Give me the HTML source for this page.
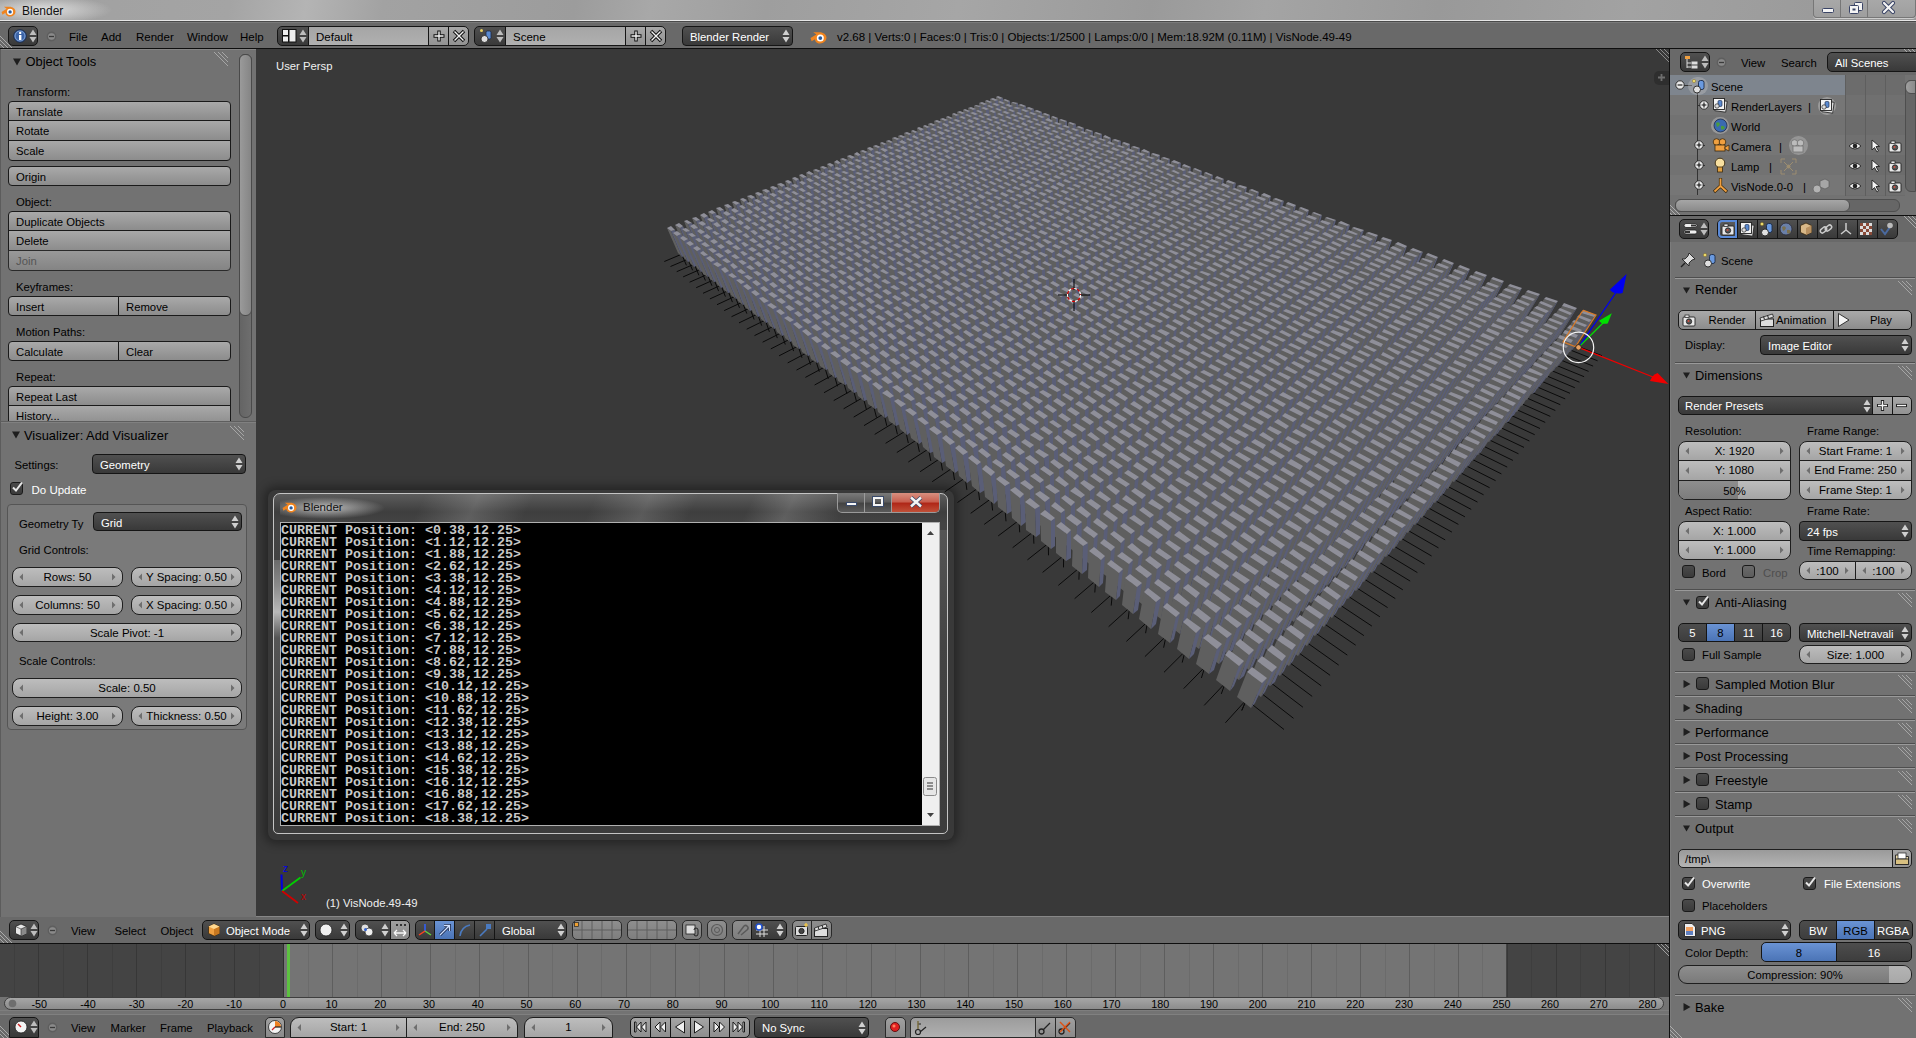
<!DOCTYPE html>
<html><head><meta charset="utf-8"><style>
html,body{margin:0;padding:0;width:1916px;height:1038px;overflow:hidden;background:#727272;}
body{position:relative;font-family:"Liberation Sans", sans-serif;}
div{position:absolute;}
.t{white-space:nowrap;line-height:1;}
body{-webkit-font-smoothing:antialiased;}
</style></head><body>
<div style="left:0px;top:0px;width:1916px;height:21px;background:linear-gradient(100deg,#a0a0a0 0%,#a4a4a4 12%,#b4b4b4 16%,#a2a2a2 20%,#9c9c9c 30%,#a8a8a8 34%,#9e9e9e 40%,#a6a6a6 50%,#9a9a9a 60%,#a4a4a4 66%,#999 75%,#a2a2a2 85%,#979797 100%);"></div>
<div style="left:0px;top:0px;width:140px;height:20px;background:radial-gradient(ellipse 70px 14px at 42px 10px,rgba(235,235,235,0.85),rgba(235,235,235,0) 100%);"></div>
<div style="left:0px;top:20px;width:1916px;height:1px;background:#e6e6e6;"></div>
<div style="left:0px;top:21px;width:1916px;height:1px;background:#4a4a4a;"></div>
<div style="left:0px;top:22px;width:1916px;height:1px;background:#7a7a7a;"></div>
<div style="left:0px;top:23px;width:1916px;height:25px;background:#696969;"></div>
<div style="left:0px;top:48px;width:1916px;height:1px;background:#0e0e0e;"></div>
<div style="left:0px;top:49px;width:256px;height:868px;background:#727272;"></div>
<div style="left:0px;top:49px;width:1px;height:868px;background:#5c5c5c;"></div>
<div style="left:256px;top:49px;width:1413px;height:868px;background:#393939;"></div>
<div style="left:1669px;top:49px;width:1px;height:989px;background:#101010;"></div>
<div style="left:1670px;top:49px;width:246px;height:989px;background:#727272;"></div>
<div style="left:0px;top:917px;width:1669px;height:26px;background:#696969;"></div>
<div style="left:0px;top:916px;width:1669px;height:1px;background:#878787;"></div>
<div style="left:0px;top:943px;width:1669px;height:1px;background:#0e0e0e;"></div>
<div style="left:0px;top:944px;width:1669px;height:53px;background:#747474;"></div>
<div style="left:0px;top:944px;width:284px;height:53px;background:#444;"></div>
<div style="left:1506px;top:944px;width:163px;height:53px;background:#444;"></div>
<div style="left:0px;top:1015px;width:1669px;height:23px;background:#696969;"></div>
<svg style="position:absolute;left:1px;top:4px" width="15" height="13" viewBox="0 0 16 14"><path d="M0.5 8.5 L6 5 L3 3 L8 3 C12 2.5 15.5 5 15.5 8 C15.5 11.5 12.5 13.5 9.5 13.5 C6.5 13.5 4.5 11.5 4.8 9.5 L1.5 11.5Z" fill="#f0841e"/><circle cx="9.7" cy="8.5" r="3.3" fill="#fff"/><circle cx="9.7" cy="8.5" r="1.8" fill="#2a5a9a"/></svg>
<div class="t" style="left:22px;top:4.84px;font-size:12px;color:#111;">Blender</div>
<div style="left:1813px;top:0px;width:103px;height:18px;box-sizing:border-box;border:1px solid #777;border-top:none;border-radius:0 0 4px 4px;background:linear-gradient(#a8a8a8,#9e9e9e);box-shadow:0 1px 0 rgba(255,255,255,0.5);"></div>
<div style="left:1840px;top:0px;width:1px;height:17px;background:#777;"></div>
<div style="left:1867px;top:0px;width:1px;height:17px;background:#777;"></div>
<svg style="position:absolute;left:1813px;top:0px" width="103" height="18"><rect x="9.5" y="8.5" width="11" height="4" rx="1" fill="#f4f4f4" stroke="#3a4466" stroke-width="1"/><rect x="41.5" y="2.5" width="8" height="8" rx="1" fill="#f4f4f4" stroke="#3a4466" stroke-width="1"/><rect x="36.5" y="5.5" width="9" height="8" rx="1" fill="#f4f4f4" stroke="#3a4466" stroke-width="1"/><rect x="39.5" y="8.5" width="3" height="2" fill="#3a4466"/><path d="M71 3 L80 12 M80 3 L71 12" stroke="#3a4466" stroke-width="4.2" stroke-linecap="round"/><path d="M71 3 L80 12 M80 3 L71 12" stroke="#f4f4f4" stroke-width="2.2" stroke-linecap="round"/></svg>
<div style="left:8px;top:26px;width:30px;height:20px;box-sizing:border-box;border:1px solid #151515;background:linear-gradient(#505050,#393939);border-radius:5px 5px 5px 5px;"></div>
<svg style="position:absolute;left:13px;top:29px" width="14" height="14"><circle cx="7" cy="7" r="6.3" fill="#3b63a6" stroke="#1b2b4a" stroke-width="1"/><circle cx="7" cy="7" r="5" fill="none" stroke="#8fb0e0" stroke-width="0.8"/><rect x="6" y="6" width="2.4" height="5" fill="#fff"/><circle cx="7.2" cy="3.9" r="1.2" fill="#fff"/></svg>
<svg style="position:absolute;left:29px;top:29px" width="8" height="14"><path d="M0.5 6 L4 0.5 L7.5 6Z M0.5 8 L4 13.5 L7.5 8Z" fill="#bdbdbd"/></svg>
<svg style="position:absolute;left:46px;top:31px" width="11" height="11"><circle cx="5.5" cy="5.5" r="4.3" fill="none" stroke="#5e5e5e" stroke-width="1.2"/><circle cx="5.5" cy="5.5" r="3.3" fill="#8a8a8a"/><path d="M3 5.5 H8" stroke="#3a3a3a" stroke-width="1.3"/></svg>
<div class="t" style="left:69px;top:32.27px;font-size:11.5px;color:#000;">File</div>
<div class="t" style="left:101px;top:32.27px;font-size:11.5px;color:#000;">Add</div>
<div class="t" style="left:136px;top:32.27px;font-size:11.5px;color:#000;">Render</div>
<div class="t" style="left:187px;top:32.27px;font-size:11.5px;color:#000;">Window</div>
<div class="t" style="left:240px;top:32.27px;font-size:11.5px;color:#000;">Help</div>
<div style="left:277px;top:26px;width:32px;height:20px;box-sizing:border-box;border:1px solid #151515;background:linear-gradient(#505050,#393939);border-radius:5px 0px 0px 5px;"></div>
<svg style="position:absolute;left:282px;top:29px" width="15" height="14"><rect x="0.5" y="0.5" width="6" height="6" fill="#eee" stroke="#111"/><rect x="0.5" y="7" width="6" height="6" fill="#eee" stroke="#111"/><rect x="7" y="0.5" width="7" height="12.5" fill="#eee" stroke="#111"/></svg>
<svg style="position:absolute;left:299px;top:29px" width="8" height="14"><path d="M0.5 6 L4 0.5 L7.5 6Z M0.5 8 L4 13.5 L7.5 8Z" fill="#bdbdbd"/></svg>
<div style="left:308px;top:26px;width:121px;height:20px;box-sizing:border-box;border:1px solid #151515;background:linear-gradient(#a5a5a5,#b0b0b0);border-radius:0px 0px 0px 0px;"></div>
<div class="t" style="left:316px;top:32.27px;font-size:11.5px;color:#000;">Default</div>
<div style="left:428px;top:26px;width:21px;height:20px;box-sizing:border-box;border:1px solid #151515;background:linear-gradient(#a8a8a8,#929292);border-radius:0px 0px 0px 0px;"></div>
<div style="left:448px;top:26px;width:21px;height:20px;box-sizing:border-box;border:1px solid #151515;background:linear-gradient(#a8a8a8,#929292);border-radius:0px 5px 5px 0px;"></div>
<svg style="position:absolute;left:432px;top:29px" width="14" height="14"><path d="M7 1.5 V12.5 M1.5 7 H12.5" stroke="#111" stroke-width="3.4"/><path d="M7 2.5 V11.5 M2.5 7 H11.5" stroke="#f4f4f4" stroke-width="1.4"/></svg>
<svg style="position:absolute;left:452px;top:29px" width="14" height="14"><path d="M2 2 L12 12 M12 2 L2 12" stroke="#111" stroke-width="3.4"/><path d="M2.5 2.5 L11.5 11.5 M11.5 2.5 L2.5 11.5" stroke="#f4f4f4" stroke-width="1.4"/></svg>
<div style="left:474px;top:26px;width:32px;height:20px;box-sizing:border-box;border:1px solid #151515;background:linear-gradient(#505050,#393939);border-radius:5px 0px 0px 5px;"></div>
<svg style="position:absolute;left:479px;top:28px" width="16" height="16"><circle cx="2.5" cy="2.5" r="1.5" fill="#e8d060"/><rect x="7" y="3" width="5" height="8" rx="1.5" fill="#5a8ad0" stroke="#1a2a4a" stroke-width="0.8"/><circle cx="5.5" cy="11" r="3.5" fill="#ddd" stroke="#222" stroke-width="0.8"/></svg>
<svg style="position:absolute;left:496px;top:29px" width="8" height="14"><path d="M0.5 6 L4 0.5 L7.5 6Z M0.5 8 L4 13.5 L7.5 8Z" fill="#bdbdbd"/></svg>
<div style="left:505px;top:26px;width:121px;height:20px;box-sizing:border-box;border:1px solid #151515;background:linear-gradient(#a5a5a5,#b0b0b0);border-radius:0px 0px 0px 0px;"></div>
<div class="t" style="left:513px;top:32.27px;font-size:11.5px;color:#000;">Scene</div>
<div style="left:625px;top:26px;width:21px;height:20px;box-sizing:border-box;border:1px solid #151515;background:linear-gradient(#a8a8a8,#929292);border-radius:0px 0px 0px 0px;"></div>
<div style="left:645px;top:26px;width:21px;height:20px;box-sizing:border-box;border:1px solid #151515;background:linear-gradient(#a8a8a8,#929292);border-radius:0px 5px 5px 0px;"></div>
<svg style="position:absolute;left:629px;top:29px" width="14" height="14"><path d="M7 1.5 V12.5 M1.5 7 H12.5" stroke="#111" stroke-width="3.4"/><path d="M7 2.5 V11.5 M2.5 7 H11.5" stroke="#f4f4f4" stroke-width="1.4"/></svg>
<svg style="position:absolute;left:649px;top:29px" width="14" height="14"><path d="M2 2 L12 12 M12 2 L2 12" stroke="#111" stroke-width="3.4"/><path d="M2.5 2.5 L11.5 11.5 M11.5 2.5 L2.5 11.5" stroke="#f4f4f4" stroke-width="1.4"/></svg>
<div style="left:682px;top:26px;width:111px;height:20px;box-sizing:border-box;border:1px solid #151515;background:linear-gradient(#505050,#393939);border-radius:4px 4px 4px 4px;"></div>
<div class="t" style="left:690px;top:32.43px;font-size:11.3px;color:#fff;">Blender Render</div>
<svg style="position:absolute;left:782px;top:29.0px" width="8" height="14"><path d="M0.5 6 L4 0.5 L7.5 6Z M0.5 8 L4 13.5 L7.5 8Z" fill="#d0d0d0"/></svg>
<svg style="position:absolute;left:810px;top:29px" width="17" height="15" viewBox="0 0 16 14"><path d="M0.5 8.5 L6 5 L3 3 L8 3 C12 2.5 15.5 5 15.5 8 C15.5 11.5 12.5 13.5 9.5 13.5 C6.5 13.5 4.5 11.5 4.8 9.5 L1.5 11.5Z" fill="#f0841e"/><circle cx="9.7" cy="8.5" r="3.3" fill="#fff"/><circle cx="9.7" cy="8.5" r="1.8" fill="#2a5a9a"/></svg>
<div class="t" style="left:837px;top:32.27px;font-size:11.5px;color:#000;">v2.68 | Verts:0 | Faces:0 | Tris:0 | Objects:1/2500 | Lamps:0/0 | Mem:18.92M (0.11M) | VisNode.49-49</div>
<svg style="position:absolute;left:0px;top:34px" width="14" height="14"><path d="M0 2 L12 14 M0 6 L8 14 M0 10 L4 14" stroke="#c8c8c8" stroke-width="1" opacity="0.7"/></svg>
<div style="left:1px;top:49px;width:255px;height:1px;background:#858585;"></div>
<svg style="position:absolute;left:13px;top:58px" width="8" height="8"><path d="M0 0.5 L8 0.5 L4.0 7.5Z" fill="#1e1e1e"/></svg>
<div class="t" style="left:25.5px;top:56.08px;font-size:12.9px;color:#000;">Object Tools</div>
<svg style="position:absolute;left:214px;top:52px" width="15" height="15"><path d="M0 0 L14 14" stroke="rgba(210,210,210,0.55)" stroke-width="1"/><path d="M4 0 L14 10" stroke="rgba(210,210,210,0.55)" stroke-width="1"/><path d="M8 0 L14 6" stroke="rgba(210,210,210,0.55)" stroke-width="1"/></svg>
<div class="t" style="left:16px;top:87.43px;font-size:11.3px;color:#000;">Transform:</div>
<div style="left:8px;top:101px;width:223px;height:20px;box-sizing:border-box;border:1px solid #1a1a1a;background:linear-gradient(#a9a9a9,#8c8c8c);border-radius:4px 4px 0px 0px;"></div>
<div class="t" style="left:16px;top:107.43px;font-size:11.3px;color:#000;">Translate</div>
<div style="left:8px;top:120px;width:223px;height:21px;box-sizing:border-box;border:1px solid #1a1a1a;background:linear-gradient(#a9a9a9,#8c8c8c);border-radius:0px 0px 0px 0px;"></div>
<div class="t" style="left:16px;top:126.43px;font-size:11.3px;color:#000;">Rotate</div>
<div style="left:8px;top:140px;width:223px;height:21px;box-sizing:border-box;border:1px solid #1a1a1a;background:linear-gradient(#a9a9a9,#8c8c8c);border-radius:0px 0px 4px 4px;"></div>
<div class="t" style="left:16px;top:146.43px;font-size:11.3px;color:#000;">Scale</div>
<div style="left:8px;top:166px;width:223px;height:20px;box-sizing:border-box;border:1px solid #1a1a1a;background:linear-gradient(#a9a9a9,#8c8c8c);border-radius:4px 4px 4px 4px;"></div>
<div class="t" style="left:16px;top:172.43px;font-size:11.3px;color:#000;">Origin</div>
<div class="t" style="left:16px;top:197.43px;font-size:11.3px;color:#000;">Object:</div>
<div style="left:8px;top:211px;width:223px;height:20px;box-sizing:border-box;border:1px solid #1a1a1a;background:linear-gradient(#a9a9a9,#8c8c8c);border-radius:4px 4px 0px 0px;"></div>
<div class="t" style="left:16px;top:217.43px;font-size:11.3px;color:#000;">Duplicate Objects</div>
<div style="left:8px;top:230px;width:223px;height:21px;box-sizing:border-box;border:1px solid #1a1a1a;background:linear-gradient(#a9a9a9,#8c8c8c);border-radius:0px 0px 0px 0px;"></div>
<div class="t" style="left:16px;top:236.43px;font-size:11.3px;color:#000;">Delete</div>
<div style="left:8px;top:250px;width:223px;height:21px;box-sizing:border-box;border:1px solid #2a2a2a;background:linear-gradient(#999,#848484);border-radius:0px 0px 4px 4px;"></div>
<div class="t" style="left:16px;top:256.43px;font-size:11.3px;color:#555;">Join</div>
<div class="t" style="left:16px;top:282.43px;font-size:11.3px;color:#000;">Keyframes:</div>
<div style="left:8px;top:296px;width:111px;height:20px;box-sizing:border-box;border:1px solid #1a1a1a;background:linear-gradient(#a9a9a9,#8c8c8c);border-radius:4px 0px 0px 4px;"></div>
<div class="t" style="left:16px;top:302.43px;font-size:11.3px;color:#000;">Insert</div>
<div style="left:118px;top:296px;width:113px;height:20px;box-sizing:border-box;border:1px solid #1a1a1a;background:linear-gradient(#a9a9a9,#8c8c8c);border-radius:0px 4px 4px 0px;"></div>
<div class="t" style="left:126px;top:302.43px;font-size:11.3px;color:#000;">Remove</div>
<div class="t" style="left:16px;top:327.43px;font-size:11.3px;color:#000;">Motion Paths:</div>
<div style="left:8px;top:341px;width:111px;height:20px;box-sizing:border-box;border:1px solid #1a1a1a;background:linear-gradient(#a9a9a9,#8c8c8c);border-radius:4px 0px 0px 4px;"></div>
<div class="t" style="left:16px;top:347.43px;font-size:11.3px;color:#000;">Calculate</div>
<div style="left:118px;top:341px;width:113px;height:20px;box-sizing:border-box;border:1px solid #1a1a1a;background:linear-gradient(#a9a9a9,#8c8c8c);border-radius:0px 4px 4px 0px;"></div>
<div class="t" style="left:126px;top:347.43px;font-size:11.3px;color:#000;">Clear</div>
<div class="t" style="left:16px;top:372.43px;font-size:11.3px;color:#000;">Repeat:</div>
<div style="left:8px;top:386px;width:223px;height:20px;box-sizing:border-box;border:1px solid #1a1a1a;background:linear-gradient(#a9a9a9,#8c8c8c);border-radius:4px 4px 0px 0px;"></div>
<div class="t" style="left:16px;top:392.43px;font-size:11.3px;color:#000;">Repeat Last</div>
<div style="left:8px;top:405px;width:223px;height:21px;box-sizing:border-box;border:1px solid #1a1a1a;background:linear-gradient(#a9a9a9,#8c8c8c);border-radius:0px 0px 0px 0px;"></div>
<div class="t" style="left:16px;top:411.43px;font-size:11.3px;color:#000;">History...</div>
<div style="left:239px;top:54px;width:13px;height:364px;box-sizing:border-box;border:1px solid #4a4a4a;border-radius:6px;background:linear-gradient(90deg,#646464,#6e6e6e);"></div>
<div style="left:239px;top:54px;width:13px;height:262px;box-sizing:border-box;border:1px solid #4a4a4a;border-radius:6px;background:linear-gradient(90deg,#9a9a9a,#858585);"></div>
<div style="left:0px;top:422px;width:256px;height:495px;background:#727272;"></div>
<div style="left:0px;top:421px;width:256px;height:1px;background:#5e5e5e;"></div>
<div style="left:1px;top:422px;width:255px;height:1px;background:#808080;"></div>
<div style="left:0px;top:422px;width:1px;height:495px;background:#5c5c5c;"></div>
<svg style="position:absolute;left:12px;top:431px" width="8" height="8"><path d="M0 0.5 L8 0.5 L4.0 7.5Z" fill="#1e1e1e"/></svg>
<div class="t" style="left:24px;top:430.08px;font-size:12.9px;color:#000;">Visualizer: Add Visualizer</div>
<svg style="position:absolute;left:230px;top:426px" width="15" height="15"><path d="M0 0 L14 14" stroke="rgba(210,210,210,0.55)" stroke-width="1"/><path d="M4 0 L14 10" stroke="rgba(210,210,210,0.55)" stroke-width="1"/><path d="M8 0 L14 6" stroke="rgba(210,210,210,0.55)" stroke-width="1"/></svg>
<div class="t" style="left:14.5px;top:460.43px;font-size:11.3px;color:#000;">Settings:</div>
<div style="left:92px;top:454px;width:154px;height:20px;box-sizing:border-box;border:1px solid #151515;background:linear-gradient(#505050,#393939);border-radius:4px 4px 4px 4px;"></div>
<div class="t" style="left:100px;top:460.43px;font-size:11.3px;color:#fff;">Geometry</div>
<svg style="position:absolute;left:235px;top:457.0px" width="8" height="14"><path d="M0.5 6 L4 0.5 L7.5 6Z M0.5 8 L4 13.5 L7.5 8Z" fill="#d0d0d0"/></svg>
<div style="left:10px;top:482px;width:13px;height:13px;box-sizing:border-box;border:1px solid #1a1a1a;border-radius:3px;background:linear-gradient(#4a4a4a,#3a3a3a);"></div>
<svg style="position:absolute;left:10px;top:480px" width="15" height="15"><path d="M3 7.5 L6 10.5 L12 2.5" stroke="#e8e8e8" stroke-width="2" fill="none"/></svg>
<div class="t" style="left:31.5px;top:485.27px;font-size:11.5px;color:#fff;">Do Update</div>
<div style="left:7px;top:504px;width:240px;height:226px;box-sizing:border-box;border:1px solid #555;border-radius:4px;background:#7a7a7a;"></div>
<div class="t" style="left:19px;top:518.93px;font-size:11.3px;color:#000;">Geometry Ty</div>
<div style="left:93px;top:512px;width:149px;height:19px;box-sizing:border-box;border:1px solid #151515;background:linear-gradient(#505050,#393939);border-radius:4px 4px 4px 4px;"></div>
<div class="t" style="left:101px;top:518.43px;font-size:11.3px;color:#fff;">Grid</div>
<svg style="position:absolute;left:231px;top:514.5px" width="8" height="14"><path d="M0.5 6 L4 0.5 L7.5 6Z M0.5 8 L4 13.5 L7.5 8Z" fill="#d0d0d0"/></svg>
<div class="t" style="left:19px;top:545.43px;font-size:11.3px;color:#000;">Grid Controls:</div>
<div style="left:12px;top:567px;width:111px;height:20px;box-sizing:border-box;border:1px solid #1e1e1e;background:linear-gradient(#bdbdbd,#a5a5a5);border-radius:8px 8px 8px 8px;"></div>
<svg style="position:absolute;left:12px;top:567px" width="111" height="20"><path d="M11 6.5 L7.5 10.0 L11 13.5Z M100 6.5 L103.5 10.0 L100 13.5Z" fill="#6e6e6e"/></svg>
<div class="t" style="left:12px;width:111px;text-align:center;top:572.27px;font-size:11.5px;color:#000;">Rows: 50</div>
<div style="left:131px;top:567px;width:111px;height:20px;box-sizing:border-box;border:1px solid #1e1e1e;background:linear-gradient(#bdbdbd,#a5a5a5);border-radius:8px 8px 8px 8px;"></div>
<svg style="position:absolute;left:131px;top:567px" width="111" height="20"><path d="M11 6.5 L7.5 10.0 L11 13.5Z M100 6.5 L103.5 10.0 L100 13.5Z" fill="#6e6e6e"/></svg>
<div class="t" style="left:131px;width:111px;text-align:center;top:572.27px;font-size:11.5px;color:#000;">Y Spacing: 0.50</div>
<div style="left:12px;top:595px;width:111px;height:20px;box-sizing:border-box;border:1px solid #1e1e1e;background:linear-gradient(#bdbdbd,#a5a5a5);border-radius:8px 8px 8px 8px;"></div>
<svg style="position:absolute;left:12px;top:595px" width="111" height="20"><path d="M11 6.5 L7.5 10.0 L11 13.5Z M100 6.5 L103.5 10.0 L100 13.5Z" fill="#6e6e6e"/></svg>
<div class="t" style="left:12px;width:111px;text-align:center;top:600.27px;font-size:11.5px;color:#000;">Columns: 50</div>
<div style="left:131px;top:595px;width:111px;height:20px;box-sizing:border-box;border:1px solid #1e1e1e;background:linear-gradient(#bdbdbd,#a5a5a5);border-radius:8px 8px 8px 8px;"></div>
<svg style="position:absolute;left:131px;top:595px" width="111" height="20"><path d="M11 6.5 L7.5 10.0 L11 13.5Z M100 6.5 L103.5 10.0 L100 13.5Z" fill="#6e6e6e"/></svg>
<div class="t" style="left:131px;width:111px;text-align:center;top:600.27px;font-size:11.5px;color:#000;">X Spacing: 0.50</div>
<div style="left:12px;top:623px;width:230px;height:19px;box-sizing:border-box;border:1px solid #1e1e1e;background:linear-gradient(#bdbdbd,#a5a5a5);border-radius:8px 8px 8px 8px;"></div>
<svg style="position:absolute;left:12px;top:623px" width="230" height="19"><path d="M11 6.0 L7.5 9.5 L11 13.0Z M219 6.0 L222.5 9.5 L219 13.0Z" fill="#6e6e6e"/></svg>
<div class="t" style="left:12px;width:230px;text-align:center;top:628.27px;font-size:11.5px;color:#000;">Scale Pivot: -1</div>
<div class="t" style="left:19px;top:656.43px;font-size:11.3px;color:#000;">Scale Controls:</div>
<div style="left:12px;top:678px;width:230px;height:20px;box-sizing:border-box;border:1px solid #1e1e1e;background:linear-gradient(#bdbdbd,#a5a5a5);border-radius:8px 8px 8px 8px;"></div>
<svg style="position:absolute;left:12px;top:678px" width="230" height="20"><path d="M11 6.5 L7.5 10.0 L11 13.5Z M219 6.5 L222.5 10.0 L219 13.5Z" fill="#6e6e6e"/></svg>
<div class="t" style="left:12px;width:230px;text-align:center;top:683.27px;font-size:11.5px;color:#000;">Scale: 0.50</div>
<div style="left:12px;top:706px;width:111px;height:20px;box-sizing:border-box;border:1px solid #1e1e1e;background:linear-gradient(#bdbdbd,#a5a5a5);border-radius:8px 8px 8px 8px;"></div>
<svg style="position:absolute;left:12px;top:706px" width="111" height="20"><path d="M11 6.5 L7.5 10.0 L11 13.5Z M100 6.5 L103.5 10.0 L100 13.5Z" fill="#6e6e6e"/></svg>
<div class="t" style="left:12px;width:111px;text-align:center;top:711.27px;font-size:11.5px;color:#000;">Height: 3.00</div>
<div style="left:131px;top:706px;width:111px;height:20px;box-sizing:border-box;border:1px solid #1e1e1e;background:linear-gradient(#bdbdbd,#a5a5a5);border-radius:8px 8px 8px 8px;"></div>
<svg style="position:absolute;left:131px;top:706px" width="111" height="20"><path d="M11 6.5 L7.5 10.0 L11 13.5Z M100 6.5 L103.5 10.0 L100 13.5Z" fill="#6e6e6e"/></svg>
<div class="t" style="left:131px;width:111px;text-align:center;top:711.27px;font-size:11.5px;color:#000;">Thickness: 0.50</div>
<svg style="position:absolute;left:256px;top:49px;" width="1413" height="868" viewBox="0 0 1413 868"><style>.gm{fill:#5f5f5f}.gb{fill:#5a5e77}.gt{fill:#8f8f99}</style><path d="M425.7 205.2L408.3 212.5M425.7 205.2L430.4 216.3M1314.0 294.2L1346.0 306.7M1314.0 294.2L1305.8 306.9M431.9 210.1L414.5 217.5M431.9 210.1L436.6 221.3M1309.5 299.1L1341.6 311.8M1309.5 299.1L1301.3 311.9M438.3 215.1L420.7 222.7M438.3 215.1L442.9 226.3M1304.9 304.2L1337.1 317.1M1304.9 304.2L1296.8 316.9M444.7 220.2L427.1 227.9M444.7 220.2L449.4 231.5M1300.3 309.2L1332.6 322.4M1300.3 309.2L1292.2 322.0M451.4 225.4L433.6 233.2M451.4 225.4L455.9 236.7M1295.6 314.4L1328.1 327.7M1295.6 314.4L1287.5 327.2M458.1 230.7L440.2 238.7M458.1 230.7L462.6 242.1M1290.8 319.6L1323.5 333.2M1290.8 319.6L1282.8 332.4M465.0 236.2L447.0 244.3M465.0 236.2L469.4 247.6M1286.0 324.9L1318.8 338.7M1286.0 324.9L1278.0 337.7M472.0 241.7L453.9 249.9M472.0 241.7L476.4 253.1M1281.1 330.3L1314.0 344.3M1281.1 330.3L1273.2 343.1M479.1 247.3L461.0 255.7M479.1 247.3L483.5 258.8M1276.2 335.8L1309.2 349.9M1276.2 335.8L1268.2 348.6M486.4 253.1L468.2 261.6M486.4 253.1L490.8 264.6M1271.2 341.3L1304.3 355.7M1271.2 341.3L1263.2 354.1M493.9 259.0L475.5 267.7M493.9 259.0L498.1 270.5M1266.1 346.9L1299.3 361.5M1266.1 346.9L1258.2 359.7M501.5 265.0L483.0 273.9M501.5 265.0L505.7 276.6M1260.9 352.6L1294.3 367.4M1260.9 352.6L1253.0 365.4M509.3 271.1L490.7 280.2M509.3 271.1L513.4 282.8M1255.7 358.4L1289.2 373.4M1255.7 358.4L1247.8 371.1M517.2 277.4L498.5 286.6M517.2 277.4L521.3 289.1M1250.4 364.2L1284.0 379.5M1250.4 364.2L1242.6 377.0M525.3 283.8L506.6 293.2M525.3 283.8L529.3 295.5M1245.0 370.1L1278.7 385.7M1245.0 370.1L1237.2 382.9M533.6 290.3L514.8 299.9M533.6 290.3L537.6 302.1M1239.5 376.2L1273.4 392.0M1239.5 376.2L1231.8 388.9M542.1 297.0L523.1 306.8M542.1 297.0L546.0 308.8M1234.0 382.3L1268.0 398.4M1234.0 382.3L1226.3 395.0M550.8 303.8L531.7 313.9M550.8 303.8L554.5 315.7M1228.3 388.5L1262.5 404.8M1228.3 388.5L1220.7 401.2M559.6 310.8L540.5 321.1M559.6 310.8L563.3 322.7M1222.6 394.8L1256.9 411.4M1222.6 394.8L1215.0 407.5M568.7 318.0L549.4 328.4M568.7 318.0L572.3 329.9M1216.8 401.2L1251.2 418.1M1216.8 401.2L1209.3 413.9M578.0 325.3L558.6 336.0M578.0 325.3L581.5 337.3M1210.9 407.7L1245.4 424.9M1210.9 407.7L1203.4 420.3M587.5 332.8L568.0 343.7M587.5 332.8L590.9 344.8M1205.0 414.2L1239.6 431.7M1205.0 414.2L1197.5 426.9M597.3 340.5L577.7 351.6M597.3 340.5L600.5 352.5M1198.9 420.9L1233.6 438.7M1198.9 420.9L1191.5 433.6M607.2 348.4L587.6 359.8M607.2 348.4L610.4 360.4M1192.7 427.7L1227.6 445.8M1192.7 427.7L1185.4 440.3M617.4 356.4L597.7 368.1M617.4 356.4L620.5 368.5M1186.5 434.6L1221.5 453.1M1186.5 434.6L1179.2 447.2M627.9 364.7L608.0 376.6M627.9 364.7L630.8 376.8M1180.1 441.6L1215.2 460.4M1180.1 441.6L1172.9 454.2M638.6 373.2L618.7 385.4M638.6 373.2L641.4 385.3M1173.6 448.7L1208.9 467.8M1173.6 448.7L1166.5 461.3M649.7 381.9L629.6 394.3M649.7 381.9L652.3 394.0M1167.1 456.0L1202.4 475.4M1167.1 456.0L1160.0 468.5M660.9 390.8L640.8 403.5M660.9 390.8L663.4 402.9M1160.4 463.3L1195.9 483.1M1160.4 463.3L1153.4 475.8M672.5 399.9L652.3 413.0M672.5 399.9L674.8 412.0M1153.6 470.8L1189.2 490.9M1153.6 470.8L1146.7 483.2M684.4 409.3L664.1 422.7M684.4 409.3L686.5 421.4M1146.7 478.4L1182.5 498.9M1146.7 478.4L1139.8 490.8M696.6 418.9L676.2 432.7M696.6 418.9L698.5 431.0M1139.7 486.1L1175.6 507.0M1139.7 486.1L1132.9 498.4M709.2 428.8L688.7 442.9M709.2 428.8L710.9 440.9M1132.6 494.0L1168.6 515.2M1132.6 494.0L1125.9 506.2M722.1 439.0L701.5 453.5M722.1 439.0L723.6 451.1M1125.4 501.9L1161.4 523.6M1125.4 501.9L1118.7 514.1M735.3 449.5L714.7 464.3M735.3 449.5L736.6 461.5M1118.0 510.1L1154.2 532.1M1118.0 510.1L1111.5 522.2M749.0 460.2L728.2 475.4M749.0 460.2L750.0 472.3M1110.5 518.3L1146.8 540.8M1110.5 518.3L1104.1 530.4M763.0 471.3L742.2 486.9M763.0 471.3L763.7 483.3M1102.9 526.7L1139.3 549.6M1102.9 526.7L1096.5 538.7M777.4 482.7L756.6 498.7M777.4 482.7L777.9 494.7M1095.1 535.3L1131.6 558.6M1095.1 535.3L1088.9 547.2M792.3 494.4L771.4 510.9M792.3 494.4L792.5 506.3M1087.2 544.0L1123.9 567.8M1087.2 544.0L1081.1 555.8M807.6 506.5L786.6 523.4M807.6 506.5L807.5 518.4M1079.2 552.8L1115.9 577.1M1079.2 552.8L1073.2 564.6M823.3 518.9L802.3 536.4M823.3 518.9L822.9 530.7M1071.0 561.8L1107.9 586.6M1071.0 561.8L1065.1 573.5M839.6 531.8L818.6 549.7M839.6 531.8L838.8 543.5M1062.7 571.0L1099.7 596.2M1062.7 571.0L1057.0 582.6M856.3 545.0L835.3 563.5M856.3 545.0L855.2 556.6M1054.2 580.3L1091.3 606.1M1054.2 580.3L1048.6 591.8M873.6 558.7L852.6 577.7M873.6 558.7L872.1 570.2M1045.6 589.8L1082.7 616.1M1045.6 589.8L1040.1 601.2M891.5 572.8L870.4 592.4M891.5 572.8L889.6 584.2M1036.8 599.5L1074.1 626.3M1036.8 599.5L1031.5 610.8M910.0 587.3L888.9 607.6M910.0 587.3L907.6 598.7M1027.8 609.4L1065.2 636.8M1027.8 609.4L1022.7 620.6M929.0 602.4L908.0 623.3M929.0 602.4L926.2 613.6M1018.7 619.4L1056.2 647.4M1018.7 619.4L1013.7 630.5M948.8 618.0L927.7 639.6M948.8 618.0L945.4 629.0M1009.4 629.7L1046.9 658.2M1009.4 629.7L1004.6 640.6M969.2 634.1L948.2 656.4M969.2 634.1L965.3 644.9M999.9 640.1L1037.5 669.3M999.9 640.1L995.3 650.9M990.3 650.8L969.4 673.8M990.3 650.8L985.8 661.4M990.3 650.8L1028.0 680.5M990.3 650.8L985.8 661.4" stroke="#0a0a0a" stroke-width="1" fill="none"/><path class="gm" d="M740 48l4 2 2 23 -5-2z"/><path class="gb" d="M747 49l-3 1 2 23 2-1z"/><path class="gt" d="M742 47l5 2 -3 1 -4-2z"/><path class="gm" d="M734 50l5 2 2 23 -5-2zM747 51l5 2 1 23 -5-2z"/><path class="gb" d="M742 51l-3 1 2 23 2-1zM754 52l-2 1 1 23 3-1z"/><path class="gt" d="M737 49l5 2 -3 1 -5-2zM749 50l5 2 -2 1 -5-2z"/><path class="gm" d="M729 52l5 2 1 23 -4-2zM742 53l5 2 1 23 -5-2zM755 54l5 1 1 24 -5-2z"/><path class="gb" d="M736 53l-2 1 1 23 3-1zM749 54l-2 1 1 23 2-1zM762 54l-2 1 1 24 2-1z"/><path class="gt" d="M731 51l5 2 -2 1 -5-2zM744 52l5 2 -2 1 -5-2zM757 53l5 1 -2 1 -5-1z"/><path class="gm" d="M723 54l5 2 2 23 -5-1zM736 55l5 2 2 23 -5-2zM749 56l5 2 1 23 -4-2zM762 56l6 2 0 24 -5-2z"/><path class="gb" d="M731 55l-3 1 2 23 2-1zM744 56l-3 1 2 23 2-1zM757 57l-3 1 1 23 3-1zM770 57l-2 1 0 24 3-1z"/><path class="gt" d="M726 53l5 2 -3 1 -5-2zM739 54l5 2 -3 1 -5-2zM752 55l5 2 -3 1 -5-2zM765 55l5 2 -2 1 -6-2z"/><path class="gm" d="M718 57l5 1 2 24 -5-2zM731 57l5 2 1 23 -4-2zM744 58l5 2 1 23 -5-2zM757 59l5 1 1 24 -5-2zM770 59l5 2 1 24 -5-2z"/><path class="gb" d="M725 57l-2 1 2 24 2-1zM738 58l-2 1 1 23 3-1zM751 59l-2 1 1 23 3-1zM765 59l-3 1 1 24 2-1zM778 60l-3 1 1 24 2-1z"/><path class="gt" d="M720 56l5 1 -2 1 -5-1zM733 56l5 2 -2 1 -5-2zM746 57l5 2 -2 1 -5-2zM760 58l5 1 -3 1 -5-1zM773 58l5 2 -3 1 -5-2z"/><path class="gm" d="M712 59l5 2 2 23 -4-2zM725 59l5 2 2 24 -5-2zM739 60l5 2 1 23 -5-1zM752 61l5 2 1 23 -5-2zM765 61l5 2 1 24 -5-2zM778 62l6 2 0 24 -5-2z"/><path class="gb" d="M720 60l-3 1 2 23 3-1zM733 60l-3 1 2 24 2-1zM746 61l-2 1 1 23 2-1zM759 62l-2 1 1 23 2-1zM773 62l-3 1 1 24 2-1zM786 63l-2 1 0 24 2-1z"/><path class="gt" d="M715 58l5 2 -3 1 -5-2zM728 58l5 2 -3 1 -5-2zM741 59l5 2 -2 1 -5-2zM754 60l5 2 -2 1 -5-2zM767 60l6 2 -3 1 -5-2zM781 61l5 2 -2 1 -6-2z"/><path class="gm" d="M707 61l5 2 2 23 -5-2zM720 62l5 2 2 23 -5-2zM733 62l5 2 1 24 -4-2zM746 63l5 2 1 24 -4-2zM760 64l5 2 1 23 -5-2zM773 64l5 2 1 24 -5-2zM786 65l6 2 0 24 -5-2z"/><path class="gb" d="M714 62l-2 1 2 23 2-1zM727 63l-2 1 2 23 2-1zM740 63l-2 1 1 24 3-1zM754 64l-3 1 1 24 3-1zM767 65l-2 1 1 23 2-1zM781 65l-3 1 1 24 2-1zM794 66l-2 1 0 24 2-1z"/><path class="gt" d="M709 60l5 2 -2 1 -5-2zM722 61l5 2 -2 1 -5-2zM736 61l4 2 -2 1 -5-2zM749 62l5 2 -3 1 -5-2zM762 63l5 2 -2 1 -5-2zM775 63l6 2 -3 1 -5-2zM789 64l5 2 -2 1 -6-2z"/><path class="gm" d="M701 63l5 2 2 24 -4-2zM714 64l5 2 2 23 -5-2zM727 65l5 2 2 23 -5-2zM741 65l5 2 1 24 -5-2zM754 66l5 2 1 24 -5-2zM767 67l6 2 0 24 -5-3zM781 67l5 2 1 24 -5-2zM795 68l5 2 0 24 -5-2z"/><path class="gb" d="M709 64l-3 1 2 24 3-1zM722 65l-3 1 2 23 3-1zM735 66l-3 1 2 23 3-1zM748 66l-2 1 1 24 3-1zM762 67l-3 1 1 24 3-1zM775 68l-2 1 0 24 3-2zM789 68l-3 1 1 24 2-1zM802 69l-2 1 0 24 2-1z"/><path class="gt" d="M704 62l5 2 -3 1 -5-2zM717 63l5 2 -3 1 -5-2zM730 64l5 2 -3 1 -5-2zM743 64l5 2 -2 1 -5-2zM757 65l5 2 -3 1 -5-2zM770 66l5 2 -2 1 -6-2zM783 66l6 2 -3 1 -5-2zM797 67l5 2 -2 1 -5-2z"/><path class="gm" d="M696 65l4 2 3 24 -5-2zM709 66l5 2 2 24 -5-2zM722 67l5 2 2 23 -5-2zM735 68l5 2 2 23 -5-2zM749 68l5 2 1 24 -5-2zM762 69l5 2 1 24 -5-2zM776 70l5 2 0 24 -5-2zM789 71l6 2 0 24 -5-3zM803 71l6 2 -1 24 -5-2z"/><path class="gb" d="M703 66l-3 1 3 24 2-1zM716 67l-2 1 2 24 2-1zM729 68l-2 1 2 23 2-1zM743 69l-3 1 2 23 2-1zM756 69l-2 1 1 24 2-1zM770 70l-3 1 1 24 2-1zM783 71l-2 1 0 24 3-1zM797 72l-2 1 0 24 2-2zM811 72l-2 1 -1 24 3-1z"/><path class="gt" d="M698 64l5 2 -3 1 -4-2zM711 65l5 2 -2 1 -5-2zM724 66l5 2 -2 1 -5-2zM738 67l5 2 -3 1 -5-2zM751 67l5 2 -2 1 -5-2zM764 68l6 2 -3 1 -5-2zM778 69l5 2 -2 1 -5-2zM792 69l5 3 -2 1 -6-2zM805 70l6 2 -2 1 -6-2z"/><path class="gm" d="M690 68l5 2 2 23 -5-2zM703 68l5 2 2 24 -5-2zM716 69l5 2 2 24 -5-2zM730 70l5 2 1 24 -5-2zM743 71l5 2 1 23 -5-2zM756 71l6 2 1 24 -5-2zM770 72l5 2 1 24 -5-2zM784 73l5 2 1 24 -6-2zM798 74l5 2 0 24 -5-2zM812 74l5 2 0 25 -6-2z"/><path class="gb" d="M697 69l-2 1 2 23 3-1zM710 69l-2 1 2 24 3-1zM724 70l-3 1 2 24 3-1zM737 71l-2 1 1 24 3-1zM751 72l-3 1 1 23 3-1zM764 72l-2 1 1 24 2-1zM778 73l-3 1 1 24 2-1zM792 74l-3 1 1 24 2-1zM806 75l-3 1 0 24 3-1zM820 75l-3 1 0 25 2-1z"/><path class="gt" d="M692 67l5 2 -2 1 -5-2zM706 67l4 2 -2 1 -5-2zM719 68l5 2 -3 1 -5-2zM732 69l5 2 -2 1 -5-2zM745 70l6 2 -3 1 -5-2zM759 70l5 2 -2 1 -6-2zM773 71l5 2 -3 1 -5-2zM786 72l6 2 -3 1 -5-2zM800 73l6 2 -3 1 -5-2zM814 73l6 2 -3 1 -5-2z"/><path class="gm" d="M684 70l5 2 3 24 -5-2zM697 71l5 2 3 23 -5-2zM711 72l5 2 2 23 -5-2zM724 72l5 2 2 24 -5-2zM737 73l6 2 1 24 -5-2zM751 74l5 2 1 24 -5-2zM765 75l5 2 1 24 -6-3zM778 75l6 2 0 24 -5-2zM792 76l6 2 0 24 -6-2zM806 77l6 2 0 24 -6-2zM820 78l6 2 -1 24 -5-2z"/><path class="gb" d="M692 71l-3 1 3 24 2-1zM705 72l-3 1 3 23 2-1zM718 72l-2 2 2 23 2-1zM732 73l-3 1 2 24 2-1zM745 74l-2 1 1 24 2-1zM759 75l-3 1 1 24 3-1zM772 76l-2 1 1 24 2-2zM786 76l-2 1 0 24 3-1zM800 77l-2 1 0 24 2-1zM814 78l-2 1 0 24 2-1zM828 79l-2 1 -1 24 3-1z"/><path class="gt" d="M687 69l5 2 -3 1 -5-2zM700 70l5 2 -3 1 -5-2zM713 70l5 2 -2 2 -5-2zM726 71l6 2 -3 1 -5-2zM740 72l5 2 -2 1 -6-2zM753 73l6 2 -3 1 -5-2zM767 73l5 3 -2 1 -5-2zM781 74l5 2 -2 1 -6-2zM795 75l5 2 -2 1 -6-2zM809 76l5 2 -2 1 -6-2zM823 77l5 2 -2 1 -6-2z"/><path class="gm" d="M678 72l5 2 3 24 -5-2zM692 73l4 2 3 24 -5-2zM705 74l5 2 2 24 -5-2zM718 75l5 2 2 24 -5-3zM732 75l5 2 1 24 -5-2zM745 76l6 2 1 24 -5-2zM759 77l5 2 1 24 -5-2zM773 78l5 2 1 24 -6-2zM787 78l5 3 0 24 -5-2zM801 79l5 2 0 25 -5-3zM815 80l5 2 0 25 -5-3zM829 81l6 2 -1 24 -6-2z"/><path class="gb" d="M686 73l-3 1 3 24 2-1zM699 74l-3 1 3 24 2-1zM712 75l-2 1 2 24 2-1zM726 76l-3 1 2 24 3-2zM739 76l-2 1 1 24 3-1zM753 77l-2 1 1 24 2-1zM767 78l-3 1 1 24 3-1zM781 79l-3 1 1 24 2-1zM795 79l-3 2 0 24 3-1zM809 80l-3 1 0 25 3-1zM823 81l-3 1 0 25 2-2zM837 82l-2 1 -1 24 2-1z"/><path class="gt" d="M681 71l5 2 -3 1 -5-2zM694 72l5 2 -3 1 -4-2zM707 73l5 2 -2 1 -5-2zM721 74l5 2 -3 1 -5-2zM734 74l5 2 -2 1 -5-2zM748 75l5 2 -2 1 -6-2zM762 76l5 2 -3 1 -5-2zM775 77l6 2 -3 1 -5-2zM789 77l6 2 -3 2 -5-3zM803 78l6 2 -3 1 -5-2zM817 79l6 2 -3 1 -5-2zM831 80l6 2 -2 1 -6-2z"/><path class="gm" d="M672 75l5 2 3 23 -5-2zM686 75l5 3 2 23 -5-2zM699 76l5 2 2 24 -5-2zM712 77l5 2 2 24 -4-2zM726 78l5 2 2 24 -5-2zM740 79l5 2 1 24 -5-2zM753 79l6 2 1 25 -5-3zM767 80l6 2 0 24 -5-2zM781 81l6 2 0 24 -5-2zM795 82l6 2 0 24 -6-2zM809 83l6 2 0 24 -6-2zM824 83l5 2 0 25 -6-2zM838 84l6 2 -1 25 -6-2z"/><path class="gb" d="M680 76l-3 1 3 23 3-1zM693 76l-2 2 2 23 3-1zM707 77l-3 1 2 24 3-1zM720 78l-3 1 2 24 3-1zM734 79l-3 1 2 24 2-1zM747 80l-2 1 1 24 3-1zM761 80l-2 1 1 25 2-2zM775 81l-2 1 0 24 3-1zM789 82l-2 1 0 24 2-1zM803 83l-2 1 0 24 2-1zM817 84l-2 1 0 24 2-1zM832 84l-3 1 0 25 2-1zM846 85l-2 1 -1 25 2-1z"/><path class="gt" d="M675 74l5 2 -3 1 -5-2zM688 74l5 2 -2 2 -5-3zM702 75l5 2 -3 1 -5-2zM715 76l5 2 -3 1 -5-2zM729 77l5 2 -3 1 -5-2zM742 77l5 3 -2 1 -5-2zM756 78l5 2 -2 1 -6-2zM770 79l5 2 -2 1 -6-2zM784 80l5 2 -2 1 -6-2zM798 81l5 2 -2 1 -6-2zM812 81l5 3 -2 1 -6-2zM826 82l6 2 -3 1 -5-2zM840 83l6 2 -2 1 -6-2z"/><path class="gm" d="M667 77l4 2 3 24 -4-2zM680 78l5 2 2 24 -4-2zM693 79l5 2 3 24 -5-3zM707 79l5 2 2 24 -5-2zM720 80l5 2 2 24 -5-2zM734 81l5 2 2 24 -5-2zM748 82l5 2 1 24 -5-2zM762 83l5 2 1 24 -5-2zM776 83l5 3 1 24 -6-2zM790 84l5 2 0 25 -5-3zM804 85l6 2 -1 25 -5-3zM818 86l6 2 -1 25 -5-3zM833 87l5 2 0 24 -6-2zM847 88l6 2 -1 24 -6-2z"/><path class="gb" d="M674 78l-3 1 3 24 3-1zM687 79l-2 1 2 24 3-1zM701 80l-3 1 3 24 2-2zM714 80l-2 1 2 24 2-1zM728 81l-3 1 2 24 3-1zM742 82l-3 1 2 24 2-1zM756 83l-3 1 1 24 3-1zM769 84l-2 1 1 24 2-1zM784 84l-3 2 1 24 2-1zM798 85l-3 1 0 25 3-1zM812 86l-2 1 -1 25 3-2zM826 87l-2 1 -1 25 3-2zM841 88l-3 1 0 24 2-1zM855 89l-2 1 -1 24 2-1z"/><path class="gt" d="M669 76l5 2 -3 1 -4-2zM682 77l5 2 -2 1 -5-2zM696 78l5 2 -3 1 -5-2zM709 78l5 2 -2 1 -5-2zM723 79l5 2 -3 1 -5-2zM736 80l6 2 -3 1 -5-2zM750 81l6 2 -3 1 -5-2zM764 81l5 3 -2 1 -5-2zM778 82l6 2 -3 2 -5-3zM792 83l6 2 -3 1 -5-2zM806 84l6 2 -2 1 -6-2zM821 85l5 2 -2 1 -6-2zM835 86l6 2 -3 1 -5-2zM849 86l6 3 -2 1 -6-2z"/><path class="gm" d="M661 79l4 3 4 23 -5-2zM674 80l5 2 3 24 -5-2zM687 81l5 2 3 24 -5-2zM701 82l5 2 2 24 -5-2zM714 83l6 2 1 24 -5-2zM728 83l5 3 2 24 -5-3zM742 84l5 2 2 25 -6-3zM756 85l5 2 1 24 -5-2zM770 86l5 2 1 24 -5-2zM784 87l6 2 0 24 -6-2zM798 88l6 2 0 24 -6-2zM813 88l5 3 0 24 -6-2zM827 89l6 2 -1 25 -6-2zM842 90l6 2 -1 25 -6-2zM856 91l6 2 -1 25 -6-2z"/><path class="gb" d="M668 80l-3 2 4 23 2-1zM681 81l-2 1 3 24 2-1zM695 82l-3 1 3 24 2-1zM708 83l-2 1 2 24 3-1zM722 84l-2 1 1 24 3-1zM736 84l-3 2 2 24 3-1zM750 85l-3 1 2 25 2-2zM764 86l-3 1 1 24 3-1zM778 87l-3 1 1 24 3-1zM792 88l-2 1 0 24 2-1zM806 89l-2 1 0 24 2-1zM821 89l-3 2 0 24 2-1zM835 90l-2 1 -1 25 3-1zM850 91l-2 1 -1 25 2-1zM865 92l-3 1 -1 25 2-1z"/><path class="gt" d="M663 78l5 2 -3 2 -4-3zM677 79l4 2 -2 1 -5-2zM690 80l5 2 -3 1 -5-2zM703 81l5 2 -2 1 -5-2zM717 82l5 2 -2 1 -6-2zM731 82l5 2 -3 2 -5-3zM745 83l5 2 -3 1 -5-2zM758 84l6 2 -3 1 -5-2zM772 85l6 2 -3 1 -5-2zM787 86l5 2 -2 1 -6-2zM801 86l5 3 -2 1 -6-2zM815 87l6 2 -3 2 -5-3zM830 88l5 2 -2 1 -6-2zM844 89l6 2 -2 1 -6-2zM859 90l6 2 -3 1 -6-2z"/><path class="gm" d="M655 82l4 2 4 24 -5-2zM668 83l5 2 3 24 -5-3zM681 83l5 3 3 24 -5-3zM695 84l5 2 2 24 -5-2zM709 85l5 2 2 24 -5-2zM722 86l5 2 2 24 -5-2zM736 87l5 2 2 24 -5-2zM750 88l5 2 2 24 -6-2zM764 88l6 3 0 24 -5-2zM778 89l6 2 0 25 -5-2zM793 90l5 2 0 25 -5-2zM807 91l6 2 0 25 -6-3zM822 92l5 2 0 25 -6-3zM836 93l6 2 -1 25 -6-3zM851 94l6 2 -1 25 -6-3zM866 94l6 3 -2 25 -6-3z"/><path class="gb" d="M662 83l-3 1 4 24 2-1zM675 84l-2 1 3 24 2-1zM689 84l-3 2 3 24 3-2zM703 85l-3 1 2 24 3-1zM716 86l-2 1 2 24 2-1zM730 87l-3 1 2 24 3-1zM744 88l-3 1 2 24 2-1zM758 89l-3 1 2 24 2-1zM772 89l-2 2 0 24 3-1zM786 90l-2 1 0 25 3-1zM801 91l-3 1 0 25 3-1zM815 92l-2 1 0 25 2-1zM830 93l-3 1 0 25 2-1zM845 94l-3 1 -1 25 3-2zM859 95l-2 1 -1 25 2-2zM874 95l-2 2 -2 25 3-2z"/><path class="gt" d="M657 81l5 2 -3 1 -4-2zM671 82l4 2 -2 1 -5-2zM684 82l5 2 -3 2 -5-3zM698 83l5 2 -3 1 -5-2zM711 84l5 2 -2 1 -5-2zM725 85l5 2 -3 1 -5-2zM739 86l5 2 -3 1 -5-2zM753 86l5 3 -3 1 -5-2zM767 87l5 2 -2 2 -6-3zM781 88l5 2 -2 1 -6-2zM795 89l6 2 -3 1 -5-2zM810 90l5 2 -2 1 -6-2zM824 91l6 2 -3 1 -5-2zM839 91l6 3 -3 1 -6-2zM853 92l6 3 -2 1 -6-2zM868 93l6 2 -2 2 -6-3z"/><path class="gm" d="M648 84l5 2 4 24 -5-2zM662 85l5 2 3 24 -5-2zM675 86l5 2 3 24 -5-2zM689 87l5 2 3 24 -5-2zM703 88l5 2 2 24 -5-2zM716 88l6 3 2 24 -6-2zM730 89l6 2 1 25 -5-3zM744 90l6 2 1 25 -5-3zM758 91l6 2 1 25 -6-3zM773 92l5 2 1 25 -6-3zM787 93l6 2 0 24 -6-2zM801 93l6 3 0 24 -6-2zM816 94l6 3 -1 24 -5-2zM831 95l6 3 -1 24 -6-2zM845 96l7 2 -2 25 -6-2zM860 97l7 2 -2 25 -6-2zM875 98l7 2 -2 25 -6-2z"/><path class="gb" d="M656 85l-3 1 4 24 2-1zM669 86l-2 1 3 24 3-1zM683 87l-3 1 3 24 3-1zM697 88l-3 1 3 24 2-1zM710 89l-2 1 2 24 3-1zM724 89l-2 2 2 24 2-1zM738 90l-2 1 1 25 3-1zM752 91l-2 1 1 25 3-2zM766 92l-2 1 1 25 2-2zM781 93l-3 1 1 25 2-2zM795 94l-2 1 0 24 2-1zM810 95l-3 1 0 24 3-1zM824 95l-2 2 -1 24 3-1zM839 96l-2 2 -1 24 2-1zM854 97l-2 1 -2 25 3-1zM869 98l-2 1 -2 25 2-1zM884 99l-2 1 -2 25 2-1z"/><path class="gt" d="M651 83l5 2 -3 1 -5-2zM665 84l4 2 -2 1 -5-2zM678 85l5 2 -3 1 -5-2zM692 86l5 2 -3 1 -5-2zM705 86l5 3 -2 1 -5-2zM719 87l5 2 -2 2 -6-3zM733 88l5 2 -2 1 -6-2zM747 89l5 2 -2 1 -6-2zM761 90l5 2 -2 1 -6-2zM775 91l6 2 -3 1 -5-2zM790 91l5 3 -2 1 -6-2zM804 92l6 3 -3 1 -6-3zM818 93l6 2 -2 2 -6-3zM833 94l6 2 -2 2 -6-3zM848 95l6 2 -2 1 -7-2zM863 96l6 2 -2 1 -7-2zM878 97l6 2 -2 1 -7-2z"/><path class="gm" d="M642 87l5 2 4 24 -5-2zM656 88l5 2 3 24 -5-2zM669 88l5 3 3 24 -5-3zM683 89l5 2 3 25 -5-3zM697 90l5 2 2 24 -5-2zM710 91l6 2 2 24 -5-2zM724 92l6 2 1 24 -5-2zM738 93l6 2 1 24 -5-2zM753 93l5 3 1 24 -5-2zM767 94l5 3 1 24 -5-2zM781 95l6 2 0 25 -5-2zM796 96l6 2 0 25 -6-2zM810 97l6 2 0 25 -6-2zM825 98l6 2 -1 25 -5-2zM840 99l6 2 -1 25 -6-2zM855 100l6 2 -1 25 -6-2zM870 101l6 2 -2 25 -6-2zM885 102l7 2 -3 25 -6-2z"/><path class="gb" d="M650 88l-3 1 4 24 2-1zM663 89l-2 1 3 24 3-1zM677 89l-3 2 3 24 3-2zM691 90l-3 1 3 25 2-2zM704 91l-2 1 2 24 3-1zM718 92l-2 1 2 24 2-1zM732 93l-2 1 1 24 3-1zM746 94l-2 1 1 24 3-1zM761 95l-3 1 1 24 3-1zM775 95l-3 2 1 24 3-1zM790 96l-3 1 0 25 3-1zM804 97l-2 1 0 25 2-1zM819 98l-3 1 0 25 2-1zM834 99l-3 1 -1 25 3-1zM848 100l-2 1 -1 25 2-1zM864 101l-3 1 -1 25 2-1zM879 102l-3 1 -2 25 3-1zM894 103l-2 1 -3 25 3-1z"/><path class="gt" d="M645 86l5 2 -3 1 -5-2zM658 86l5 3 -2 1 -5-2zM672 87l5 2 -3 2 -5-3zM686 88l5 2 -3 1 -5-2zM699 89l5 2 -2 1 -5-2zM713 90l5 2 -2 1 -6-2zM727 91l5 2 -2 1 -6-2zM741 91l5 3 -2 1 -6-2zM755 92l6 3 -3 1 -5-3zM769 93l6 2 -3 2 -5-3zM784 94l6 2 -3 1 -6-2zM798 95l6 2 -2 1 -6-2zM813 96l6 2 -3 1 -6-2zM828 97l6 2 -3 1 -6-2zM842 98l6 2 -2 1 -6-2zM857 98l7 3 -3 1 -6-2zM872 99l7 3 -3 1 -6-2zM888 100l6 3 -2 1 -7-2z"/><path class="gm" d="M636 89l5 2 4 24 -5-2zM650 90l4 2 4 24 -5-2zM663 91l5 2 3 24 -5-2zM677 92l5 2 3 24 -5-2zM691 93l5 2 2 24 -5-2zM704 93l6 3 2 24 -5-2zM718 94l6 3 2 24 -6-2zM733 95l5 2 1 25 -5-2zM747 96l5 2 1 25 -5-2zM761 97l6 2 1 25 -6-3zM775 98l6 2 1 25 -6-3zM790 99l6 2 0 25 -6-3zM805 100l6 2 -1 25 -5-3zM819 101l6 2 0 25 -6-3zM834 101l6 3 -1 25 -5-3zM849 102l7 3 -2 25 -6-3zM864 103l7 3 -2 25 -6-3zM880 104l6 3 -2 25 -6-3zM895 105l7 3 -3 25 -6-3z"/><path class="gb" d="M644 90l-3 1 4 24 2-1zM657 91l-3 1 4 24 3-1zM671 92l-3 1 3 24 3-1zM685 93l-3 1 3 24 2-1zM698 94l-2 1 2 24 3-1zM712 95l-2 1 2 24 3-1zM726 95l-2 2 2 24 2-1zM741 96l-3 1 1 25 3-1zM755 97l-3 1 1 25 3-1zM769 98l-2 1 1 25 2-1zM784 99l-3 1 1 25 2-1zM798 100l-2 1 0 25 2-1zM813 101l-2 1 -1 25 3-1zM828 102l-3 1 0 25 2-1zM843 103l-3 1 -1 25 3-1zM858 103l-2 2 -2 25 3-1zM873 104l-2 2 -2 25 2-1zM889 105l-3 2 -2 25 2-1zM904 106l-2 2 -3 25 2-1z"/><path class="gt" d="M639 88l5 2 -3 1 -5-2zM652 89l5 2 -3 1 -4-2zM666 90l5 2 -3 1 -5-2zM680 91l5 2 -3 1 -5-2zM693 91l5 3 -2 1 -5-2zM707 92l5 3 -2 1 -6-3zM721 93l5 2 -2 2 -6-3zM735 94l6 2 -3 1 -5-2zM749 95l6 2 -3 1 -5-2zM764 96l5 2 -2 1 -6-2zM778 97l6 2 -3 1 -6-2zM793 98l5 2 -2 1 -6-2zM807 98l6 3 -2 1 -6-2zM822 99l6 3 -3 1 -6-2zM837 100l6 3 -3 1 -6-3zM852 101l6 2 -2 2 -7-3zM867 102l6 2 -2 2 -7-3zM882 103l7 2 -3 2 -6-3zM897 104l7 2 -2 2 -7-3z"/><path class="gm" d="M630 92l5 2 4 24 -5-2zM643 93l5 2 4 24 -5-2zM657 93l5 3 3 24 -5-2zM671 94l5 2 3 25 -5-3zM684 95l6 2 2 25 -5-3zM698 96l6 2 2 25 -5-3zM712 97l6 2 2 25 -5-3zM727 98l5 2 2 25 -6-3zM741 99l5 2 2 25 -6-3zM755 100l6 2 1 25 -6-3zM770 100l5 3 1 25 -6-3zM784 101l6 3 0 25 -5-3zM799 102l6 3 0 25 -6-3zM814 103l6 3 -1 25 -6-3zM829 104l6 3 -1 25 -6-3zM844 105l6 2 -1 26 -6-3zM859 106l6 2 -1 26 -7-3zM874 107l7 2 -2 26 -7-3zM890 108l6 2 -2 26 -7-3zM905 109l7 2 -3 26 -6-3z"/><path class="gb" d="M637 93l-2 1 4 24 2-1zM651 94l-3 1 4 24 3-1zM665 94l-3 2 3 24 3-1zM678 95l-2 1 3 25 2-1zM692 96l-2 1 2 25 3-1zM706 97l-2 1 2 25 3-2zM720 98l-2 1 2 25 2-2zM735 99l-3 1 2 25 2-2zM749 100l-3 1 2 25 2-2zM763 101l-2 1 1 25 2-2zM778 102l-3 1 1 25 3-2zM793 102l-3 2 0 25 3-2zM807 103l-2 2 0 25 2-2zM822 104l-2 2 -1 25 3-2zM837 105l-2 2 -1 25 2-2zM852 106l-2 1 -1 26 2-2zM868 107l-3 1 -1 26 2-2zM883 108l-2 1 -2 26 2-2zM899 109l-3 1 -2 26 2-2zM914 110l-2 1 -3 26 2-1z"/><path class="gt" d="M633 91l4 2 -2 1 -5-2zM646 91l5 3 -3 1 -5-2zM660 92l5 2 -3 2 -5-3zM673 93l5 2 -2 1 -5-2zM687 94l5 2 -2 1 -6-2zM701 95l5 2 -2 1 -6-2zM715 96l5 2 -2 1 -6-2zM729 97l6 2 -3 1 -5-2zM743 97l6 3 -3 1 -5-2zM758 98l5 3 -2 1 -6-2zM772 99l6 3 -3 1 -5-3zM787 100l6 2 -3 2 -6-3zM802 101l5 2 -2 2 -6-3zM816 102l6 2 -2 2 -6-3zM831 103l6 2 -2 2 -6-3zM846 104l6 2 -2 1 -6-2zM861 105l7 2 -3 1 -6-2zM877 106l6 2 -2 1 -7-2zM892 107l7 2 -3 1 -6-2zM908 108l6 2 -2 1 -7-2z"/><path class="gm" d="M624 94l4 2 4 25 -4-3zM637 95l5 2 4 24 -5-2zM651 96l5 2 3 24 -5-2zM664 97l5 2 4 24 -5-2zM678 98l5 2 3 24 -5-2zM692 99l5 2 3 24 -5-2zM706 99l6 3 2 24 -5-2zM721 100l5 3 2 24 -5-2zM735 101l5 3 2 24 -5-2zM749 102l6 3 1 24 -5-2zM764 103l5 2 1 25 -5-2zM778 104l6 2 1 25 -6-2zM793 105l6 2 0 25 -6-2zM808 106l6 2 0 25 -6-2zM823 107l6 2 -1 25 -6-2zM838 108l6 2 -1 25 -6-2zM853 109l7 2 -2 25 -6-2zM869 110l6 2 -2 26 -6-3zM884 111l7 2 -3 26 -6-3zM900 112l6 2 -2 26 -7-3zM915 113l7 2 -3 26 -6-3z"/><path class="gb" d="M631 95l-3 1 4 25 3-2zM645 96l-3 1 4 24 2-1zM658 97l-2 1 3 24 3-1zM672 98l-3 1 4 24 2-1zM686 99l-3 1 3 24 3-1zM700 100l-3 1 3 24 3-1zM714 101l-2 1 2 24 3-1zM729 101l-3 2 2 24 2-1zM743 102l-3 2 2 24 2-1zM757 103l-2 2 1 24 3-1zM772 104l-3 1 1 25 3-1zM787 105l-3 1 1 25 2-1zM802 106l-3 1 0 25 3-1zM817 107l-3 1 0 25 2-1zM832 108l-3 1 -1 25 3-1zM847 109l-3 1 -1 25 3-1zM862 110l-2 1 -2 25 3-1zM878 111l-3 1 -2 26 3-2zM893 112l-2 1 -3 26 3-2zM909 113l-3 1 -2 26 2-2zM925 114l-3 1 -3 26 3-2z"/><path class="gt" d="M626 93l5 2 -3 1 -4-2zM640 94l5 2 -3 1 -5-2zM654 95l4 2 -2 1 -5-2zM667 96l5 2 -3 1 -5-2zM681 97l5 2 -3 1 -5-2zM695 97l5 3 -3 1 -5-2zM709 98l5 3 -2 1 -6-3zM723 99l6 2 -3 2 -5-3zM738 100l5 2 -3 2 -5-3zM752 101l5 2 -2 2 -6-3zM766 102l6 2 -3 1 -5-2zM781 103l6 2 -3 1 -6-2zM796 104l6 2 -3 1 -6-2zM811 105l6 2 -3 1 -6-2zM826 106l6 2 -3 1 -6-2zM841 107l6 2 -3 1 -6-2zM856 108l6 2 -2 1 -7-2zM871 108l7 3 -3 1 -6-2zM887 109l6 3 -2 1 -7-2zM902 110l7 3 -3 1 -6-2zM918 111l7 3 -3 1 -7-2z"/><path class="gm" d="M617 97l5 2 4 24 -4-2zM631 98l4 2 5 24 -5-2zM644 99l5 2 4 24 -5-2zM658 99l5 3 4 24 -5-2zM672 100l5 3 3 24 -5-2zM686 101l5 3 3 24 -5-2zM700 102l5 2 3 25 -5-2zM714 103l6 2 2 25 -5-2zM729 104l5 2 2 25 -5-2zM743 105l6 2 1 25 -5-2zM758 106l5 2 1 25 -5-2zM772 107l6 2 1 25 -6-2zM787 108l6 2 0 25 -5-2zM802 109l6 2 0 25 -6-2zM817 110l6 2 0 25 -6-2zM832 111l7 2 -1 25 -6-2zM848 112l6 2 -1 25 -6-2zM863 113l7 2 -2 25 -6-2zM879 114l6 2 -2 25 -6-2zM894 115l7 2 -3 26 -6-3zM910 116l7 2 -3 26 -7-3zM926 117l7 2 -4 26 -6-3z"/><path class="gb" d="M625 98l-3 1 4 24 3-1zM638 99l-3 1 5 24 2-1zM652 100l-3 1 4 24 3-1zM666 101l-3 1 4 24 2-1zM680 101l-3 2 3 24 3-1zM694 102l-3 2 3 24 3-1zM708 103l-3 1 3 25 3-1zM723 104l-3 1 2 25 3-1zM737 105l-3 1 2 25 3-1zM751 106l-2 1 1 25 3-1zM766 107l-3 1 1 25 3-1zM781 108l-3 1 1 25 2-1zM796 109l-3 1 0 25 3-1zM811 110l-3 1 0 25 3-1zM826 111l-3 1 0 25 2-1zM841 112l-2 1 -1 25 2-1zM857 113l-3 1 -1 25 2-1zM872 114l-2 1 -2 25 2-1zM888 115l-3 1 -2 25 2-1zM903 116l-2 1 -3 26 3-2zM919 117l-2 1 -3 26 2-2zM935 118l-2 1 -4 26 3-2z"/><path class="gt" d="M620 96l5 2 -3 1 -5-2zM634 97l4 2 -3 1 -4-2zM647 97l5 3 -3 1 -5-2zM661 98l5 3 -3 1 -5-3zM675 99l5 2 -3 2 -5-3zM689 100l5 2 -3 2 -5-3zM703 101l5 2 -3 1 -5-2zM717 102l6 2 -3 1 -6-2zM732 103l5 2 -3 1 -5-2zM746 104l5 2 -2 1 -6-2zM760 105l6 2 -3 1 -5-2zM775 106l6 2 -3 1 -6-2zM790 106l6 3 -3 1 -6-2zM805 107l6 3 -3 1 -6-2zM820 108l6 3 -3 1 -6-2zM835 109l6 3 -2 1 -7-2zM850 110l7 3 -3 1 -6-2zM866 111l6 3 -2 1 -7-2zM881 112l7 3 -3 1 -6-2zM897 113l6 3 -2 1 -7-2zM912 114l7 3 -2 1 -7-2zM928 115l7 3 -2 1 -7-2z"/><path class="gm" d="M611 99l4 3 5 24 -5-3zM624 100l5 3 4 24 -4-3zM638 101l5 2 4 25 -5-3zM652 102l5 2 3 25 -4-3zM666 103l5 2 3 25 -5-3zM680 104l5 2 3 25 -5-3zM694 105l5 2 3 25 -5-3zM708 106l6 2 2 25 -5-3zM723 107l5 2 2 25 -5-3zM737 108l6 2 1 25 -5-3zM752 108l5 3 2 25 -6-3zM767 109l5 3 1 25 -6-3zM781 110l6 3 1 25 -6-3zM796 111l6 3 0 25 -5-3zM811 112l7 3 -1 25 -6-2zM827 113l6 3 -1 25 -6-2zM842 114l6 3 -1 25 -6-2zM857 115l7 3 -2 25 -6-2zM873 116l7 3 -2 25 -7-2zM889 117l6 3 -2 26 -7-3zM905 118l6 3 -2 26 -7-3zM921 119l6 3 -3 26 -7-3zM937 120l7 3 -4 26 -7-3z"/><path class="gb" d="M618 100l-3 2 5 24 3-1zM632 101l-3 2 4 24 3-1zM646 102l-3 1 4 25 3-1zM660 103l-3 1 3 25 3-1zM674 104l-3 1 3 25 3-2zM688 105l-3 1 3 25 3-2zM702 106l-3 1 3 25 3-2zM716 107l-2 1 2 25 3-2zM731 108l-3 1 2 25 3-1zM745 109l-2 1 1 25 3-1zM760 110l-3 1 2 25 2-1zM775 111l-3 1 1 25 3-1zM790 112l-3 1 1 25 2-1zM805 113l-3 1 0 25 3-1zM820 114l-2 1 -1 25 3-1zM835 115l-2 1 -1 25 3-1zM851 116l-3 1 -1 25 3-1zM866 117l-2 1 -2 25 3-1zM882 118l-2 1 -2 25 2-1zM898 119l-3 1 -2 26 2-2zM914 120l-3 1 -2 26 2-2zM930 121l-3 1 -3 26 3-2zM946 122l-2 1 -4 26 2-1z"/><path class="gt" d="M614 98l4 2 -3 2 -4-3zM627 99l5 2 -3 2 -5-3zM641 100l5 2 -3 1 -5-2zM655 101l5 2 -3 1 -5-2zM669 102l5 2 -3 1 -5-2zM683 103l5 2 -3 1 -5-2zM697 104l5 2 -3 1 -5-2zM711 104l5 3 -2 1 -6-2zM725 105l6 3 -3 1 -5-2zM740 106l5 3 -2 1 -6-2zM755 107l5 3 -3 1 -5-3zM769 108l6 3 -3 1 -5-3zM784 109l6 3 -3 1 -6-3zM799 110l6 3 -3 1 -6-3zM814 111l6 3 -2 1 -7-3zM829 112l6 3 -2 1 -6-3zM845 113l6 3 -3 1 -6-3zM860 114l6 3 -2 1 -7-3zM876 115l6 3 -2 1 -7-3zM891 116l7 3 -3 1 -6-3zM907 117l7 3 -3 1 -6-3zM923 118l7 3 -3 1 -6-3zM939 119l7 3 -2 1 -7-3z"/><path class="gm" d="M604 102l5 2 5 24 -5-2zM618 103l5 2 4 24 -5-2zM632 104l4 2 5 24 -5-2zM646 105l4 2 4 24 -5-2zM660 106l5 2 3 24 -5-2zM674 106l5 3 3 24 -5-2zM688 107l5 3 3 24 -5-2zM702 108l5 3 3 25 -5-3zM717 109l5 3 2 25 -5-3zM731 110l6 3 1 25 -5-3zM746 111l5 3 2 25 -6-3zM761 112l5 3 1 25 -5-3zM775 113l6 3 1 25 -6-3zM790 114l6 3 1 25 -6-3zM806 115l6 3 -1 25 -6-3zM821 116l6 3 -1 25 -6-3zM836 117l7 3 -2 25 -6-2zM852 118l6 3 -1 25 -7-2zM867 119l7 3 -2 25 -6-2zM883 120l7 3 -2 26 -7-3zM899 121l7 3 -3 26 -6-3zM915 122l7 3 -3 26 -7-3zM931 123l7 3 -3 26 -7-3zM948 124l7 3 -4 26 -7-3z"/><path class="gb" d="M612 103l-3 1 5 24 2-1zM626 104l-3 1 4 24 3-1zM639 105l-3 1 5 24 2-1zM653 106l-3 1 4 24 3-1zM667 107l-2 1 3 24 3-1zM682 108l-3 1 3 24 3-1zM696 109l-3 1 3 24 3-1zM710 110l-3 1 3 25 3-2zM725 110l-3 2 2 25 3-2zM739 111l-2 2 1 25 3-2zM754 112l-3 2 2 25 2-2zM769 113l-3 2 1 25 3-2zM784 114l-3 2 1 25 2-2zM799 115l-3 2 1 25 2-1zM814 116l-2 2 -1 25 3-1zM830 117l-3 2 -1 25 3-1zM845 118l-2 2 -2 25 3-1zM861 119l-3 2 -1 25 2-1zM876 120l-2 2 -2 25 3-1zM892 122l-2 1 -2 26 2-2zM908 123l-2 1 -3 26 3-2zM924 124l-2 1 -3 26 2-2zM941 125l-3 1 -3 26 2-1zM957 126l-2 1 -4 26 2-1z"/><path class="gt" d="M607 101l5 2 -3 1 -5-2zM621 102l5 2 -3 1 -5-2zM635 103l4 2 -3 1 -4-2zM648 103l5 3 -3 1 -4-2zM662 104l5 3 -2 1 -5-2zM676 105l6 3 -3 1 -5-3zM691 106l5 3 -3 1 -5-3zM705 107l5 3 -3 1 -5-3zM719 108l6 2 -3 2 -5-3zM734 109l5 2 -2 2 -6-3zM748 110l6 2 -3 2 -5-3zM763 111l6 2 -3 2 -5-3zM778 112l6 2 -3 2 -6-3zM793 113l6 2 -3 2 -6-3zM808 114l6 2 -2 2 -6-3zM823 115l7 2 -3 2 -6-3zM839 116l6 2 -2 2 -7-3zM854 117l7 2 -3 2 -6-3zM870 118l6 2 -2 2 -7-3zM886 119l6 3 -2 1 -7-3zM902 120l6 3 -2 1 -7-3zM918 121l6 3 -2 1 -7-3zM934 122l7 3 -3 1 -7-3zM950 123l7 3 -2 1 -7-3z"/><path class="gm" d="M598 105l4 2 5 24 -4-2zM611 105l5 3 5 24 -5-2zM625 106l5 3 4 24 -4-2zM639 107l5 3 4 24 -5-2zM653 108l5 3 4 24 -5-2zM667 109l5 3 4 24 -5-2zM681 110l6 3 3 24 -5-2zM696 111l5 2 3 25 -5-2zM710 112l6 2 2 25 -5-2zM725 113l5 2 2 25 -5-2zM740 114l5 2 2 25 -6-2zM754 115l6 2 1 26 -5-3zM769 116l6 2 1 26 -6-3zM784 117l6 2 1 26 -6-3zM800 118l6 3 0 25 -6-3zM815 119l6 3 0 25 -6-3zM830 120l7 3 -1 25 -6-3zM846 121l6 3 -1 25 -6-2zM862 122l6 3 -2 25 -6-2zM877 123l7 3 -2 26 -6-3zM893 124l7 3 -2 26 -7-3zM910 125l6 3 -3 26 -6-3zM926 126l7 3 -4 26 -7-3zM942 127l7 3 -4 26 -7-3zM959 129l7 2 -4 26 -8-2z"/><path class="gb" d="M605 106l-3 1 5 24 3-1zM619 107l-3 1 5 24 3-1zM633 108l-3 1 4 24 3-1zM647 108l-3 2 4 24 3-1zM661 109l-3 2 4 24 3-1zM675 110l-3 2 4 24 2-1zM690 111l-3 2 3 24 2-1zM704 112l-3 1 3 25 2-1zM719 113l-3 1 2 25 3-1zM733 114l-3 1 2 25 3-1zM748 115l-3 1 2 25 2-1zM763 116l-3 1 1 26 3-2zM778 117l-3 1 1 26 3-2zM793 118l-3 1 1 26 2-2zM808 119l-2 2 0 25 2-1zM824 120l-3 2 0 25 2-1zM839 121l-2 2 -1 25 2-1zM855 122l-3 2 -1 25 3-1zM871 123l-3 2 -2 25 3-1zM887 124l-3 2 -2 26 2-2zM903 126l-3 1 -2 26 2-2zM919 127l-3 1 -3 26 3-2zM935 128l-2 1 -4 26 3-1zM952 129l-3 1 -4 26 3-1zM968 130l-2 1 -4 26 2-1z"/><path class="gt" d="M601 103l4 3 -3 1 -4-2zM614 104l5 3 -3 1 -5-3zM628 105l5 3 -3 1 -5-3zM642 106l5 2 -3 2 -5-3zM656 107l5 2 -3 2 -5-3zM670 108l5 2 -3 2 -5-3zM684 109l6 2 -3 2 -6-3zM699 110l5 2 -3 1 -5-2zM713 111l6 2 -3 1 -6-2zM728 112l5 2 -3 1 -5-2zM742 113l6 2 -3 1 -5-2zM757 114l6 2 -3 1 -6-2zM772 115l6 2 -3 1 -6-2zM787 116l6 2 -3 1 -6-2zM802 117l6 2 -2 2 -6-3zM818 118l6 2 -3 2 -6-3zM833 119l6 2 -2 2 -7-3zM849 120l6 2 -3 2 -6-3zM864 121l7 2 -3 2 -6-3zM880 122l7 2 -3 2 -7-3zM896 123l7 3 -3 1 -7-3zM912 124l7 3 -3 1 -6-3zM928 125l7 3 -2 1 -7-3zM945 126l7 3 -3 1 -7-3zM961 127l7 3 -2 1 -7-2z"/><path class="gm" d="M591 107l5 3 5 24 -5-3zM605 108l4 2 5 25 -4-3zM619 109l4 2 5 25 -5-3zM633 110l4 2 5 25 -5-3zM647 111l5 2 3 25 -4-3zM661 112l5 2 3 25 -5-2zM675 113l5 2 3 25 -5-2zM690 114l5 2 3 25 -6-2zM704 115l5 2 3 25 -5-2zM719 116l5 2 2 25 -5-2zM733 117l6 2 2 25 -6-2zM748 118l6 2 1 25 -5-2zM763 119l6 2 1 26 -6-3zM778 120l6 2 1 26 -6-3zM794 121l6 2 0 26 -6-3zM809 122l6 2 0 26 -6-3zM825 123l6 3 -1 25 -6-3zM840 124l7 3 -2 25 -6-2zM856 125l6 3 -1 25 -7-2zM872 126l6 3 -2 26 -6-3zM888 127l7 3 -3 26 -6-3zM904 128l7 3 -3 26 -7-3zM920 129l7 3 -3 26 -7-3zM937 130l7 3 -4 26 -7-2zM953 132l8 2 -5 27 -7-3zM970 133l7 2 -4 27 -8-3z"/><path class="gb" d="M599 108l-3 2 5 24 3-1zM612 109l-3 1 5 25 3-1zM626 110l-3 1 5 25 3-1zM640 111l-3 1 5 25 2-1zM655 112l-3 1 3 25 3-1zM669 113l-3 1 3 25 3-1zM683 114l-3 1 3 25 3-1zM698 115l-3 1 3 25 2-1zM712 116l-3 1 3 25 3-1zM727 117l-3 1 2 25 3-1zM742 118l-3 1 2 25 2-1zM757 119l-3 1 1 25 3-1zM772 120l-3 1 1 26 3-2zM787 121l-3 1 1 26 3-2zM802 122l-2 1 0 26 2-2zM818 123l-3 1 0 26 3-1zM833 124l-2 2 -1 25 3-1zM849 125l-2 2 -2 25 3-1zM865 126l-3 2 -1 25 2-1zM881 127l-3 2 -2 26 3-2zM897 129l-2 1 -3 26 3-2zM913 130l-2 1 -3 26 2-1zM930 131l-3 1 -3 26 2-1zM946 132l-2 1 -4 26 2-1zM963 133l-2 1 -5 27 3-2zM980 134l-3 1 -4 27 2-2z"/><path class="gt" d="M594 106l5 2 -3 2 -5-3zM608 107l4 2 -3 1 -4-2zM622 108l4 2 -3 1 -4-2zM636 109l4 2 -3 1 -4-2zM650 110l5 2 -3 1 -5-2zM664 111l5 2 -3 1 -5-2zM678 112l5 2 -3 1 -5-2zM692 113l6 2 -3 1 -5-2zM707 114l5 2 -3 1 -5-2zM721 115l6 2 -3 1 -5-2zM736 116l6 2 -3 1 -6-2zM751 117l6 2 -3 1 -6-2zM766 118l6 2 -3 1 -6-2zM781 119l6 2 -3 1 -6-2zM796 120l6 2 -2 1 -6-2zM812 121l6 2 -3 1 -6-2zM827 122l6 2 -2 2 -6-3zM843 123l6 2 -2 2 -7-3zM858 124l7 2 -3 2 -6-3zM874 125l7 2 -3 2 -6-3zM890 126l7 3 -2 1 -7-3zM906 127l7 3 -2 1 -7-3zM923 128l7 3 -3 1 -7-3zM939 129l7 3 -2 1 -7-3zM956 130l7 3 -2 1 -8-2zM972 131l8 3 -3 1 -7-2z"/><path class="gm" d="M584 110l5 2 5 25 -4-3zM598 111l5 2 5 25 -5-3zM612 112l5 2 4 25 -4-3zM626 113l5 2 4 25 -5-3zM640 114l5 2 4 25 -5-3zM654 115l5 2 4 25 -5-3zM669 116l5 2 3 25 -5-3zM683 117l5 2 3 25 -5-3zM698 118l5 2 3 25 -6-3zM712 119l6 2 2 25 -5-2zM727 120l6 2 2 25 -6-2zM742 121l6 2 1 25 -5-2zM757 122l6 2 1 25 -6-2zM772 123l6 2 1 26 -6-3zM788 124l6 2 0 26 -6-3zM803 125l6 2 0 26 -6-3zM819 126l6 2 -1 26 -6-3zM834 127l7 3 -1 25 -7-2zM850 128l7 3 -2 25 -6-2zM866 129l7 3 -2 26 -7-3zM882 130l7 3 -2 26 -7-3zM898 131l7 3 -3 26 -6-3zM915 132l7 3 -4 26 -6-3zM931 134l7 2 -3 26 -7-2zM948 135l7 2 -4 27 -7-3zM965 136l7 3 -5 26 -7-3zM981 137l8 3 -5 26 -7-3z"/><path class="gb" d="M592 111l-3 1 5 25 3-2zM606 112l-3 1 5 25 3-2zM620 113l-3 1 4 25 3-2zM634 114l-3 1 4 25 3-2zM648 115l-3 1 4 25 3-1zM662 116l-3 1 4 25 3-1zM677 117l-3 1 3 25 3-1zM691 118l-3 1 3 25 3-1zM706 119l-3 1 3 25 2-1zM721 120l-3 1 2 25 3-1zM736 121l-3 1 2 25 2-1zM751 122l-3 1 1 25 3-1zM766 123l-3 1 1 25 3-1zM781 124l-3 1 1 26 3-2zM796 125l-2 1 0 26 3-2zM812 126l-3 1 0 26 3-1zM828 127l-3 1 -1 26 3-1zM843 128l-2 2 -1 25 2-1zM859 129l-2 2 -2 25 3-1zM875 130l-2 2 -2 26 2-2zM891 132l-2 1 -2 26 2-2zM908 133l-3 1 -3 26 3-1zM924 134l-2 1 -4 26 3-1zM941 135l-3 1 -3 26 2-1zM958 136l-3 1 -4 27 2-2zM974 137l-2 2 -5 26 3-2zM991 138l-2 2 -5 26 2-1z"/><path class="gt" d="M587 109l5 2 -3 1 -5-2zM601 110l5 2 -3 1 -5-2zM615 111l5 2 -3 1 -5-2zM629 111l5 3 -3 1 -5-2zM643 112l5 3 -3 1 -5-2zM657 113l5 3 -3 1 -5-2zM672 114l5 3 -3 1 -5-2zM686 115l5 3 -3 1 -5-2zM701 116l5 3 -3 1 -5-2zM715 117l6 3 -3 1 -6-2zM730 118l6 3 -3 1 -6-2zM745 119l6 3 -3 1 -6-2zM760 120l6 3 -3 1 -6-2zM775 121l6 3 -3 1 -6-2zM790 122l6 3 -2 1 -6-2zM806 123l6 3 -3 1 -6-2zM821 125l7 2 -3 1 -6-2zM837 126l6 2 -2 2 -7-3zM853 127l6 2 -2 2 -7-3zM869 128l6 2 -2 2 -7-3zM885 129l6 3 -2 1 -7-3zM901 130l7 3 -3 1 -7-3zM917 131l7 3 -2 1 -7-3zM934 132l7 3 -3 1 -7-2zM950 133l8 3 -3 1 -7-2zM967 134l7 3 -2 2 -7-3zM984 136l7 2 -2 2 -8-3z"/><path class="gm" d="M578 113l4 2 6 24 -5-2zM591 114l5 2 5 24 -4-2zM605 114l5 3 5 24 -5-2zM619 115l5 3 5 25 -5-3zM634 116l5 3 4 25 -5-3zM648 117l5 3 4 25 -5-3zM662 118l5 3 4 25 -5-3zM677 119l5 3 3 25 -5-3zM691 120l6 3 2 25 -5-3zM706 121l6 3 2 25 -5-3zM721 122l5 3 2 25 -5-2zM736 123l6 3 1 25 -5-2zM751 125l6 2 1 25 -6-2zM766 126l6 2 1 26 -6-3zM782 127l6 2 0 26 -6-3zM797 128l6 2 0 26 -6-3zM813 129l6 2 -1 26 -6-3zM828 130l7 3 -1 25 -6-2zM844 131l7 3 -2 25 -6-2zM860 132l7 3 -2 26 -6-3zM876 133l7 3 -2 26 -7-3zM893 134l7 3 -3 26 -7-3zM909 135l7 3 -3 26 -7-2zM926 137l7 2 -4 27 -7-3zM942 138l8 3 -4 26 -8-3zM959 139l8 3 -5 26 -7-3zM976 140l8 3 -5 26 -8-3zM993 141l8 3 -6 27 -7-3z"/><path class="gb" d="M585 114l-3 1 6 24 3-1zM599 115l-3 1 5 24 3-1zM613 116l-3 1 5 24 3-1zM627 117l-3 1 5 25 3-2zM642 118l-3 1 4 25 3-2zM656 119l-3 1 4 25 3-2zM670 120l-3 1 4 25 3-2zM685 121l-3 1 3 25 3-1zM700 122l-3 1 2 25 3-1zM714 123l-2 1 2 25 3-1zM729 124l-3 1 2 25 3-1zM744 125l-2 1 1 25 3-1zM760 126l-3 1 1 25 3-1zM775 127l-3 1 1 26 3-2zM790 128l-2 1 0 26 3-2zM806 129l-3 1 0 26 3-1zM822 130l-3 1 -1 26 3-1zM837 131l-2 2 -1 25 3-1zM853 132l-2 2 -2 25 3-1zM869 133l-2 2 -2 26 3-2zM886 135l-3 1 -2 26 2-2zM902 136l-2 1 -3 26 2-1zM919 137l-3 1 -3 26 2-1zM935 138l-2 1 -4 27 3-2zM952 139l-2 2 -4 26 2-2zM969 140l-2 2 -5 26 2-1zM986 142l-2 1 -5 26 2-1zM1003 143l-2 1 -6 27 3-2z"/><path class="gt" d="M581 111l4 3 -3 1 -4-2zM594 112l5 3 -3 1 -5-2zM608 113l5 3 -3 1 -5-3zM622 114l5 3 -3 1 -5-3zM637 115l5 3 -3 1 -5-3zM651 116l5 3 -3 1 -5-3zM665 117l5 3 -3 1 -5-3zM680 118l5 3 -3 1 -5-3zM694 119l6 3 -3 1 -6-3zM709 120l5 3 -2 1 -6-3zM724 121l5 3 -3 1 -5-3zM739 122l5 3 -2 1 -6-3zM754 123l6 3 -3 1 -6-2zM769 124l6 3 -3 1 -6-2zM784 125l6 3 -2 1 -6-2zM800 126l6 3 -3 1 -6-2zM815 127l7 3 -3 1 -6-2zM831 129l6 2 -2 2 -7-3zM847 130l6 2 -2 2 -7-3zM863 131l6 2 -2 2 -7-3zM879 132l7 3 -3 1 -7-3zM895 133l7 3 -2 1 -7-3zM912 134l7 3 -3 1 -7-3zM928 135l7 3 -2 1 -7-2zM945 136l7 3 -2 2 -8-3zM962 138l7 2 -2 2 -8-3zM979 139l7 3 -2 1 -8-3zM996 140l7 3 -2 1 -8-3z"/><path class="gm" d="M571 115l4 3 6 24 -4-2zM585 116l4 3 6 24 -5-2zM599 117l4 3 5 24 -4-2zM613 118l5 3 4 24 -4-2zM627 119l5 3 4 24 -5-2zM641 120l5 3 4 25 -5-3zM656 121l5 3 3 25 -5-3zM670 122l5 3 4 25 -5-3zM685 123l5 3 3 25 -5-3zM700 124l5 3 3 25 -6-3zM715 125l5 3 2 25 -5-3zM730 126l5 3 2 25 -6-2zM745 127l6 3 1 25 -6-2zM760 129l6 2 1 26 -6-3zM775 130l6 2 1 26 -6-3zM791 131l6 2 0 26 -6-3zM807 132l6 2 0 26 -7-3zM822 133l7 3 -1 25 -6-2zM838 134l7 3 -1 26 -7-3zM854 135l7 3 -2 26 -6-3zM870 136l7 3 -2 26 -6-3zM887 137l7 3 -3 26 -6-3zM903 139l7 2 -3 27 -6-3zM920 140l7 3 -3 26 -7-3zM937 141l7 3 -4 26 -7-3zM954 142l7 3 -4 26 -8-3zM971 143l7 3 -5 27 -7-3zM988 144l8 3 -6 27 -7-3zM1005 146l8 3 -6 26 -7-3z"/><path class="gb" d="M578 116l-3 2 6 24 3-1zM592 117l-3 2 6 24 3-1zM606 118l-3 2 5 24 3-1zM621 119l-3 2 4 24 3-1zM635 120l-3 2 4 24 3-1zM649 121l-3 2 4 25 3-2zM664 122l-3 2 3 25 3-2zM678 123l-3 2 4 25 3-2zM693 124l-3 2 3 25 3-1zM708 126l-3 1 3 25 2-1zM723 127l-3 1 2 25 3-1zM738 128l-3 1 2 25 3-1zM753 129l-2 1 1 25 3-1zM769 130l-3 1 1 26 3-2zM784 131l-3 1 1 26 3-2zM800 132l-3 1 0 26 3-1zM816 133l-3 1 0 26 2-1zM831 134l-2 2 -1 25 3-1zM847 135l-2 2 -1 26 2-2zM864 136l-3 2 -2 26 3-2zM880 138l-3 1 -2 26 3-1zM896 139l-2 1 -3 26 3-1zM913 140l-3 1 -3 27 3-2zM930 141l-3 2 -3 26 2-2zM947 142l-3 2 -4 26 3-1zM964 144l-3 1 -4 26 2-1zM981 145l-3 1 -5 27 3-2zM998 146l-2 1 -6 27 3-2zM1015 147l-2 2 -6 26 3-1z"/><path class="gt" d="M574 114l4 2 -3 2 -4-3zM588 115l4 2 -3 2 -4-3zM602 116l4 2 -3 2 -4-3zM616 117l5 2 -3 2 -5-3zM630 118l5 2 -3 2 -5-3zM644 119l5 2 -3 2 -5-3zM659 120l5 2 -3 2 -5-3zM673 121l5 2 -3 2 -5-3zM688 122l5 2 -3 2 -5-3zM703 123l5 3 -3 1 -5-3zM717 124l6 3 -3 1 -5-3zM732 125l6 3 -3 1 -5-3zM748 126l5 3 -2 1 -6-3zM763 127l6 3 -3 1 -6-2zM778 128l6 3 -3 1 -6-2zM794 129l6 3 -3 1 -6-2zM809 130l7 3 -3 1 -6-2zM825 132l6 2 -2 2 -7-3zM841 133l6 2 -2 2 -7-3zM857 134l7 2 -3 2 -7-3zM873 135l7 3 -3 1 -7-3zM889 136l7 3 -2 1 -7-3zM906 137l7 3 -3 1 -7-2zM922 138l8 3 -3 2 -7-3zM939 139l8 3 -3 2 -7-3zM956 141l8 3 -3 1 -7-3zM973 142l8 3 -3 1 -7-3zM990 143l8 3 -2 1 -8-3zM1008 144l7 3 -2 2 -8-3z"/><path class="gm" d="M564 118l4 2 6 25 -4-3zM578 119l4 2 6 25 -4-2zM592 120l5 2 5 25 -5-2zM606 121l5 2 5 25 -5-2zM620 122l5 3 5 24 -5-2zM635 123l5 3 4 24 -5-2zM649 124l5 3 4 25 -5-3zM664 125l5 3 3 25 -5-3zM678 126l6 3 3 25 -5-3zM693 127l6 3 2 25 -5-3zM708 128l6 3 2 25 -5-3zM723 129l6 3 2 25 -6-2zM738 130l6 3 2 25 -6-2zM754 131l6 3 1 26 -6-3zM769 133l6 2 1 26 -6-3zM785 134l6 2 0 26 -6-3zM800 135l7 3 0 25 -7-3zM816 136l7 3 -1 25 -6-2zM832 137l7 3 -1 26 -7-3zM848 138l7 3 -1 26 -7-3zM865 139l6 3 -1 26 -7-3zM881 141l7 2 -2 26 -7-2zM898 142l7 3 -3 26 -7-3zM914 143l7 3 -3 26 -7-3zM931 144l7 3 -3 26 -8-3zM948 145l7 3 -4 27 -7-3zM965 146l8 3 -5 27 -7-3zM982 148l8 3 -5 26 -8-3zM1000 149l8 3 -6 27 -8-3zM1017 150l8 3 -6 27 -8-3z"/><path class="gb" d="M572 119l-4 1 6 25 3-1zM586 120l-4 1 6 25 3-1zM600 121l-3 1 5 25 3-1zM614 122l-3 1 5 25 3-1zM628 123l-3 2 5 24 3-1zM643 124l-3 2 4 24 3-1zM657 125l-3 2 4 25 3-2zM672 126l-3 2 3 25 3-2zM687 127l-3 2 3 25 3-2zM702 128l-3 2 2 25 3-1zM717 130l-3 1 2 25 3-1zM732 131l-3 1 2 25 3-1zM747 132l-3 1 2 25 2-1zM762 133l-2 1 1 26 3-2zM778 134l-3 1 1 26 3-2zM794 135l-3 1 0 26 3-1zM809 136l-2 2 0 25 2-1zM825 137l-2 2 -1 25 3-1zM841 138l-2 2 -1 26 2-2zM858 140l-3 1 -1 26 2-1zM874 141l-3 1 -1 26 2-1zM891 142l-3 1 -2 26 2-1zM907 143l-2 2 -3 26 2-2zM924 144l-3 2 -3 26 3-1zM941 145l-3 2 -3 26 2-1zM958 147l-3 1 -4 27 3-2zM975 148l-2 1 -5 27 2-2zM993 149l-3 2 -5 26 2-1zM1010 150l-2 2 -6 27 2-2zM1028 152l-3 1 -6 27 2-2z"/><path class="gt" d="M567 117l5 2 -4 1 -4-2zM581 118l5 2 -4 1 -4-2zM595 119l5 2 -3 1 -5-2zM609 120l5 2 -3 1 -5-2zM623 121l5 2 -3 2 -5-3zM638 122l5 2 -3 2 -5-3zM652 123l5 2 -3 2 -5-3zM667 124l5 2 -3 2 -5-3zM681 125l6 2 -3 2 -6-3zM696 126l6 2 -3 2 -6-3zM711 127l6 3 -3 1 -6-3zM726 128l6 3 -3 1 -6-3zM741 129l6 3 -3 1 -6-3zM757 130l5 3 -2 1 -6-3zM772 131l6 3 -3 1 -6-2zM787 132l7 3 -3 1 -6-2zM803 133l6 3 -2 2 -7-3zM819 135l6 2 -2 2 -7-3zM835 136l6 2 -2 2 -7-3zM851 137l7 3 -3 1 -7-3zM867 138l7 3 -3 1 -6-3zM884 139l7 3 -3 1 -7-2zM900 140l7 3 -2 2 -7-3zM917 141l7 3 -3 2 -7-3zM934 143l7 2 -3 2 -7-3zM951 144l7 3 -3 1 -7-3zM968 145l7 3 -2 1 -8-3zM985 146l8 3 -3 2 -8-3zM1002 147l8 3 -2 2 -8-3zM1020 149l8 3 -3 1 -8-3z"/><path class="gm" d="M557 121l5 2 6 25 -5-3zM571 122l5 2 5 25 -4-3zM585 123l5 2 5 25 -4-3zM599 124l5 2 5 25 -5-2zM613 125l5 2 5 25 -5-2zM628 126l5 2 4 25 -5-2zM642 127l5 2 5 26 -6-3zM657 128l5 3 4 25 -5-3zM672 129l5 3 3 25 -5-3zM687 130l5 3 3 25 -5-3zM702 131l5 3 3 25 -6-3zM717 132l5 3 3 25 -6-2zM732 133l6 3 1 26 -5-3zM747 134l6 3 2 26 -6-3zM763 136l6 2 1 26 -6-3zM778 137l7 2 0 26 -6-3zM794 138l7 3 0 25 -7-2zM810 139l7 3 -1 26 -6-3zM826 140l7 3 -1 26 -6-3zM842 141l7 3 -1 26 -7-3zM859 142l6 3 -1 26 -7-2zM875 144l7 3 -2 26 -7-3zM892 145l7 3 -3 26 -7-3zM908 146l8 3 -3 26 -7-3zM925 147l8 3 -4 27 -7-3zM942 149l8 2 -4 27 -8-3zM960 150l7 3 -4 26 -8-3zM977 151l8 3 -5 27 -8-3zM994 152l8 3 -5 27 -8-3zM1012 154l8 3 -6 26 -8-3zM1030 155l8 3 -7 27 -8-3z"/><path class="gb" d="M565 122l-3 1 6 25 3-1zM579 123l-3 1 5 25 3-1zM593 124l-3 1 5 25 3-1zM607 125l-3 1 5 25 3-1zM621 126l-3 1 5 25 3-1zM636 127l-3 1 4 25 3-1zM651 128l-4 1 5 26 2-2zM665 129l-3 2 4 25 3-2zM680 130l-3 2 3 25 3-2zM695 131l-3 2 3 25 3-1zM710 132l-3 2 3 25 3-1zM725 134l-3 1 3 25 2-1zM741 135l-3 1 1 26 3-2zM756 136l-3 1 2 26 2-2zM772 137l-3 1 1 26 3-1zM787 138l-2 1 0 26 3-1zM803 139l-2 2 0 25 2-1zM819 140l-2 2 -1 26 3-2zM835 142l-2 1 -1 26 3-2zM852 143l-3 1 -1 26 2-1zM868 144l-3 1 -1 26 2-1zM885 145l-3 2 -2 26 2-2zM901 146l-2 2 -3 26 3-1zM918 147l-2 2 -3 26 2-1zM935 149l-2 1 -4 27 3-2zM952 150l-2 1 -4 27 2-2zM970 151l-3 2 -4 26 2-1zM987 152l-2 2 -5 27 2-2zM1005 154l-3 1 -5 27 2-2zM1023 155l-3 2 -6 26 2-1zM1040 156l-2 2 -7 27 3-2z"/><path class="gt" d="M560 120l5 2 -3 1 -5-2zM574 121l5 2 -3 1 -5-2zM588 122l5 2 -3 1 -5-2zM602 123l5 2 -3 1 -5-2zM617 124l4 2 -3 1 -5-2zM631 125l5 2 -3 1 -5-2zM645 126l6 2 -4 1 -5-2zM660 127l5 2 -3 2 -5-3zM675 128l5 2 -3 2 -5-3zM690 129l5 2 -3 2 -5-3zM705 130l5 2 -3 2 -5-3zM720 131l5 3 -3 1 -5-3zM735 132l6 3 -3 1 -6-3zM750 133l6 3 -3 1 -6-3zM766 134l6 3 -3 1 -6-2zM781 135l6 3 -2 1 -7-2zM797 136l6 3 -2 2 -7-3zM813 138l6 2 -2 2 -7-3zM829 139l6 3 -2 1 -7-3zM845 140l7 3 -3 1 -7-3zM861 141l7 3 -3 1 -6-3zM878 142l7 3 -3 2 -7-3zM894 143l7 3 -2 2 -7-3zM911 145l7 2 -2 2 -8-3zM928 146l7 3 -2 1 -8-3zM945 147l7 3 -2 1 -8-2zM962 148l8 3 -3 2 -7-3zM979 150l8 2 -2 2 -8-3zM997 151l8 3 -3 1 -8-3zM1014 152l9 3 -3 2 -8-3zM1032 153l8 3 -2 2 -8-3z"/><path class="gm" d="M550 124l5 2 6 25 -5-3zM564 125l5 2 6 25 -5-3zM578 126l5 2 5 25 -4-3zM592 127l5 2 5 25 -4-3zM607 128l5 2 4 25 -4-2zM621 129l5 2 5 25 -5-2zM636 130l5 2 4 25 -5-2zM650 131l5 2 4 26 -5-3zM665 132l5 3 4 25 -5-3zM680 133l5 3 4 25 -6-3zM695 134l6 3 2 25 -5-3zM710 135l6 3 2 25 -5-2zM725 136l6 3 2 26 -5-3zM741 137l6 3 1 26 -5-3zM756 139l7 2 1 26 -6-3zM772 140l6 3 1 25 -6-3zM788 141l6 3 0 26 -6-3zM804 142l6 3 0 26 -6-3zM820 143l7 3 -1 26 -6-3zM836 144l7 3 -1 26 -7-3zM853 146l6 2 -1 27 -7-3zM869 147l7 3 -2 26 -7-3zM886 148l7 3 -3 26 -6-3zM903 149l7 3 -3 27 -7-3zM920 151l7 2 -4 27 -7-3zM937 152l7 3 -4 26 -7-3zM954 153l8 3 -5 27 -7-3zM971 154l8 3 -5 27 -7-3zM989 156l8 3 -6 26 -7-3zM1007 157l8 3 -6 27 -8-3zM1025 158l8 3 -7 27 -8-3zM1043 159l8 4 -7 27 -8-4z"/><path class="gb" d="M558 125l-3 1 6 25 3-2zM572 126l-3 1 6 25 3-1zM586 127l-3 1 5 25 3-1zM600 128l-3 1 5 25 3-1zM615 129l-3 1 4 25 3-1zM629 130l-3 1 5 25 3-1zM644 131l-3 1 4 25 3-1zM659 132l-4 1 4 26 3-2zM673 133l-3 2 4 25 3-2zM688 134l-3 2 4 25 2-1zM704 135l-3 2 2 25 3-1zM719 137l-3 1 2 25 3-1zM734 138l-3 1 2 26 3-2zM750 139l-3 1 1 26 3-2zM765 140l-2 1 1 26 2-1zM781 141l-3 2 1 25 3-1zM797 142l-3 2 0 26 3-2zM813 143l-3 2 0 26 3-2zM829 145l-2 1 -1 26 3-1zM846 146l-3 1 -1 26 2-1zM862 147l-3 1 -1 27 3-2zM879 148l-3 2 -2 26 3-2zM896 149l-3 2 -3 26 3-1zM912 151l-2 1 -3 27 2-2zM930 152l-3 1 -4 27 3-2zM947 153l-3 2 -4 26 3-1zM964 155l-2 1 -5 27 3-2zM982 156l-3 1 -5 27 3-1zM999 157l-2 2 -6 26 3-1zM1017 158l-2 2 -6 27 2-2zM1035 160l-2 1 -7 27 2-1zM1053 161l-2 2 -7 27 2-2z"/><path class="gt" d="M553 122l5 3 -3 1 -5-2zM567 123l5 3 -3 1 -5-2zM581 124l5 3 -3 1 -5-2zM595 125l5 3 -3 1 -5-2zM610 126l5 3 -3 1 -5-2zM624 127l5 3 -3 1 -5-2zM639 128l5 3 -3 1 -5-2zM653 130l6 2 -4 1 -5-2zM668 131l5 2 -3 2 -5-3zM683 132l5 2 -3 2 -5-3zM698 133l6 2 -3 2 -6-3zM713 134l6 3 -3 1 -6-3zM728 135l6 3 -3 1 -6-3zM744 136l6 3 -3 1 -6-3zM759 137l6 3 -2 1 -7-2zM775 138l6 3 -3 2 -6-3zM791 140l6 2 -3 2 -6-3zM807 141l6 2 -3 2 -6-3zM823 142l6 3 -2 1 -7-3zM839 143l7 3 -3 1 -7-3zM855 144l7 3 -3 1 -6-2zM872 145l7 3 -3 2 -7-3zM888 147l8 2 -3 2 -7-3zM905 148l7 3 -2 1 -7-3zM922 149l8 3 -3 1 -7-2zM939 150l8 3 -3 2 -7-3zM956 152l8 3 -2 1 -8-3zM974 153l8 3 -3 1 -8-3zM991 154l8 3 -2 2 -8-3zM1009 155l8 3 -2 2 -8-3zM1027 157l8 3 -2 1 -8-3zM1045 158l8 3 -2 2 -8-4z"/><path class="gm" d="M543 126l4 3 7 25 -4-3zM557 127l5 3 6 25 -5-3zM571 128l5 3 6 25 -5-3zM585 130l5 2 6 25 -5-3zM600 131l5 2 5 25 -5-3zM614 132l5 2 5 25 -5-2zM629 133l5 2 4 25 -5-2zM643 134l6 2 4 26 -5-3zM658 135l6 3 3 25 -5-3zM673 136l6 3 3 25 -5-3zM688 137l6 3 3 25 -6-3zM704 138l5 3 3 25 -6-2zM719 139l6 3 2 26 -6-3zM734 141l6 2 2 26 -6-3zM750 142l6 2 1 26 -6-3zM766 143l6 3 1 25 -6-2zM782 144l6 3 0 26 -6-3zM798 145l6 3 0 26 -6-3zM814 146l6 3 0 26 -6-3zM830 148l7 2 -1 27 -7-3zM847 149l6 3 -1 26 -7-3zM863 150l7 3 -2 26 -7-3zM880 151l7 3 -2 27 -7-3zM897 153l7 2 -3 27 -7-3zM914 154l7 3 -3 26 -7-3zM931 155l7 3 -3 27 -8-3zM948 156l8 3 -4 27 -8-3zM966 158l8 3 -5 26 -8-3zM983 159l8 3 -5 27 -8-3zM1001 160l8 3 -6 27 -8-3zM1019 162l8 3 -6 27 -8-3zM1037 163l9 3 -7 27 -9-3zM1056 164l8 3 -8 28 -8-4z"/><path class="gb" d="M551 128l-4 1 7 25 3-2zM565 129l-3 1 6 25 3-2zM579 130l-3 1 6 25 3-1zM593 131l-3 1 6 25 3-1zM608 132l-3 1 5 25 3-1zM622 133l-3 1 5 25 3-1zM637 134l-3 1 4 25 3-1zM652 135l-3 1 4 26 3-2zM667 136l-3 2 3 25 3-2zM682 137l-3 2 3 25 3-1zM697 138l-3 2 3 25 3-1zM712 140l-3 1 3 25 3-1zM728 141l-3 1 2 26 3-2zM743 142l-3 1 2 26 3-1zM759 143l-3 1 1 26 3-1zM775 144l-3 2 1 25 3-1zM791 145l-3 2 0 26 3-2zM807 147l-3 1 0 26 3-1zM823 148l-3 1 0 26 3-1zM840 149l-3 1 -1 27 3-2zM856 150l-3 2 -1 26 3-2zM873 151l-3 2 -2 26 3-1zM890 153l-3 1 -2 27 2-2zM907 154l-3 1 -3 27 3-2zM924 155l-3 2 -3 26 2-1zM941 157l-3 1 -3 27 2-2zM958 158l-2 1 -4 27 2-1zM976 159l-2 2 -5 26 2-1zM994 160l-3 2 -5 27 2-2zM1012 162l-3 1 -6 27 3-1zM1030 163l-3 2 -6 27 2-2zM1048 164l-2 2 -7 27 2-1zM1066 166l-2 1 -8 28 3-2z"/><path class="gt" d="M546 125l5 3 -4 1 -4-3zM560 126l5 3 -3 1 -5-3zM574 127l5 3 -3 1 -5-3zM588 128l5 3 -3 1 -5-2zM603 129l5 3 -3 1 -5-2zM617 130l5 3 -3 1 -5-2zM632 131l5 3 -3 1 -5-2zM647 132l5 3 -3 1 -6-2zM661 134l6 2 -3 2 -6-3zM676 135l6 2 -3 2 -6-3zM691 136l6 2 -3 2 -6-3zM707 137l5 3 -3 1 -5-3zM722 138l6 3 -3 1 -6-3zM737 139l6 3 -3 1 -6-2zM753 140l6 3 -3 1 -6-2zM769 141l6 3 -3 2 -6-3zM785 143l6 2 -3 2 -6-3zM800 144l7 3 -3 1 -6-3zM817 145l6 3 -3 1 -6-3zM833 146l7 3 -3 1 -7-2zM849 147l7 3 -3 2 -6-3zM866 149l7 2 -3 2 -7-3zM883 150l7 3 -3 1 -7-3zM899 151l8 3 -3 1 -7-2zM916 152l8 3 -3 2 -7-3zM934 154l7 3 -3 1 -7-3zM951 155l7 3 -2 1 -8-3zM968 156l8 3 -2 2 -8-3zM986 157l8 3 -3 2 -8-3zM1004 159l8 3 -3 1 -8-3zM1022 160l8 3 -3 2 -8-3zM1040 161l8 3 -2 2 -9-3zM1058 163l8 3 -2 1 -8-3z"/><path class="gm" d="M536 129l4 3 7 25 -4-3zM550 130l4 3 7 25 -5-3zM564 131l5 3 6 25 -5-3zM578 132l5 3 6 25 -5-3zM593 133l5 3 5 25 -5-3zM607 135l5 2 5 25 -5-2zM622 136l5 2 5 26 -5-3zM637 137l5 2 4 26 -5-3zM652 138l5 3 4 25 -5-3zM667 139l5 3 3 25 -5-3zM682 140l5 3 3 25 -5-2zM697 141l6 3 2 26 -5-3zM712 142l6 3 2 26 -5-3zM728 144l6 2 2 26 -6-3zM744 145l6 3 1 25 -6-3zM759 146l6 3 2 26 -6-3zM775 147l7 3 0 26 -6-3zM791 148l7 3 0 26 -6-3zM808 150l6 2 0 27 -7-3zM824 151l7 3 -1 26 -7-3zM840 152l7 3 -1 26 -7-3zM857 153l7 3 -2 27 -6-3zM874 155l7 3 -2 26 -7-3zM891 156l7 3 -3 26 -7-3zM908 157l7 3 -3 27 -7-3zM925 158l8 3 -4 27 -7-3zM942 160l8 3 -4 27 -7-4zM960 161l8 3 -5 27 -7-3zM978 162l8 3 -6 27 -7-3zM996 164l8 3 -6 27 -8-3zM1014 165l8 3 -6 27 -8-3zM1032 166l8 4 -7 27 -8-4zM1050 168l9 3 -8 27 -8-3zM1069 169l9 3 -9 28 -8-4z"/><path class="gb" d="M543 130l-3 2 7 25 3-2zM558 132l-4 1 7 25 3-2zM572 133l-3 1 6 25 3-2zM586 134l-3 1 6 25 3-1zM601 135l-3 1 5 25 3-1zM615 136l-3 1 5 25 3-1zM630 137l-3 1 5 26 3-2zM645 138l-3 1 4 26 3-2zM660 139l-3 2 4 25 3-1zM675 140l-3 2 3 25 3-1zM690 142l-3 1 3 25 3-1zM706 143l-3 1 2 26 3-2zM721 144l-3 1 2 26 3-2zM737 145l-3 1 2 26 3-1zM753 146l-3 2 1 25 3-1zM768 147l-3 2 2 26 2-2zM784 149l-2 1 0 26 3-1zM801 150l-3 1 0 26 3-1zM817 151l-3 1 0 27 3-2zM833 152l-2 2 -1 26 3-2zM850 153l-3 2 -1 26 3-1zM867 155l-3 1 -2 27 3-2zM884 156l-3 2 -2 26 2-2zM901 157l-3 2 -3 26 3-1zM918 159l-3 1 -3 27 3-2zM935 160l-2 1 -4 27 2-1zM953 161l-3 2 -4 27 2-2zM970 163l-2 1 -5 27 3-2zM988 164l-2 1 -6 27 3-1zM1006 165l-2 2 -6 27 2-2zM1024 167l-2 1 -6 27 2-1zM1043 168l-3 2 -7 27 3-2zM1061 169l-2 2 -8 27 3-1zM1080 171l-2 1 -9 28 3-2z"/><path class="gt" d="M539 128l4 2 -3 2 -4-3zM553 129l5 3 -4 1 -4-3zM567 130l5 3 -3 1 -5-3zM581 131l5 3 -3 1 -5-3zM596 132l5 3 -3 1 -5-3zM610 133l5 3 -3 1 -5-2zM625 134l5 3 -3 1 -5-2zM640 135l5 3 -3 1 -5-2zM655 137l5 2 -3 2 -5-3zM670 138l5 2 -3 2 -5-3zM685 139l5 3 -3 1 -5-3zM700 140l6 3 -3 1 -6-3zM715 141l6 3 -3 1 -6-3zM731 142l6 3 -3 1 -6-2zM746 143l7 3 -3 2 -6-3zM762 145l6 2 -3 2 -6-3zM778 146l6 3 -2 1 -7-3zM794 147l7 3 -3 1 -7-3zM810 148l7 3 -3 1 -6-2zM827 149l6 3 -2 2 -7-3zM843 151l7 2 -3 2 -7-3zM860 152l7 3 -3 1 -7-3zM877 153l7 3 -3 2 -7-3zM893 154l8 3 -3 2 -7-3zM911 156l7 3 -3 1 -7-3zM928 157l7 3 -2 1 -8-3zM945 158l8 3 -3 2 -8-3zM963 159l7 4 -2 1 -8-3zM980 161l8 3 -2 1 -8-3zM998 162l8 3 -2 2 -8-3zM1016 163l8 4 -2 1 -8-3zM1034 165l9 3 -3 2 -8-4zM1053 166l8 3 -2 2 -9-3zM1071 168l9 3 -2 1 -9-3z"/><path class="gm" d="M529 132l4 3 7 24 -4-2zM543 133l4 3 7 25 -5-3zM557 134l5 3 6 25 -5-3zM571 135l5 3 6 25 -5-3zM586 136l5 3 5 25 -5-3zM600 138l5 2 5 25 -4-2zM615 139l5 2 5 26 -5-3zM630 140l5 2 4 26 -5-3zM645 141l5 3 4 25 -5-3zM660 142l5 3 4 25 -5-3zM675 143l5 3 4 26 -6-3zM690 144l6 3 3 26 -6-3zM706 146l5 2 3 26 -6-3zM721 147l6 3 2 25 -6-3zM737 148l6 3 2 26 -6-3zM753 149l6 3 1 26 -6-3zM769 150l6 3 1 26 -6-3zM785 152l6 2 1 27 -7-3zM801 153l7 3 0 26 -7-3zM818 154l6 3 0 26 -7-3zM834 155l7 3 -1 27 -7-3zM851 157l7 3 -2 26 -6-3zM868 158l7 3 -2 26 -7-3zM885 159l7 3 -3 27 -7-3zM902 160l7 3 -3 27 -7-3zM919 162l8 3 -4 27 -7-4zM937 163l7 3 -4 27 -7-3zM954 164l8 4 -4 26 -8-3zM972 166l8 3 -5 27 -8-3zM990 167l8 3 -6 27 -7-3zM1008 168l8 4 -6 27 -8-3zM1026 170l9 3 -7 27 -8-3zM1045 171l9 4 -8 27 -8-3zM1064 173l8 3 -8 27 -8-3zM1082 174l9 3 -8 28 -9-3z"/><path class="gb" d="M536 133l-3 2 7 24 3-1zM550 134l-3 2 7 25 3-2zM565 136l-3 1 6 25 3-2zM579 137l-3 1 6 25 3-1zM594 138l-3 1 5 25 3-1zM608 139l-3 1 5 25 3-1zM623 140l-3 1 5 26 3-2zM638 141l-3 1 4 26 3-2zM653 142l-3 2 4 25 3-1zM668 143l-3 2 4 25 3-1zM684 145l-4 1 4 26 3-2zM699 146l-3 1 3 26 3-2zM714 147l-3 1 3 26 3-1zM730 148l-3 2 2 25 3-1zM746 149l-3 2 2 26 3-2zM762 151l-3 1 1 26 3-2zM778 152l-3 1 1 26 3-1zM794 153l-3 1 1 27 2-2zM811 154l-3 2 0 26 2-2zM827 156l-3 1 0 26 2-1zM844 157l-3 1 -1 27 3-2zM861 158l-3 2 -2 26 3-2zM878 159l-3 2 -2 26 2-1zM895 161l-3 1 -3 27 3-2zM912 162l-3 1 -3 27 3-1zM929 163l-2 2 -4 27 3-2zM947 165l-3 1 -4 27 3-2zM965 166l-3 2 -4 26 2-1zM983 167l-3 2 -5 27 2-2zM1001 169l-3 1 -6 27 3-1zM1019 170l-3 2 -6 27 3-2zM1037 171l-2 2 -7 27 2-1zM1056 173l-2 2 -8 27 2-2zM1075 174l-3 2 -8 27 3-1zM1094 176l-3 1 -8 28 2-2z"/><path class="gt" d="M532 131l4 2 -3 2 -4-3zM546 132l4 2 -3 2 -4-3zM560 133l5 3 -3 1 -5-3zM574 134l5 3 -3 1 -5-3zM589 135l5 3 -3 1 -5-3zM603 136l5 3 -3 1 -5-2zM618 137l5 3 -3 1 -5-2zM633 138l5 3 -3 1 -5-2zM648 140l5 2 -3 2 -5-3zM663 141l5 2 -3 2 -5-3zM678 142l6 3 -4 1 -5-3zM693 143l6 3 -3 1 -6-3zM709 144l5 3 -3 1 -5-2zM724 145l6 3 -3 2 -6-3zM740 147l6 2 -3 2 -6-3zM756 148l6 3 -3 1 -6-3zM772 149l6 3 -3 1 -6-3zM788 150l6 3 -3 1 -6-2zM804 151l7 3 -3 2 -7-3zM820 153l7 3 -3 1 -6-3zM837 154l7 3 -3 1 -7-3zM854 155l7 3 -3 2 -7-3zM870 156l8 3 -3 2 -7-3zM887 158l8 3 -3 1 -7-3zM905 159l7 3 -3 1 -7-3zM922 160l7 3 -2 2 -8-3zM939 162l8 3 -3 1 -7-3zM957 163l8 3 -3 2 -8-4zM975 164l8 3 -3 2 -8-3zM993 166l8 3 -3 1 -8-3zM1011 167l8 3 -3 2 -8-4zM1029 168l8 3 -2 2 -9-3zM1047 170l9 3 -2 2 -9-4zM1066 171l9 3 -3 2 -8-3zM1085 172l9 4 -3 1 -9-3z"/><path class="gm" d="M521 135l5 3 7 24 -4-2zM535 136l5 3 7 25 -5-3zM550 137l4 3 7 25 -5-3zM564 138l5 3 6 25 -5-3zM579 139l4 3 6 25 -5-3zM593 141l5 2 6 25 -5-2zM608 142l5 2 5 26 -5-3zM623 143l5 3 5 25 -5-3zM638 144l5 3 4 25 -5-3zM653 145l5 3 4 25 -5-2zM668 146l6 3 3 26 -5-3zM683 147l6 3 3 26 -5-3zM699 149l6 3 2 25 -5-3zM715 150l5 3 3 26 -6-3zM730 151l6 3 2 26 -6-3zM746 152l6 3 2 26 -6-3zM762 154l7 2 1 27 -7-3zM778 155l7 3 0 26 -6-3zM795 156l6 3 0 26 -6-3zM811 157l7 3 0 27 -7-3zM828 159l7 3 -1 26 -7-3zM845 160l7 3 -2 26 -6-3zM862 161l7 3 -2 27 -7-3zM879 162l7 4 -2 26 -7-3zM896 164l7 3 -3 27 -7-4zM913 165l8 3 -4 27 -7-3zM931 166l7 4 -3 26 -8-3zM949 168l7 3 -4 27 -8-3zM966 169l8 3 -5 27 -7-3zM984 171l9 3 -6 27 -8-3zM1003 172l8 3 -6 27 -8-3zM1021 173l8 4 -6 27 -8-3zM1039 175l9 3 -7 27 -9-3zM1058 176l9 4 -8 27 -8-3zM1077 178l9 3 -8 28 -9-4zM1096 179l9 4 -9 27 -9-3z"/><path class="gb" d="M529 136l-3 2 7 24 3-1zM543 137l-3 2 7 25 3-2zM558 139l-4 1 7 25 3-2zM572 140l-3 1 6 25 3-1zM587 141l-4 1 6 25 3-1zM601 142l-3 1 6 25 3-1zM616 143l-3 1 5 26 3-2zM631 144l-3 2 5 25 3-1zM646 145l-3 2 4 25 3-1zM661 147l-3 1 4 25 3-1zM677 148l-3 1 3 26 3-2zM692 149l-3 1 3 26 3-1zM708 150l-3 2 2 25 3-1zM723 151l-3 2 3 26 3-2zM739 153l-3 1 2 26 3-2zM755 154l-3 1 2 26 3-1zM772 155l-3 1 1 27 2-2zM788 156l-3 2 0 26 3-2zM804 158l-3 1 0 26 3-1zM821 159l-3 1 0 27 2-2zM838 160l-3 2 -1 26 3-2zM854 161l-2 2 -2 26 3-1zM871 163l-2 1 -2 27 2-2zM889 164l-3 2 -2 26 2-1zM906 165l-3 2 -3 27 3-2zM923 167l-2 1 -4 27 3-2zM941 168l-3 2 -3 26 2-1zM959 169l-3 2 -4 27 2-2zM977 171l-3 1 -5 27 3-1zM995 172l-2 2 -6 27 2-2zM1013 174l-2 1 -6 27 2-1zM1032 175l-3 2 -6 27 2-2zM1051 176l-3 2 -7 27 2-1zM1069 178l-2 2 -8 27 2-2zM1088 179l-2 2 -8 28 2-2zM1108 181l-3 2 -9 27 2-2z"/><path class="gt" d="M525 134l4 2 -3 2 -5-3zM539 135l4 2 -3 2 -5-3zM553 136l5 3 -4 1 -4-3zM567 137l5 3 -3 1 -5-3zM582 138l5 3 -4 1 -4-3zM596 139l5 3 -3 1 -5-2zM611 140l5 3 -3 1 -5-2zM626 141l5 3 -3 2 -5-3zM641 143l5 2 -3 2 -5-3zM656 144l5 3 -3 1 -5-3zM671 145l6 3 -3 1 -6-3zM687 146l5 3 -3 1 -6-3zM702 147l6 3 -3 2 -6-3zM718 148l5 3 -3 2 -5-3zM733 150l6 3 -3 1 -6-3zM749 151l6 3 -3 1 -6-3zM765 152l7 3 -3 1 -7-2zM781 153l7 3 -3 2 -7-3zM798 155l6 3 -3 1 -6-3zM814 156l7 3 -3 1 -7-3zM831 157l7 3 -3 2 -7-3zM847 158l7 3 -2 2 -7-3zM864 160l7 3 -2 1 -7-3zM881 161l8 3 -3 2 -7-4zM899 162l7 3 -3 2 -7-3zM916 164l7 3 -2 1 -8-3zM933 165l8 3 -3 2 -7-4zM951 166l8 3 -3 2 -7-3zM969 168l8 3 -3 1 -8-3zM987 169l8 3 -2 2 -9-3zM1005 170l8 4 -2 1 -8-3zM1023 172l9 3 -3 2 -8-4zM1042 173l9 3 -3 2 -9-3zM1061 175l8 3 -2 2 -9-4zM1079 176l9 3 -2 2 -9-3zM1098 178l10 3 -3 2 -9-4z"/><path class="gm" d="M514 138l4 3 8 24 -5-2zM528 139l5 3 7 25 -5-3zM542 140l5 3 7 25 -5-3zM557 141l5 3 6 25 -5-3zM571 142l5 3 6 25 -5-2zM586 144l5 2 6 26 -5-3zM601 145l5 2 5 26 -5-3zM616 146l5 3 5 25 -5-3zM631 147l5 3 4 25 -5-3zM646 148l5 3 4 26 -5-3zM661 149l6 3 3 26 -5-3zM677 151l5 2 4 26 -6-3zM692 152l6 3 3 25 -6-2zM708 153l6 3 2 26 -6-3zM724 154l6 3 2 26 -6-3zM740 156l6 2 1 26 -6-3zM756 157l6 3 1 26 -6-3zM772 158l6 3 1 26 -6-3zM788 159l7 3 0 27 -6-3zM805 161l7 3 -1 26 -6-3zM822 162l6 3 0 26 -7-3zM838 163l7 3 -1 27 -7-3zM855 165l7 3 -1 26 -7-3zM873 166l7 3 -2 27 -7-4zM890 167l7 3 -3 27 -7-3zM907 169l8 3 -3 27 -8-4zM925 170l8 3 -4 27 -8-3zM943 171l7 4 -4 27 -7-4zM961 173l8 3 -5 27 -8-3zM979 174l8 3 -6 28 -7-4zM997 176l8 3 -6 27 -8-3zM1015 177l9 3 -7 28 -8-4zM1034 178l9 4 -8 27 -8-3zM1053 180l9 3 -8 28 -9-4zM1072 181l9 4 -9 27 -8-3zM1091 183l9 3 -9 28 -9-4zM1110 184l10 4 -10 28 -9-4z"/><path class="gb" d="M522 139l-4 2 8 24 3-1zM536 140l-3 2 7 25 3-2zM550 142l-3 1 7 25 3-1zM565 143l-3 1 6 25 3-1zM579 144l-3 1 6 25 3-1zM594 145l-3 1 6 26 3-2zM609 146l-3 1 5 26 3-2zM624 147l-3 2 5 25 3-1zM639 148l-3 2 4 25 4-1zM654 150l-3 1 4 26 3-2zM670 151l-3 1 3 26 3-2zM685 152l-3 1 4 26 3-1zM701 153l-3 2 3 25 3-1zM717 154l-3 2 2 26 3-2zM733 156l-3 1 2 26 3-1zM749 157l-3 1 1 26 3-1zM765 158l-3 2 1 26 3-2zM781 160l-3 1 1 26 3-1zM798 161l-3 1 0 27 3-2zM814 162l-2 2 -1 26 3-2zM831 163l-3 2 0 26 2-1zM848 165l-3 1 -1 27 3-2zM865 166l-3 2 -1 26 2-1zM883 167l-3 2 -2 27 2-2zM900 169l-3 1 -3 27 3-1zM917 170l-2 2 -3 27 2-2zM935 172l-2 1 -4 27 2-2zM953 173l-3 2 -4 27 3-2zM971 174l-2 2 -5 27 2-2zM989 176l-2 1 -6 28 3-2zM1008 177l-3 2 -6 27 3-2zM1026 179l-2 1 -7 28 3-2zM1045 180l-2 2 -8 27 3-1zM1064 182l-2 1 -8 28 2-2zM1083 183l-2 2 -9 27 3-1zM1102 185l-2 1 -9 28 2-2zM1122 186l-2 2 -10 28 2-2z"/><path class="gt" d="M517 137l5 2 -4 2 -4-3zM531 138l5 2 -3 2 -5-3zM546 139l4 3 -3 1 -5-3zM560 140l5 3 -3 1 -5-3zM575 141l4 3 -3 1 -5-3zM589 142l5 3 -3 1 -5-2zM604 143l5 3 -3 1 -5-2zM619 145l5 2 -3 2 -5-3zM634 146l5 2 -3 2 -5-3zM649 147l5 3 -3 1 -5-3zM664 148l6 3 -3 1 -6-3zM680 149l5 3 -3 1 -5-2zM695 150l6 3 -3 2 -6-3zM711 152l6 2 -3 2 -6-3zM727 153l6 3 -3 1 -6-3zM743 154l6 3 -3 1 -6-2zM759 155l6 3 -3 2 -6-3zM775 157l6 3 -3 1 -6-3zM791 158l7 3 -3 1 -7-3zM808 159l6 3 -2 2 -7-3zM824 160l7 3 -3 2 -6-3zM841 162l7 3 -3 1 -7-3zM858 163l7 3 -3 2 -7-3zM875 164l8 3 -3 2 -7-3zM893 166l7 3 -3 1 -7-3zM910 167l7 3 -2 2 -8-3zM928 168l7 4 -2 1 -8-3zM945 170l8 3 -3 2 -7-4zM963 171l8 3 -2 2 -8-3zM981 173l8 3 -2 1 -8-3zM999 174l9 3 -3 2 -8-3zM1018 175l8 4 -2 1 -9-3zM1036 177l9 3 -2 2 -9-4zM1055 178l9 4 -2 1 -9-3zM1074 180l9 3 -2 2 -9-4zM1093 181l9 4 -2 1 -9-3zM1113 183l9 3 -2 2 -10-4z"/><path class="gm" d="M506 141l5 3 7 25 -4-3zM521 142l4 3 7 25 -4-3zM535 143l5 3 7 25 -5-3zM549 144l5 3 7 25 -5-3zM564 145l5 3 6 25 -5-2zM579 147l5 2 6 26 -5-3zM594 148l5 3 5 25 -5-3zM609 149l5 3 5 25 -5-3zM624 150l5 3 5 26 -6-3zM639 151l5 3 5 26 -6-3zM654 153l6 2 4 26 -6-3zM670 154l5 3 4 25 -6-3zM685 155l6 3 3 26 -6-3zM701 156l6 3 3 26 -6-3zM717 158l6 2 2 26 -6-3zM733 159l6 3 2 26 -6-3zM749 160l6 3 2 26 -6-3zM765 161l7 3 1 27 -7-4zM782 163l6 3 1 26 -7-3zM798 164l7 3 0 26 -6-3zM815 165l7 3 -1 27 -6-3zM832 167l7 3 -1 26 -7-3zM849 168l7 3 -1 27 -7-3zM866 169l8 3 -3 27 -7-3zM884 171l7 3 -3 27 -7-4zM901 172l8 3 -3 27 -8-3zM919 173l8 4 -4 27 -8-4zM937 175l8 3 -5 27 -7-3zM955 176l8 4 -5 27 -8-4zM973 178l8 3 -5 27 -8-3zM991 179l9 3 -6 28 -8-4zM1010 181l8 3 -6 27 -8-3zM1028 182l9 3 -7 28 -8-4zM1047 184l9 3 -8 28 -8-4zM1066 185l9 4 -8 27 -9-3zM1086 187l9 3 -9 28 -9-4zM1105 188l9 4 -9 27 -9-3zM1125 190l9 3 -10 28 -9-3z"/><path class="gb" d="M514 142l-3 2 7 25 4-2zM529 143l-4 2 7 25 4-2zM543 145l-3 1 7 25 3-1zM557 146l-3 1 7 25 3-1zM572 147l-3 1 6 25 3-1zM587 148l-3 1 6 26 3-2zM602 149l-3 2 5 25 3-1zM617 150l-3 2 5 25 3-1zM632 152l-3 1 5 26 3-2zM647 153l-3 1 5 26 3-2zM663 154l-3 1 4 26 3-1zM678 155l-3 2 4 25 3-1zM694 156l-3 2 3 26 3-2zM710 158l-3 1 3 26 3-1zM726 159l-3 1 2 26 3-1zM742 160l-3 2 2 26 3-2zM758 162l-3 1 2 26 3-1zM775 163l-3 1 1 27 3-2zM791 164l-3 2 1 26 3-2zM808 165l-3 2 0 26 3-1zM825 167l-3 1 -1 27 3-2zM842 168l-3 2 -1 26 3-1zM859 170l-3 1 -1 27 2-2zM876 171l-2 1 -3 27 3-1zM894 172l-3 2 -3 27 3-2zM911 174l-2 1 -3 27 2-1zM929 175l-2 2 -4 27 3-2zM947 176l-2 2 -5 27 3-1zM965 178l-2 2 -5 27 3-2zM984 179l-3 2 -5 27 2-1zM1002 181l-2 1 -6 28 2-2zM1021 182l-3 2 -6 27 2-1zM1040 184l-3 1 -7 28 2-2zM1059 185l-3 2 -8 28 3-2zM1078 187l-3 2 -8 27 2-2zM1097 188l-2 2 -9 28 2-2zM1117 190l-3 2 -9 27 2-1zM1136 191l-2 2 -10 28 2-2z"/><path class="gt" d="M510 140l4 2 -3 2 -5-3zM524 141l5 2 -4 2 -4-3zM538 142l5 3 -3 1 -5-3zM553 143l4 3 -3 1 -5-3zM567 144l5 3 -3 1 -5-3zM582 145l5 3 -3 1 -5-2zM597 146l5 3 -3 2 -5-3zM612 148l5 2 -3 2 -5-3zM627 149l5 3 -3 1 -5-3zM642 150l5 3 -3 1 -5-3zM657 151l6 3 -3 1 -6-2zM673 152l5 3 -3 2 -5-3zM688 154l6 2 -3 2 -6-3zM704 155l6 3 -3 1 -6-3zM720 156l6 3 -3 1 -6-2zM736 157l6 3 -3 2 -6-3zM752 159l6 3 -3 1 -6-3zM768 160l7 3 -3 1 -7-3zM785 161l6 3 -3 2 -6-3zM801 162l7 3 -3 2 -7-3zM818 164l7 3 -3 1 -7-3zM835 165l7 3 -3 2 -7-3zM852 166l7 4 -3 1 -7-3zM869 168l7 3 -2 1 -8-3zM886 169l8 3 -3 2 -7-3zM904 170l7 4 -2 1 -8-3zM922 172l7 3 -2 2 -8-4zM939 173l8 3 -2 2 -8-3zM957 175l8 3 -2 2 -8-4zM975 176l9 3 -3 2 -8-3zM994 178l8 3 -2 1 -9-3zM1012 179l9 3 -3 2 -8-3zM1031 180l9 4 -3 1 -9-3zM1050 182l9 3 -3 2 -9-3zM1069 183l9 4 -3 2 -9-4zM1088 185l9 3 -2 2 -9-3zM1107 186l10 4 -3 2 -9-4zM1127 188l9 3 -2 2 -9-3z"/><path class="gm" d="M499 144l4 3 8 25 -4-3zM513 145l5 3 7 25 -4-3zM528 146l4 3 7 25 -4-3zM542 147l5 3 7 25 -5-3zM557 149l5 2 6 26 -5-3zM571 150l5 3 6 25 -4-3zM586 151l5 3 6 25 -5-3zM601 152l5 3 6 25 -5-2zM616 153l6 3 5 26 -5-3zM632 155l5 2 5 26 -6-3zM647 156l6 3 4 25 -6-3zM663 157l5 3 4 26 -5-3zM678 158l6 3 3 26 -5-3zM694 160l6 2 3 26 -6-3zM710 161l6 3 2 26 -5-3zM726 162l6 3 2 26 -6-3zM742 163l7 3 1 27 -6-4zM759 165l6 3 1 26 -6-3zM775 166l7 3 0 26 -6-3zM792 167l6 3 1 27 -7-3zM809 169l6 3 0 26 -6-3zM826 170l7 3 -1 27 -7-3zM843 171l7 4 -2 26 -6-3zM860 173l7 3 -2 27 -7-4zM877 174l8 3 -3 27 -7-3zM895 176l8 3 -3 27 -8-4zM913 177l7 3 -3 27 -7-3zM931 178l8 4 -5 27 -7-4zM949 180l8 3 -5 27 -8-3zM967 181l8 4 -5 27 -8-3zM985 183l9 3 -6 28 -8-4zM1004 184l9 4 -7 27 -8-3zM1023 186l8 3 -6 28 -9-4zM1042 187l9 4 -8 27 -8-3zM1061 189l9 3 -8 28 -9-4zM1080 190l9 4 -8 28 -9-4zM1100 192l9 3 -9 28 -9-3zM1119 194l10 3 -10 28 -9-4zM1139 195l10 4 -11 28 -9-4z"/><path class="gb" d="M507 145l-4 2 8 25 3-2zM521 146l-3 2 7 25 3-2zM536 148l-4 1 7 25 4-1zM550 149l-3 1 7 25 3-1zM565 150l-3 1 6 26 3-2zM580 151l-4 2 6 25 4-2zM595 152l-4 2 6 25 3-1zM610 154l-4 1 6 25 3-1zM625 155l-3 1 5 26 3-2zM640 156l-3 1 5 26 3-1zM656 157l-3 2 4 25 3-1zM671 158l-3 2 4 26 3-2zM687 160l-3 1 3 26 3-1zM703 161l-3 1 3 26 3-1zM719 162l-3 2 2 26 3-2zM735 164l-3 1 2 26 3-1zM752 165l-3 1 1 27 3-2zM768 166l-3 2 1 26 3-2zM785 168l-3 1 0 26 3-1zM801 169l-3 1 1 27 2-2zM818 170l-3 2 0 26 3-1zM835 172l-2 1 -1 27 3-2zM853 173l-3 2 -2 26 3-1zM870 174l-3 2 -2 27 3-2zM888 176l-3 1 -3 27 3-1zM905 177l-2 2 -3 27 2-2zM923 179l-3 1 -3 27 3-1zM941 180l-2 2 -5 27 3-2zM959 182l-2 1 -5 27 3-1zM978 183l-3 2 -5 27 3-2zM996 185l-2 1 -6 28 3-2zM1015 186l-2 2 -7 27 3-2zM1034 188l-3 1 -6 28 2-2zM1053 189l-2 2 -8 27 2-1zM1072 191l-2 1 -8 28 2-2zM1092 192l-3 2 -8 28 2-2zM1111 194l-2 1 -9 28 2-1zM1131 195l-2 2 -10 28 2-2zM1151 197l-2 2 -11 28 3-2z"/><path class="gt" d="M502 143l5 2 -4 2 -4-3zM517 144l4 2 -3 2 -5-3zM531 145l5 3 -4 1 -4-3zM545 146l5 3 -3 1 -5-3zM560 147l5 3 -3 1 -5-2zM575 148l5 3 -4 2 -5-3zM590 150l5 2 -4 2 -5-3zM605 151l5 3 -4 1 -5-3zM620 152l5 3 -3 1 -6-3zM635 153l5 3 -3 1 -5-2zM650 154l6 3 -3 2 -6-3zM666 156l5 2 -3 2 -5-3zM681 157l6 3 -3 1 -6-3zM697 158l6 3 -3 1 -6-2zM713 159l6 3 -3 2 -6-3zM729 161l6 3 -3 1 -6-3zM745 162l7 3 -3 1 -7-3zM762 163l6 3 -3 2 -6-3zM778 164l7 4 -3 1 -7-3zM795 166l6 3 -3 1 -6-3zM812 167l6 3 -3 2 -6-3zM829 168l6 4 -2 1 -7-3zM846 170l7 3 -3 2 -7-4zM863 171l7 3 -3 2 -7-3zM880 173l8 3 -3 1 -8-3zM898 174l7 3 -2 2 -8-3zM916 175l7 4 -3 1 -7-3zM933 177l8 3 -2 2 -8-4zM951 178l8 4 -2 1 -8-3zM970 180l8 3 -3 2 -8-4zM988 181l8 4 -2 1 -9-3zM1007 183l8 3 -2 2 -9-4zM1025 184l9 4 -3 1 -8-3zM1044 186l9 3 -2 2 -9-4zM1063 187l9 4 -2 1 -9-3zM1083 189l9 3 -3 2 -9-4zM1102 190l9 4 -2 1 -9-3zM1122 192l9 3 -2 2 -10-3zM1142 193l9 4 -2 2 -10-4z"/><path class="gm" d="M491 147l5 3 8 25 -4-3zM506 148l4 3 8 25 -4-3zM520 149l5 3 7 25 -4-3zM535 150l4 3 7 25 -4-2zM549 152l5 2 7 26 -5-3zM564 153l5 3 6 25 -4-3zM579 154l5 3 6 25 -5-3zM594 155l5 3 6 26 -5-3zM609 156l5 3 6 26 -5-3zM625 158l5 3 5 25 -6-3zM640 159l5 3 5 26 -6-3zM656 160l5 3 4 26 -5-3zM671 162l6 3 3 25 -5-3zM687 163l6 3 3 26 -6-3zM703 164l6 3 3 26 -6-3zM719 165l6 3 3 27 -6-4zM736 167l6 3 1 26 -6-3zM752 168l6 3 2 26 -7-3zM769 169l6 4 1 26 -7-3zM785 171l7 3 0 26 -6-3zM802 172l7 3 0 27 -7-3zM819 173l7 4 -1 26 -6-3zM836 175l7 3 -1 27 -7-3zM854 176l7 4 -2 26 -7-3zM871 178l7 3 -2 27 -7-3zM889 179l7 3 -2 27 -8-3zM907 181l7 3 -3 27 -7-3zM925 182l7 3 -3 28 -8-4zM943 184l8 3 -5 27 -7-3zM961 185l8 3 -5 28 -8-4zM980 186l8 4 -6 27 -8-3zM998 188l9 3 -6 28 -9-4zM1017 190l9 3 -7 28 -8-4zM1036 191l9 4 -7 27 -9-3zM1055 193l9 3 -8 28 -8-4zM1075 194l9 4 -9 28 -9-4zM1094 196l10 3 -10 28 -9-3zM1114 197l10 4 -10 28 -9-4zM1134 199l10 4 -11 28 -9-4zM1154 201l10 3 -11 28 -10-3z"/><path class="gb" d="M499 148l-3 2 8 25 3-2zM514 149l-4 2 8 25 3-1zM528 151l-3 1 7 25 3-1zM543 152l-4 1 7 25 4-1zM557 153l-3 1 7 26 3-2zM572 154l-3 2 6 25 4-1zM587 155l-3 2 6 25 3-1zM602 157l-3 1 6 26 3-2zM618 158l-4 1 6 26 3-1zM633 159l-3 2 5 25 3-1zM649 160l-4 2 5 26 3-2zM664 162l-3 1 4 26 3-1zM680 163l-3 2 3 25 4-1zM696 164l-3 2 3 26 3-2zM712 166l-3 1 3 26 3-1zM728 167l-3 1 3 27 3-2zM745 168l-3 2 1 26 3-2zM761 170l-3 1 2 26 3-1zM778 171l-3 2 1 26 3-2zM795 172l-3 2 0 26 3-1zM812 174l-3 1 0 27 3-2zM829 175l-3 2 -1 26 3-1zM846 176l-3 2 -1 27 3-2zM864 178l-3 2 -2 26 3-1zM881 179l-3 2 -2 27 3-2zM899 181l-3 1 -2 27 2-1zM917 182l-3 2 -3 27 3-2zM935 184l-3 1 -3 28 2-2zM953 185l-2 2 -5 27 3-2zM972 187l-3 1 -5 28 3-2zM991 188l-3 2 -6 27 3-1zM1009 190l-2 1 -6 28 2-2zM1028 191l-2 2 -7 28 3-2zM1048 193l-3 2 -7 27 2-2zM1067 194l-3 2 -8 28 3-2zM1086 196l-2 2 -9 28 3-2zM1106 198l-2 1 -10 28 3-2zM1126 199l-2 2 -10 28 2-2zM1146 201l-2 2 -11 28 3-2zM1167 203l-3 1 -11 28 2-1z"/><path class="gt" d="M495 146l4 2 -3 2 -5-3zM509 147l5 2 -4 2 -4-3zM523 148l5 3 -3 1 -5-3zM538 149l5 3 -4 1 -4-3zM553 150l4 3 -3 1 -5-2zM567 151l5 3 -3 2 -5-3zM582 153l5 2 -3 2 -5-3zM597 154l5 3 -3 1 -5-3zM613 155l5 3 -4 1 -5-3zM628 156l5 3 -3 2 -5-3zM643 158l6 2 -4 2 -5-3zM659 159l5 3 -3 1 -5-3zM674 160l6 3 -3 2 -6-3zM690 161l6 3 -3 2 -6-3zM706 163l6 3 -3 1 -6-3zM722 164l6 3 -3 1 -6-3zM739 165l6 3 -3 2 -6-3zM755 167l6 3 -3 1 -6-3zM772 168l6 3 -3 2 -6-4zM788 169l7 3 -3 2 -7-3zM805 171l7 3 -3 1 -7-3zM822 172l7 3 -3 2 -7-4zM839 173l7 3 -3 2 -7-3zM857 175l7 3 -3 2 -7-4zM874 176l7 3 -3 2 -7-3zM892 178l7 3 -3 1 -7-3zM909 179l8 3 -3 2 -7-3zM927 180l8 4 -3 1 -7-3zM945 182l8 3 -2 2 -8-3zM964 183l8 4 -3 1 -8-3zM982 185l9 3 -3 2 -8-4zM1001 186l8 4 -2 1 -9-3zM1020 188l8 3 -2 2 -9-3zM1039 189l9 4 -3 2 -9-4zM1058 191l9 3 -3 2 -9-3zM1077 192l9 4 -2 2 -9-4zM1097 194l9 4 -2 1 -10-3zM1117 196l9 3 -2 2 -10-4zM1137 197l9 4 -2 2 -10-4zM1157 199l10 4 -3 1 -10-3z"/><path class="gm" d="M484 150l4 3 8 25 -4-3zM498 151l4 3 8 25 -4-3zM513 152l4 3 8 25 -5-2zM527 154l5 2 7 26 -5-3zM542 155l5 3 6 25 -4-3zM557 156l5 3 6 25 -5-3zM572 157l5 3 6 26 -5-3zM587 158l5 3 6 26 -5-3zM602 160l5 3 6 25 -6-3zM617 161l6 3 5 26 -6-3zM633 162l5 3 5 26 -6-3zM648 164l6 3 4 25 -5-3zM664 165l6 3 4 26 -6-3zM680 166l6 3 3 26 -5-3zM696 167l6 4 3 26 -6-4zM712 169l6 3 3 26 -6-3zM729 170l6 3 2 27 -6-4zM745 171l6 4 2 26 -6-3zM762 173l6 3 1 26 -6-3zM779 174l6 3 1 27 -7-3zM795 176l7 3 0 26 -6-3zM813 177l6 3 0 27 -7-3zM830 178l7 4 -1 26 -7-3zM847 180l7 3 -1 27 -7-3zM865 181l7 4 -2 27 -7-4zM883 183l7 3 -3 27 -7-3zM900 184l8 4 -3 27 -7-4zM918 186l8 3 -3 27 -8-3zM937 187l8 4 -5 27 -7-4zM955 189l8 3 -5 27 -7-3zM974 190l8 4 -5 27 -8-3zM992 192l9 3 -6 28 -8-4zM1011 193l9 4 -7 27 -8-3zM1031 195l8 3 -7 28 -8-4zM1050 196l9 4 -8 28 -9-4zM1069 198l10 4 -9 28 -9-4zM1089 200l9 3 -9 28 -9-3zM1109 201l10 4 -10 28 -10-4zM1129 203l10 4 -11 28 -9-4zM1149 205l10 3 -11 29 -10-4zM1170 206l10 4 -12 28 -10-3z"/><path class="gb" d="M491 151l-3 2 8 25 4-2zM506 153l-4 1 8 25 4-1zM520 154l-3 1 8 25 3-1zM535 155l-3 1 7 26 3-2zM550 156l-3 2 6 25 4-1zM565 157l-3 2 6 25 3-1zM580 159l-3 1 6 26 3-2zM595 160l-3 1 6 26 3-2zM610 161l-3 2 6 25 3-1zM626 162l-3 2 5 26 3-2zM641 164l-3 1 5 26 3-1zM657 165l-3 2 4 25 3-1zM673 166l-3 2 4 26 3-2zM689 168l-3 1 3 26 3-1zM705 169l-3 2 3 26 3-2zM722 170l-4 2 3 26 3-1zM738 172l-3 1 2 27 3-2zM755 173l-4 2 2 26 3-2zM771 174l-3 2 1 26 3-1zM788 176l-3 1 1 27 3-2zM805 177l-3 2 0 26 3-1zM822 179l-3 1 0 27 3-2zM840 180l-3 2 -1 26 3-1zM857 181l-3 2 -1 27 3-2zM875 183l-3 2 -2 27 3-2zM893 184l-3 2 -3 27 3-2zM911 186l-3 2 -3 27 3-2zM929 187l-3 2 -3 27 2-1zM947 189l-2 2 -5 27 3-2zM966 190l-3 2 -5 27 3-1zM985 192l-3 2 -5 27 2-2zM1004 194l-3 1 -6 28 2-2zM1023 195l-3 2 -7 27 3-1zM1042 197l-3 1 -7 28 3-2zM1061 198l-2 2 -8 28 2-2zM1081 200l-2 2 -9 28 2-2zM1101 202l-3 1 -9 28 3-2zM1121 203l-2 2 -10 28 2-2zM1141 205l-2 2 -11 28 2-2zM1162 207l-3 1 -11 29 2-2zM1182 208l-2 2 -12 28 2-1z"/><path class="gt" d="M487 149l4 2 -3 2 -4-3zM501 150l5 3 -4 1 -4-3zM516 151l4 3 -3 1 -4-3zM531 152l4 3 -3 1 -5-2zM545 153l5 3 -3 2 -5-3zM560 155l5 2 -3 2 -5-3zM575 156l5 3 -3 1 -5-3zM590 157l5 3 -3 1 -5-3zM605 158l5 3 -3 2 -5-3zM621 160l5 2 -3 2 -6-3zM636 161l5 3 -3 1 -5-3zM652 162l5 3 -3 2 -6-3zM667 163l6 3 -3 2 -6-3zM683 165l6 3 -3 1 -6-3zM699 166l6 3 -3 2 -6-4zM715 167l7 3 -4 2 -6-3zM732 169l6 3 -3 1 -6-3zM748 170l7 3 -4 2 -6-4zM765 171l6 3 -3 2 -6-3zM782 173l6 3 -3 1 -6-3zM798 174l7 3 -3 2 -7-3zM816 175l6 4 -3 1 -6-3zM833 177l7 3 -3 2 -7-4zM850 178l7 3 -3 2 -7-3zM868 180l7 3 -3 2 -7-4zM885 181l8 3 -3 2 -7-3zM903 183l8 3 -3 2 -8-4zM921 184l8 3 -3 2 -8-3zM939 186l8 3 -2 2 -8-4zM958 187l8 3 -3 2 -8-3zM976 189l9 3 -3 2 -8-4zM995 190l9 4 -3 1 -9-3zM1014 192l9 3 -3 2 -9-4zM1033 193l9 4 -3 1 -8-3zM1052 195l9 3 -2 2 -9-4zM1072 196l9 4 -2 2 -10-4zM1091 198l10 4 -3 1 -9-3zM1111 200l10 3 -2 2 -10-4zM1131 201l10 4 -2 2 -10-4zM1152 203l10 4 -3 1 -10-3zM1172 204l10 4 -2 2 -10-4z"/><path class="gm" d="M476 153l4 3 9 25 -4-3zM490 154l5 3 8 25 -4-3zM505 155l4 3 8 26 -4-3zM519 157l5 3 8 25 -5-3zM534 158l5 3 7 25 -4-3zM549 159l5 3 7 26 -5-3zM564 160l5 3 6 26 -4-3zM579 162l5 3 6 25 -5-3zM595 163l5 3 5 26 -5-3zM610 164l5 3 5 26 -5-3zM626 166l5 3 5 25 -6-3zM641 167l6 3 4 26 -5-3zM657 168l6 3 4 26 -6-3zM673 169l6 4 3 26 -5-4zM689 171l6 3 3 26 -6-3zM705 172l6 3 3 27 -6-4zM722 174l6 3 2 26 -6-3zM738 175l7 3 1 26 -6-3zM755 176l6 3 2 27 -7-3zM772 178l6 3 1 26 -6-3zM789 179l7 3 0 27 -7-3zM806 181l7 3 0 27 -7-4zM823 182l7 3 -1 27 -6-3zM841 183l7 4 -1 27 -7-4zM858 185l8 3 -2 27 -7-3zM876 186l8 4 -3 27 -7-4zM894 188l8 3 -3 27 -8-3zM912 189l8 4 -3 27 -8-3zM931 191l8 3 -5 28 -7-4zM949 192l8 4 -4 27 -8-3zM968 194l8 3 -5 28 -8-4zM987 196l8 3 -6 28 -8-4zM1006 197l8 4 -6 27 -9-3zM1025 199l9 3 -7 28 -9-4zM1044 200l9 4 -8 28 -8-4zM1064 202l9 4 -8 28 -9-4zM1084 204l9 3 -9 28 -9-3zM1104 205l9 4 -10 28 -9-4zM1124 207l10 4 -11 28 -9-4zM1144 209l10 3 -11 29 -10-4zM1165 210l10 4 -12 29 -10-4zM1186 212l10 4 -13 28 -10-4z"/><path class="gb" d="M484 154l-4 2 9 25 3-1zM498 156l-3 1 8 25 3-1zM513 157l-4 1 8 26 4-2zM528 158l-4 2 8 25 3-2zM542 159l-3 2 7 25 3-1zM557 161l-3 1 7 26 3-2zM572 162l-3 1 6 26 4-2zM588 163l-4 2 6 25 4-1zM603 164l-3 2 5 26 4-2zM619 166l-4 1 5 26 4-1zM634 167l-3 2 5 25 3-1zM650 168l-3 2 4 26 3-2zM666 170l-3 1 4 26 3-1zM682 171l-3 2 3 26 3-2zM698 172l-3 2 3 26 3-1zM715 174l-4 1 3 27 3-2zM731 175l-3 2 2 26 3-2zM748 177l-3 1 1 26 3-1zM764 178l-3 1 2 27 3-2zM781 179l-3 2 1 26 3-1zM799 181l-3 1 0 27 3-2zM816 182l-3 2 0 27 2-2zM833 184l-3 1 -1 27 3-2zM851 185l-3 2 -1 27 2-2zM869 187l-3 1 -2 27 3-1zM887 188l-3 2 -3 27 3-2zM905 190l-3 1 -3 27 3-1zM923 191l-3 2 -3 27 2-2zM941 193l-2 1 -5 28 3-2zM960 194l-3 2 -4 27 2-1zM979 196l-3 1 -5 28 2-2zM998 197l-3 2 -6 28 3-2zM1017 199l-3 2 -6 27 2-1zM1036 201l-2 1 -7 28 2-2zM1056 202l-3 2 -8 28 3-2zM1076 204l-3 2 -8 28 2-2zM1095 205l-2 2 -9 28 2-2zM1116 207l-3 2 -10 28 3-2zM1136 209l-2 2 -11 28 2-2zM1156 211l-2 1 -11 29 2-2zM1177 212l-2 2 -12 29 2-2zM1198 214l-2 2 -13 28 2-2z"/><path class="gt" d="M479 152l5 2 -4 2 -4-3zM494 153l4 3 -3 1 -5-3zM508 154l5 3 -4 1 -4-3zM523 155l5 3 -4 2 -5-3zM538 157l4 2 -3 2 -5-3zM553 158l4 3 -3 1 -5-3zM568 159l4 3 -3 1 -5-3zM583 160l5 3 -4 2 -5-3zM598 161l5 3 -3 2 -5-3zM613 163l6 3 -4 1 -5-3zM629 164l5 3 -3 2 -5-3zM644 165l6 3 -3 2 -6-3zM660 167l6 3 -3 1 -6-3zM676 168l6 3 -3 2 -6-4zM692 169l6 3 -3 2 -6-3zM708 171l7 3 -4 1 -6-3zM725 172l6 3 -3 2 -6-3zM741 173l7 4 -3 1 -7-3zM758 175l6 3 -3 1 -6-3zM775 176l6 3 -3 2 -6-3zM792 178l7 3 -3 1 -7-3zM809 179l7 3 -3 2 -7-3zM826 180l7 4 -3 1 -7-3zM844 182l7 3 -3 2 -7-4zM861 183l8 4 -3 1 -8-3zM879 185l8 3 -3 2 -8-4zM897 186l8 4 -3 1 -8-3zM915 188l8 3 -3 2 -8-4zM933 189l8 4 -2 1 -8-3zM952 191l8 3 -3 2 -8-4zM970 192l9 4 -3 1 -8-3zM989 194l9 3 -3 2 -8-3zM1008 195l9 4 -3 2 -8-4zM1027 197l9 4 -2 1 -9-3zM1047 199l9 3 -3 2 -9-4zM1066 200l10 4 -3 2 -9-4zM1086 202l9 3 -2 2 -9-3zM1106 203l10 4 -3 2 -9-4zM1126 205l10 4 -2 2 -10-4zM1146 207l10 4 -2 1 -10-3zM1167 209l10 3 -2 2 -10-4zM1188 210l10 4 -2 2 -10-4z"/><path class="gm" d="M468 156l4 3 9 25 -4-3zM483 157l4 3 8 26 -4-3zM497 159l5 3 8 25 -5-3zM512 160l4 3 8 25 -4-3zM527 161l4 3 8 26 -5-3zM542 162l4 3 7 26 -4-3zM557 164l4 3 7 25 -5-3zM572 165l5 3 6 26 -5-3zM587 166l5 3 6 26 -5-3zM603 168l5 3 5 25 -5-3zM618 169l6 3 5 26 -6-3zM634 170l5 3 5 26 -5-3zM650 172l5 3 5 26 -6-3zM666 173l6 3 3 26 -5-3zM682 174l6 3 3 27 -6-4zM698 176l6 3 3 26 -6-3zM715 177l6 3 2 27 -6-4zM731 178l7 4 1 26 -6-3zM748 180l6 3 2 27 -6-4zM765 181l7 3 0 27 -6-3zM782 183l7 3 0 27 -6-4zM799 184l7 3 0 27 -7-3zM817 186l7 3 -1 27 -7-4zM834 187l7 3 -1 27 -7-3zM852 189l7 3 -1 27 -8-4zM870 190l7 3 -2 28 -7-4zM888 192l7 3 -2 27 -8-3zM906 193l8 4 -4 27 -7-4zM924 195l8 3 -4 28 -7-4zM943 196l8 4 -4 27 -8-3zM962 198l8 3 -5 28 -8-4zM981 199l8 4 -6 28 -8-4zM1000 201l8 4 -6 27 -8-3zM1019 203l9 3 -7 28 -9-4zM1038 204l10 4 -8 28 -9-4zM1058 206l9 4 -8 28 -9-4zM1078 208l9 3 -9 28 -9-3zM1098 209l10 4 -10 28 -9-4zM1118 211l10 4 -10 28 -10-4zM1139 213l10 4 -11 28 -10-4zM1160 214l10 4 -12 29 -10-4zM1180 216l11 4 -13 29 -10-4zM1202 218l10 4 -13 29 -10-4z"/><path class="gb" d="M476 158l-4 1 9 25 4-1zM490 159l-3 1 8 26 4-2zM505 160l-3 2 8 25 3-2zM520 161l-4 2 8 25 4-1zM535 163l-4 1 8 26 3-2zM550 164l-4 1 7 26 4-2zM565 165l-4 2 7 25 3-1zM580 166l-3 2 6 26 3-2zM596 168l-4 1 6 26 3-2zM611 169l-3 2 5 25 4-1zM627 170l-3 2 5 26 3-2zM643 172l-4 1 5 26 3-1zM659 173l-4 2 5 26 3-2zM675 174l-3 2 3 26 3-1zM691 176l-3 1 3 27 3-2zM707 177l-3 2 3 26 3-2zM724 179l-3 1 2 27 3-2zM741 180l-3 2 1 26 4-2zM758 181l-4 2 2 27 3-2zM775 183l-3 1 0 27 3-2zM792 184l-3 2 0 27 3-2zM809 186l-3 1 0 27 3-1zM827 187l-3 2 -1 27 3-2zM844 189l-3 1 -1 27 3-1zM862 190l-3 2 -1 27 2-2zM880 192l-3 1 -2 28 3-2zM898 193l-3 2 -2 27 2-2zM917 195l-3 2 -4 27 3-2zM935 196l-3 2 -4 28 3-2zM954 198l-3 2 -4 27 2-2zM973 200l-3 1 -5 28 3-2zM992 201l-3 2 -6 28 3-2zM1011 203l-3 2 -6 27 3-1zM1030 204l-2 2 -7 28 2-2zM1050 206l-2 2 -8 28 2-2zM1070 208l-3 2 -8 28 3-2zM1090 210l-3 1 -9 28 3-1zM1110 211l-2 2 -10 28 2-2zM1131 213l-3 2 -10 28 2-2zM1151 215l-2 2 -11 28 2-2zM1172 216l-2 2 -12 29 2-2zM1193 218l-2 2 -13 29 3-2zM1214 220l-2 2 -13 29 2-2z"/><path class="gt" d="M472 155l4 3 -4 1 -4-3zM486 156l4 3 -3 1 -4-3zM501 157l4 3 -3 2 -5-3zM515 158l5 3 -4 2 -4-3zM530 160l5 3 -4 1 -4-3zM545 161l5 3 -4 1 -4-3zM560 162l5 3 -4 2 -4-3zM575 163l5 3 -3 2 -5-3zM590 165l6 3 -4 1 -5-3zM606 166l5 3 -3 2 -5-3zM621 167l6 3 -3 2 -6-3zM637 169l6 3 -4 1 -5-3zM653 170l6 3 -4 2 -5-3zM669 171l6 3 -3 2 -6-3zM685 173l6 3 -3 1 -6-3zM701 174l6 3 -3 2 -6-3zM718 175l6 4 -3 1 -6-3zM734 177l7 3 -3 2 -7-4zM751 178l7 3 -4 2 -6-3zM768 180l7 3 -3 1 -7-3zM785 181l7 3 -3 2 -7-3zM802 182l7 4 -3 1 -7-3zM820 184l7 3 -3 2 -7-3zM837 185l7 4 -3 1 -7-3zM855 187l7 3 -3 2 -7-3zM873 188l7 4 -3 1 -7-3zM891 190l7 3 -3 2 -7-3zM909 191l8 4 -3 2 -8-4zM927 193l8 3 -3 2 -8-3zM946 195l8 3 -3 2 -8-4zM964 196l9 4 -3 1 -8-3zM983 198l9 3 -3 2 -8-4zM1002 199l9 4 -3 2 -8-4zM1022 201l8 3 -2 2 -9-3zM1041 202l9 4 -2 2 -10-4zM1061 204l9 4 -3 2 -9-4zM1081 206l9 4 -3 1 -9-3zM1101 207l9 4 -2 2 -10-4zM1121 209l10 4 -3 2 -10-4zM1141 211l10 4 -2 2 -10-4zM1162 213l10 3 -2 2 -10-4zM1183 214l10 4 -2 2 -11-4zM1204 216l10 4 -2 2 -10-4z"/><path class="gm" d="M460 159l4 3 10 25 -5-3zM475 161l4 3 9 25 -4-3zM489 162l5 3 8 25 -4-3zM504 163l5 3 8 25 -5-3zM519 164l5 3 7 26 -4-3zM534 166l5 3 7 25 -5-3zM549 167l5 3 7 26 -5-3zM564 168l5 3 7 26 -5-3zM580 170l5 3 6 25 -5-3zM595 171l5 3 6 26 -5-3zM611 172l5 3 5 26 -5-3zM626 174l6 3 5 26 -6-3zM642 175l6 3 4 26 -5-3zM658 176l6 3 4 27 -5-4zM675 178l6 3 3 26 -6-3zM691 179l6 3 3 27 -6-4zM708 180l6 4 2 26 -6-3zM724 182l7 3 2 27 -7-4zM741 183l6 4 2 26 -6-3zM758 185l7 3 1 27 -7-4zM775 186l7 4 0 26 -6-3zM792 188l7 3 0 27 -6-4zM810 189l7 4 -1 27 -6-4zM827 191l8 3 -1 27 -7-3zM845 192l8 4 -2 27 -7-4zM863 194l8 3 -2 27 -8-3zM881 195l8 4 -3 27 -7-4zM900 197l7 3 -3 28 -7-4zM918 198l8 4 -4 27 -7-3zM937 200l8 4 -4 27 -8-4zM956 202l8 3 -5 28 -8-4zM975 203l8 4 -6 28 -8-4zM994 205l8 4 -6 27 -8-3zM1013 207l9 3 -7 28 -8-4zM1033 208l9 4 -8 28 -8-4zM1052 210l10 4 -8 28 -9-4zM1072 212l10 3 -9 29 -9-4zM1093 213l9 4 -9 28 -10-4zM1113 215l10 4 -10 28 -10-4zM1134 217l10 4 -11 28 -10-4zM1154 219l11 4 -12 28 -10-4zM1175 220l11 4 -13 29 -10-4zM1197 222l10 4 -13 29 -10-4zM1218 224l11 4 -14 29 -11-4z"/><path class="gb" d="M468 161l-4 1 10 25 3-1zM483 162l-4 2 9 25 3-2zM497 163l-3 2 8 25 4-1zM512 165l-3 1 8 25 3-1zM527 166l-3 1 7 26 4-2zM542 167l-3 2 7 25 3-1zM557 168l-3 2 7 26 3-2zM573 170l-4 1 7 26 3-2zM588 171l-3 2 6 25 3-1zM604 172l-4 2 6 26 3-2zM619 174l-3 1 5 26 4-1zM635 175l-3 2 5 26 3-2zM651 177l-3 1 4 26 4-1zM668 178l-4 1 4 27 3-2zM684 179l-3 2 3 26 3-1zM700 181l-3 1 3 27 3-2zM717 182l-3 2 2 26 3-1zM734 184l-3 1 2 27 3-2zM751 185l-4 2 2 26 3-1zM768 186l-3 2 1 27 3-2zM785 188l-3 2 0 26 3-1zM802 189l-3 2 0 27 3-2zM820 191l-3 2 -1 27 3-2zM838 192l-3 2 -1 27 3-2zM856 194l-3 2 -2 27 3-2zM874 196l-3 1 -2 27 3-1zM892 197l-3 2 -3 27 3-2zM910 199l-3 1 -3 28 3-2zM929 200l-3 2 -4 27 3-1zM948 202l-3 2 -4 27 2-2zM967 203l-3 2 -5 28 3-2zM986 205l-3 2 -6 28 3-2zM1005 207l-3 2 -6 27 3-1zM1025 208l-3 2 -7 28 3-2zM1044 210l-2 2 -8 28 3-2zM1064 212l-2 2 -8 28 2-2zM1084 214l-2 1 -9 29 2-2zM1105 215l-3 2 -9 28 2-2zM1125 217l-2 2 -10 28 2-2zM1146 219l-2 2 -11 28 2-2zM1167 221l-2 2 -12 28 2-2zM1188 222l-2 2 -13 29 3-2zM1210 224l-3 2 -13 29 2-2zM1231 226l-2 2 -14 29 2-2z"/><path class="gt" d="M464 158l4 3 -4 1 -4-3zM478 159l5 3 -4 2 -4-3zM493 160l4 3 -3 2 -5-3zM508 162l4 3 -3 1 -5-3zM522 163l5 3 -3 1 -5-3zM537 164l5 3 -3 2 -5-3zM552 165l5 3 -3 2 -5-3zM568 167l5 3 -4 1 -5-3zM583 168l5 3 -3 2 -5-3zM598 169l6 3 -4 2 -5-3zM614 171l5 3 -3 1 -5-3zM630 172l5 3 -3 2 -6-3zM646 173l5 4 -3 1 -6-3zM662 175l6 3 -4 1 -6-3zM678 176l6 3 -3 2 -6-3zM694 178l6 3 -3 1 -6-3zM711 179l6 3 -3 2 -6-4zM727 180l7 4 -3 1 -7-3zM744 182l7 3 -4 2 -6-4zM761 183l7 3 -3 2 -7-3zM778 185l7 3 -3 2 -7-4zM795 186l7 3 -3 2 -7-3zM813 188l7 3 -3 2 -7-4zM830 189l8 3 -3 2 -8-3zM848 191l8 3 -3 2 -8-4zM866 192l8 4 -3 1 -8-3zM884 194l8 3 -3 2 -8-4zM902 195l8 4 -3 1 -7-3zM921 197l8 3 -3 2 -8-4zM940 198l8 4 -3 2 -8-4zM958 200l9 3 -3 2 -8-3zM977 202l9 3 -3 2 -8-4zM996 203l9 4 -3 2 -8-4zM1016 205l9 3 -3 2 -9-3zM1035 206l9 4 -2 2 -9-4zM1055 208l9 4 -2 2 -10-4zM1075 210l9 4 -2 1 -10-3zM1095 212l10 3 -3 2 -9-4zM1115 213l10 4 -2 2 -10-4zM1136 215l10 4 -2 2 -10-4zM1157 217l10 4 -2 2 -11-4zM1178 219l10 3 -2 2 -11-4zM1199 220l11 4 -3 2 -10-4zM1220 222l11 4 -2 2 -11-4z"/><path class="gm" d="M452 163l4 2 10 26 -4-3zM467 164l4 3 9 25 -4-3zM481 165l5 3 8 25 -4-3zM496 166l5 3 8 26 -4-3zM511 168l5 3 8 25 -5-3zM526 169l5 3 7 26 -4-4zM541 170l5 3 7 26 -5-3zM556 172l5 3 7 25 -5-3zM572 173l5 3 6 26 -5-3zM587 174l6 3 6 26 -5-3zM603 176l6 3 5 26 -5-3zM619 177l6 3 5 26 -6-3zM635 178l6 4 4 26 -5-4zM651 180l6 3 4 26 -6-3zM667 181l6 3 4 27 -6-4zM684 183l6 3 3 26 -6-3zM700 184l7 3 2 27 -6-4zM717 185l6 4 3 26 -6-3zM734 187l6 3 2 27 -6-4zM751 188l7 4 1 26 -6-3zM768 190l7 3 1 27 -7-3zM786 191l6 4 1 27 -7-4zM803 193l7 3 0 27 -7-3zM821 194l7 4 -1 27 -7-4zM839 196l7 3 -1 28 -7-4zM857 198l7 3 -2 27 -7-3zM875 199l7 4 -2 27 -7-4zM893 201l8 3 -3 28 -8-4zM912 202l8 4 -4 27 -8-3zM930 204l9 4 -5 27 -7-4zM949 206l9 3 -5 28 -8-4zM968 207l9 4 -5 28 -9-4zM988 209l8 4 -6 27 -8-3zM1007 211l9 3 -7 28 -8-4zM1027 212l9 4 -7 28 -9-4zM1047 214l9 4 -8 28 -9-4zM1067 216l9 4 -9 28 -9-4zM1087 217l10 4 -10 29 -9-4zM1108 219l9 4 -10 28 -9-4zM1128 221l10 4 -11 28 -9-4zM1149 223l10 4 -11 28 -10-4zM1170 225l11 4 -13 28 -10-4zM1192 227l10 4 -13 28 -10-4zM1213 228l11 4 -14 29 -10-4zM1235 230l11 4 -15 29 -10-4z"/><path class="gb" d="M460 164l-4 1 10 26 3-2zM475 165l-4 2 9 25 4-1zM489 167l-3 1 8 25 4-1zM504 168l-3 1 8 26 3-2zM519 169l-3 2 8 25 3-1zM534 170l-3 2 7 26 4-2zM550 172l-4 1 7 26 4-2zM565 173l-4 2 7 25 4-1zM580 174l-3 2 6 26 4-2zM596 176l-3 1 6 26 3-1zM612 177l-3 2 5 26 3-2zM628 179l-3 1 5 26 3-1zM644 180l-3 2 4 26 4-2zM660 181l-3 2 4 26 3-1zM677 183l-4 1 4 27 3-2zM693 184l-3 2 3 26 3-1zM710 186l-3 1 2 27 3-2zM727 187l-4 2 3 26 3-1zM744 189l-4 1 2 27 3-2zM761 190l-3 2 1 26 3-1zM778 192l-3 1 1 27 3-2zM796 193l-4 2 1 27 3-2zM813 195l-3 1 0 27 3-1zM831 196l-3 2 -1 27 3-2zM849 198l-3 1 -1 28 3-2zM867 199l-3 2 -2 27 3-1zM885 201l-3 2 -2 27 3-2zM904 203l-3 1 -3 28 3-2zM923 204l-3 2 -4 27 3-1zM941 206l-2 2 -5 27 3-2zM960 207l-2 2 -5 28 3-2zM980 209l-3 2 -5 28 2-2zM999 211l-3 2 -6 27 3-1zM1019 212l-3 2 -7 28 3-2zM1039 214l-3 2 -7 28 2-2zM1059 216l-3 2 -8 28 2-2zM1079 218l-3 2 -9 28 3-2zM1099 219l-2 2 -10 29 3-2zM1120 221l-3 2 -10 28 3-1zM1141 223l-3 2 -11 28 3-2zM1162 225l-3 2 -11 28 2-2zM1183 227l-2 2 -13 28 3-2zM1205 229l-3 2 -13 28 2-2zM1226 230l-2 2 -14 29 2-2zM1248 232l-2 2 -15 29 2-2z"/><path class="gt" d="M456 161l4 3 -4 1 -4-2zM470 162l5 3 -4 2 -4-3zM485 164l4 3 -3 1 -5-3zM500 165l4 3 -3 1 -5-3zM515 166l4 3 -3 2 -5-3zM530 167l4 3 -3 2 -5-3zM545 169l5 3 -4 1 -5-3zM560 170l5 3 -4 2 -5-3zM575 171l5 3 -3 2 -5-3zM591 173l5 3 -3 1 -6-3zM607 174l5 3 -3 2 -6-3zM622 175l6 4 -3 1 -6-3zM638 177l6 3 -3 2 -6-4zM654 178l6 3 -3 2 -6-3zM671 180l6 3 -4 1 -6-3zM687 181l6 3 -3 2 -6-3zM704 182l6 4 -3 1 -7-3zM720 184l7 3 -4 2 -6-4zM737 185l7 4 -4 1 -6-3zM754 187l7 3 -3 2 -7-4zM771 188l7 4 -3 1 -7-3zM789 190l7 3 -4 2 -6-4zM806 191l7 4 -3 1 -7-3zM824 193l7 3 -3 2 -7-4zM842 194l7 4 -3 1 -7-3zM860 196l7 3 -3 2 -7-3zM878 197l7 4 -3 2 -7-4zM896 199l8 4 -3 1 -8-3zM915 201l8 3 -3 2 -8-4zM933 202l8 4 -2 2 -9-4zM952 204l8 3 -2 2 -9-3zM971 205l9 4 -3 2 -9-4zM990 207l9 4 -3 2 -8-4zM1010 209l9 3 -3 2 -9-3zM1030 210l9 4 -3 2 -9-4zM1049 212l10 4 -3 2 -9-4zM1069 214l10 4 -3 2 -9-4zM1090 216l9 3 -2 2 -10-4zM1110 217l10 4 -3 2 -9-4zM1131 219l10 4 -3 2 -10-4zM1151 221l11 4 -3 2 -10-4zM1173 223l10 4 -2 2 -11-4zM1194 225l11 4 -3 2 -10-4zM1215 226l11 4 -2 2 -11-4zM1237 228l11 4 -2 2 -11-4z"/><path class="gm" d="M444 166l4 3 10 25 -4-3zM459 167l4 3 9 25 -4-3zM473 168l5 3 9 26 -5-3zM488 170l5 3 8 25 -4-3zM503 171l5 3 8 26 -5-4zM518 172l5 3 8 26 -5-3zM533 174l5 3 8 25 -5-3zM549 175l5 3 7 26 -5-3zM564 176l5 3 7 26 -5-3zM580 178l5 3 6 26 -5-3zM596 179l5 3 6 26 -6-3zM611 180l6 4 5 26 -5-4zM627 182l6 3 5 26 -5-3zM644 183l5 4 5 26 -6-4zM660 185l6 3 4 26 -6-3zM676 186l6 3 4 27 -6-3zM693 188l6 3 3 26 -6-3zM710 189l6 3 3 27 -6-3zM727 191l6 3 2 27 -6-4zM744 192l6 3 2 27 -6-3zM761 194l7 3 1 27 -7-4zM779 195l6 4 1 26 -7-3zM796 197l7 3 0 27 -7-3zM814 198l7 4 0 27 -7-4zM832 200l7 3 -1 27 -7-3zM850 201l7 4 -1 27 -7-3zM868 203l8 4 -2 27 -8-4zM887 205l7 3 -2 28 -8-4zM905 206l8 4 -3 27 -8-3zM924 208l8 4 -4 27 -8-4zM943 210l8 3 -4 28 -8-4zM962 211l9 4 -5 28 -9-4zM982 213l8 4 -6 27 -8-3zM1001 215l9 3 -6 28 -9-4zM1021 216l9 4 -7 28 -9-4zM1041 218l9 4 -8 28 -9-4zM1061 220l10 4 -9 28 -9-4zM1081 222l10 4 -9 28 -10-4zM1102 223l10 4 -10 29 -10-4zM1123 225l10 4 -11 29 -10-4zM1144 227l10 4 -11 29 -10-4zM1165 229l11 4 -13 29 -10-4zM1186 231l11 4 -13 29 -10-5zM1208 233l11 4 -14 29 -10-5zM1230 235l11 4 -15 29 -10-5zM1252 237l12 4 -16 29 -11-5z"/><path class="gb" d="M452 167l-4 2 10 25 4-1zM467 169l-4 1 9 25 4-1zM481 170l-3 1 9 26 3-2zM496 171l-3 2 8 25 4-1zM511 172l-3 2 8 26 3-2zM526 174l-3 1 8 26 3-2zM542 175l-4 2 8 25 3-1zM557 177l-3 1 7 26 3-2zM573 178l-4 1 7 26 3-1zM589 179l-4 2 6 26 4-2zM604 181l-3 1 6 26 3-1zM620 182l-3 2 5 26 4-2zM636 183l-3 2 5 26 3-1zM653 185l-4 2 5 26 3-2zM669 186l-3 2 4 26 3-1zM686 188l-4 1 4 27 3-2zM703 189l-4 2 3 26 3-1zM719 191l-3 1 3 27 3-2zM736 192l-3 2 2 27 3-2zM754 194l-4 1 2 27 3-1zM771 195l-3 2 1 27 3-2zM789 197l-4 2 1 26 3-1zM806 198l-3 2 0 27 3-2zM824 200l-3 2 0 27 3-2zM842 202l-3 1 -1 27 3-1zM860 203l-3 2 -1 27 3-2zM879 205l-3 2 -2 27 3-2zM897 206l-3 2 -2 28 3-2zM916 208l-3 2 -3 27 3-1zM935 210l-3 2 -4 27 3-2zM954 211l-3 2 -4 28 3-2zM974 213l-3 2 -5 28 2-2zM993 215l-3 2 -6 27 3-1zM1013 217l-3 1 -6 28 2-2zM1033 218l-3 2 -7 28 2-2zM1053 220l-3 2 -8 28 3-2zM1073 222l-2 2 -9 28 2-2zM1094 224l-3 2 -9 28 2-2zM1114 225l-2 2 -10 29 2-2zM1135 227l-2 2 -11 29 2-2zM1157 229l-3 2 -11 29 2-2zM1178 231l-2 2 -13 29 2-2zM1199 233l-2 2 -13 29 2-2zM1221 235l-2 2 -14 29 2-2zM1243 237l-2 2 -15 29 3-2zM1266 239l-2 2 -16 29 2-2z"/><path class="gt" d="M448 164l4 3 -4 2 -4-3zM462 166l5 3 -4 1 -4-3zM477 167l4 3 -3 1 -5-3zM492 168l4 3 -3 2 -5-3zM507 169l4 3 -3 2 -5-3zM522 171l4 3 -3 1 -5-3zM537 172l5 3 -4 2 -5-3zM552 173l5 4 -3 1 -5-3zM568 175l5 3 -4 1 -5-3zM583 176l6 3 -4 2 -5-3zM599 178l5 3 -3 1 -5-3zM615 179l5 3 -3 2 -6-4zM631 180l5 3 -3 2 -6-3zM647 182l6 3 -4 2 -5-4zM663 183l6 3 -3 2 -6-3zM680 185l6 3 -4 1 -6-3zM696 186l7 3 -4 2 -6-3zM713 187l6 4 -3 1 -6-3zM730 189l6 3 -3 2 -6-3zM747 190l7 4 -4 1 -6-3zM764 192l7 3 -3 2 -7-3zM782 193l7 4 -4 2 -6-4zM799 195l7 3 -3 2 -7-3zM817 197l7 3 -3 2 -7-4zM835 198l7 4 -3 1 -7-3zM853 200l7 3 -3 2 -7-4zM871 201l8 4 -3 2 -8-4zM890 203l7 3 -3 2 -7-3zM908 204l8 4 -3 2 -8-4zM927 206l8 4 -3 2 -8-4zM946 208l8 3 -3 2 -8-3zM965 209l9 4 -3 2 -9-4zM984 211l9 4 -3 2 -8-4zM1004 213l9 4 -3 1 -9-3zM1024 215l9 3 -3 2 -9-4zM1044 216l9 4 -3 2 -9-4zM1064 218l9 4 -2 2 -10-4zM1084 220l10 4 -3 2 -10-4zM1105 222l9 3 -2 2 -10-4zM1125 223l10 4 -2 2 -10-4zM1146 225l11 4 -3 2 -10-4zM1167 227l11 4 -2 2 -11-4zM1189 229l10 4 -2 2 -11-4zM1210 231l11 4 -2 2 -11-4zM1232 233l11 4 -2 2 -11-4zM1254 235l12 4 -2 2 -12-4z"/><path class="gm" d="M436 169l4 3 10 25 -4-3zM451 170l4 3 9 26 -4-3zM465 172l5 3 9 25 -4-3zM480 173l5 3 8 26 -4-4zM495 174l5 3 8 26 -4-3zM510 176l5 3 8 25 -5-3zM526 177l4 3 8 26 -5-3zM541 178l5 3 7 26 -5-3zM556 180l5 3 7 26 -5-3zM572 181l5 3 7 26 -5-3zM588 183l5 3 6 26 -5-3zM604 184l5 3 6 26 -5-3zM620 185l5 4 6 26 -6-3zM636 187l6 3 5 26 -6-3zM653 188l5 4 5 26 -6-3zM669 190l6 3 4 27 -6-4zM686 191l6 4 3 26 -6-3zM703 193l6 3 3 27 -6-4zM720 194l6 4 2 26 -6-3zM737 196l6 3 2 27 -6-4zM754 197l7 4 1 27 -6-4zM772 199l6 3 1 27 -7-3zM789 200l7 4 0 27 -6-4zM807 202l7 4 0 27 -7-4zM825 204l7 3 -1 27 -7-3zM843 205l8 4 -2 27 -7-4zM862 207l7 3 -2 28 -7-4zM880 208l8 4 -3 28 -7-4zM899 210l8 4 -3 27 -8-3zM918 212l8 4 -4 27 -8-4zM937 214l8 3 -4 28 -8-4zM956 215l9 4 -6 28 -8-4zM975 217l9 4 -6 28 -8-4zM995 219l9 4 -6 28 -9-4zM1015 220l9 4 -7 28 -9-4zM1035 222l9 4 -7 28 -9-4zM1055 224l10 4 -9 28 -9-4zM1076 226l9 4 -9 28 -9-4zM1096 228l10 4 -10 28 -9-4zM1117 230l10 4 -10 28 -10-4zM1138 231l11 5 -12 28 -10-4zM1160 233l10 4 -12 29 -10-4zM1181 235l11 4 -13 29 -10-4zM1203 237l11 4 -14 29 -10-4zM1225 239l11 4 -14 29 -11-4zM1247 241l12 4 -16 29 -11-4zM1270 243l12 4 -17 30 -11-5z"/><path class="gb" d="M444 171l-4 1 10 25 4-1zM459 172l-4 1 9 26 4-2zM473 173l-3 2 9 25 3-1zM488 174l-3 2 8 26 4-2zM503 176l-3 1 8 26 4-2zM519 177l-4 2 8 25 4-1zM534 179l-4 1 8 26 3-2zM549 180l-3 1 7 26 4-1zM565 181l-4 2 7 26 4-2zM581 183l-4 1 7 26 3-1zM597 184l-4 2 6 26 4-2zM613 186l-4 1 6 26 3-1zM629 187l-4 2 6 26 3-2zM645 188l-3 2 5 26 3-1zM662 190l-4 2 5 26 3-2zM678 191l-3 2 4 27 3-2zM695 193l-3 2 3 26 3-2zM712 194l-3 2 3 27 3-2zM729 196l-3 2 2 26 3-1zM747 198l-4 1 2 27 3-2zM764 199l-3 2 1 27 3-2zM782 201l-4 1 1 27 3-1zM799 202l-3 2 0 27 3-2zM817 204l-3 2 0 27 3-2zM835 205l-3 2 -1 27 3-1zM854 207l-3 2 -2 27 3-2zM872 209l-3 1 -2 28 3-2zM891 210l-3 2 -3 28 3-2zM910 212l-3 2 -3 27 2-1zM929 214l-3 2 -4 27 3-2zM948 215l-3 2 -4 28 2-2zM967 217l-2 2 -6 28 3-2zM987 219l-3 2 -6 28 3-2zM1007 221l-3 2 -6 28 2-2zM1027 222l-3 2 -7 28 3-2zM1047 224l-3 2 -7 28 2-2zM1067 226l-2 2 -9 28 3-2zM1088 228l-3 2 -9 28 3-2zM1109 230l-3 2 -10 28 3-2zM1130 232l-3 2 -10 28 2-2zM1151 234l-2 2 -12 28 3-2zM1173 235l-3 2 -12 29 2-2zM1194 237l-2 2 -13 29 2-2zM1216 239l-2 2 -14 29 2-2zM1239 241l-3 2 -14 29 2-2zM1261 243l-2 2 -16 29 2-2zM1284 245l-2 2 -17 30 2-3z"/><path class="gt" d="M440 168l4 3 -4 1 -4-3zM454 169l5 3 -4 1 -4-3zM469 170l4 3 -3 2 -5-3zM484 171l4 3 -3 2 -5-3zM499 173l4 3 -3 1 -5-3zM514 174l5 3 -4 2 -5-3zM529 175l5 4 -4 1 -4-3zM544 177l5 3 -3 1 -5-3zM560 178l5 3 -4 2 -5-3zM576 180l5 3 -4 1 -5-3zM591 181l6 3 -4 2 -5-3zM607 182l6 4 -4 1 -5-3zM623 184l6 3 -4 2 -5-4zM640 185l5 3 -3 2 -6-3zM656 187l6 3 -4 2 -5-4zM672 188l6 3 -3 2 -6-3zM689 190l6 3 -3 2 -6-4zM706 191l6 3 -3 2 -6-3zM723 193l6 3 -3 2 -6-4zM740 194l7 4 -4 1 -6-3zM757 196l7 3 -3 2 -7-4zM775 197l7 4 -4 1 -6-3zM792 199l7 3 -3 2 -7-4zM810 200l7 4 -3 2 -7-4zM828 202l7 3 -3 2 -7-3zM846 203l8 4 -3 2 -8-4zM865 205l7 4 -3 1 -7-3zM883 207l8 3 -3 2 -8-4zM902 208l8 4 -3 2 -8-4zM921 210l8 4 -3 2 -8-4zM940 212l8 3 -3 2 -8-3zM959 213l8 4 -2 2 -9-4zM978 215l9 4 -3 2 -9-4zM998 217l9 4 -3 2 -9-4zM1018 219l9 3 -3 2 -9-4zM1038 220l9 4 -3 2 -9-4zM1058 222l9 4 -2 2 -10-4zM1078 224l10 4 -3 2 -9-4zM1099 226l10 4 -3 2 -10-4zM1120 228l10 4 -3 2 -10-4zM1141 229l10 5 -2 2 -11-5zM1162 231l11 4 -3 2 -10-4zM1184 233l10 4 -2 2 -11-4zM1205 235l11 4 -2 2 -11-4zM1227 237l12 4 -3 2 -11-4zM1250 239l11 4 -2 2 -12-4zM1272 241l12 4 -2 2 -12-4z"/><path class="gm" d="M428 172l4 3 10 26 -4-3zM442 174l5 3 9 25 -4-3zM457 175l4 3 10 26 -4-4zM472 176l5 3 9 26 -5-3zM487 178l5 3 8 25 -4-3zM502 179l5 3 8 26 -4-3zM518 180l4 4 8 25 -4-3zM533 182l5 3 7 26 -4-3zM549 183l5 3 7 26 -5-3zM564 185l5 3 7 26 -5-3zM580 186l5 3 7 26 -6-3zM596 187l6 4 5 26 -5-3zM612 189l6 3 5 27 -5-4zM629 190l5 4 5 26 -5-3zM645 192l6 3 4 27 -5-4zM662 193l6 4 4 26 -6-3zM678 195l6 3 4 27 -6-4zM695 196l6 4 3 27 -6-4zM712 198l7 3 2 27 -6-3zM730 199l6 4 2 27 -6-4zM747 201l7 4 1 26 -6-3zM764 203l7 3 1 27 -6-3zM782 204l7 4 1 27 -7-4zM800 206l7 3 0 28 -7-4zM818 207l7 4 0 27 -7-3zM836 209l8 4 -1 27 -8-4zM855 211l7 3 -1 28 -8-4zM873 212l8 4 -2 28 -8-4zM892 214l8 4 -3 27 -8-3zM911 216l8 4 -3 27 -8-4zM930 218l9 3 -5 28 -8-4zM950 219l8 4 -5 28 -8-4zM969 221l9 4 -6 28 -8-4zM989 223l9 4 -6 28 -9-4zM1009 225l9 4 -7 28 -9-4zM1029 226l9 4 -7 29 -9-4zM1049 228l10 4 -8 29 -10-5zM1070 230l10 4 -9 29 -10-5zM1091 232l10 4 -10 29 -10-5zM1112 234l10 4 -11 29 -9-5zM1133 236l10 4 -11 29 -10-5zM1154 238l11 4 -12 29 -10-5zM1176 240l11 4 -13 29 -10-5zM1198 242l11 4 -14 29 -10-5zM1220 244l11 4 -14 29 -11-4zM1242 246l12 4 -16 29 -11-4zM1265 248l12 4 -17 29 -11-4zM1288 250l12 4 -17 29 -12-4z"/><path class="gb" d="M436 174l-4 1 10 26 4-2zM450 175l-3 2 9 25 4-1zM465 177l-4 1 10 26 4-2zM480 178l-3 1 9 26 3-2zM495 179l-3 2 8 25 4-1zM511 181l-4 1 8 26 4-2zM526 182l-4 2 8 25 4-1zM541 183l-3 2 7 26 4-2zM557 185l-3 1 7 26 3-1zM573 186l-4 2 7 26 4-2zM589 188l-4 1 7 26 3-1zM605 189l-3 2 5 26 4-2zM621 191l-3 1 5 27 4-2zM638 192l-4 2 5 26 3-2zM654 194l-3 1 4 27 4-2zM671 195l-3 2 4 26 3-1zM688 197l-4 1 4 27 3-2zM705 198l-4 2 3 27 4-2zM722 200l-3 1 2 27 3-2zM739 201l-3 2 2 27 3-2zM757 203l-3 2 1 26 3-1zM775 204l-4 2 1 27 3-2zM792 206l-3 2 1 27 3-2zM810 208l-3 1 0 28 3-2zM829 209l-4 2 0 27 3-1zM847 211l-3 2 -1 27 3-2zM866 213l-4 1 -1 28 3-2zM884 214l-3 2 -2 28 3-2zM903 216l-3 2 -3 27 3-1zM922 218l-3 2 -3 27 3-2zM942 220l-3 1 -5 28 3-2zM961 221l-3 2 -5 28 3-2zM981 223l-3 2 -6 28 3-2zM1001 225l-3 2 -6 28 2-2zM1021 227l-3 2 -7 28 3-2zM1041 229l-3 1 -7 29 2-2zM1062 230l-3 2 -8 29 2-2zM1082 232l-2 2 -9 29 2-2zM1103 234l-2 2 -10 29 2-2zM1124 236l-2 2 -11 29 3-2zM1146 238l-3 2 -11 29 2-2zM1167 240l-2 2 -12 29 2-2zM1189 242l-2 2 -13 29 2-2zM1211 244l-2 2 -14 29 2-2zM1234 246l-3 2 -14 29 2-2zM1256 248l-2 2 -16 29 3-2zM1279 250l-2 2 -17 29 3-2zM1302 252l-2 2 -17 29 2-2z"/><path class="gt" d="M431 171l5 3 -4 1 -4-3zM446 172l4 3 -3 2 -5-3zM461 173l4 4 -4 1 -4-3zM476 175l4 3 -3 1 -5-3zM491 176l4 3 -3 2 -5-3zM506 177l5 4 -4 1 -5-3zM521 179l5 3 -4 2 -4-4zM537 180l4 3 -3 2 -5-3zM552 182l5 3 -3 1 -5-3zM568 183l5 3 -4 2 -5-3zM584 184l5 4 -4 1 -5-3zM600 186l5 3 -3 2 -6-4zM616 187l5 4 -3 1 -6-3zM632 189l6 3 -4 2 -5-4zM648 190l6 4 -3 1 -6-3zM665 192l6 3 -3 2 -6-4zM682 193l6 4 -4 1 -6-3zM699 195l6 3 -4 2 -6-4zM716 196l6 4 -3 1 -7-3zM733 198l6 3 -3 2 -6-4zM750 199l7 4 -3 2 -7-4zM768 201l7 3 -4 2 -7-3zM785 203l7 3 -3 2 -7-4zM803 204l7 4 -3 1 -7-3zM821 206l8 3 -4 2 -7-4zM839 207l8 4 -3 2 -8-4zM858 209l8 4 -4 1 -7-3zM876 211l8 3 -3 2 -8-4zM895 212l8 4 -3 2 -8-4zM914 214l8 4 -3 2 -8-4zM933 216l9 4 -3 1 -9-3zM953 217l8 4 -3 2 -8-4zM972 219l9 4 -3 2 -9-4zM992 221l9 4 -3 2 -9-4zM1012 223l9 4 -3 2 -9-4zM1032 225l9 4 -3 1 -9-4zM1052 226l10 4 -3 2 -10-4zM1073 228l9 4 -2 2 -10-4zM1093 230l10 4 -2 2 -10-4zM1114 232l10 4 -2 2 -10-4zM1135 234l11 4 -3 2 -10-4zM1157 236l10 4 -2 2 -11-4zM1178 238l11 4 -2 2 -11-4zM1200 240l11 4 -2 2 -11-4zM1222 242l12 4 -3 2 -11-4zM1245 244l11 4 -2 2 -12-4zM1267 246l12 4 -2 2 -12-4zM1290 248l12 4 -2 2 -12-4z"/><path class="gm" d="M419 176l5 3 10 25 -4-3zM434 177l4 3 10 26 -4-4zM449 178l4 3 10 26 -4-3zM464 180l4 3 10 25 -5-3zM479 181l4 3 9 26 -4-3zM494 182l5 4 8 25 -4-3zM509 184l5 3 8 26 -4-3zM525 185l5 3 8 26 -5-3zM541 187l5 3 7 26 -5-3zM556 188l5 3 7 27 -5-4zM572 190l6 3 6 26 -5-3zM588 191l6 3 6 27 -6-4zM604 193l6 3 6 26 -6-3zM621 194l6 3 5 27 -6-4zM637 196l6 3 5 26 -6-3zM654 197l6 3 4 27 -6-3zM671 199l6 3 4 27 -6-4zM688 200l6 4 3 26 -6-3zM705 202l6 3 3 27 -6-4zM722 203l7 4 2 27 -6-4zM740 205l6 3 2 27 -6-3zM757 206l7 4 1 27 -6-4zM775 208l7 4 1 27 -7-4zM793 210l7 3 0 28 -7-4zM811 211l7 4 0 27 -7-3zM829 213l8 4 -1 27 -7-4zM848 215l8 3 -2 28 -7-4zM867 216l7 4 -2 28 -7-4zM885 218l9 4 -3 28 -8-4zM905 220l8 4 -4 27 -8-3zM924 222l8 4 -4 27 -8-4zM943 223l9 4 -5 28 -8-4zM963 225l9 4 -6 28 -8-4zM983 227l9 4 -6 28 -9-4zM1003 229l9 4 -7 28 -9-4zM1023 231l9 4 -7 28 -9-4zM1043 233l10 4 -8 28 -9-4zM1064 234l10 5 -9 28 -9-4zM1085 236l10 5 -10 28 -9-4zM1106 238l10 4 -10 29 -10-4zM1127 240l11 4 -11 29 -10-4zM1149 242l11 4 -13 29 -10-4zM1171 244l11 4 -13 29 -11-4zM1193 246l11 5 -14 28 -10-4zM1215 248l11 5 -14 29 -11-5zM1237 250l12 5 -15 29 -11-5zM1260 252l12 5 -16 29 -12-5zM1283 254l12 5 -17 29 -11-4zM1306 257l13 4 -18 29 -12-4z"/><path class="gb" d="M427 177l-3 2 10 25 4-1zM442 179l-4 1 10 26 4-2zM457 180l-4 1 10 26 4-2zM472 181l-4 2 10 25 3-1zM487 183l-4 1 9 26 4-2zM502 184l-3 2 8 25 4-1zM518 185l-4 2 8 26 4-2zM533 187l-3 1 8 26 3-1zM549 188l-3 2 7 26 3-2zM565 190l-4 1 7 27 4-2zM581 191l-3 2 6 26 3-2zM597 193l-3 1 6 27 3-2zM614 194l-4 2 6 26 3-1zM630 196l-3 1 5 27 3-2zM647 197l-4 2 5 26 3-1zM663 199l-3 1 4 27 3-2zM680 200l-3 2 4 27 3-2zM697 202l-3 2 3 26 4-1zM715 203l-4 2 3 27 3-2zM732 205l-3 2 2 27 3-2zM750 207l-4 1 2 27 3-1zM767 208l-3 2 1 27 3-2zM785 210l-3 2 1 27 3-2zM803 212l-3 1 0 28 3-2zM822 213l-4 2 0 27 3-1zM840 215l-3 2 -1 27 3-2zM859 217l-3 1 -2 28 3-2zM878 218l-4 2 -2 28 3-2zM897 220l-3 2 -3 28 3-2zM916 222l-3 2 -4 27 3-1zM935 224l-3 2 -4 27 3-2zM955 225l-3 2 -5 28 3-2zM974 227l-2 2 -6 28 3-2zM994 229l-2 2 -6 28 2-2zM1015 231l-3 2 -7 28 3-2zM1035 233l-3 2 -7 28 2-2zM1056 235l-3 2 -8 28 2-2zM1076 237l-2 2 -9 28 2-2zM1098 239l-3 2 -10 28 3-2zM1119 240l-3 2 -10 29 2-2zM1140 242l-2 2 -11 29 2-2zM1162 244l-2 2 -13 29 3-2zM1184 246l-2 2 -13 29 2-2zM1206 248l-2 3 -14 28 2-2zM1229 251l-3 2 -14 29 2-3zM1251 253l-2 2 -15 29 2-2zM1274 255l-2 2 -16 29 2-2zM1297 257l-2 2 -17 29 2-2zM1321 259l-2 2 -18 29 2-2z"/><path class="gt" d="M423 174l4 3 -3 2 -5-3zM438 175l4 4 -4 1 -4-3zM453 177l4 3 -4 1 -4-3zM468 178l4 3 -4 2 -4-3zM483 180l4 3 -4 1 -4-3zM498 181l4 3 -3 2 -5-4zM513 182l5 3 -4 2 -5-3zM529 184l4 3 -3 1 -5-3zM544 185l5 3 -3 2 -5-3zM560 187l5 3 -4 1 -5-3zM576 188l5 3 -3 2 -6-3zM592 189l5 4 -3 1 -6-3zM608 191l6 3 -4 2 -6-3zM624 192l6 4 -3 1 -6-3zM641 194l6 3 -4 2 -6-3zM657 195l6 4 -3 1 -6-3zM674 197l6 3 -3 2 -6-3zM691 198l6 4 -3 2 -6-4zM708 200l7 3 -4 2 -6-3zM725 202l7 3 -3 2 -7-4zM743 203l7 4 -4 1 -6-3zM760 205l7 3 -3 2 -7-4zM778 206l7 4 -3 2 -7-4zM796 208l7 4 -3 1 -7-3zM814 210l8 3 -4 2 -7-4zM833 211l7 4 -3 2 -8-4zM851 213l8 4 -3 1 -8-3zM870 215l8 3 -4 2 -7-4zM889 216l8 4 -3 2 -9-4zM908 218l8 4 -3 2 -8-4zM927 220l8 4 -3 2 -8-4zM946 222l9 3 -3 2 -9-4zM966 223l8 4 -2 2 -9-4zM986 225l8 4 -2 2 -9-4zM1006 227l9 4 -3 2 -9-4zM1026 229l9 4 -3 2 -9-4zM1046 231l10 4 -3 2 -10-4zM1067 233l9 4 -2 2 -10-5zM1088 234l10 5 -3 2 -10-5zM1109 236l10 4 -3 2 -10-4zM1130 238l10 4 -2 2 -11-4zM1151 240l11 4 -2 2 -11-4zM1173 242l11 4 -2 2 -11-4zM1195 244l11 4 -2 3 -11-5zM1217 246l12 5 -3 2 -11-5zM1240 248l11 5 -2 2 -12-5zM1262 250l12 5 -2 2 -12-5zM1285 252l12 5 -2 2 -12-5zM1308 254l13 5 -2 2 -13-4z"/><path class="gm" d="M411 179l4 3 11 26 -4-4zM426 180l4 3 10 26 -4-3zM441 182l4 3 10 25 -4-3zM456 183l4 3 10 26 -5-3zM471 185l4 3 9 25 -4-3zM486 186l5 3 8 26 -4-3zM501 187l5 4 9 26 -5-4zM517 189l5 3 8 26 -5-3zM533 190l5 4 7 26 -5-4zM548 192l5 3 8 26 -5-3zM564 193l6 4 6 26 -5-4zM580 195l6 3 6 26 -5-3zM597 196l5 4 6 26 -5-4zM613 198l6 3 5 27 -5-4zM630 199l5 4 5 26 -5-3zM646 201l6 3 5 27 -6-4zM663 202l6 4 4 27 -6-4zM680 204l6 3 4 27 -6-3zM697 205l7 4 3 27 -6-4zM715 207l6 4 3 27 -7-4zM732 209l7 3 2 27 -7-3zM750 210l7 4 1 27 -6-4zM768 212l7 4 1 27 -7-4zM786 214l7 3 0 28 -7-4zM804 215l7 4 0 27 -7-3zM822 217l8 4 -1 27 -7-4zM841 219l8 4 -2 27 -7-4zM860 221l8 3 -2 28 -8-4zM879 222l8 4 -3 28 -8-4zM898 224l8 4 -3 28 -8-4zM917 226l9 4 -4 28 -8-4zM937 228l8 4 -4 27 -9-4zM956 229l9 4 -5 28 -8-4zM976 231l9 4 -6 28 -8-4zM997 233l9 4 -7 28 -9-4zM1017 235l9 4 -7 28 -9-4zM1037 237l10 4 -8 28 -9-4zM1058 239l10 4 -9 28 -9-4zM1079 241l10 4 -9 28 -10-4zM1100 243l11 4 -11 29 -10-5zM1122 245l10 4 -11 29 -10-5zM1143 247l11 4 -12 29 -10-5zM1165 249l11 4 -13 29 -10-4zM1187 251l12 4 -14 29 -11-4zM1210 253l11 4 -14 29 -11-4zM1232 255l12 4 -15 30 -11-5zM1255 257l12 5 -16 29 -11-5zM1278 259l12 5 -17 29 -11-5zM1302 261l12 5 -18 29 -12-4zM1325 264l13 4 -19 30 -12-5z"/><path class="gb" d="M419 181l-4 1 11 26 4-2zM434 182l-4 1 10 26 4-2zM449 183l-4 2 10 25 4-1zM464 185l-4 1 10 26 3-2zM479 186l-4 2 9 25 4-1zM494 188l-3 1 8 26 4-2zM510 189l-4 2 9 26 3-2zM525 190l-3 2 8 26 3-2zM541 192l-3 2 7 26 4-2zM557 193l-4 2 8 26 3-1zM573 195l-3 2 6 26 4-2zM589 196l-3 2 6 26 4-1zM606 198l-4 2 6 26 4-2zM622 199l-3 2 5 27 4-2zM639 201l-4 2 5 26 4-2zM656 203l-4 1 5 27 3-2zM673 204l-4 2 4 27 4-2zM690 206l-4 1 4 27 3-2zM707 207l-3 2 3 27 3-2zM725 209l-4 2 3 27 3-2zM742 211l-3 1 2 27 3-1zM760 212l-3 2 1 27 3-2zM778 214l-3 2 1 27 3-2zM796 216l-3 1 0 28 3-2zM815 217l-4 2 0 27 3-1zM833 219l-3 2 -1 27 3-2zM852 221l-3 2 -2 27 3-2zM871 222l-3 2 -2 28 3-2zM890 224l-3 2 -3 28 3-2zM909 226l-3 2 -3 28 3-2zM929 228l-3 2 -4 28 3-2zM948 230l-3 2 -4 27 3-1zM968 232l-3 1 -5 28 3-2zM988 233l-3 2 -6 28 3-2zM1008 235l-2 2 -7 28 3-2zM1029 237l-3 2 -7 28 3-2zM1050 239l-3 2 -8 28 3-2zM1071 241l-3 2 -9 28 3-2zM1092 243l-3 2 -9 28 2-2zM1113 245l-2 2 -11 29 3-2zM1135 247l-3 2 -11 29 3-2zM1157 249l-3 2 -12 29 3-2zM1179 251l-3 2 -13 29 3-2zM1201 253l-2 2 -14 29 2-2zM1223 255l-2 2 -14 29 2-2zM1246 257l-2 2 -15 30 2-3zM1269 259l-2 3 -16 29 2-2zM1293 262l-3 2 -17 29 2-2zM1316 264l-2 2 -18 29 2-2zM1340 266l-2 2 -19 30 2-3z"/><path class="gt" d="M415 177l4 4 -4 1 -4-3zM430 179l4 3 -4 1 -4-3zM444 180l5 3 -4 2 -4-3zM459 182l5 3 -4 1 -4-3zM474 183l5 3 -4 2 -4-3zM490 184l4 4 -3 1 -5-3zM505 186l5 3 -4 2 -5-4zM521 187l4 3 -3 2 -5-3zM536 189l5 3 -3 2 -5-4zM552 190l5 3 -4 2 -5-3zM568 192l5 3 -3 2 -6-4zM584 193l5 3 -3 2 -6-3zM600 195l6 3 -4 2 -5-4zM617 196l5 3 -3 2 -6-3zM633 198l6 3 -4 2 -5-4zM650 199l6 4 -4 1 -6-3zM667 201l6 3 -4 2 -6-4zM684 202l6 4 -4 1 -6-3zM701 204l6 3 -3 2 -7-4zM718 205l7 4 -4 2 -6-4zM736 207l6 4 -3 1 -7-3zM753 209l7 3 -3 2 -7-4zM771 210l7 4 -3 2 -7-4zM789 212l7 4 -3 1 -7-3zM807 214l8 3 -4 2 -7-4zM826 215l7 4 -3 2 -8-4zM844 217l8 4 -3 2 -8-4zM863 219l8 3 -3 2 -8-3zM882 220l8 4 -3 2 -8-4zM901 222l8 4 -3 2 -8-4zM920 224l9 4 -3 2 -9-4zM940 226l8 4 -3 2 -8-4zM959 228l9 4 -3 1 -9-4zM979 229l9 4 -3 2 -9-4zM999 231l9 4 -2 2 -9-4zM1020 233l9 4 -3 2 -9-4zM1040 235l10 4 -3 2 -10-4zM1061 237l10 4 -3 2 -10-4zM1082 239l10 4 -3 2 -10-4zM1103 241l10 4 -2 2 -11-4zM1124 243l11 4 -3 2 -10-4zM1146 245l11 4 -3 2 -11-4zM1168 247l11 4 -3 2 -11-4zM1190 249l11 4 -2 2 -12-4zM1212 251l11 4 -2 2 -11-4zM1235 253l11 4 -2 2 -12-4zM1258 255l11 4 -2 3 -12-5zM1281 257l12 5 -3 2 -12-5zM1304 259l12 5 -2 2 -12-5zM1327 261l13 5 -2 2 -13-4z"/><path class="gm" d="M417 184l4 3 11 26 -4-4zM432 185l4 3 11 26 -4-3zM447 187l5 3 10 26 -5-4zM462 188l5 3 9 26 -4-3zM478 189l4 4 9 26 -4-4zM493 191l5 3 9 26 -5-3zM509 192l4 4 9 26 -5-4zM524 194l5 3 8 26 -5-3zM540 195l5 4 8 26 -5-4zM556 197l5 3 8 26 -6-3zM572 198l6 4 6 26 -5-3zM589 200l5 3 6 27 -5-4zM605 201l6 4 6 26 -6-3zM622 203l6 3 5 27 -6-4zM639 205l5 3 5 27 -6-4zM655 206l7 4 4 26 -6-3zM673 208l6 3 4 27 -7-4zM690 209l6 4 3 27 -6-4zM707 211l7 4 2 27 -6-4zM725 213l7 3 2 27 -7-3zM743 214l6 4 2 27 -7-4zM761 216l7 4 1 27 -7-4zM779 218l7 3 0 28 -7-4zM797 219l7 4 0 28 -7-4zM815 221l8 4 -1 27 -7-4zM834 223l8 4 -2 27 -7-4zM853 225l8 3 -2 28 -8-4zM872 226l8 4 -3 28 -7-4zM891 228l8 4 -3 28 -8-4zM911 230l8 4 -4 28 -8-4zM930 232l9 4 -5 28 -8-4zM950 234l9 4 -5 28 -9-4zM970 236l9 4 -6 28 -8-4zM990 237l9 5 -6 28 -9-4zM1011 239l9 5 -7 28 -9-4zM1031 241l10 5 -8 28 -9-4zM1052 243l10 5 -9 28 -9-4zM1073 245l10 5 -9 28 -10-4zM1095 247l10 5 -10 28 -10-4zM1116 249l11 5 -11 28 -10-4zM1138 251l11 5 -12 28 -11-4zM1160 253l11 5 -13 29 -10-5zM1182 255l11 5 -13 29 -11-5zM1205 258l11 4 -14 29 -11-4zM1227 260l12 4 -15 29 -11-4zM1250 262l12 4 -16 30 -11-5zM1274 264l12 5 -17 29 -12-5zM1297 266l12 5 -18 29 -11-4zM1321 268l12 5 -19 30 -12-5z"/><path class="gb" d="M425 185l-4 2 11 26 4-2zM440 187l-4 1 11 26 3-2zM455 188l-3 2 10 26 3-2zM471 190l-4 1 9 26 4-2zM486 191l-4 2 9 26 4-2zM502 193l-4 1 9 26 3-2zM517 194l-4 2 9 26 3-2zM533 196l-4 1 8 26 4-1zM549 197l-4 2 8 26 3-2zM565 199l-4 1 8 26 3-1zM581 200l-3 2 6 26 4-2zM598 202l-4 1 6 27 4-2zM614 203l-3 2 6 26 3-1zM631 205l-3 1 5 27 3-2zM648 206l-4 2 5 27 4-2zM665 208l-3 2 4 26 3-1zM682 210l-3 1 4 27 3-2zM700 211l-4 2 3 27 4-2zM717 213l-3 2 2 27 4-2zM735 214l-3 2 2 27 3-1zM753 216l-4 2 2 27 3-2zM771 218l-3 2 1 27 3-2zM789 220l-3 1 0 28 3-2zM807 221l-3 2 0 28 3-2zM826 223l-3 2 -1 27 3-2zM845 225l-3 2 -2 27 4-2zM864 227l-3 1 -2 28 3-2zM883 228l-3 2 -3 28 3-2zM902 230l-3 2 -3 28 3-2zM922 232l-3 2 -4 28 3-2zM942 234l-3 2 -5 28 3-2zM962 236l-3 2 -5 28 2-2zM982 238l-3 2 -6 28 3-2zM1002 240l-3 2 -6 28 3-2zM1023 242l-3 2 -7 28 3-2zM1044 244l-3 2 -8 28 3-2zM1065 245l-3 3 -9 28 3-2zM1086 247l-3 3 -9 28 2-2zM1107 250l-2 2 -10 28 2-2zM1129 252l-2 2 -11 28 2-2zM1151 254l-2 2 -12 28 2-2zM1173 256l-2 2 -13 29 3-2zM1196 258l-3 2 -13 29 2-2zM1218 260l-2 2 -14 29 2-2zM1241 262l-2 2 -15 29 2-2zM1264 264l-2 2 -16 30 2-3zM1288 266l-2 3 -17 29 2-2zM1312 269l-3 2 -18 29 2-2zM1336 271l-3 2 -19 30 3-3z"/><path class="gt" d="M421 182l4 3 -4 2 -4-3zM436 184l4 3 -4 1 -4-3zM451 185l4 3 -3 2 -5-3zM466 186l5 4 -4 1 -5-3zM481 188l5 3 -4 2 -4-4zM497 189l5 4 -4 1 -5-3zM512 191l5 3 -4 2 -4-4zM528 192l5 4 -4 1 -5-3zM544 194l5 3 -4 2 -5-4zM560 195l5 4 -4 1 -5-3zM576 197l5 3 -3 2 -6-4zM592 198l6 4 -4 1 -5-3zM609 200l5 3 -3 2 -6-4zM625 201l6 4 -3 1 -6-3zM642 203l6 3 -4 2 -5-3zM659 204l6 4 -3 2 -7-4zM676 206l6 4 -3 1 -6-3zM693 208l7 3 -4 2 -6-4zM711 209l6 4 -3 2 -7-4zM728 211l7 3 -3 2 -7-3zM746 213l7 3 -4 2 -6-4zM764 214l7 4 -3 2 -7-4zM782 216l7 4 -3 1 -7-3zM800 218l7 3 -3 2 -7-4zM819 219l7 4 -3 2 -8-4zM837 221l8 4 -3 2 -8-4zM856 223l8 4 -3 1 -8-3zM875 225l8 3 -3 2 -8-4zM894 226l8 4 -3 2 -8-4zM914 228l8 4 -3 2 -8-4zM933 230l9 4 -3 2 -9-4zM953 232l9 4 -3 2 -9-4zM973 234l9 4 -3 2 -9-4zM993 236l9 4 -3 2 -9-5zM1013 237l10 5 -3 2 -9-5zM1034 239l10 5 -3 2 -10-5zM1055 241l10 4 -3 3 -10-5zM1076 243l10 4 -3 3 -10-5zM1097 245l10 5 -2 2 -10-5zM1119 247l10 5 -2 2 -11-5zM1140 249l11 5 -2 2 -11-5zM1162 251l11 5 -2 2 -11-5zM1185 253l11 5 -3 2 -11-5zM1207 255l11 5 -2 2 -11-4zM1230 258l11 4 -2 2 -12-4zM1253 260l11 4 -2 2 -12-4zM1276 262l12 4 -2 3 -12-5zM1299 264l13 5 -3 2 -12-5zM1323 266l13 5 -3 2 -12-5z"/><path class="gm" d="M424 189l4 3 10 26 -4-4zM439 190l4 3 10 26 -4-3zM454 192l4 3 10 26 -4-4zM469 193l5 3 9 26 -4-3zM485 194l4 4 10 26 -5-4zM500 196l5 3 9 26 -5-3zM516 197l5 4 8 26 -5-3zM532 199l5 3 8 27 -5-4zM548 200l5 4 8 26 -5-3zM564 202l6 3 7 27 -6-4zM581 204l5 3 7 27 -6-4zM597 205l6 4 6 26 -6-3zM614 207l6 3 5 27 -5-4zM631 208l6 4 5 27 -6-4zM648 210l6 4 4 26 -6-3zM665 212l6 3 4 27 -6-4zM682 213l7 4 3 27 -6-4zM700 215l6 4 3 27 -6-4zM717 217l7 3 2 27 -6-3zM735 218l7 4 2 27 -7-4zM753 220l7 4 1 27 -6-4zM771 222l7 3 1 28 -7-4zM790 223l7 4 0 28 -7-4zM808 225l8 4 -1 28 -7-4zM827 227l8 4 -1 27 -8-4zM846 229l8 4 -2 27 -7-4zM865 231l8 4 -2 27 -8-4zM884 232l8 4 -2 28 -8-4zM904 234l8 4 -3 28 -8-4zM923 236l9 4 -4 28 -8-4zM943 238l9 4 -5 28 -8-4zM964 240l8 4 -5 28 -9-4zM984 242l9 4 -6 28 -9-4zM1004 244l10 4 -7 28 -9-4zM1025 246l10 4 -8 28 -9-4zM1046 248l10 4 -9 29 -9-5zM1067 250l10 4 -9 29 -10-5zM1089 252l10 4 -10 29 -10-5zM1110 254l11 4 -11 29 -10-4zM1132 256l11 4 -12 29 -10-4zM1154 258l11 5 -12 28 -11-4zM1177 260l11 5 -14 29 -10-5zM1199 262l12 5 -15 29 -10-5zM1222 265l12 4 -15 29 -11-4zM1245 267l12 4 -16 30 -11-5zM1269 269l12 5 -17 29 -12-5zM1292 271l13 5 -18 29 -12-4zM1316 273l13 5 -19 30 -12-5z"/><path class="gb" d="M432 190l-4 2 10 26 4-2zM447 192l-4 1 10 26 4-2zM462 193l-4 2 10 26 4-2zM478 195l-4 1 9 26 4-1zM493 196l-4 2 10 26 3-2zM509 198l-4 1 9 26 3-1zM525 199l-4 2 8 26 4-2zM541 201l-4 1 8 27 4-2zM557 202l-4 2 8 26 3-1zM573 204l-3 1 7 27 3-2zM590 205l-4 2 7 27 3-2zM606 207l-3 2 6 26 3-2zM623 209l-3 1 5 27 4-2zM640 210l-3 2 5 27 3-2zM657 212l-3 2 4 26 4-1zM675 213l-4 2 4 27 3-2zM692 215l-3 2 3 27 3-2zM710 217l-4 2 3 27 3-2zM727 218l-3 2 2 27 4-1zM745 220l-3 2 2 27 3-2zM763 222l-3 2 1 27 4-2zM782 224l-4 1 1 28 3-2zM800 225l-3 2 0 28 3-2zM819 227l-3 2 -1 28 3-2zM838 229l-3 2 -1 27 3-1zM857 231l-3 2 -2 27 3-2zM876 233l-3 2 -2 27 3-2zM896 234l-4 2 -2 28 3-2zM915 236l-3 2 -3 28 3-2zM935 238l-3 2 -4 28 3-2zM955 240l-3 2 -5 28 3-2zM975 242l-3 2 -5 28 3-2zM996 244l-3 2 -6 28 2-2zM1017 246l-3 2 -7 28 2-2zM1037 248l-2 2 -8 28 3-2zM1059 250l-3 2 -9 29 3-3zM1080 252l-3 2 -9 29 3-2zM1102 254l-3 2 -10 29 2-2zM1123 256l-2 2 -11 29 2-2zM1145 258l-2 2 -12 29 3-2zM1168 260l-3 3 -12 28 2-2zM1190 263l-2 2 -14 29 3-2zM1213 265l-2 2 -15 29 3-2zM1236 267l-2 2 -15 29 2-2zM1259 269l-2 2 -16 30 2-3zM1283 271l-2 3 -17 29 2-2zM1307 274l-2 2 -18 29 2-2zM1331 276l-2 2 -19 30 2-3z"/><path class="gt" d="M427 187l5 3 -4 2 -4-3zM443 189l4 3 -4 1 -4-3zM458 190l4 3 -4 2 -4-3zM473 191l5 4 -4 1 -5-3zM488 193l5 3 -4 2 -4-4zM504 194l5 4 -4 1 -5-3zM520 196l5 3 -4 2 -5-4zM536 197l5 4 -4 1 -5-3zM552 199l5 3 -4 2 -5-4zM568 200l5 4 -3 1 -6-3zM584 202l6 3 -4 2 -5-3zM601 203l5 4 -3 2 -6-4zM617 205l6 4 -3 1 -6-3zM634 207l6 3 -3 2 -6-4zM651 208l6 4 -3 2 -6-4zM668 210l7 3 -4 2 -6-3zM686 211l6 4 -3 2 -7-4zM703 213l7 4 -4 2 -6-4zM721 215l6 3 -3 2 -7-3zM739 216l6 4 -3 2 -7-4zM756 218l7 4 -3 2 -7-4zM775 220l7 4 -4 1 -7-3zM793 222l7 3 -3 2 -7-4zM811 223l8 4 -3 2 -8-4zM830 225l8 4 -3 2 -8-4zM849 227l8 4 -3 2 -8-4zM868 229l8 4 -3 2 -8-4zM887 231l9 3 -4 2 -8-4zM907 232l8 4 -3 2 -8-4zM926 234l9 4 -3 2 -9-4zM946 236l9 4 -3 2 -9-4zM966 238l9 4 -3 2 -8-4zM987 240l9 4 -3 2 -9-4zM1007 242l10 4 -3 2 -10-4zM1028 244l9 4 -2 2 -10-4zM1049 246l10 4 -3 2 -10-4zM1070 248l10 4 -3 2 -10-4zM1091 250l11 4 -3 2 -10-4zM1113 252l10 4 -2 2 -11-4zM1135 254l10 4 -2 2 -11-4zM1157 256l11 4 -3 3 -11-5zM1179 258l11 5 -2 2 -11-5zM1202 260l11 5 -2 2 -12-5zM1224 262l12 5 -2 2 -12-4zM1248 265l11 4 -2 2 -12-4zM1271 267l12 4 -2 3 -12-5zM1294 269l13 5 -2 2 -13-5zM1318 271l13 5 -2 2 -13-5z"/><path class="gm" d="M430 194l4 3 11 26 -4-4zM445 195l5 3 10 26 -4-3zM461 197l4 3 10 26 -4-4zM476 198l5 3 9 26 -4-3zM492 200l5 3 9 26 -5-3zM508 201l5 4 8 26 -5-4zM524 203l5 3 8 26 -5-3zM540 204l5 4 8 26 -5-4zM556 206l5 3 8 27 -6-4zM573 207l5 4 7 26 -6-3zM589 209l6 3 6 27 -5-4zM606 211l6 3 5 27 -5-4zM623 212l6 4 5 27 -6-4zM640 214l6 3 5 27 -6-3zM657 215l6 4 4 27 -6-4zM674 217l7 4 4 27 -7-4zM692 219l6 4 4 27 -7-4zM710 221l6 3 3 27 -6-3zM728 222l6 4 3 27 -7-4zM746 224l7 4 1 27 -7-4zM764 226l7 4 1 27 -7-4zM782 228l8 3 0 28 -7-4zM801 229l7 4 0 28 -7-4zM820 231l7 4 0 28 -8-4zM839 233l8 4 -2 28 -7-4zM858 235l8 4 -2 28 -8-4zM877 237l9 4 -3 28 -8-5zM897 239l8 4 -3 28 -8-5zM917 240l8 5 -4 28 -8-5zM937 242l9 5 -5 28 -9-5zM957 244l9 5 -5 28 -9-5zM977 246l10 5 -7 28 -8-4zM998 248l9 5 -6 28 -10-4zM1019 250l9 5 -7 28 -9-4zM1040 252l10 5 -9 28 -9-4zM1061 254l10 5 -9 28 -10-4zM1083 256l10 5 -10 29 -10-5zM1104 259l11 4 -11 29 -10-5zM1126 261l11 4 -11 29 -11-5zM1149 263l11 4 -13 29 -10-4zM1171 265l11 5 -13 29 -11-5zM1194 267l11 5 -14 29 -11-5zM1217 269l12 5 -15 29 -12-4zM1240 272l12 4 -16 30 -11-5zM1264 274l12 5 -17 29 -12-5zM1287 276l13 5 -18 29 -12-4zM1311 279l13 4 -19 30 -12-5z"/><path class="gb" d="M438 195l-4 2 11 26 4-2zM454 197l-4 1 10 26 4-1zM469 198l-4 2 10 26 4-2zM485 200l-4 1 9 26 4-1zM501 201l-4 2 9 26 3-2zM516 203l-3 2 8 26 4-2zM533 204l-4 2 8 26 4-1zM549 206l-4 2 8 26 3-2zM565 208l-4 1 8 27 3-2zM582 209l-4 2 7 26 3-1zM598 211l-3 1 6 27 4-2zM615 212l-3 2 5 27 4-2zM632 214l-3 2 5 27 3-2zM649 216l-3 1 5 27 3-2zM667 217l-4 2 4 27 4-2zM684 219l-3 2 4 27 3-2zM702 221l-4 2 4 27 3-2zM720 222l-4 2 3 27 3-1zM738 224l-4 2 3 27 3-2zM756 226l-3 2 1 27 3-2zM774 228l-3 2 1 27 3-2zM793 230l-3 1 0 28 3-2zM812 231l-4 2 0 28 3-2zM831 233l-4 2 0 28 3-2zM850 235l-3 2 -2 28 3-2zM869 237l-3 2 -2 28 3-2zM889 239l-3 2 -3 28 3-2zM908 241l-3 2 -3 28 3-2zM928 243l-3 2 -4 28 3-2zM949 245l-3 2 -5 28 3-2zM969 247l-3 2 -5 28 2-2zM989 249l-2 2 -7 28 3-2zM1010 251l-3 2 -6 28 2-2zM1031 253l-3 2 -7 28 3-2zM1053 255l-3 2 -9 28 3-2zM1074 257l-3 2 -9 28 3-2zM1096 259l-3 2 -10 29 3-3zM1118 261l-3 2 -11 29 3-2zM1140 263l-3 2 -11 29 2-2zM1162 265l-2 2 -13 29 3-2zM1185 267l-3 3 -13 29 3-3zM1208 270l-3 2 -14 29 3-2zM1231 272l-2 2 -15 29 2-2zM1254 274l-2 2 -16 30 2-3zM1278 276l-2 3 -17 29 2-2zM1302 279l-2 2 -18 29 2-2zM1326 281l-2 2 -19 30 2-2z"/><path class="gt" d="M434 192l4 3 -4 2 -4-3zM449 193l5 4 -4 1 -5-3zM465 195l4 3 -4 2 -4-3zM480 196l5 4 -4 1 -5-3zM496 198l5 3 -4 2 -5-3zM512 199l4 4 -3 2 -5-4zM528 201l5 3 -4 2 -5-3zM544 203l5 3 -4 2 -5-4zM560 204l5 4 -4 1 -5-3zM576 206l6 3 -4 2 -5-4zM593 207l5 4 -3 1 -6-3zM609 209l6 3 -3 2 -6-3zM626 210l6 4 -3 2 -6-4zM643 212l6 4 -3 1 -6-3zM661 214l6 3 -4 2 -6-4zM678 215l6 4 -3 2 -7-4zM695 217l7 4 -4 2 -6-4zM713 219l7 3 -4 2 -6-3zM731 220l7 4 -4 2 -6-4zM749 222l7 4 -3 2 -7-4zM767 224l7 4 -3 2 -7-4zM786 226l7 4 -3 1 -8-3zM804 227l8 4 -4 2 -7-4zM823 229l8 4 -4 2 -7-4zM842 231l8 4 -3 2 -8-4zM861 233l8 4 -3 2 -8-4zM880 235l9 4 -3 2 -9-4zM900 237l8 4 -3 2 -8-4zM920 239l8 4 -3 2 -8-5zM940 240l9 5 -3 2 -9-5zM960 242l9 5 -3 2 -9-5zM980 244l9 5 -2 2 -10-5zM1001 246l9 5 -3 2 -9-5zM1022 248l9 5 -3 2 -9-5zM1043 250l10 5 -3 2 -10-5zM1064 252l10 5 -3 2 -10-5zM1085 254l11 5 -3 2 -10-5zM1107 256l11 5 -3 2 -11-4zM1129 259l11 4 -3 2 -11-4zM1151 261l11 4 -2 2 -11-4zM1174 263l11 4 -3 3 -11-5zM1196 265l12 5 -3 2 -11-5zM1219 267l12 5 -2 2 -12-5zM1242 269l12 5 -2 2 -12-4zM1266 272l12 4 -2 3 -12-5zM1290 274l12 5 -2 2 -13-5zM1314 276l12 5 -2 2 -13-4z"/><path class="gm" d="M437 199l4 3 11 26 -5-3zM452 200l5 4 10 26 -5-4zM468 202l4 3 10 26 -4-3zM484 203l4 4 10 26 -5-4zM499 205l5 3 9 26 -5-3zM515 206l5 4 9 26 -5-3zM532 208l5 3 8 27 -5-4zM548 210l5 3 8 27 -6-4zM564 211l6 4 7 26 -6-3zM581 213l6 3 6 27 -5-4zM598 214l5 4 7 27 -6-4zM615 216l6 4 5 26 -6-3zM632 218l6 3 5 27 -6-3zM649 219l6 4 5 27 -6-4zM667 221l6 4 4 27 -6-4zM684 223l7 4 3 27 -6-4zM702 225l7 3 3 28 -7-4zM720 226l7 4 2 27 -6-3zM738 228l7 4 2 27 -7-4zM756 230l8 4 1 27 -7-4zM775 232l7 4 1 27 -7-4zM794 234l7 4 0 27 -7-4zM813 235l7 4 0 28 -8-4zM832 237l7 4 -1 28 -7-4zM851 239l8 4 -2 28 -8-4zM870 241l9 4 -3 28 -8-4zM890 243l8 4 -3 28 -8-4zM910 245l9 4 -4 28 -9-4zM930 247l9 4 -5 28 -8-4zM950 249l9 4 -5 28 -9-4zM971 251l9 4 -6 28 -9-4zM992 253l9 4 -7 29 -9-5zM1012 255l10 4 -7 29 -10-5zM1034 257l10 4 -9 29 -9-5zM1055 259l10 5 -9 28 -10-4zM1077 261l10 5 -10 28 -10-4zM1099 263l10 5 -11 29 -10-5zM1121 265l10 5 -11 29 -10-5zM1143 268l11 4 -12 29 -11-4zM1166 270l11 5 -13 29 -11-5zM1189 272l11 5 -14 29 -11-5zM1212 274l11 5 -15 29 -11-5zM1235 277l12 4 -16 30 -11-5zM1259 279l12 5 -17 29 -12-5zM1283 281l12 5 -18 30 -12-5zM1307 284l13 5 -19 29 -13-5z"/><path class="gb" d="M445 200l-4 2 11 26 3-2zM461 202l-4 2 10 26 4-2zM476 203l-4 2 10 26 4-1zM492 205l-4 2 10 26 3-2zM508 207l-4 1 9 26 4-1zM524 208l-4 2 9 26 3-2zM540 210l-3 1 8 27 3-2zM557 211l-4 2 8 27 3-2zM574 213l-4 2 7 26 3-1zM590 215l-3 1 6 27 4-2zM607 216l-4 2 7 27 3-2zM624 218l-3 2 5 26 4-1zM641 220l-3 1 5 27 3-2zM659 221l-4 2 5 27 3-2zM676 223l-3 2 4 27 3-2zM694 225l-3 2 3 27 4-2zM712 227l-3 1 3 28 3-2zM730 228l-3 2 2 27 3-1zM748 230l-3 2 2 27 3-2zM767 232l-3 2 1 27 3-2zM786 234l-4 2 1 27 3-2zM804 236l-3 2 0 27 3-2zM823 237l-3 2 0 28 3-2zM843 239l-4 2 -1 28 3-2zM862 241l-3 2 -2 28 3-2zM882 243l-3 2 -3 28 3-2zM902 245l-4 2 -3 28 3-2zM922 247l-3 2 -4 28 3-2zM942 249l-3 2 -5 28 3-2zM962 251l-3 2 -5 28 3-2zM983 253l-3 2 -6 28 3-2zM1004 255l-3 2 -7 29 3-3zM1025 257l-3 2 -7 29 2-2zM1046 259l-2 2 -9 29 3-2zM1068 261l-3 3 -9 28 3-2zM1090 264l-3 2 -10 28 3-2zM1112 266l-3 2 -11 29 3-3zM1134 268l-3 2 -11 29 3-2zM1157 270l-3 2 -12 29 2-2zM1179 272l-2 3 -13 29 2-3zM1202 275l-2 2 -14 29 2-2zM1226 277l-3 2 -15 29 3-2zM1249 279l-2 2 -16 30 2-3zM1273 281l-2 3 -17 29 2-2zM1297 284l-2 2 -18 30 2-3zM1322 286l-2 3 -19 29 2-2z"/><path class="gt" d="M441 197l4 3 -4 2 -4-3zM456 199l5 3 -4 2 -5-4zM472 200l4 3 -4 2 -4-3zM487 202l5 3 -4 2 -4-4zM503 203l5 4 -4 1 -5-3zM519 205l5 3 -4 2 -5-4zM535 206l5 4 -3 1 -5-3zM552 208l5 3 -4 2 -5-3zM568 209l6 4 -4 2 -6-4zM585 211l5 4 -3 1 -6-3zM601 213l6 3 -4 2 -5-4zM618 214l6 4 -3 2 -6-4zM635 216l6 4 -3 1 -6-3zM653 218l6 3 -4 2 -6-4zM670 219l6 4 -3 2 -6-4zM688 221l6 4 -3 2 -7-4zM705 223l7 4 -3 1 -7-3zM723 225l7 3 -3 2 -7-4zM742 226l6 4 -3 2 -7-4zM760 228l7 4 -3 2 -8-4zM778 230l8 4 -4 2 -7-4zM797 232l7 4 -3 2 -7-4zM816 233l7 4 -3 2 -7-4zM835 235l8 4 -4 2 -7-4zM854 237l8 4 -3 2 -8-4zM874 239l8 4 -3 2 -9-4zM893 241l9 4 -4 2 -8-4zM913 243l9 4 -3 2 -9-4zM933 245l9 4 -3 2 -9-4zM953 247l9 4 -3 2 -9-4zM974 249l9 4 -3 2 -9-4zM994 251l10 4 -3 2 -9-4zM1015 253l10 4 -3 2 -10-4zM1036 255l10 4 -2 2 -10-4zM1058 257l10 4 -3 3 -10-5zM1079 259l11 5 -3 2 -10-5zM1101 261l11 5 -3 2 -10-5zM1123 263l11 5 -3 2 -10-5zM1146 265l11 5 -3 2 -11-4zM1168 268l11 4 -2 3 -11-5zM1191 270l11 5 -2 2 -11-5zM1214 272l12 5 -3 2 -11-5zM1237 274l12 5 -2 2 -12-4zM1261 277l12 4 -2 3 -12-5zM1285 279l12 5 -2 2 -12-5zM1309 281l13 5 -2 3 -13-5z"/><path class="gm" d="M444 204l4 3 10 26 -4-3zM459 205l5 4 10 26 -5-4zM475 207l5 3 9 27 -4-4zM491 209l5 3 9 26 -5-3zM507 210l5 4 9 26 -5-4zM523 212l5 3 9 27 -6-4zM540 213l5 4 8 26 -6-3zM556 215l5 4 8 26 -6-3zM573 217l5 3 7 27 -5-4zM590 218l5 4 7 27 -6-4zM607 220l5 4 6 27 -5-4zM624 222l6 3 5 27 -6-3zM641 223l6 4 5 27 -6-4zM659 225l6 4 4 27 -6-4zM676 227l7 4 4 27 -7-4zM694 229l7 4 3 27 -6-4zM712 230l7 4 3 28 -7-4zM730 232l7 4 2 28 -6-4zM749 234l7 4 1 27 -6-4zM767 236l8 4 1 27 -7-4zM786 238l8 4 0 27 -7-4zM805 240l8 4 0 27 -8-4zM824 242l8 4 -1 27 -7-4zM844 243l8 5 -2 27 -8-4zM863 245l8 5 -2 27 -8-4zM883 247l8 5 -3 28 -8-5zM903 249l9 5 -4 28 -8-5zM923 251l9 5 -4 28 -9-5zM944 253l9 5 -5 28 -9-4zM964 255l9 5 -5 28 -9-4zM985 257l9 5 -6 28 -9-4zM1006 260l10 4 -8 28 -9-4zM1027 262l10 4 -8 29 -9-5zM1049 264l10 4 -9 29 -10-5zM1071 266l10 4 -10 29 -10-4zM1093 268l10 5 -10 29 -10-5zM1115 270l11 5 -12 29 -10-5zM1137 273l11 4 -12 29 -10-5zM1160 275l11 5 -13 29 -11-5zM1183 277l12 5 -14 29 -11-5zM1206 279l12 5 -15 29 -11-4zM1230 282l12 5 -16 29 -12-5zM1254 284l12 5 -17 29 -12-5zM1278 286l12 5 -18 30 -12-5zM1302 289l13 5 -19 29 -12-5z"/><path class="gb" d="M452 206l-4 1 10 26 4-1zM468 207l-4 2 10 26 4-2zM484 209l-4 1 9 27 4-2zM500 210l-4 2 9 26 4-1zM516 212l-4 2 9 26 3-2zM532 214l-4 1 9 27 3-2zM549 215l-4 2 8 26 3-1zM565 217l-4 2 8 26 3-2zM582 219l-4 1 7 27 4-2zM599 220l-4 2 7 27 3-2zM616 222l-4 2 6 27 4-2zM633 224l-3 1 5 27 4-2zM651 225l-4 2 5 27 4-2zM669 227l-4 2 4 27 4-2zM686 229l-3 2 4 27 3-2zM704 231l-3 2 3 27 3-2zM723 232l-4 2 3 28 3-2zM741 234l-4 2 2 28 4-2zM759 236l-3 2 1 27 4-1zM778 238l-3 2 1 27 3-2zM797 240l-3 2 0 27 3-2zM816 242l-3 2 0 27 3-2zM835 244l-3 2 -1 27 3-2zM855 246l-3 2 -2 27 3-2zM875 248l-4 2 -2 27 3-2zM895 250l-4 2 -3 28 4-2zM915 252l-3 2 -4 28 3-2zM935 254l-3 2 -4 28 3-2zM956 256l-3 2 -5 28 2-2zM976 258l-3 2 -5 28 3-2zM997 260l-3 2 -6 28 3-2zM1019 262l-3 2 -8 28 3-2zM1040 264l-3 2 -8 29 3-2zM1062 266l-3 2 -9 29 3-2zM1084 268l-3 2 -10 29 3-2zM1106 271l-3 2 -10 29 2-3zM1128 273l-2 2 -12 29 3-2zM1151 275l-3 2 -12 29 3-2zM1174 277l-3 3 -13 29 3-3zM1197 280l-2 2 -14 29 2-2zM1220 282l-2 2 -15 29 2-2zM1244 284l-2 3 -16 29 2-2zM1268 287l-2 2 -17 29 2-2zM1292 289l-2 2 -18 30 3-3zM1317 291l-2 3 -19 29 2-2z"/><path class="gt" d="M447 202l5 4 -4 1 -4-3zM463 204l5 3 -4 2 -5-4zM479 205l5 4 -4 1 -5-3zM495 207l5 3 -4 2 -5-3zM511 208l5 4 -4 2 -5-4zM527 210l5 4 -4 1 -5-3zM543 212l6 3 -4 2 -5-4zM560 213l5 4 -4 2 -5-4zM576 215l6 4 -4 1 -5-3zM593 217l6 3 -4 2 -5-4zM610 218l6 4 -4 2 -5-4zM627 220l6 4 -3 1 -6-3zM645 222l6 3 -4 2 -6-4zM662 223l7 4 -4 2 -6-4zM680 225l6 4 -3 2 -7-4zM698 227l6 4 -3 2 -7-4zM716 229l7 3 -4 2 -7-4zM734 230l7 4 -4 2 -7-4zM752 232l7 4 -3 2 -7-4zM771 234l7 4 -3 2 -8-4zM790 236l7 4 -3 2 -8-4zM809 238l7 4 -3 2 -8-4zM828 240l7 4 -3 2 -8-4zM847 242l8 4 -3 2 -8-5zM866 243l9 5 -4 2 -8-5zM886 245l9 5 -4 2 -8-5zM906 247l9 5 -3 2 -9-5zM926 249l9 5 -3 2 -9-5zM947 251l9 5 -3 2 -9-5zM967 253l9 5 -3 2 -9-5zM988 255l9 5 -3 2 -9-5zM1009 257l10 5 -3 2 -10-4zM1030 260l10 4 -3 2 -10-4zM1052 262l10 4 -3 2 -10-4zM1073 264l11 4 -3 2 -10-4zM1095 266l11 5 -3 2 -10-5zM1117 268l11 5 -2 2 -11-5zM1140 270l11 5 -3 2 -11-4zM1163 273l11 4 -3 3 -11-5zM1185 275l12 5 -2 2 -12-5zM1209 277l11 5 -2 2 -12-5zM1232 279l12 5 -2 3 -12-5zM1256 282l12 5 -2 2 -12-5zM1280 284l12 5 -2 2 -12-5zM1304 286l13 5 -2 3 -13-5z"/><path class="gm" d="M450 209l5 4 10 26 -4-4zM466 211l5 3 10 26 -5-3zM482 212l5 4 10 26 -5-3zM498 214l5 4 9 26 -5-4zM515 216l5 3 8 27 -5-4zM531 217l5 4 8 26 -5-3zM548 219l5 4 8 26 -6-4zM564 221l6 3 7 27 -5-4zM581 222l6 4 7 27 -6-4zM598 224l6 4 6 27 -5-4zM616 226l6 4 5 26 -6-3zM633 227l6 4 5 27 -6-4zM651 229l6 4 4 27 -6-4zM668 231l7 4 4 27 -6-4zM686 233l7 4 3 27 -6-4zM704 235l7 4 3 27 -6-4zM723 236l7 4 2 28 -7-4zM741 238l7 4 2 28 -7-4zM760 240l7 4 1 28 -7-4zM779 242l7 4 1 28 -8-4zM798 244l7 4 0 28 -7-4zM817 246l8 4 -1 28 -7-4zM836 248l8 4 -1 28 -8-4zM856 250l8 4 -2 28 -8-4zM876 252l8 4 -2 28 -8-4zM896 254l9 4 -4 28 -8-4zM916 256l9 4 -4 28 -9-4zM937 258l9 4 -5 29 -9-5zM957 260l10 4 -6 29 -9-5zM978 262l10 5 -7 28 -9-5zM1000 264l9 5 -7 28 -9-4zM1021 266l10 5 -8 29 -10-5zM1043 269l10 4 -9 29 -10-5zM1064 271l11 4 -10 29 -10-5zM1087 273l10 5 -10 28 -10-4zM1109 275l11 5 -12 29 -10-5zM1131 277l11 5 -12 29 -10-5zM1154 280l12 5 -13 29 -11-5zM1177 282l12 5 -14 29 -11-5zM1201 284l12 5 -15 30 -12-5zM1224 287l12 5 -15 29 -12-5zM1248 289l13 5 -17 30 -12-5zM1273 292l12 5 -18 29 -12-5zM1297 294l13 5 -19 30 -12-5z"/><path class="gb" d="M459 211l-4 2 10 26 4-2zM475 213l-4 1 10 26 4-1zM491 214l-4 2 10 26 3-2zM507 216l-4 2 9 26 4-2zM524 217l-4 2 8 27 4-2zM540 219l-4 2 8 26 4-1zM557 221l-4 2 8 26 3-2zM574 222l-4 2 7 27 4-2zM591 224l-4 2 7 27 3-2zM608 226l-4 2 6 27 4-2zM625 228l-3 2 5 26 4-1zM643 229l-4 2 5 27 4-2zM661 231l-4 2 4 27 4-2zM678 233l-3 2 4 27 3-2zM696 235l-3 2 3 27 4-2zM715 237l-4 2 3 27 4-2zM733 239l-3 1 2 28 3-2zM752 240l-4 2 2 28 3-2zM771 242l-4 2 1 28 4-2zM790 244l-4 2 1 28 3-2zM809 246l-4 2 0 28 4-2zM828 248l-3 2 -1 28 3-2zM848 250l-4 2 -1 28 3-2zM868 252l-4 2 -2 28 3-2zM888 254l-4 2 -2 28 3-2zM908 256l-3 2 -4 28 3-2zM928 258l-3 2 -4 28 3-2zM949 260l-3 2 -5 29 3-3zM970 262l-3 2 -6 29 3-2zM991 264l-3 3 -7 28 3-2zM1012 267l-3 2 -7 28 3-2zM1034 269l-3 2 -8 29 3-3zM1055 271l-2 2 -9 29 3-2zM1078 273l-3 2 -10 29 3-2zM1100 275l-3 3 -10 28 2-2zM1122 278l-2 2 -12 29 3-2zM1145 280l-3 2 -12 29 3-2zM1168 282l-2 3 -13 29 2-3zM1191 285l-2 2 -14 29 3-2zM1215 287l-2 2 -15 30 2-3zM1239 289l-3 3 -15 29 2-2zM1263 292l-2 2 -17 30 2-3zM1287 294l-2 3 -18 29 3-2zM1312 297l-2 2 -19 30 2-3z"/><path class="gt" d="M454 207l5 4 -4 2 -5-4zM470 209l5 4 -4 1 -5-3zM486 211l5 3 -4 2 -5-4zM502 212l5 4 -4 2 -5-4zM518 214l6 3 -4 2 -5-3zM535 215l5 4 -4 2 -5-4zM551 217l6 4 -4 2 -5-4zM568 219l6 3 -4 2 -6-3zM585 221l6 3 -4 2 -6-4zM602 222l6 4 -4 2 -6-4zM619 224l6 4 -3 2 -6-4zM637 226l6 3 -4 2 -6-4zM654 227l7 4 -4 2 -6-4zM672 229l6 4 -3 2 -7-4zM690 231l6 4 -3 2 -7-4zM708 233l7 4 -4 2 -7-4zM726 235l7 4 -3 1 -7-4zM745 236l7 4 -4 2 -7-4zM763 238l8 4 -4 2 -7-4zM782 240l8 4 -4 2 -7-4zM801 242l8 4 -4 2 -7-4zM820 244l8 4 -3 2 -8-4zM840 246l8 4 -4 2 -8-4zM859 248l9 4 -4 2 -8-4zM879 250l9 4 -4 2 -8-4zM899 252l9 4 -3 2 -9-4zM919 254l9 4 -3 2 -9-4zM940 256l9 4 -3 2 -9-4zM960 258l10 4 -3 2 -10-4zM981 260l10 4 -3 3 -10-5zM1002 262l10 5 -3 2 -9-5zM1024 264l10 5 -3 2 -10-5zM1045 266l10 5 -2 2 -10-4zM1067 269l11 4 -3 2 -11-4zM1089 271l11 4 -3 3 -10-5zM1112 273l10 5 -2 2 -11-5zM1134 275l11 5 -3 2 -11-5zM1157 278l11 4 -2 3 -12-5zM1180 280l11 5 -2 2 -12-5zM1203 282l12 5 -2 2 -12-5zM1227 284l12 5 -3 3 -12-5zM1251 287l12 5 -2 2 -13-5zM1275 289l12 5 -2 3 -12-5zM1299 292l13 5 -2 2 -13-5z"/><path class="gm" d="M457 215l5 3 10 26 -4-3zM474 216l4 4 10 26 -5-4zM490 218l5 3 9 27 -5-4zM506 219l5 4 9 27 -5-4zM523 221l5 4 8 26 -5-3zM539 223l5 4 8 26 -5-4zM556 225l5 3 8 27 -5-4zM573 226l6 4 7 27 -6-4zM590 228l6 4 6 27 -5-4zM607 230l6 4 6 27 -6-4zM625 232l6 3 5 27 -6-3zM642 233l7 4 5 27 -6-4zM660 235l7 4 4 27 -6-4zM678 237l7 4 4 27 -7-4zM696 239l7 4 3 27 -6-4zM715 241l7 4 2 27 -6-4zM733 243l7 4 3 27 -7-4zM752 245l7 4 2 27 -7-4zM771 246l8 5 0 27 -7-4zM790 248l8 5 0 27 -7-4zM810 250l7 5 0 27 -8-4zM829 252l8 5 -1 27 -8-4zM849 254l8 5 -2 28 -8-5zM869 256l8 5 -2 28 -8-5zM889 258l8 5 -3 28 -8-5zM909 261l9 4 -4 28 -8-4zM930 263l9 4 -5 28 -8-4zM951 265l9 4 -6 29 -8-5zM972 267l9 4 -6 29 -9-5zM993 269l10 5 -7 28 -10-5zM1014 271l10 5 -7 28 -10-4zM1036 273l10 5 -8 29 -10-5zM1058 276l10 4 -9 29 -10-5zM1080 278l11 5 -10 28 -10-4zM1103 280l11 5 -11 29 -11-5zM1126 283l11 4 -12 29 -11-5zM1149 285l11 5 -13 29 -11-5zM1172 287l11 5 -13 29 -12-5zM1195 290l12 5 -15 29 -11-5zM1219 292l12 5 -16 29 -11-5zM1243 294l12 6 -16 29 -12-5zM1267 297l13 5 -18 30 -12-6zM1292 299l13 6 -19 29 -12-5z"/><path class="gb" d="M466 216l-4 2 10 26 4-1zM482 218l-4 2 10 26 4-2zM499 220l-4 1 9 27 4-2zM515 221l-4 2 9 27 4-2zM532 223l-4 2 8 26 4-1zM548 225l-4 2 8 26 4-2zM565 226l-4 2 8 27 4-2zM582 228l-3 2 7 27 3-2zM600 230l-4 2 6 27 4-2zM617 232l-4 2 6 27 4-2zM635 234l-4 1 5 27 4-1zM652 235l-3 2 5 27 3-2zM670 237l-3 2 4 27 4-2zM688 239l-3 2 4 27 3-2zM707 241l-4 2 3 27 4-2zM725 243l-3 2 2 27 4-2zM744 245l-4 2 3 27 3-2zM763 247l-4 2 2 27 3-2zM782 249l-3 2 0 27 4-2zM801 251l-3 2 0 27 3-2zM821 253l-4 2 0 27 3-2zM840 255l-3 2 -1 27 3-2zM860 257l-3 2 -2 28 3-2zM880 259l-3 2 -2 28 3-2zM901 261l-4 2 -3 28 3-2zM921 263l-3 2 -4 28 3-2zM942 265l-3 2 -5 28 3-2zM963 267l-3 2 -6 29 3-3zM984 269l-3 2 -6 29 3-2zM1006 271l-3 3 -7 28 3-2zM1027 274l-3 2 -7 28 2-2zM1049 276l-3 2 -8 29 3-2zM1071 278l-3 2 -9 29 3-2zM1094 280l-3 3 -10 28 2-2zM1116 283l-2 2 -11 29 2-2zM1139 285l-2 2 -12 29 2-2zM1162 287l-2 3 -13 29 3-3zM1186 290l-3 2 -13 29 2-2zM1210 292l-3 3 -15 29 3-3zM1234 295l-3 2 -16 29 3-2zM1258 297l-3 3 -16 29 2-2zM1282 300l-2 2 -18 30 3-3zM1307 302l-2 3 -19 29 2-2z"/><path class="gt" d="M461 213l5 3 -4 2 -5-3zM477 214l5 4 -4 2 -4-4zM494 216l5 4 -4 1 -5-3zM510 218l5 3 -4 2 -5-4zM526 219l6 4 -4 2 -5-4zM543 221l5 4 -4 2 -5-4zM560 223l5 3 -4 2 -5-3zM577 224l5 4 -3 2 -6-4zM594 226l6 4 -4 2 -6-4zM611 228l6 4 -4 2 -6-4zM629 230l6 4 -4 1 -6-3zM646 232l6 3 -3 2 -7-4zM664 233l6 4 -3 2 -7-4zM682 235l6 4 -3 2 -7-4zM700 237l7 4 -4 2 -7-4zM718 239l7 4 -3 2 -7-4zM737 241l7 4 -4 2 -7-4zM756 243l7 4 -4 2 -7-4zM775 244l7 5 -3 2 -8-5zM794 246l7 5 -3 2 -8-5zM813 248l8 5 -4 2 -7-5zM832 250l8 5 -3 2 -8-5zM852 252l8 5 -3 2 -8-5zM872 254l8 5 -3 2 -8-5zM892 256l9 5 -4 2 -8-5zM912 258l9 5 -3 2 -9-4zM933 260l9 5 -3 2 -9-4zM954 263l9 4 -3 2 -9-4zM975 265l9 4 -3 2 -9-4zM996 267l10 4 -3 3 -10-5zM1017 269l10 5 -3 2 -10-5zM1039 271l10 5 -3 2 -10-5zM1061 273l10 5 -3 2 -10-4zM1083 276l11 4 -3 3 -11-5zM1106 278l10 5 -2 2 -11-5zM1128 280l11 5 -2 2 -11-4zM1151 283l11 4 -2 3 -11-5zM1174 285l12 5 -3 2 -11-5zM1198 287l12 5 -3 3 -12-5zM1221 290l13 5 -3 2 -12-5zM1245 292l13 5 -3 3 -12-6zM1270 295l12 5 -2 2 -13-5zM1294 297l13 5 -2 3 -13-6z"/><path class="gm" d="M465 220l4 4 11 26 -5-4zM481 222l5 3 9 27 -4-4zM497 223l5 4 10 27 -5-4zM514 225l5 4 9 26 -5-3zM531 227l5 4 8 26 -5-4zM547 229l6 3 8 27 -6-4zM564 230l6 4 7 27 -5-4zM582 232l5 4 7 27 -5-4zM599 234l6 4 6 27 -6-4zM617 236l6 4 5 27 -6-4zM634 238l6 3 6 28 -6-4zM652 239l7 4 4 28 -6-4zM670 241l7 4 4 28 -7-5zM688 243l7 4 4 28 -7-5zM707 245l7 4 3 28 -7-5zM726 247l7 4 2 28 -7-5zM744 249l8 4 1 28 -7-5zM763 251l8 4 1 28 -7-5zM783 253l7 4 1 28 -8-4zM802 255l8 4 0 28 -8-4zM822 257l8 4 -1 28 -8-4zM841 259l9 4 -2 28 -8-4zM861 261l9 4 -2 28 -9-4zM882 263l8 4 -3 29 -8-5zM902 265l9 5 -4 28 -8-5zM923 267l9 5 -5 28 -8-4zM944 269l9 5 -5 28 -9-4zM965 272l9 4 -6 29 -9-5zM986 274l10 4 -7 29 -9-5zM1008 276l10 5 -8 28 -9-4zM1030 278l10 5 -9 29 -9-5zM1052 281l10 4 -9 29 -10-5zM1074 283l11 5 -10 29 -10-5zM1097 285l11 5 -11 29 -11-5zM1120 288l11 4 -12 30 -11-5zM1143 290l11 5 -13 29 -11-5zM1166 292l12 5 -14 30 -11-6zM1190 295l12 5 -15 29 -11-5zM1214 297l12 5 -16 30 -11-5zM1238 300l12 5 -16 29 -12-5zM1262 302l13 6 -18 29 -12-5zM1287 305l13 5 -19 30 -12-6z"/><path class="gb" d="M473 222l-4 2 11 26 3-2zM490 224l-4 1 9 27 4-2zM506 225l-4 2 10 27 3-2zM523 227l-4 2 9 26 4-1zM540 229l-4 2 8 26 4-2zM557 231l-4 1 8 27 3-2zM574 232l-4 2 7 27 4-2zM591 234l-4 2 7 27 4-2zM609 236l-4 2 6 27 4-2zM626 238l-3 2 5 27 4-2zM644 240l-4 1 6 28 3-2zM662 241l-3 2 4 28 4-2zM680 243l-3 2 4 28 3-2zM699 245l-4 2 4 28 3-2zM717 247l-3 2 3 28 3-2zM736 249l-3 2 2 28 3-2zM755 251l-3 2 1 28 4-2zM774 253l-3 2 1 28 3-2zM794 255l-4 2 1 28 3-2zM813 257l-3 2 0 28 3-2zM833 259l-3 2 -1 28 3-2zM853 261l-3 2 -2 28 3-2zM873 263l-3 2 -2 28 3-2zM894 265l-4 2 -3 29 3-2zM914 268l-3 2 -4 28 3-2zM935 270l-3 2 -5 28 3-2zM956 272l-3 2 -5 28 3-2zM977 274l-3 2 -6 29 3-3zM999 276l-3 2 -7 29 3-2zM1021 279l-3 2 -8 28 3-2zM1043 281l-3 2 -9 29 3-3zM1065 283l-3 2 -9 29 3-2zM1088 285l-3 3 -10 29 2-3zM1110 288l-2 2 -11 29 2-2zM1133 290l-2 2 -12 30 2-3zM1157 293l-3 2 -13 29 3-2zM1180 295l-2 2 -14 30 2-3zM1204 297l-2 3 -15 29 2-2zM1228 300l-2 2 -16 30 2-3zM1253 302l-3 3 -16 29 2-2zM1277 305l-2 3 -18 29 3-2zM1302 308l-2 2 -19 30 3-3z"/><path class="gt" d="M469 218l4 4 -4 2 -4-4zM485 220l5 4 -4 1 -5-3zM501 222l5 3 -4 2 -5-4zM518 223l5 4 -4 2 -5-4zM534 225l6 4 -4 2 -5-4zM551 227l6 4 -4 1 -6-3zM568 229l6 3 -4 2 -6-4zM585 230l6 4 -4 2 -5-4zM603 232l6 4 -4 2 -6-4zM620 234l6 4 -3 2 -6-4zM638 236l6 4 -4 1 -6-3zM656 237l6 4 -3 2 -7-4zM674 239l6 4 -3 2 -7-4zM692 241l7 4 -4 2 -7-4zM710 243l7 4 -3 2 -7-4zM729 245l7 4 -3 2 -7-4zM748 247l7 4 -3 2 -8-4zM767 249l7 4 -3 2 -8-4zM786 251l8 4 -4 2 -7-4zM805 253l8 4 -3 2 -8-4zM825 255l8 4 -3 2 -8-4zM845 257l8 4 -3 2 -9-4zM865 259l8 4 -3 2 -9-4zM885 261l9 4 -4 2 -8-4zM905 263l9 5 -3 2 -9-5zM926 265l9 5 -3 2 -9-5zM947 267l9 5 -3 2 -9-5zM968 269l9 5 -3 2 -9-4zM989 272l10 4 -3 2 -10-4zM1011 274l10 5 -3 2 -10-5zM1033 276l10 5 -3 2 -10-5zM1055 278l10 5 -3 2 -10-4zM1077 281l11 4 -3 3 -11-5zM1099 283l11 5 -2 2 -11-5zM1122 285l11 5 -2 2 -11-4zM1145 288l12 5 -3 2 -11-5zM1169 290l11 5 -2 2 -12-5zM1192 292l12 5 -2 3 -12-5zM1216 295l12 5 -2 2 -12-5zM1240 297l13 5 -3 3 -12-5zM1265 300l12 5 -2 3 -13-6zM1289 302l13 6 -2 2 -13-5z"/><path class="gm" d="M472 226l5 3 10 27 -5-4zM488 227l5 4 10 27 -5-4zM505 229l5 4 9 27 -5-4zM522 231l5 4 9 26 -5-3zM539 233l5 4 8 26 -5-4zM556 234l5 4 8 27 -5-4zM573 236l6 4 7 27 -6-4zM591 238l5 4 7 27 -6-4zM608 240l6 4 6 27 -6-4zM626 242l6 4 6 27 -6-4zM644 244l6 4 5 27 -6-4zM662 246l7 4 4 27 -6-4zM680 247l7 5 4 27 -7-4zM699 249l7 5 3 27 -7-4zM718 251l7 5 2 27 -7-4zM736 253l8 5 2 27 -7-4zM756 255l7 5 1 27 -7-4zM775 257l7 5 1 27 -7-4zM794 259l8 5 0 28 -7-5zM814 261l8 5 -1 28 -7-5zM834 264l8 4 -1 28 -8-5zM854 266l8 4 -2 28 -8-4zM874 268l9 4 -3 28 -8-4zM895 270l9 4 -4 29 -8-5zM916 272l9 5 -4 28 -9-5zM937 274l9 5 -5 28 -9-4zM958 276l9 5 -5 29 -9-5zM979 279l10 4 -6 29 -10-5zM1001 281l10 5 -7 28 -10-4zM1023 283l10 5 -8 29 -10-5zM1045 286l11 4 -9 29 -10-5zM1068 288l10 5 -9 29 -11-5zM1090 290l11 5 -10 29 -11-5zM1113 293l12 5 -12 29 -11-5zM1137 295l11 5 -13 29 -10-5zM1160 298l12 5 -14 29 -11-5zM1184 300l12 5 -15 30 -11-6zM1208 303l12 5 -15 29 -12-5zM1232 305l13 5 -17 30 -12-5zM1257 308l13 5 -18 30 -12-6zM1282 310l13 6 -19 29 -12-5z"/><path class="gb" d="M481 228l-4 1 10 27 4-2zM497 229l-4 2 10 27 4-2zM514 231l-4 2 9 27 4-2zM531 233l-4 2 9 26 3-1zM548 235l-4 2 8 26 4-2zM565 236l-4 2 8 27 4-2zM583 238l-4 2 7 27 4-2zM600 240l-4 2 7 27 4-2zM618 242l-4 2 6 27 4-2zM636 244l-4 2 6 27 3-2zM654 246l-4 2 5 27 4-2zM672 248l-3 2 4 27 3-2zM691 250l-4 2 4 27 3-2zM709 252l-3 2 3 27 3-2zM728 254l-3 2 2 27 4-2zM747 256l-3 2 2 27 3-2zM767 258l-4 2 1 27 4-2zM786 260l-4 2 1 27 4-2zM806 262l-4 2 0 28 4-3zM825 264l-3 2 -1 28 4-2zM846 266l-4 2 -1 28 3-2zM866 268l-4 2 -2 28 4-2zM886 270l-3 2 -3 28 3-2zM907 272l-3 2 -4 29 3-2zM928 274l-3 3 -4 28 3-2zM949 277l-3 2 -5 28 3-2zM971 279l-4 2 -5 29 3-3zM992 281l-3 2 -6 29 3-2zM1014 283l-3 3 -7 28 3-2zM1036 286l-3 2 -8 29 3-2zM1059 288l-3 2 -9 29 3-2zM1081 291l-3 2 -9 29 2-3zM1104 293l-3 2 -10 29 2-2zM1127 295l-2 3 -12 29 3-3zM1151 298l-3 2 -13 29 3-2zM1174 300l-2 3 -14 29 3-3zM1198 303l-2 2 -15 30 3-3zM1223 305l-3 3 -15 29 2-2zM1247 308l-2 2 -17 30 3-3zM1272 311l-2 2 -18 30 2-3zM1297 313l-2 3 -19 29 3-2z"/><path class="gt" d="M476 224l5 4 -4 1 -5-3zM492 226l5 3 -4 2 -5-4zM509 227l5 4 -4 2 -5-4zM526 229l5 4 -4 2 -5-4zM543 231l5 4 -4 2 -5-4zM560 233l5 3 -4 2 -5-4zM577 234l6 4 -4 2 -6-4zM594 236l6 4 -4 2 -5-4zM612 238l6 4 -4 2 -6-4zM630 240l6 4 -4 2 -6-4zM648 242l6 4 -4 2 -6-4zM666 244l6 4 -3 2 -7-4zM684 246l7 4 -4 2 -7-5zM702 247l7 5 -3 2 -7-5zM721 249l7 5 -3 2 -7-5zM740 251l7 5 -3 2 -8-5zM759 253l8 5 -4 2 -7-5zM778 255l8 5 -4 2 -7-5zM798 257l8 5 -4 2 -8-5zM817 259l8 5 -3 2 -8-5zM837 261l9 5 -4 2 -8-4zM857 264l9 4 -4 2 -8-4zM878 266l8 4 -3 2 -9-4zM898 268l9 4 -3 2 -9-4zM919 270l9 4 -3 3 -9-5zM940 272l9 5 -3 2 -9-5zM961 274l10 5 -4 2 -9-5zM983 277l9 4 -3 2 -10-4zM1004 279l10 4 -3 3 -10-5zM1026 281l10 5 -3 2 -10-5zM1048 283l11 5 -3 2 -11-4zM1071 286l10 5 -3 2 -10-5zM1093 288l11 5 -3 2 -11-5zM1116 290l11 5 -2 3 -12-5zM1139 293l12 5 -3 2 -11-5zM1163 295l11 5 -2 3 -12-5zM1187 298l11 5 -2 2 -12-5zM1211 300l12 5 -3 3 -12-5zM1235 303l12 5 -2 2 -13-5zM1259 305l13 6 -2 2 -13-5zM1284 308l13 5 -2 3 -13-6z"/><path class="gm" d="M480 231l5 4 9 27 -5-4zM496 233l5 4 10 27 -5-4zM513 235l5 4 9 27 -5-4zM530 237l5 4 9 26 -5-3zM547 239l6 4 8 26 -6-4zM564 240l6 4 8 27 -6-4zM582 242l6 4 7 27 -6-4zM600 244l6 4 6 27 -6-4zM617 246l7 4 5 27 -6-4zM636 248l6 4 5 27 -6-4zM654 250l6 4 5 27 -6-4zM672 252l7 4 4 27 -7-4zM691 254l7 4 3 28 -7-5zM709 256l8 4 2 28 -6-5zM728 258l8 4 2 28 -7-5zM748 260l7 4 2 28 -8-4zM767 262l8 4 1 28 -8-4zM787 264l7 4 1 28 -8-4zM806 266l8 5 0 27 -8-4zM826 268l9 5 -2 28 -7-5zM847 270l8 5 -2 28 -8-5zM867 273l9 4 -3 28 -8-4zM888 275l8 4 -3 29 -8-5zM909 277l9 5 -4 28 -9-5zM930 279l9 5 -5 28 -9-4zM951 281l9 5 -5 29 -9-5zM973 284l9 4 -6 29 -9-5zM994 286l10 5 -7 28 -9-4zM1016 288l11 5 -8 29 -10-5zM1039 291l10 5 -9 28 -10-5zM1061 293l11 5 -10 29 -10-5zM1084 296l11 5 -11 29 -10-6zM1107 298l11 5 -11 29 -11-5zM1131 300l11 6 -12 29 -11-5zM1154 303l12 5 -13 29 -12-5zM1178 305l12 6 -14 29 -12-5zM1202 308l13 5 -16 30 -11-6zM1227 311l12 5 -16 29 -12-5zM1252 313l12 6 -17 29 -12-5zM1277 316l13 5 -19 30 -12-6z"/><path class="gb" d="M489 233l-4 2 9 27 4-2zM505 235l-4 2 10 27 4-2zM522 237l-4 2 9 27 4-2zM539 239l-4 2 9 26 4-1zM557 241l-4 2 8 26 3-1zM574 242l-4 2 8 27 3-2zM592 244l-4 2 7 27 3-2zM610 246l-4 2 6 27 4-2zM627 248l-3 2 5 27 4-2zM646 250l-4 2 5 27 4-2zM664 252l-4 2 5 27 4-2zM683 254l-4 2 4 27 3-2zM701 256l-3 2 3 28 4-3zM720 258l-3 2 2 28 4-2zM739 260l-3 2 2 28 3-2zM759 262l-4 2 2 28 3-2zM778 264l-3 2 1 28 3-2zM798 266l-4 2 1 28 3-2zM818 268l-4 3 0 27 3-2zM838 271l-3 2 -2 28 4-2zM858 273l-3 2 -2 28 3-2zM879 275l-3 2 -3 28 3-2zM900 277l-4 2 -3 29 3-3zM921 279l-3 3 -4 28 3-2zM942 282l-3 2 -5 28 3-2zM964 284l-4 2 -5 29 3-3zM985 286l-3 2 -6 29 3-2zM1007 289l-3 2 -7 28 3-2zM1030 291l-3 2 -8 29 3-2zM1052 293l-3 3 -9 28 3-2zM1075 296l-3 2 -10 29 3-2zM1098 298l-3 3 -11 29 3-3zM1121 301l-3 2 -11 29 3-2zM1145 303l-3 3 -12 29 2-3zM1169 306l-3 2 -13 29 2-2zM1193 308l-3 3 -14 29 2-2zM1217 311l-2 2 -16 30 3-3zM1242 313l-3 3 -16 29 2-2zM1267 316l-3 3 -17 29 2-2zM1292 319l-2 2 -19 30 2-3z"/><path class="gt" d="M484 230l5 3 -4 2 -5-4zM500 231l5 4 -4 2 -5-4zM517 233l5 4 -4 2 -5-4zM534 235l5 4 -4 2 -5-4zM551 237l6 4 -4 2 -6-4zM568 239l6 3 -4 2 -6-4zM586 240l6 4 -4 2 -6-4zM603 242l7 4 -4 2 -6-4zM621 244l6 4 -3 2 -7-4zM639 246l7 4 -4 2 -6-4zM657 248l7 4 -4 2 -6-4zM676 250l7 4 -4 2 -7-4zM694 252l7 4 -3 2 -7-4zM713 254l7 4 -3 2 -8-4zM732 256l7 4 -3 2 -8-4zM751 258l8 4 -4 2 -7-4zM771 260l7 4 -3 2 -8-4zM790 262l8 4 -4 2 -7-4zM810 264l8 4 -4 3 -8-5zM830 266l8 5 -3 2 -9-5zM850 268l8 5 -3 2 -8-5zM870 270l9 5 -3 2 -9-4zM891 273l9 4 -4 2 -8-4zM912 275l9 4 -3 3 -9-5zM933 277l9 5 -3 2 -9-5zM954 279l10 5 -4 2 -9-5zM976 281l9 5 -3 2 -9-4zM997 284l10 5 -3 2 -10-5zM1019 286l11 5 -3 2 -11-5zM1042 288l10 5 -3 3 -10-5zM1064 291l11 5 -3 2 -11-5zM1087 293l11 5 -3 3 -11-5zM1110 296l11 5 -3 2 -11-5zM1133 298l12 5 -3 3 -11-6zM1157 301l12 5 -3 2 -12-5zM1181 303l12 5 -3 3 -12-6zM1205 306l12 5 -2 2 -13-5zM1229 308l13 5 -3 3 -12-5zM1254 311l13 5 -3 3 -12-6zM1279 313l13 6 -2 2 -13-5z"/><path class="gm" d="M487 237l5 4 10 27 -5-4zM504 239l5 4 10 27 -6-4zM521 241l6 4 8 27 -5-4zM538 243l6 4 8 27 -5-4zM556 245l5 4 8 27 -5-4zM573 247l6 4 7 27 -5-4zM591 248l6 5 7 27 -6-4zM609 250l6 5 6 27 -6-4zM627 252l6 4 6 28 -6-4zM645 254l7 4 5 28 -7-4zM664 256l6 5 5 27 -7-4zM682 258l7 5 4 27 -7-4zM701 260l7 5 3 27 -6-4zM720 262l8 5 2 27 -7-4zM740 264l7 5 2 28 -7-5zM759 267l8 4 1 28 -7-5zM779 269l8 4 0 28 -7-5zM799 271l8 4 -1 28 -7-4zM819 273l8 4 -1 29 -8-5zM839 275l8 5 -1 28 -8-5zM860 277l8 5 -2 28 -8-5zM880 280l9 4 -3 29 -8-5zM901 282l9 5 -3 28 -9-5zM923 284l9 5 -5 28 -9-5zM944 286l9 5 -5 29 -9-5zM966 289l9 5 -6 28 -9-5zM988 291l10 5 -7 29 -10-5zM1010 293l10 5 -8 29 -10-5zM1032 296l11 5 -9 29 -10-5zM1055 298l11 5 -10 29 -10-5zM1078 301l11 5 -11 29 -10-5zM1101 303l11 5 -11 29 -11-5zM1125 306l11 5 -12 29 -11-5zM1148 308l12 6 -13 29 -11-6zM1172 311l12 5 -14 30 -11-6zM1197 314l12 5 -15 29 -12-5zM1221 316l13 6 -17 29 -11-5zM1246 319l13 5 -17 30 -13-6zM1271 322l14 5 -19 30 -12-6z"/><path class="gb" d="M496 239l-4 2 10 27 4-2zM513 241l-4 2 10 27 3-2zM531 243l-4 2 8 27 4-2zM548 245l-4 2 8 27 4-2zM565 247l-4 2 8 27 4-2zM583 249l-4 2 7 27 4-2zM601 251l-4 2 7 27 3-2zM619 253l-4 2 6 27 4-2zM637 254l-4 2 6 28 4-2zM656 256l-4 2 5 28 3-2zM674 258l-4 3 5 27 3-2zM693 261l-4 2 4 27 4-2zM712 263l-4 2 3 27 4-2zM731 265l-3 2 2 27 4-2zM751 267l-4 2 2 28 3-3zM770 269l-3 2 1 28 3-2zM790 271l-3 2 0 28 4-2zM810 273l-3 2 -1 28 4-2zM830 275l-3 2 -1 29 3-3zM851 278l-4 2 -1 28 3-2zM872 280l-4 2 -2 28 3-2zM892 282l-3 2 -3 29 3-3zM914 284l-4 3 -3 28 3-2zM935 287l-3 2 -5 28 3-2zM957 289l-4 2 -5 29 3-3zM978 291l-3 3 -6 28 3-2zM1001 294l-3 2 -7 29 3-3zM1023 296l-3 2 -8 29 3-2zM1046 299l-3 2 -9 29 3-3zM1068 301l-2 2 -10 29 3-2zM1092 303l-3 3 -11 29 3-3zM1115 306l-3 2 -11 29 3-2zM1139 309l-3 2 -12 29 2-2zM1163 311l-3 3 -13 29 2-3zM1187 314l-3 2 -14 30 3-3zM1211 316l-2 3 -15 29 2-2zM1236 319l-2 3 -17 29 3-3zM1261 322l-2 2 -17 30 2-3zM1287 325l-2 2 -19 30 2-3z"/><path class="gt" d="M491 235l5 4 -4 2 -5-4zM508 237l5 4 -4 2 -5-4zM525 239l6 4 -4 2 -6-4zM542 241l6 4 -4 2 -6-4zM560 243l5 4 -4 2 -5-4zM577 245l6 4 -4 2 -6-4zM595 247l6 4 -4 2 -6-5zM613 248l6 5 -4 2 -6-5zM631 250l6 4 -4 2 -6-4zM649 252l7 4 -4 2 -7-4zM668 254l6 4 -4 3 -6-5zM686 256l7 5 -4 2 -7-5zM705 258l7 5 -4 2 -7-5zM724 260l7 5 -3 2 -8-5zM743 262l8 5 -4 2 -7-5zM763 264l7 5 -3 2 -8-4zM782 267l8 4 -3 2 -8-4zM802 269l8 4 -3 2 -8-4zM822 271l8 4 -3 2 -8-4zM842 273l9 5 -4 2 -8-5zM863 275l9 5 -4 2 -8-5zM884 277l8 5 -3 2 -9-4zM905 280l9 4 -4 3 -9-5zM926 282l9 5 -3 2 -9-5zM947 284l10 5 -4 2 -9-5zM969 286l9 5 -3 3 -9-5zM991 289l10 5 -3 2 -10-5zM1013 291l10 5 -3 2 -10-5zM1035 294l11 5 -3 2 -11-5zM1058 296l10 5 -2 2 -11-5zM1081 298l11 5 -3 3 -11-5zM1104 301l11 5 -3 2 -11-5zM1127 303l12 6 -3 2 -11-5zM1151 306l12 5 -3 3 -12-6zM1175 308l12 6 -3 2 -12-5zM1199 311l12 5 -2 3 -12-5zM1224 314l12 5 -2 3 -13-6zM1249 316l12 6 -2 2 -13-5zM1274 319l13 6 -2 2 -14-5z"/><path class="gm" d="M495 243l5 4 10 27 -5-4zM512 245l6 4 9 27 -6-4zM529 247l6 4 9 27 -6-4zM547 249l6 4 8 27 -6-4zM565 251l5 4 8 27 -6-4zM582 253l6 4 7 27 -6-4zM600 255l6 4 7 27 -6-4zM618 257l7 4 6 27 -7-4zM637 259l6 4 6 27 -7-4zM655 261l7 4 5 28 -7-5zM674 263l7 4 4 28 -7-5zM693 265l7 4 3 28 -6-5zM712 267l7 4 3 28 -7-4zM732 269l7 5 2 27 -7-4zM751 271l8 5 1 28 -7-5zM771 273l8 5 0 28 -7-5zM791 276l8 4 0 28 -8-5zM811 278l8 4 0 28 -8-4zM831 280l9 5 -2 28 -8-5zM852 282l9 5 -2 28 -9-5zM873 284l9 5 -3 29 -9-5zM894 287l9 5 -4 28 -8-5zM915 289l9 5 -4 28 -9-5zM937 291l9 5 -5 29 -9-5zM959 294l9 5 -6 28 -9-5zM981 296l10 5 -7 29 -10-5zM1003 299l10 5 -8 28 -9-5zM1025 301l11 5 -9 29 -10-5zM1048 304l11 5 -9 29 -11-6zM1071 306l11 5 -10 29 -10-5zM1095 309l11 5 -11 29 -11-5zM1118 311l12 6 -12 29 -11-6zM1142 314l12 5 -13 29 -11-5zM1166 316l12 6 -14 29 -11-5zM1191 319l12 6 -15 29 -12-6zM1216 322l12 5 -16 30 -12-6zM1241 325l13 5 -18 30 -12-6zM1266 327l13 6 -18 30 -13-6z"/><path class="gb" d="M504 245l-4 2 10 27 4-2zM522 247l-4 2 9 27 4-2zM539 249l-4 2 9 27 3-2zM557 251l-4 2 8 27 3-2zM574 253l-4 2 8 27 4-2zM592 255l-4 2 7 27 4-2zM610 257l-4 2 7 27 4-2zM629 259l-4 2 6 27 3-2zM647 261l-4 2 6 27 3-2zM666 263l-4 2 5 28 3-3zM685 265l-4 2 4 28 4-2zM704 267l-4 2 3 28 4-2zM723 269l-4 2 3 28 4-2zM743 271l-4 3 2 27 4-2zM762 274l-3 2 1 28 4-3zM782 276l-3 2 0 28 4-2zM802 278l-3 2 0 28 3-2zM823 280l-4 2 0 28 3-2zM843 282l-3 3 -2 28 4-2zM864 285l-3 2 -2 28 3-2zM885 287l-3 2 -3 29 3-3zM906 289l-3 3 -4 28 4-2zM928 292l-4 2 -4 28 3-2zM949 294l-3 2 -5 29 3-2zM971 296l-3 3 -6 28 3-2zM994 299l-3 2 -7 29 3-2zM1016 301l-3 3 -8 28 3-2zM1039 304l-3 2 -9 29 3-2zM1062 306l-3 3 -9 29 2-3zM1085 309l-3 2 -10 29 3-2zM1109 311l-3 3 -11 29 2-3zM1133 314l-3 3 -12 29 2-3zM1157 317l-3 2 -13 29 2-2zM1181 319l-3 3 -14 29 3-2zM1206 322l-3 3 -15 29 2-3zM1231 325l-3 2 -16 30 2-3zM1256 328l-2 2 -18 30 3-3zM1282 330l-3 3 -18 30 2-3z"/><path class="gt" d="M499 241l5 4 -4 2 -5-4zM516 243l6 4 -4 2 -6-4zM533 245l6 4 -4 2 -6-4zM551 247l6 4 -4 2 -6-4zM568 249l6 4 -4 2 -5-4zM586 251l6 4 -4 2 -6-4zM604 253l6 4 -4 2 -6-4zM622 255l7 4 -4 2 -7-4zM641 257l6 4 -4 2 -6-4zM659 259l7 4 -4 2 -7-4zM678 261l7 4 -4 2 -7-4zM697 263l7 4 -4 2 -7-4zM716 265l7 4 -4 2 -7-4zM735 267l8 4 -4 3 -7-5zM755 269l7 5 -3 2 -8-5zM774 271l8 5 -3 2 -8-5zM794 273l8 5 -3 2 -8-4zM814 276l9 4 -4 2 -8-4zM835 278l8 4 -3 3 -9-5zM855 280l9 5 -3 2 -9-5zM876 282l9 5 -3 2 -9-5zM897 285l9 4 -3 3 -9-5zM919 287l9 5 -4 2 -9-5zM940 289l9 5 -3 2 -9-5zM962 292l9 4 -3 3 -9-5zM984 294l10 5 -3 2 -10-5zM1006 296l10 5 -3 3 -10-5zM1029 299l10 5 -3 2 -11-5zM1051 301l11 5 -3 3 -11-5zM1074 304l11 5 -3 2 -11-5zM1098 306l11 5 -3 3 -11-5zM1121 309l12 5 -3 3 -12-6zM1145 311l12 6 -3 2 -12-5zM1169 314l12 5 -3 3 -12-6zM1193 317l13 5 -3 3 -12-6zM1218 319l13 6 -3 2 -12-5zM1243 322l13 6 -2 2 -13-5zM1268 325l14 5 -3 3 -13-6z"/><path class="gm" d="M503 249l5 5 10 26 -5-4zM520 251l6 4 9 27 -6-4zM538 253l6 4 8 27 -6-4zM556 255l5 4 8 28 -5-5zM574 257l5 4 8 28 -6-5zM592 259l6 4 6 28 -6-5zM610 261l6 5 6 27 -6-4zM628 263l7 5 5 27 -6-4zM647 265l6 5 5 27 -6-4zM666 267l6 5 5 27 -7-4zM685 270l7 4 3 28 -6-5zM704 272l7 4 3 28 -7-5zM723 274l8 4 2 28 -7-4zM743 276l7 4 2 28 -7-4zM763 278l8 5 1 28 -8-5zM783 280l8 5 0 28 -8-5zM803 283l8 4 0 28 -8-4zM824 285l8 5 -1 28 -8-5zM844 287l9 5 -2 28 -8-5zM865 289l9 5 -2 29 -9-5zM886 292l9 5 -3 28 -9-5zM908 294l9 5 -4 29 -9-5zM930 297l9 5 -5 28 -9-5zM951 299l10 5 -6 29 -9-5zM974 301l10 5 -7 29 -10-5zM996 304l10 5 -7 29 -10-5zM1019 306l10 6 -8 28 -10-5zM1042 309l10 5 -9 29 -10-5zM1065 312l11 5 -10 29 -11-6zM1088 314l11 5 -11 29 -10-5zM1112 317l12 5 -13 29 -11-5zM1136 319l12 6 -13 29 -11-5zM1160 322l12 6 -14 29 -11-6zM1185 325l12 5 -15 30 -12-6zM1210 328l13 5 -17 30 -12-6zM1235 330l13 6 -17 29 -13-5zM1261 333l13 6 -19 29 -12-5z"/><path class="gb" d="M513 252l-5 2 10 26 4-2zM530 253l-4 2 9 27 4-2zM548 255l-4 2 8 27 4-2zM565 257l-4 2 8 28 4-2zM583 259l-4 2 8 28 4-2zM602 261l-4 2 6 28 4-2zM620 263l-4 3 6 27 4-2zM639 266l-4 2 5 27 4-2zM657 268l-4 2 5 27 4-2zM676 270l-4 2 5 27 4-2zM695 272l-3 2 3 28 4-3zM715 274l-4 2 3 28 4-2zM734 276l-3 2 2 28 4-2zM754 278l-4 2 2 28 4-2zM774 281l-3 2 1 28 3-3zM794 283l-3 2 0 28 4-2zM815 285l-4 2 0 28 3-2zM835 287l-3 3 -1 28 3-2zM856 290l-3 2 -2 28 3-2zM877 292l-3 2 -2 29 3-3zM899 294l-4 3 -3 28 3-2zM920 297l-3 2 -4 29 3-3zM942 299l-3 3 -5 28 3-2zM964 302l-3 2 -6 29 4-3zM987 304l-3 2 -7 29 3-2zM1009 307l-3 2 -7 29 3-3zM1032 309l-3 3 -8 28 3-2zM1055 312l-3 2 -9 29 3-2zM1079 314l-3 3 -10 29 2-3zM1102 317l-3 2 -11 29 3-2zM1126 320l-2 2 -13 29 3-2zM1151 322l-3 3 -13 29 2-3zM1175 325l-3 3 -14 29 3-3zM1200 328l-3 2 -15 30 3-3zM1225 331l-2 2 -17 30 3-3zM1251 333l-3 3 -17 29 2-2zM1276 336l-2 3 -19 29 3-2z"/><path class="gt" d="M507 248l6 4 -5 2 -5-5zM525 249l5 4 -4 2 -6-4zM542 251l6 4 -4 2 -6-4zM560 253l5 4 -4 2 -5-4zM577 255l6 4 -4 2 -5-4zM596 257l6 4 -4 2 -6-4zM614 259l6 4 -4 3 -6-5zM632 261l7 5 -4 2 -7-5zM651 263l6 5 -4 2 -6-5zM669 265l7 5 -4 2 -6-5zM688 267l7 5 -3 2 -7-4zM708 270l7 4 -4 2 -7-4zM727 272l7 4 -3 2 -8-4zM747 274l7 4 -4 2 -7-4zM766 276l8 5 -3 2 -8-5zM786 278l8 5 -3 2 -8-5zM807 280l8 5 -4 2 -8-4zM827 283l8 4 -3 3 -8-5zM848 285l8 5 -3 2 -9-5zM869 287l8 5 -3 2 -9-5zM890 290l9 4 -4 3 -9-5zM911 292l9 5 -3 2 -9-5zM933 294l9 5 -3 3 -9-5zM955 297l9 5 -3 2 -10-5zM977 299l10 5 -3 2 -10-5zM999 302l10 5 -3 2 -10-5zM1022 304l10 5 -3 3 -10-6zM1045 307l10 5 -3 2 -10-5zM1068 309l11 5 -3 3 -11-5zM1091 312l11 5 -3 2 -11-5zM1115 314l11 6 -2 2 -12-5zM1139 317l12 5 -3 3 -12-6zM1163 320l12 5 -3 3 -12-6zM1188 322l12 6 -3 2 -12-5zM1212 325l13 6 -2 2 -13-5zM1238 328l13 5 -3 3 -13-6zM1263 331l13 5 -2 3 -13-6z"/><path class="gm" d="M511 256l6 4 9 27 -5-4zM529 258l5 4 9 27 -5-4zM547 260l5 4 9 27 -6-4zM565 262l5 4 8 27 -6-4zM583 264l6 4 7 27 -6-4zM601 266l6 4 7 27 -6-4zM619 268l7 4 6 28 -6-5zM638 270l7 4 5 28 -6-5zM657 272l7 5 5 27 -7-4zM676 274l7 5 4 27 -7-4zM695 276l8 5 3 28 -7-5zM715 279l7 4 3 28 -7-5zM735 281l7 4 2 28 -7-4zM755 283l7 5 2 28 -8-5zM775 285l8 5 0 28 -7-5zM795 288l8 4 0 28 -8-4zM816 290l8 5 -1 28 -8-5zM837 292l8 5 -1 28 -9-5zM858 295l8 4 -2 29 -8-5zM879 297l9 5 -3 28 -9-5zM900 299l10 5 -4 29 -9-5zM922 302l10 5 -5 28 -9-5zM944 304l10 5 -6 29 -9-5zM966 307l10 5 -6 29 -10-6zM989 309l10 5 -7 29 -10-5zM1012 312l10 5 -8 29 -10-5zM1035 314l11 6 -10 29 -10-6zM1058 317l11 5 -10 29 -10-5zM1082 320l11 5 -11 29 -11-5zM1106 322l11 6 -12 29 -11-6zM1130 325l12 6 -13 29 -12-6zM1154 328l12 5 -14 30 -11-6zM1179 331l12 5 -15 30 -11-6zM1204 333l13 6 -16 29 -12-5zM1229 336l13 6 -17 29 -12-5zM1255 339l13 6 -18 29 -13-5z"/><path class="gb" d="M521 258l-4 2 9 27 4-2zM539 260l-5 2 9 27 4-2zM556 262l-4 2 9 27 3-2zM575 264l-5 2 8 27 4-2zM593 266l-4 2 7 27 4-2zM611 268l-4 2 7 27 4-2zM630 270l-4 2 6 28 4-2zM649 272l-4 2 5 28 4-2zM668 274l-4 3 5 27 3-2zM687 277l-4 2 4 27 4-2zM706 279l-3 2 3 28 4-3zM726 281l-4 2 3 28 4-2zM746 283l-4 2 2 28 4-2zM766 285l-4 3 2 28 3-3zM786 288l-3 2 0 28 4-2zM807 290l-4 2 0 28 4-2zM828 292l-4 3 -1 28 4-2zM849 295l-4 2 -1 28 3-2zM870 297l-4 2 -2 29 3-3zM891 300l-3 2 -3 28 3-2zM913 302l-3 2 -4 29 3-3zM935 304l-3 3 -5 28 3-2zM957 307l-3 2 -6 29 4-2zM980 309l-4 3 -6 29 3-3zM1002 312l-3 2 -7 29 3-2zM1025 315l-3 2 -8 29 3-3zM1049 317l-3 3 -10 29 3-3zM1072 320l-3 2 -10 29 3-2zM1096 323l-3 2 -11 29 3-2zM1120 325l-3 3 -12 29 3-3zM1144 328l-2 3 -13 29 2-3zM1169 331l-3 2 -14 30 3-3zM1194 334l-3 2 -15 30 3-3zM1219 336l-2 3 -16 29 2-2zM1245 339l-3 3 -17 29 3-2zM1271 342l-3 3 -18 29 3-2z"/><path class="gt" d="M515 254l6 4 -4 2 -6-4zM533 256l6 4 -5 2 -5-4zM551 258l5 4 -4 2 -5-4zM569 260l6 4 -5 2 -5-4zM587 262l6 4 -4 2 -6-4zM605 264l6 4 -4 2 -6-4zM623 266l7 4 -4 2 -7-4zM642 268l7 4 -4 2 -7-4zM661 270l7 4 -4 3 -7-5zM680 272l7 5 -4 2 -7-5zM699 274l7 5 -3 2 -8-5zM719 276l7 5 -4 2 -7-4zM738 279l8 4 -4 2 -7-4zM758 281l8 4 -4 3 -7-5zM778 283l8 5 -3 2 -8-5zM799 285l8 5 -4 2 -8-4zM819 288l9 4 -4 3 -8-5zM840 290l9 5 -4 2 -8-5zM861 292l9 5 -4 2 -8-4zM882 295l9 5 -3 2 -9-5zM904 297l9 5 -3 2 -10-5zM925 299l10 5 -3 3 -10-5zM947 302l10 5 -3 2 -10-5zM970 304l10 5 -4 3 -10-5zM992 307l10 5 -3 2 -10-5zM1015 309l10 6 -3 2 -10-5zM1038 312l11 5 -3 3 -11-6zM1061 315l11 5 -3 2 -11-5zM1085 317l11 6 -3 2 -11-5zM1109 320l11 5 -3 3 -11-6zM1133 322l11 6 -2 3 -12-6zM1157 325l12 6 -3 2 -12-5zM1182 328l12 6 -3 2 -12-5zM1207 331l12 5 -2 3 -13-6zM1232 334l13 5 -3 3 -13-6zM1258 336l13 6 -3 3 -13-6z"/><path class="gm" d="M520 262l5 4 9 27 -5-4zM538 264l5 4 9 28 -6-5zM556 266l5 5 8 27 -5-5zM574 268l6 5 7 27 -6-4zM592 270l6 5 7 27 -6-4zM611 272l6 5 6 27 -6-4zM629 275l7 4 6 28 -7-5zM648 277l7 4 5 28 -6-5zM668 279l7 5 4 27 -7-4zM687 281l7 5 4 28 -7-5zM707 283l7 5 3 28 -7-5zM726 286l8 4 2 28 -7-5zM746 288l8 5 2 28 -8-5zM767 290l7 5 1 28 -7-5zM787 293l8 4 0 28 -7-4zM808 295l8 5 0 28 -8-5zM829 297l8 5 -1 28 -8-5zM850 300l9 5 -2 28 -9-5zM871 302l9 5 -3 29 -8-6zM893 305l9 5 -4 28 -8-5zM915 307l9 5 -4 29 -9-5zM937 310l10 5 -6 28 -9-5zM959 312l10 5 -6 29 -10-5zM982 315l10 5 -7 29 -10-6zM1005 317l10 6 -8 28 -10-5zM1028 320l11 5 -9 29 -10-5zM1051 323l11 5 -9 29 -11-5zM1075 325l11 6 -10 29 -11-6zM1099 328l12 6 -12 29 -11-6zM1123 331l12 5 -12 30 -12-6zM1148 334l12 5 -14 29 -11-5zM1173 336l12 6 -15 29 -11-5zM1198 339l13 6 -16 29 -12-5zM1224 342l13 6 -17 29 -13-5zM1250 345l13 6 -18 30 -13-6z"/><path class="gb" d="M529 264l-4 2 9 27 4-2zM547 266l-4 2 9 28 4-2zM566 268l-5 3 8 27 4-2zM584 271l-4 2 7 27 4-2zM602 273l-4 2 7 27 4-2zM621 275l-4 2 6 27 4-2zM640 277l-4 2 6 28 3-3zM659 279l-4 2 5 28 4-2zM678 281l-3 3 4 27 4-2zM698 284l-4 2 4 28 4-3zM718 286l-4 2 3 28 4-2zM738 288l-4 2 2 28 4-2zM758 290l-4 3 2 28 3-3zM778 293l-4 2 1 28 4-2zM799 295l-4 2 0 28 4-2zM820 297l-4 3 0 28 3-2zM841 300l-4 2 -1 28 3-2zM862 302l-3 3 -2 28 3-2zM884 305l-4 2 -3 29 4-3zM905 307l-3 3 -4 28 4-2zM928 310l-4 2 -4 29 3-3zM950 312l-3 3 -6 28 3-2zM972 315l-3 2 -6 29 3-2zM995 317l-3 3 -7 29 3-3zM1018 320l-3 3 -8 28 3-2zM1042 323l-3 2 -9 29 3-2zM1065 325l-3 3 -9 29 3-3zM1089 328l-3 3 -10 29 3-3zM1114 331l-3 3 -12 29 3-3zM1138 334l-3 2 -12 30 2-3zM1163 337l-3 2 -14 29 3-2zM1188 339l-3 3 -15 29 3-2zM1214 342l-3 3 -16 29 3-2zM1239 345l-2 3 -17 29 2-2zM1265 348l-2 3 -18 30 2-3z"/><path class="gt" d="M524 260l5 4 -4 2 -5-4zM542 262l5 4 -4 2 -5-4zM560 264l6 4 -5 3 -5-5zM578 266l6 5 -4 2 -6-5zM596 268l6 5 -4 2 -6-5zM615 270l6 5 -4 2 -6-5zM633 272l7 5 -4 2 -7-4zM652 275l7 4 -4 2 -7-4zM671 277l7 4 -3 3 -7-5zM691 279l7 5 -4 2 -7-5zM710 281l8 5 -4 2 -7-5zM730 283l8 5 -4 2 -8-4zM750 286l8 4 -4 3 -8-5zM770 288l8 5 -4 2 -7-5zM791 290l8 5 -4 2 -8-4zM811 293l9 4 -4 3 -8-5zM832 295l9 5 -4 2 -8-5zM853 297l9 5 -3 3 -9-5zM875 300l9 5 -4 2 -9-5zM896 302l9 5 -3 3 -9-5zM918 305l10 5 -4 2 -9-5zM940 307l10 5 -3 3 -10-5zM962 310l10 5 -3 2 -10-5zM985 312l10 5 -3 3 -10-5zM1008 315l10 5 -3 3 -10-6zM1031 317l11 6 -3 2 -11-5zM1054 320l11 5 -3 3 -11-5zM1078 323l11 5 -3 3 -11-6zM1102 325l12 6 -3 3 -12-6zM1126 328l12 6 -3 2 -12-5zM1151 331l12 6 -3 2 -12-5zM1176 334l12 5 -3 3 -12-6zM1201 337l13 5 -3 3 -13-6zM1226 339l13 6 -2 3 -13-6zM1252 342l13 6 -2 3 -13-6z"/><path class="gm" d="M528 269l6 4 9 27 -6-4zM546 271l6 4 9 27 -6-4zM565 273l6 4 7 28 -5-5zM583 275l6 4 7 28 -6-5zM602 277l6 5 7 27 -7-4zM621 279l6 5 6 27 -6-4zM640 282l6 4 6 28 -7-5zM659 284l7 4 4 28 -6-5zM678 286l7 5 4 27 -6-4zM698 288l7 5 4 28 -7-5zM718 291l7 4 3 28 -7-5zM738 293l8 5 2 28 -8-5zM758 295l8 5 1 28 -7-5zM779 298l8 4 1 29 -8-5zM800 300l8 5 0 28 -8-5zM821 302l8 5 -1 29 -8-5zM842 305l9 5 -2 28 -9-5zM863 307l9 5 -2 29 -9-5zM885 310l9 5 -3 28 -9-5zM907 312l10 6 -5 28 -9-5zM929 315l10 5 -5 29 -9-5zM952 318l10 5 -6 29 -10-6zM975 320l10 5 -7 29 -10-5zM998 323l10 5 -8 29 -10-5zM1021 325l11 6 -9 29 -10-6zM1045 328l11 6 -10 29 -11-6zM1068 331l12 6 -11 29 -11-6zM1093 334l11 5 -11 29 -11-5zM1117 337l12 5 -13 29 -11-5zM1142 339l12 6 -14 29 -11-5zM1167 342l12 6 -14 29 -12-5zM1192 345l13 6 -16 29 -12-5zM1218 348l13 6 -17 30 -12-6zM1244 351l13 6 -18 30 -13-6z"/><path class="gb" d="M538 271l-4 2 9 27 4-2zM556 273l-4 2 9 27 4-2zM575 275l-4 2 7 28 4-2zM593 277l-4 2 7 28 4-2zM612 280l-4 2 7 27 4-2zM631 282l-4 2 6 27 4-2zM650 284l-4 2 6 28 4-2zM670 286l-4 2 4 28 4-2zM689 288l-4 3 4 27 4-2zM709 291l-4 2 4 28 3-2zM729 293l-4 2 3 28 4-2zM749 295l-3 3 2 28 3-3zM770 298l-4 2 1 28 4-2zM791 300l-4 2 1 29 3-3zM812 303l-4 2 0 28 3-2zM833 305l-4 2 -1 29 4-3zM854 308l-3 2 -2 28 3-2zM876 310l-4 2 -2 29 3-3zM898 313l-4 2 -3 28 3-2zM920 315l-3 3 -5 28 4-2zM942 318l-3 2 -5 29 3-3zM965 320l-3 3 -6 29 3-3zM988 323l-3 2 -7 29 3-2zM1011 326l-3 2 -8 29 4-2zM1035 328l-3 3 -9 29 3-3zM1059 331l-3 3 -10 29 3-3zM1083 334l-3 3 -11 29 3-3zM1107 337l-3 2 -11 29 2-2zM1132 340l-3 2 -13 29 3-2zM1157 342l-3 3 -14 29 3-2zM1182 345l-3 3 -14 29 2-2zM1208 348l-3 3 -16 29 3-2zM1234 351l-3 3 -17 30 3-3zM1260 354l-3 3 -18 30 3-3z"/><path class="gt" d="M532 267l6 4 -4 2 -6-4zM551 269l5 4 -4 2 -6-4zM569 271l6 4 -4 2 -6-4zM587 273l6 4 -4 2 -6-4zM606 275l6 5 -4 2 -6-5zM625 277l6 5 -4 2 -6-5zM644 279l6 5 -4 2 -6-4zM663 282l7 4 -4 2 -7-4zM682 284l7 4 -4 3 -7-5zM702 286l7 5 -4 2 -7-5zM722 288l7 5 -4 2 -7-4zM742 291l7 4 -3 3 -8-5zM762 293l8 5 -4 2 -8-5zM783 295l8 5 -4 2 -8-4zM803 298l9 5 -4 2 -8-5zM824 300l9 5 -4 2 -8-5zM845 302l9 6 -3 2 -9-5zM867 305l9 5 -4 2 -9-5zM889 307l9 6 -4 2 -9-5zM911 310l9 5 -3 3 -10-6zM933 312l9 6 -3 2 -10-5zM955 315l10 5 -3 3 -10-5zM978 318l10 5 -3 2 -10-5zM1001 320l10 6 -3 2 -10-5zM1024 323l11 5 -3 3 -11-6zM1048 326l11 5 -3 3 -11-6zM1071 328l12 6 -3 3 -12-6zM1096 331l11 6 -3 2 -11-5zM1120 334l12 6 -3 2 -12-5zM1145 337l12 5 -3 3 -12-6zM1170 340l12 5 -3 3 -12-6zM1195 343l13 5 -3 3 -13-6zM1220 345l14 6 -3 3 -13-6zM1246 348l14 6 -3 3 -13-6z"/><path class="gm" d="M537 275l6 5 9 27 -6-4zM555 278l6 4 9 27 -6-4zM574 280l6 4 8 28 -6-5zM593 282l6 4 7 28 -6-5zM612 284l6 5 6 27 -6-4zM631 286l6 5 6 28 -6-5zM650 289l7 4 5 28 -7-5zM670 291l7 5 4 27 -7-4zM689 293l8 5 3 28 -7-5zM709 296l8 4 3 28 -7-5zM729 298l8 5 2 28 -7-5zM750 300l8 5 1 28 -7-5zM771 303l8 5 1 28 -8-5zM791 305l9 5 0 28 -8-5zM812 308l9 5 -1 28 -8-5zM834 310l9 5 -2 29 -8-6zM855 313l9 5 -2 28 -8-5zM877 315l10 5 -4 29 -8-5zM899 318l10 5 -4 29 -9-6zM922 320l9 6 -4 28 -10-5zM944 323l10 5 -5 29 -10-5zM967 326l11 5 -7 29 -10-6zM990 328l11 6 -8 29 -10-6zM1014 331l11 6 -9 29 -10-6zM1038 334l11 6 -10 29 -10-6zM1062 337l11 5 -11 29 -10-5zM1086 340l11 5 -11 29 -11-5zM1110 342l12 6 -12 29 -11-5zM1135 345l13 6 -14 29 -12-5zM1161 348l12 6 -15 30 -11-6zM1186 351l13 6 -16 30 -12-6zM1212 354l13 6 -17 30 -12-6zM1238 357l14 6 -19 30 -12-6z"/><path class="gb" d="M547 278l-4 2 9 27 4-2zM566 280l-5 2 9 27 4-2zM584 282l-4 2 8 28 4-2zM603 284l-4 2 7 28 4-2zM622 287l-4 2 6 27 4-2zM641 289l-4 2 6 28 4-3zM661 291l-4 2 5 28 4-2zM681 293l-4 3 4 27 4-2zM701 296l-4 2 3 28 4-2zM721 298l-4 2 3 28 4-2zM741 300l-4 3 2 28 4-3zM762 303l-4 2 1 28 4-2zM782 305l-3 3 1 28 3-3zM803 308l-3 2 0 28 3-2zM825 310l-4 3 -1 28 4-2zM846 313l-3 2 -2 29 4-3zM868 315l-4 3 -2 28 4-2zM890 318l-3 2 -4 29 4-3zM912 321l-3 2 -4 29 3-3zM935 323l-4 3 -4 28 3-2zM958 326l-4 2 -5 29 3-2zM981 329l-3 2 -7 29 3-3zM1004 331l-3 3 -8 29 4-3zM1028 334l-3 3 -9 29 3-3zM1052 337l-3 3 -10 29 3-3zM1076 340l-3 2 -11 29 3-2zM1100 343l-3 2 -11 29 3-2zM1125 346l-3 2 -12 29 3-2zM1150 348l-2 3 -14 29 3-2zM1176 351l-3 3 -15 30 3-3zM1202 354l-3 3 -16 30 3-3zM1228 358l-3 2 -17 30 3-3zM1254 361l-2 2 -19 30 3-3z"/><path class="gt" d="M541 273l6 5 -4 2 -6-5zM560 275l6 5 -5 2 -6-4zM578 278l6 4 -4 2 -6-4zM597 280l6 4 -4 2 -6-4zM616 282l6 5 -4 2 -6-5zM635 284l6 5 -4 2 -6-5zM654 286l7 5 -4 2 -7-4zM673 289l8 4 -4 3 -7-5zM693 291l8 5 -4 2 -8-5zM713 293l8 5 -4 2 -8-4zM733 296l8 4 -4 3 -8-5zM754 298l8 5 -4 2 -8-5zM774 300l8 5 -3 3 -8-5zM795 303l8 5 -3 2 -9-5zM816 305l9 5 -4 3 -9-5zM837 308l9 5 -3 2 -9-5zM859 310l9 5 -4 3 -9-5zM881 313l9 5 -3 2 -10-5zM903 315l9 6 -3 2 -10-5zM925 318l10 5 -4 3 -9-6zM948 321l10 5 -4 2 -10-5zM971 323l10 6 -3 2 -11-5zM994 326l10 5 -3 3 -11-6zM1017 329l11 5 -3 3 -11-6zM1041 331l11 6 -3 3 -11-6zM1065 334l11 6 -3 2 -11-5zM1089 337l11 6 -3 2 -11-5zM1113 340l12 6 -3 2 -12-6zM1138 343l12 5 -2 3 -13-6zM1163 346l13 5 -3 3 -12-6zM1189 349l13 5 -3 3 -13-6zM1215 352l13 6 -3 2 -13-6zM1241 355l13 6 -2 2 -14-6z"/><path class="gm" d="M546 282l6 5 9 27 -6-4zM565 285l6 4 8 28 -6-5zM583 287l7 4 7 28 -6-5zM602 289l7 5 7 27 -7-4zM622 291l6 5 6 28 -6-5zM641 294l7 4 5 28 -6-5zM661 296l7 5 4 28 -6-5zM681 298l7 5 4 28 -7-5zM701 301l7 5 3 27 -7-4zM721 303l8 5 2 28 -7-5zM741 305l8 5 2 29 -7-6zM762 308l8 5 1 28 -7-5zM783 310l8 6 1 28 -8-5zM804 313l9 5 -1 28 -8-5zM826 315l9 6 -2 28 -8-5zM847 318l9 5 -2 29 -8-6zM869 321l10 5 -3 28 -9-5zM892 323l9 6 -4 28 -9-5zM914 326l10 5 -5 29 -9-5zM937 329l10 5 -6 29 -9-6zM960 331l10 6 -6 29 -10-6zM983 334l11 6 -8 29 -10-6zM1007 337l10 6 -8 28 -10-5zM1031 340l11 5 -10 29 -10-5zM1055 343l11 5 -10 29 -11-5zM1079 346l12 5 -12 29 -11-5zM1104 348l12 6 -13 29 -11-5zM1129 351l12 6 -13 30 -12-6zM1154 354l13 6 -15 30 -12-6zM1180 357l13 7 -16 29 -12-6zM1206 361l13 6 -17 29 -12-6zM1232 364l14 6 -18 29 -13-6z"/><path class="gb" d="M556 285l-4 2 9 27 4-2zM575 287l-4 2 8 28 4-3zM594 289l-4 2 7 28 4-2zM613 291l-4 3 7 27 4-2zM632 294l-4 2 6 28 4-3zM652 296l-4 2 5 28 4-2zM672 298l-4 3 4 28 4-3zM692 301l-4 2 4 28 4-2zM712 303l-4 3 3 27 4-2zM732 306l-3 2 2 28 4-2zM753 308l-4 2 2 29 4-3zM774 311l-4 2 1 28 4-2zM795 313l-4 3 1 28 3-3zM817 316l-4 2 -1 28 4-2zM838 318l-3 3 -2 28 4-2zM860 321l-4 2 -2 29 4-3zM882 323l-3 3 -3 28 3-2zM905 326l-4 3 -4 28 4-2zM927 329l-3 2 -5 29 4-3zM950 332l-3 2 -6 29 4-3zM973 334l-3 3 -6 29 3-3zM997 337l-3 3 -8 29 4-3zM1021 340l-4 3 -8 28 3-2zM1045 343l-3 2 -10 29 3-2zM1069 346l-3 2 -10 29 3-2zM1094 349l-3 2 -12 29 3-2zM1119 352l-3 2 -13 29 3-2zM1144 355l-3 2 -13 30 3-3zM1170 358l-3 2 -15 30 3-3zM1196 361l-3 3 -16 29 3-3zM1222 364l-3 3 -17 29 3-3zM1248 367l-2 3 -18 29 2-3z"/><path class="gt" d="M550 280l6 5 -4 2 -6-5zM569 282l6 5 -4 2 -6-4zM588 285l6 4 -4 2 -7-4zM607 287l6 4 -4 3 -7-5zM626 289l6 5 -4 2 -6-5zM645 291l7 5 -4 2 -7-4zM665 294l7 4 -4 3 -7-5zM684 296l8 5 -4 2 -7-5zM704 298l8 5 -4 3 -7-5zM725 301l7 5 -3 2 -8-5zM745 303l8 5 -4 2 -8-5zM766 306l8 5 -4 2 -8-5zM787 308l8 5 -4 3 -8-6zM808 311l9 5 -4 2 -9-5zM829 313l9 5 -3 3 -9-6zM851 316l9 5 -4 2 -9-5zM873 318l9 5 -3 3 -10-5zM895 321l10 5 -4 3 -9-6zM918 323l9 6 -3 2 -10-5zM940 326l10 6 -3 2 -10-5zM963 329l10 5 -3 3 -10-6zM986 332l11 5 -3 3 -11-6zM1010 334l11 6 -4 3 -10-6zM1034 337l11 6 -3 2 -11-5zM1058 340l11 6 -3 2 -11-5zM1082 343l12 6 -3 2 -12-5zM1107 346l12 6 -3 2 -12-6zM1132 349l12 6 -3 2 -12-6zM1157 352l13 6 -3 2 -13-6zM1183 355l13 6 -3 3 -13-7zM1209 358l13 6 -3 3 -13-6zM1235 361l13 6 -2 3 -14-6z"/><path class="gm" d="M555 289l6 5 9 27 -6-4zM574 292l6 4 8 28 -6-5zM593 294l7 5 7 27 -7-5zM612 296l7 5 7 28 -7-5zM632 299l7 4 6 28 -7-5zM652 301l7 5 5 28 -7-5zM672 303l7 5 4 28 -7-5zM692 306l7 5 4 28 -7-5zM712 308l8 5 3 28 -8-5zM733 311l8 5 2 28 -8-5zM754 313l8 5 1 28 -8-5zM775 316l8 5 1 28 -8-5zM796 318l8 6 0 28 -8-5zM817 321l9 5 -1 29 -8-6zM839 324l9 5 -1 28 -9-5zM861 326l10 6 -3 28 -9-5zM884 329l9 5 -3 29 -9-6zM906 332l10 5 -4 29 -10-6zM929 334l10 6 -5 29 -10-6zM952 337l11 6 -7 28 -9-5zM976 340l10 6 -7 28 -10-5zM999 343l11 5 -8 29 -10-5zM1023 346l11 5 -9 29 -10-5zM1048 349l11 5 -10 29 -11-5zM1072 352l12 5 -11 30 -11-6zM1097 355l12 5 -12 30 -11-6zM1122 358l13 6 -14 29 -11-6zM1148 361l12 6 -14 29 -12-6zM1174 364l13 6 -16 29 -12-6zM1200 367l13 6 -17 29 -12-6zM1226 370l14 6 -18 30 -13-7z"/><path class="gb" d="M566 292l-5 2 9 27 4-2zM585 294l-5 2 8 28 4-2zM604 296l-4 3 7 27 4-2zM623 299l-4 2 7 28 4-3zM643 301l-4 2 6 28 4-2zM663 304l-4 2 5 28 4-3zM683 306l-4 2 4 28 4-2zM703 308l-4 3 4 28 4-3zM724 311l-4 2 3 28 4-2zM744 313l-3 3 2 28 4-3zM766 316l-4 2 1 28 4-2zM787 318l-4 3 1 28 3-2zM808 321l-4 3 0 28 4-3zM830 324l-4 2 -1 29 4-3zM852 326l-4 3 -1 28 3-2zM874 329l-3 3 -3 28 4-2zM897 332l-4 2 -3 29 3-3zM920 334l-4 3 -4 29 3-3zM943 337l-4 3 -5 29 3-3zM966 340l-3 3 -7 28 4-2zM990 343l-4 3 -7 28 3-2zM1013 346l-3 2 -8 29 3-2zM1038 349l-4 2 -9 29 4-2zM1062 352l-3 2 -10 29 3-2zM1087 355l-3 2 -11 30 3-3zM1112 358l-3 2 -12 30 3-3zM1138 361l-3 3 -14 29 3-3zM1163 364l-3 3 -14 29 3-3zM1189 367l-2 3 -16 29 3-3zM1216 370l-3 3 -17 29 3-2zM1242 373l-2 3 -18 30 3-3z"/><path class="gt" d="M560 287l6 5 -5 2 -6-5zM578 289l7 5 -5 2 -6-4zM597 292l7 4 -4 3 -7-5zM617 294l6 5 -4 2 -7-5zM636 296l7 5 -4 2 -7-4zM656 299l7 5 -4 2 -7-5zM676 301l7 5 -4 2 -7-5zM696 303l7 5 -4 3 -7-5zM716 306l8 5 -4 2 -8-5zM737 308l7 5 -3 3 -8-5zM757 311l9 5 -4 2 -8-5zM778 313l9 5 -4 3 -8-5zM800 316l8 5 -4 3 -8-6zM821 318l9 6 -4 2 -9-5zM843 321l9 5 -4 3 -9-5zM865 324l9 5 -3 3 -10-6zM887 326l10 6 -4 2 -9-5zM910 329l10 5 -4 3 -10-5zM933 332l10 5 -4 3 -10-6zM956 335l10 5 -3 3 -11-6zM979 337l11 6 -4 3 -10-6zM1003 340l10 6 -3 2 -11-5zM1027 343l11 6 -4 2 -11-5zM1051 346l11 6 -3 2 -11-5zM1075 349l12 6 -3 2 -12-5zM1100 352l12 6 -3 2 -12-5zM1125 355l13 6 -3 3 -13-6zM1151 358l12 6 -3 3 -12-6zM1176 361l13 6 -2 3 -13-6zM1203 364l13 6 -3 3 -13-6zM1229 367l13 6 -2 3 -14-6z"/><path class="gm" d="M565 297l6 4 8 28 -6-5zM584 299l6 5 8 27 -7-5zM603 301l7 5 7 28 -7-5zM623 304l7 5 6 27 -7-5zM643 306l7 5 5 28 -7-5zM663 308l7 6 5 27 -7-5zM683 311l7 5 4 28 -7-5zM703 313l8 6 3 28 -7-6zM724 316l8 5 2 28 -7-5zM745 319l8 5 2 28 -8-5zM766 321l8 5 1 29 -8-6zM787 324l9 5 0 28 -8-5zM809 326l9 6 -1 28 -8-5zM831 329l9 5 -1 29 -9-6zM853 332l9 5 -2 29 -9-6zM876 334l9 6 -3 29 -9-6zM898 337l10 6 -4 28 -9-5zM921 340l10 6 -5 28 -9-5zM945 343l10 6 -6 28 -10-5zM968 346l11 6 -7 28 -10-5zM992 349l11 6 -8 28 -10-5zM1016 352l11 6 -9 28 -10-5zM1040 355l12 6 -10 29 -11-6zM1065 358l12 6 -11 29 -11-6zM1090 361l12 6 -12 29 -11-6zM1116 364l12 6 -13 29 -12-6zM1141 367l13 6 -14 29 -12-6zM1167 370l13 6 -15 30 -12-7zM1194 373l13 7 -17 29 -12-6zM1220 377l14 6 -18 29 -13-6z"/><path class="gb" d="M575 299l-4 2 8 28 4-2zM595 301l-5 3 8 27 4-2zM614 304l-4 2 7 28 4-3zM634 306l-4 3 6 27 4-2zM654 309l-4 2 5 28 4-3zM674 311l-4 3 5 27 3-2zM694 314l-4 2 4 28 4-2zM715 316l-4 3 3 28 4-3zM736 319l-4 2 2 28 4-2zM757 321l-4 3 2 28 4-3zM778 324l-4 2 1 29 4-3zM800 327l-4 2 0 28 4-2zM822 329l-4 3 -1 28 4-2zM844 332l-4 2 -1 29 3-3zM866 335l-4 2 -2 29 4-3zM889 337l-4 3 -3 29 4-3zM912 340l-4 3 -4 28 4-2zM935 343l-4 3 -5 28 4-2zM958 346l-3 3 -6 28 3-2zM982 349l-3 3 -7 28 3-2zM1006 352l-3 3 -8 28 3-2zM1030 355l-3 3 -9 28 4-2zM1055 358l-3 3 -10 29 3-3zM1080 361l-3 3 -11 29 3-3zM1105 364l-3 3 -12 29 3-3zM1131 367l-3 3 -13 29 3-3zM1157 370l-3 3 -14 29 3-3zM1183 373l-3 3 -15 30 3-3zM1210 377l-3 3 -17 29 3-3zM1237 380l-3 3 -18 29 3-3z"/><path class="gt" d="M569 294l6 5 -4 2 -6-4zM588 297l7 4 -5 3 -6-5zM607 299l7 5 -4 2 -7-5zM627 301l7 5 -4 3 -7-5zM647 304l7 5 -4 2 -7-5zM667 306l7 5 -4 3 -7-6zM687 309l7 5 -4 2 -7-5zM707 311l8 5 -4 3 -8-6zM728 314l8 5 -4 2 -8-5zM749 316l8 5 -4 3 -8-5zM770 319l8 5 -4 2 -8-5zM791 321l9 6 -4 2 -9-5zM813 324l9 5 -4 3 -9-6zM835 327l9 5 -4 2 -9-5zM857 329l9 6 -4 2 -9-5zM879 332l10 5 -4 3 -9-6zM902 335l10 5 -4 3 -10-6zM925 337l10 6 -4 3 -10-6zM948 340l10 6 -3 3 -10-6zM972 343l10 6 -3 3 -11-6zM995 346l11 6 -3 3 -11-6zM1019 349l11 6 -3 3 -11-6zM1044 352l11 6 -3 3 -12-6zM1068 355l12 6 -3 3 -12-6zM1093 358l12 6 -3 3 -12-6zM1119 361l12 6 -3 3 -12-6zM1144 364l13 6 -3 3 -13-6zM1170 367l13 6 -3 3 -13-6zM1196 370l14 7 -3 3 -13-7zM1223 374l14 6 -3 3 -14-6z"/><path class="gm" d="M574 304l7 5 8 27 -7-4zM594 306l6 5 8 28 -7-5zM613 309l7 5 7 28 -7-6zM633 311l7 5 6 28 -7-5zM653 314l8 5 5 28 -7-5zM674 316l7 5 5 28 -8-5zM694 319l8 5 4 28 -8-5zM715 321l8 6 3 28 -8-6zM736 324l8 5 2 28 -7-5zM757 327l9 5 1 28 -8-5zM779 329l8 6 1 28 -8-5zM801 332l8 5 0 29 -8-6zM823 335l9 5 -1 29 -9-6zM845 337l9 6 -2 28 -9-5zM868 340l9 6 -3 28 -9-5zM890 343l10 6 -4 28 -9-5zM913 346l10 6 -4 28 -10-5zM937 349l10 6 -5 28 -10-5zM960 352l11 6 -7 28 -10-6zM984 355l11 6 -7 28 -11-5zM1009 358l11 6 -9 29 -10-6zM1033 361l12 6 -10 29 -11-6zM1058 364l12 6 -11 29 -11-6zM1083 367l12 6 -11 29 -12-6zM1109 370l12 6 -13 29 -11-6zM1135 373l12 7 -14 29 -12-7zM1161 377l13 6 -15 29 -13-6zM1187 380l14 6 -17 30 -12-7zM1214 383l14 7 -18 29 -13-7z"/><path class="gb" d="M585 307l-4 2 8 27 4-2zM605 309l-5 2 8 28 4-2zM624 311l-4 3 7 28 4-3zM645 314l-5 2 6 28 4-2zM665 316l-4 3 5 28 4-3zM685 319l-4 2 5 28 3-2zM706 322l-4 2 4 28 3-2zM727 324l-4 3 3 28 4-3zM748 327l-4 2 2 28 4-2zM770 329l-4 3 1 28 4-2zM791 332l-4 3 1 28 4-3zM813 335l-4 2 0 29 4-3zM835 338l-3 2 -1 29 3-3zM858 340l-4 3 -2 28 4-2zM881 343l-4 3 -3 28 4-2zM904 346l-4 3 -4 28 4-2zM927 349l-4 3 -4 28 3-2zM951 352l-4 3 -5 28 3-2zM975 355l-4 3 -7 28 4-2zM999 358l-4 3 -7 28 3-2zM1023 361l-3 3 -9 29 3-3zM1048 364l-3 3 -10 29 3-3zM1073 367l-3 3 -11 29 3-3zM1098 370l-3 3 -11 29 3-3zM1124 373l-3 3 -13 29 3-2zM1150 377l-3 3 -14 29 3-3zM1177 380l-3 3 -15 29 2-3zM1203 383l-2 3 -17 30 3-3zM1230 387l-2 3 -18 29 3-3z"/><path class="gt" d="M579 302l6 5 -4 2 -7-5zM598 304l7 5 -5 2 -6-5zM618 306l6 5 -4 3 -7-5zM638 309l7 5 -5 2 -7-5zM658 311l7 5 -4 3 -8-5zM678 314l7 5 -4 2 -7-5zM698 316l8 6 -4 2 -8-5zM719 319l8 5 -4 3 -8-6zM740 322l8 5 -4 2 -8-5zM761 324l9 5 -4 3 -9-5zM783 327l8 5 -4 3 -8-6zM804 329l9 6 -4 2 -8-5zM826 332l9 6 -3 2 -9-5zM849 335l9 5 -4 3 -9-6zM871 338l10 5 -4 3 -9-6zM894 340l10 6 -4 3 -10-6zM917 343l10 6 -4 3 -10-6zM940 346l11 6 -4 3 -10-6zM964 349l11 6 -4 3 -11-6zM988 352l11 6 -4 3 -11-6zM1012 355l11 6 -3 3 -11-6zM1037 358l11 6 -3 3 -12-6zM1061 361l12 6 -3 3 -12-6zM1086 364l12 6 -3 3 -12-6zM1112 367l12 6 -3 3 -12-6zM1138 370l12 7 -3 3 -12-7zM1164 374l13 6 -3 3 -13-6zM1190 377l13 6 -2 3 -14-6zM1217 380l13 7 -2 3 -14-7z"/><path class="gm" d="M584 312l7 5 7 27 -6-5zM604 314l7 5 7 28 -7-5zM624 316l7 6 6 27 -7-5zM644 319l7 5 6 28 -7-5zM665 322l7 5 5 28 -7-5zM685 324l8 5 4 28 -8-5zM706 327l8 5 3 28 -7-5zM727 329l8 6 3 28 -8-5zM749 332l8 6 2 28 -8-6zM770 335l9 5 1 29 -9-6zM792 338l9 5 0 28 -9-5zM814 340l9 6 -1 28 -8-5zM837 343l9 6 -2 28 -9-5zM859 346l10 6 -3 28 -9-5zM882 349l10 6 -3 28 -10-6zM905 352l10 6 -4 28 -10-6zM929 355l10 6 -5 28 -10-6zM953 358l10 6 -6 29 -10-6zM977 361l11 6 -8 29 -10-6zM1001 364l11 6 -8 29 -11-6zM1026 367l11 6 -9 29 -11-6zM1051 370l12 6 -11 29 -11-6zM1076 373l12 7 -11 29 -12-7zM1102 377l12 6 -12 29 -12-6zM1128 380l13 6 -14 29 -12-6zM1154 383l13 7 -15 29 -12-7zM1181 386l13 7 -16 29 -13-6zM1208 390l14 6 -18 30 -13-7z"/><path class="gb" d="M595 314l-4 3 7 27 5-2zM615 317l-4 2 7 28 4-3zM635 319l-4 3 6 27 4-2zM656 322l-5 2 6 28 4-2zM676 324l-4 3 5 28 4-3zM697 327l-4 2 4 28 4-2zM718 330l-4 2 3 28 4-2zM739 332l-4 3 3 28 4-3zM761 335l-4 3 2 28 3-3zM783 338l-4 2 1 29 3-3zM805 341l-4 2 0 28 4-2zM827 343l-4 3 -1 28 4-2zM850 346l-4 3 -2 28 4-2zM872 349l-3 3 -3 28 4-2zM896 352l-4 3 -3 28 3-2zM919 355l-4 3 -4 28 4-2zM943 358l-4 3 -5 28 3-2zM967 361l-4 3 -6 29 3-3zM991 364l-3 3 -8 29 4-3zM1016 367l-4 3 -8 29 3-3zM1041 370l-4 3 -9 29 3-3zM1066 373l-3 3 -11 29 3-3zM1091 377l-3 3 -11 29 3-3zM1117 380l-3 3 -12 29 3-3zM1144 383l-3 3 -14 29 3-3zM1170 387l-3 3 -15 29 3-3zM1197 390l-3 3 -16 29 3-3zM1224 393l-2 3 -18 30 3-3z"/><path class="gt" d="M589 309l6 5 -4 3 -7-5zM608 312l7 5 -4 2 -7-5zM628 314l7 5 -4 3 -7-6zM648 317l8 5 -5 2 -7-5zM669 319l7 5 -4 3 -7-5zM689 322l8 5 -4 2 -8-5zM710 324l8 6 -4 2 -8-5zM731 327l8 5 -4 3 -8-6zM753 330l8 5 -4 3 -8-6zM774 332l9 6 -4 2 -9-5zM796 335l9 6 -4 2 -9-5zM818 338l9 5 -4 3 -9-6zM840 341l10 5 -4 3 -9-6zM863 343l9 6 -3 3 -10-6zM886 346l10 6 -4 3 -10-6zM909 349l10 6 -4 3 -10-6zM932 352l11 6 -4 3 -10-6zM956 355l11 6 -4 3 -10-6zM980 358l11 6 -3 3 -11-6zM1005 361l11 6 -4 3 -11-6zM1029 364l12 6 -4 3 -11-6zM1054 367l12 6 -3 3 -12-6zM1079 370l12 7 -3 3 -12-7zM1105 374l12 6 -3 3 -12-6zM1131 377l13 6 -3 3 -13-6zM1157 380l13 7 -3 3 -13-7zM1184 383l13 7 -3 3 -13-7zM1211 387l13 6 -2 3 -14-6z"/><path class="gm" d="M594 319l7 5 7 28 -6-5zM614 322l7 5 7 28 -7-5zM635 324l7 6 6 28 -7-6zM655 327l8 5 5 28 -7-5zM676 330l8 5 4 28 -7-5zM697 332l8 6 3 28 -7-6zM718 335l8 6 3 28 -8-6zM740 338l8 5 2 29 -8-6zM761 341l9 5 1 28 -8-5zM783 343l9 6 0 28 -8-5zM806 346l9 6 -1 28 -9-5zM828 349l9 6 -1 28 -9-6zM851 352l9 6 -2 28 -9-6zM874 355l10 6 -3 28 -10-6zM897 358l10 6 -4 28 -9-6zM921 361l10 6 -5 29 -10-6zM945 364l10 6 -6 29 -10-6zM969 367l11 6 -7 29 -10-6zM994 370l11 6 -8 29 -11-6zM1018 373l12 7 -9 28 -11-6zM1044 377l11 6 -10 29 -11-7zM1069 380l12 6 -11 29 -12-6zM1095 383l12 7 -12 29 -12-7zM1121 386l13 7 -14 29 -12-7zM1147 390l14 6 -15 30 -13-7zM1174 393l14 7 -16 29 -13-7zM1202 397l13 6 -17 30 -13-7z"/><path class="gb" d="M606 322l-5 2 7 28 5-2zM626 325l-5 2 7 28 4-3zM646 327l-4 3 6 28 4-3zM667 330l-4 2 5 28 4-2zM688 333l-4 2 4 28 4-2zM709 335l-4 3 3 28 4-3zM730 338l-4 3 3 28 4-3zM752 341l-4 2 2 29 4-3zM774 344l-4 2 1 28 4-2zM796 346l-4 3 0 28 4-2zM818 349l-3 3 -1 28 4-2zM841 352l-4 3 -1 28 4-2zM864 355l-4 3 -2 28 4-2zM887 358l-3 3 -3 28 3-2zM911 361l-4 3 -4 28 4-2zM935 364l-4 3 -5 29 4-3zM959 367l-4 3 -6 29 4-3zM983 370l-3 3 -7 29 3-3zM1008 373l-3 3 -8 29 3-3zM1033 377l-3 3 -9 28 3-2zM1059 380l-4 3 -10 29 3-3zM1084 383l-3 3 -11 29 3-3zM1110 387l-3 3 -12 29 3-3zM1137 390l-3 3 -14 29 3-3zM1164 393l-3 3 -15 30 3-4zM1191 397l-3 3 -16 29 2-3zM1218 400l-3 3 -17 30 3-3z"/><path class="gt" d="M599 317l7 5 -5 2 -7-5zM619 319l7 6 -5 2 -7-5zM639 322l7 5 -4 3 -7-6zM659 325l8 5 -4 2 -8-5zM680 327l8 6 -4 2 -8-5zM701 330l8 5 -4 3 -8-6zM722 333l8 5 -4 3 -8-6zM744 335l8 6 -4 2 -8-5zM765 338l9 6 -4 2 -9-5zM787 341l9 5 -4 3 -9-6zM809 344l9 5 -3 3 -9-6zM832 346l9 6 -4 3 -9-6zM855 349l9 6 -4 3 -9-6zM878 352l9 6 -3 3 -10-6zM901 355l10 6 -4 3 -10-6zM925 358l10 6 -4 3 -10-6zM948 361l11 6 -4 3 -10-6zM973 364l10 6 -3 3 -11-6zM997 367l11 6 -3 3 -11-6zM1022 370l11 7 -3 3 -12-7zM1047 374l12 6 -4 3 -11-6zM1072 377l12 6 -3 3 -12-6zM1098 380l12 7 -3 3 -12-7zM1124 383l13 7 -3 3 -13-7zM1151 387l13 6 -3 3 -14-6zM1177 390l14 7 -3 3 -14-7zM1204 394l14 6 -3 3 -13-6z"/><path class="gm" d="M605 327l7 6 7 27 -7-5zM625 330l7 5 7 28 -7-5zM646 333l7 5 6 28 -7-6zM667 335l7 6 5 28 -7-6zM688 338l7 5 4 29 -7-6zM709 341l8 5 3 28 -8-5zM731 343l8 6 2 28 -8-5zM752 346l9 6 1 28 -8-5zM774 349l9 6 1 28 -8-6zM797 352l9 6 0 28 -9-6zM819 355l10 6 -1 28 -9-6zM842 358l10 6 -2 28 -9-6zM866 361l9 6 -3 28 -9-6zM889 364l10 6 -4 29 -9-6zM913 367l10 6 -5 29 -10-6zM937 370l10 6 -5 29 -10-6zM961 373l11 7 -7 28 -10-6zM986 377l11 6 -8 29 -10-7zM1011 380l11 6 -9 29 -11-6zM1036 383l12 6 -10 29 -11-6zM1062 386l12 7 -11 29 -12-7zM1088 390l12 6 -12 29 -12-6zM1114 393l13 7 -14 29 -12-7zM1141 397l13 6 -15 29 -12-6zM1168 400l13 7 -16 29 -13-7zM1195 404l14 6 -17 30 -13-7z"/><path class="gb" d="M616 330l-4 3 7 27 4-2zM637 333l-5 2 7 28 4-2zM657 335l-4 3 6 28 4-3zM678 338l-4 3 5 28 4-3zM700 341l-5 2 4 29 4-3zM721 344l-4 2 3 28 4-2zM743 346l-4 3 2 28 4-2zM765 349l-4 3 1 28 4-2zM787 352l-4 3 1 28 4-2zM810 355l-4 3 0 28 4-2zM833 358l-4 3 -1 28 3-2zM856 361l-4 3 -2 28 4-2zM879 364l-4 3 -3 28 4-2zM903 367l-4 3 -4 29 4-3zM927 370l-4 3 -5 29 4-3zM951 373l-4 3 -5 29 3-3zM976 377l-4 3 -7 28 4-3zM1001 380l-4 3 -8 29 4-3zM1026 383l-4 3 -9 29 4-3zM1051 386l-3 3 -10 29 3-3zM1077 390l-3 3 -11 29 3-3zM1103 393l-3 3 -12 29 3-3zM1130 397l-3 3 -14 29 3-3zM1157 400l-3 3 -15 29 3-3zM1184 404l-3 3 -16 29 3-3zM1212 407l-3 3 -17 30 2-4z"/><path class="gt" d="M609 325l7 5 -4 3 -7-6zM630 327l7 6 -5 2 -7-5zM650 330l7 5 -4 3 -7-5zM671 333l7 5 -4 3 -7-6zM692 335l8 6 -5 2 -7-5zM713 338l8 6 -4 2 -8-5zM735 341l8 5 -4 3 -8-6zM756 344l9 5 -4 3 -9-6zM778 347l9 5 -4 3 -9-6zM801 349l9 6 -4 3 -9-6zM823 352l10 6 -4 3 -10-6zM846 355l10 6 -4 3 -10-6zM869 358l10 6 -4 3 -9-6zM893 361l10 6 -4 3 -10-6zM916 364l11 6 -4 3 -10-6zM940 367l11 6 -4 3 -10-6zM965 370l11 7 -4 3 -11-7zM989 374l12 6 -4 3 -11-6zM1014 377l12 6 -4 3 -11-6zM1040 380l11 6 -3 3 -12-6zM1065 383l12 7 -3 3 -12-7zM1091 387l12 6 -3 3 -12-6zM1117 390l13 7 -3 3 -13-7zM1144 393l13 7 -3 3 -13-6zM1171 397l13 7 -3 3 -13-7zM1198 400l14 7 -3 3 -14-6z"/><path class="gm" d="M616 335l7 6 6 28 -7-6zM636 338l8 6 5 28 -7-6zM657 341l8 5 5 28 -7-5zM678 344l8 5 4 28 -7-5zM700 346l8 6 3 28 -7-5zM721 349l9 6 2 28 -8-6zM743 352l9 6 2 28 -8-6zM766 355l8 6 1 28 -8-6zM788 358l9 6 0 28 -8-6zM811 361l9 6 -1 28 -9-6zM834 364l9 6 -1 29 -9-7zM857 367l10 6 -3 29 -9-6zM881 370l10 6 -4 29 -9-6zM905 373l10 7 -5 28 -9-6zM929 376l10 7 -5 28 -10-6zM953 380l11 6 -6 29 -11-7zM978 383l11 6 -7 29 -11-6zM1003 386l12 7 -9 29 -11-7zM1029 390l11 6 -9 29 -12-7zM1054 393l13 7 -11 29 -12-7zM1081 396l12 7 -12 29 -12-7zM1107 400l13 7 -14 29 -12-7zM1134 403l13 7 -15 29 -12-7zM1161 407l13 7 -15 29 -13-7zM1189 411l13 7 -17 29 -13-7z"/><path class="gb" d="M627 338l-4 3 6 28 4-3zM648 341l-4 3 5 28 5-3zM669 344l-4 2 5 28 4-2zM690 347l-4 2 4 28 5-2zM712 349l-4 3 3 28 4-2zM734 352l-4 3 2 28 4-2zM756 355l-4 3 2 28 4-3zM778 358l-4 3 1 28 4-3zM801 361l-4 3 0 28 4-2zM824 364l-4 3 -1 28 4-2zM847 367l-4 3 -1 29 3-3zM871 370l-4 3 -3 29 4-3zM894 373l-3 3 -4 29 4-3zM919 377l-4 3 -5 28 4-3zM943 380l-4 3 -5 28 3-2zM968 383l-4 3 -6 29 3-3zM993 386l-4 3 -7 29 3-3zM1018 390l-3 3 -9 29 3-3zM1044 393l-4 3 -9 29 3-3zM1070 397l-3 3 -11 29 3-4zM1096 400l-3 3 -12 29 3-3zM1123 404l-3 3 -14 29 4-3zM1150 407l-3 3 -15 29 3-3zM1178 411l-4 3 -15 29 3-3zM1205 414l-3 4 -17 29 3-3z"/><path class="gt" d="M620 333l7 5 -4 3 -7-6zM641 336l7 5 -4 3 -8-6zM661 338l8 6 -4 2 -8-5zM683 341l7 6 -4 2 -8-5zM704 344l8 5 -4 3 -8-6zM726 347l8 5 -4 3 -9-6zM747 350l9 5 -4 3 -9-6zM770 352l8 6 -4 3 -8-6zM792 355l9 6 -4 3 -9-6zM815 358l9 6 -4 3 -9-6zM838 361l9 6 -4 3 -9-6zM861 364l10 6 -4 3 -10-6zM884 367l10 6 -3 3 -10-6zM908 370l11 7 -4 3 -10-7zM932 374l11 6 -4 3 -10-7zM957 377l11 6 -4 3 -11-6zM982 380l11 6 -4 3 -11-6zM1007 383l11 7 -3 3 -12-7zM1032 387l12 6 -4 3 -11-6zM1058 390l12 7 -3 3 -13-7zM1084 393l12 7 -3 3 -12-7zM1110 397l13 7 -3 3 -13-7zM1137 400l13 7 -3 3 -13-7zM1164 404l14 7 -4 3 -13-7zM1191 407l14 7 -3 4 -13-7z"/><path class="gm" d="M626 344l8 5 6 28 -7-5zM647 347l8 5 6 28 -8-5zM669 349l7 6 5 28 -7-6zM690 352l8 6 4 28 -7-6zM712 355l8 6 3 28 -8-6zM734 358l9 6 2 28 -8-6zM756 361l9 6 2 28 -9-6zM779 364l9 6 1 28 -9-6zM802 367l9 6 0 29 -9-7zM825 370l9 6 -1 29 -9-6zM848 373l10 7 -2 28 -9-6zM872 376l10 7 -3 28 -10-6zM896 380l10 6 -4 29 -10-7zM920 383l11 6 -5 29 -10-6zM945 386l11 7 -6 28 -11-6zM970 390l11 6 -7 29 -11-7zM995 393l12 7 -9 28 -11-6zM1021 396l12 7 -10 29 -11-7zM1047 400l12 7 -11 28 -11-6zM1073 403l13 7 -12 29 -12-7zM1100 407l13 7 -13 29 -13-7zM1127 410l13 7 -14 29 -13-7zM1154 414l14 7 -16 29 -13-7zM1182 418l14 7 -17 29 -13-7z"/><path class="gb" d="M638 347l-4 2 6 28 4-2zM659 350l-4 2 6 28 4-2zM681 352l-5 3 5 28 4-3zM703 355l-5 3 4 28 4-3zM724 358l-4 3 3 28 4-3zM747 361l-4 3 2 28 4-3zM769 364l-4 3 2 28 4-2zM792 367l-4 3 1 28 3-2zM815 370l-4 3 0 29 4-3zM838 373l-4 3 -1 29 4-3zM862 377l-4 3 -2 28 4-3zM886 380l-4 3 -3 28 4-3zM910 383l-4 3 -4 29 4-3zM935 386l-4 3 -5 29 3-3zM960 390l-4 3 -6 28 3-3zM985 393l-4 3 -7 29 3-3zM1010 396l-3 4 -9 28 4-3zM1036 400l-3 3 -10 29 4-3zM1062 403l-3 4 -11 28 4-3zM1089 407l-3 3 -12 29 3-3zM1116 411l-3 3 -13 29 3-3zM1143 414l-3 3 -14 29 3-3zM1171 418l-3 3 -16 29 3-3zM1199 422l-3 3 -17 29 3-3z"/><path class="gt" d="M631 341l7 6 -4 2 -8-5zM652 344l7 6 -4 2 -8-5zM673 347l8 5 -5 3 -7-6zM695 350l8 5 -5 3 -8-6zM716 353l8 5 -4 3 -8-6zM738 355l9 6 -4 3 -9-6zM761 358l8 6 -4 3 -9-6zM783 361l9 6 -4 3 -9-6zM806 364l9 6 -4 3 -9-6zM829 367l9 6 -4 3 -9-6zM852 371l10 6 -4 3 -10-7zM876 374l10 6 -4 3 -10-7zM900 377l10 6 -4 3 -10-6zM924 380l11 6 -4 3 -11-6zM949 383l11 7 -4 3 -11-7zM974 387l11 6 -4 3 -11-6zM999 390l11 6 -3 4 -12-7zM1024 393l12 7 -3 3 -12-7zM1050 397l12 6 -3 4 -12-7zM1076 400l13 7 -3 3 -13-7zM1103 404l13 7 -3 3 -13-7zM1130 407l13 7 -3 3 -13-7zM1157 411l14 7 -3 3 -14-7zM1185 415l14 7 -3 3 -14-7z"/><path class="gm" d="M638 352l7 6 6 28 -7-6zM659 355l8 6 5 28 -7-6zM681 358l8 6 4 28 -8-6zM703 361l8 6 3 28 -8-6zM725 364l8 6 3 28 -8-6zM747 367l9 6 2 28 -9-6zM770 370l9 6 1 29 -9-6zM793 373l9 6 0 29 -9-6zM816 376l10 7 -1 28 -9-6zM840 380l9 6 -1 28 -10-6zM863 383l10 6 -2 29 -10-7zM888 386l10 7 -4 28 -10-6zM912 389l11 7 -5 29 -10-7zM937 393l11 6 -6 29 -11-7zM962 396l11 7 -7 29 -11-7zM987 400l12 6 -8 29 -11-7zM1013 403l12 7 -9 29 -12-7zM1039 407l12 7 -10 28 -12-7zM1066 410l12 7 -11 29 -12-7zM1092 414l13 7 -13 29 -12-7zM1120 418l13 7 -14 29 -13-8zM1147 421l14 7 -16 29 -13-7zM1175 425l14 7 -17 29 -13-7z"/><path class="gb" d="M650 355l-5 3 6 28 4-3zM671 358l-4 3 5 28 4-3zM693 361l-4 3 4 28 4-3zM715 364l-4 3 3 28 4-3zM737 367l-4 3 3 28 4-2zM760 370l-4 3 2 28 4-2zM783 373l-4 3 1 29 4-3zM806 377l-4 2 0 29 4-3zM830 380l-4 3 -1 28 4-3zM853 383l-4 3 -1 28 3-3zM877 386l-4 3 -2 29 3-3zM902 390l-4 3 -4 28 4-3zM926 393l-3 3 -5 29 3-3zM951 396l-3 3 -6 29 3-3zM977 400l-4 3 -7 29 4-4zM1003 403l-4 3 -8 29 3-3zM1029 407l-4 3 -9 29 3-3zM1055 410l-4 4 -10 28 3-3zM1082 414l-4 3 -11 29 3-3zM1109 418l-4 3 -13 29 4-3zM1136 421l-3 4 -14 29 3-4zM1164 425l-3 3 -16 29 3-3zM1192 429l-3 3 -17 29 3-3z"/><path class="gt" d="M642 350l8 5 -5 3 -7-6zM663 353l8 5 -4 3 -8-6zM685 356l8 5 -4 3 -8-6zM707 358l8 6 -4 3 -8-6zM729 361l8 6 -4 3 -8-6zM751 364l9 6 -4 3 -9-6zM774 367l9 6 -4 3 -9-6zM797 371l9 6 -4 2 -9-6zM820 374l10 6 -4 3 -10-7zM844 377l9 6 -4 3 -9-6zM867 380l10 6 -4 3 -10-6zM891 383l11 7 -4 3 -10-7zM916 387l10 6 -3 3 -11-7zM941 390l10 6 -3 3 -11-6zM966 393l11 7 -4 3 -11-7zM991 397l12 6 -4 3 -12-6zM1017 400l12 7 -4 3 -12-7zM1043 404l12 6 -4 4 -12-7zM1069 407l13 7 -4 3 -12-7zM1096 411l13 7 -4 3 -13-7zM1123 414l13 7 -3 4 -13-7zM1150 418l14 7 -3 3 -14-7zM1178 422l14 7 -3 3 -14-7z"/><path class="gm" d="M649 361l8 6 6 28 -8-6zM671 364l8 6 5 28 -8-6zM693 367l8 6 4 28 -8-6zM715 370l9 6 3 28 -8-6zM738 373l8 6 3 29 -9-6zM761 376l8 7 2 28 -9-6zM784 380l9 6 0 28 -9-6zM807 383l9 6 0 29 -9-7zM831 386l9 6 -1 29 -9-7zM855 389l10 7 -3 28 -9-6zM879 393l10 6 -3 29 -10-7zM904 396l10 7 -4 28 -11-6zM928 400l11 6 -5 29 -11-7zM954 403l11 7 -7 28 -10-6zM979 406l12 7 -8 29 -11-7zM1005 410l12 7 -9 29 -11-7zM1031 414l13 7 -11 28 -11-7zM1058 417l13 7 -12 29 -12-7zM1085 421l13 7 -13 29 -12-7zM1112 425l14 7 -14 29 -13-7zM1140 429l14 7 -16 29 -12-8zM1168 432l14 8 -16 29 -14-8z"/><path class="gb" d="M661 364l-4 3 6 28 4-3zM683 367l-4 3 5 28 4-3zM705 370l-4 3 4 28 4-2zM728 373l-4 3 3 28 4-2zM751 377l-5 2 3 29 4-3zM774 380l-5 3 2 28 4-3zM797 383l-4 3 0 28 4-3zM821 386l-5 3 0 29 4-3zM844 390l-4 2 -1 29 4-3zM869 393l-4 3 -3 28 4-3zM893 396l-4 3 -3 29 4-3zM918 400l-4 3 -4 28 3-3zM943 403l-4 3 -5 29 3-3zM969 407l-4 3 -7 28 4-3zM995 410l-4 3 -8 29 3-3zM1021 414l-4 3 -9 29 4-3zM1047 417l-3 4 -11 28 4-3zM1074 421l-3 3 -12 29 4-3zM1101 425l-3 3 -13 29 4-3zM1129 429l-3 3 -14 29 3-3zM1157 433l-3 3 -16 29 4-4zM1185 436l-3 4 -16 29 3-4z"/><path class="gt" d="M654 359l7 5 -4 3 -8-6zM675 361l8 6 -4 3 -8-6zM697 364l8 6 -4 3 -8-6zM720 367l8 6 -4 3 -9-6zM742 371l9 6 -5 2 -8-6zM765 374l9 6 -5 3 -8-7zM788 377l9 6 -4 3 -9-6zM811 380l10 6 -5 3 -9-6zM835 383l9 7 -4 2 -9-6zM859 386l10 7 -4 3 -10-7zM883 390l10 6 -4 3 -10-6zM907 393l11 7 -4 3 -10-7zM932 396l11 7 -4 3 -11-6zM957 400l12 7 -4 3 -11-7zM983 403l12 7 -4 3 -12-7zM1009 407l12 7 -4 3 -12-7zM1035 410l12 7 -3 4 -13-7zM1062 414l12 7 -3 3 -13-7zM1088 418l13 7 -3 3 -13-7zM1116 421l13 8 -3 3 -14-7zM1143 425l14 8 -3 3 -14-7zM1171 429l14 7 -3 4 -14-8z"/><path class="gm" d="M661 370l8 6 5 28 -7-6zM683 373l8 6 5 29 -8-7zM706 376l8 7 3 28 -8-6zM728 380l9 6 2 28 -8-6zM751 383l9 6 2 28 -9-6zM774 386l10 6 0 29 -9-7zM798 389l9 7 0 28 -9-6zM822 393l9 6 -1 28 -9-6zM846 396l10 7 -2 28 -10-7zM870 399l10 7 -3 28 -10-6zM895 403l11 7 -5 28 -10-7zM920 406l11 7 -5 29 -11-7zM945 410l12 7 -7 28 -11-7zM971 413l12 7 -8 29 -11-7zM997 417l12 7 -9 29 -11-7zM1024 421l12 7 -10 29 -12-8zM1050 424l13 8 -11 28 -12-7zM1078 428l12 8 -12 28 -12-7zM1105 432l13 7 -13 29 -13-7zM1133 436l14 7 -16 29 -12-7zM1161 440l14 7 -16 29 -14-7z"/><path class="gb" d="M673 374l-4 2 5 28 5-2zM696 377l-5 2 5 29 4-3zM718 380l-4 3 3 28 5-3zM741 383l-4 3 2 28 5-3zM764 386l-4 3 2 28 4-3zM788 389l-4 3 0 29 4-3zM811 393l-4 3 0 28 4-3zM835 396l-4 3 -1 28 4-2zM860 400l-4 3 -2 28 3-3zM884 403l-4 3 -3 28 4-3zM909 406l-3 4 -5 28 4-3zM935 410l-4 3 -5 29 3-3zM960 414l-3 3 -7 28 4-3zM986 417l-3 3 -8 29 4-3zM1013 421l-4 3 -9 29 4-3zM1039 425l-3 3 -10 29 3-4zM1066 428l-3 4 -11 28 3-3zM1094 432l-4 4 -12 28 3-3zM1122 436l-4 3 -13 29 3-3zM1150 440l-3 3 -16 29 4-3zM1178 444l-3 3 -16 29 3-3z"/><path class="gt" d="M666 368l7 6 -4 2 -8-6zM688 371l8 6 -5 2 -8-6zM710 374l8 6 -4 3 -8-7zM733 377l8 6 -4 3 -9-6zM755 380l9 6 -4 3 -9-6zM779 383l9 6 -4 3 -10-6zM802 386l9 7 -4 3 -9-7zM826 390l9 6 -4 3 -9-6zM850 393l10 7 -4 3 -10-7zM874 396l10 7 -4 3 -10-7zM899 400l10 6 -3 4 -11-7zM924 403l11 7 -4 3 -11-7zM949 407l11 7 -3 3 -12-7zM975 410l11 7 -3 3 -12-7zM1001 414l12 7 -4 3 -12-7zM1027 418l12 7 -3 3 -12-7zM1054 421l12 7 -3 4 -13-8zM1081 425l13 7 -4 4 -12-8zM1108 429l14 7 -4 3 -13-7zM1136 433l14 7 -3 3 -14-7zM1164 437l14 7 -3 3 -14-7z"/><path class="gm" d="M673 380l8 6 5 28 -8-6zM696 383l8 6 4 28 -8-6zM719 386l8 6 3 28 -8-6zM742 389l8 7 3 28 -9-7zM765 393l9 6 1 28 -9-6zM789 396l9 6 0 29 -9-7zM812 399l10 7 -1 28 -9-6zM837 403l10 6 -2 29 -10-7zM861 406l11 7 -3 28 -10-6zM886 410l11 7 -4 28 -10-7zM911 413l11 7 -5 29 -10-7zM937 417l11 7 -6 28 -11-7zM963 421l11 7 -7 28 -11-7zM989 424l12 7 -9 29 -11-7zM1016 428l12 7 -10 29 -12-7zM1043 432l12 7 -11 29 -12-8zM1070 436l13 7 -12 29 -13-8zM1098 440l13 7 -14 29 -12-8zM1126 444l13 7 -15 29 -13-8zM1154 448l14 7 -16 29 -13-8z"/><path class="gb" d="M686 383l-5 3 5 28 5-3zM709 386l-5 3 4 28 4-3zM732 389l-5 3 3 28 4-2zM755 393l-5 3 3 28 4-3zM778 396l-4 3 1 28 4-3zM802 399l-4 3 0 29 4-3zM826 403l-4 3 -1 28 4-3zM851 406l-4 3 -2 29 4-3zM876 410l-4 3 -3 28 4-3zM901 413l-4 4 -4 28 4-3zM926 417l-4 3 -5 29 4-4zM952 421l-4 3 -6 28 4-3zM978 424l-4 4 -7 28 4-3zM1005 428l-4 3 -9 29 4-3zM1031 432l-3 3 -10 29 4-3zM1059 436l-4 3 -11 29 4-4zM1086 440l-3 3 -12 29 3-4zM1114 444l-3 3 -14 29 4-4zM1143 448l-4 3 -15 29 4-4zM1171 452l-3 3 -16 29 3-4z"/><path class="gt" d="M678 377l8 6 -5 3 -8-6zM700 380l9 6 -5 3 -8-6zM723 383l9 6 -5 3 -8-6zM746 386l9 7 -5 3 -8-7zM769 390l9 6 -4 3 -9-6zM793 393l9 6 -4 3 -9-6zM817 396l9 7 -4 3 -10-7zM841 400l10 6 -4 3 -10-6zM865 403l11 7 -4 3 -11-7zM890 407l11 6 -4 4 -11-7zM915 410l11 7 -4 3 -11-7zM941 414l11 7 -4 3 -11-7zM967 417l11 7 -4 4 -11-7zM993 421l12 7 -4 3 -12-7zM1019 425l12 7 -3 3 -12-7zM1046 428l13 8 -4 3 -12-7zM1073 432l13 8 -3 3 -13-7zM1101 436l13 8 -3 3 -13-7zM1129 440l14 8 -4 3 -13-7zM1157 444l14 8 -3 3 -14-7z"/><path class="gm" d="M686 389l8 7 5 28 -9-7zM709 392l8 7 4 28 -9-6zM732 396l9 6 2 28 -8-6zM755 399l9 7 2 28 -9-7zM779 403l9 6 1 28 -9-6zM803 406l10 7 -1 28 -9-7zM827 409l10 7 -1 29 -10-7zM852 413l10 7 -2 28 -10-7zM877 417l11 7 -4 28 -10-7zM903 420l10 7 -4 29 -11-7zM928 424l12 7 -6 29 -11-8zM954 428l12 7 -7 28 -11-7zM981 431l12 8 -9 28 -11-7zM1007 435l13 8 -10 28 -11-7zM1035 439l12 8 -11 28 -12-7zM1062 443l13 8 -12 28 -12-7zM1090 447l13 8 -13 28 -13-7zM1118 451l14 8 -15 29 -13-8zM1147 455l14 8 -16 29 -14-8z"/><path class="gb" d="M699 393l-5 3 5 28 4-3zM722 396l-5 3 4 28 4-3zM745 399l-4 3 2 28 4-3zM769 403l-5 3 2 28 4-3zM793 406l-5 3 1 28 4-3zM817 410l-4 3 -1 28 4-3zM842 413l-5 3 -1 29 4-4zM867 417l-5 3 -2 28 4-3zM892 420l-4 4 -4 28 4-3zM917 424l-4 3 -4 29 4-3zM943 428l-3 3 -6 29 3-4zM970 432l-4 3 -7 28 4-3zM996 435l-3 4 -9 28 4-3zM1023 439l-3 4 -10 28 4-3zM1051 443l-4 4 -11 28 4-3zM1079 447l-4 4 -12 28 3-3zM1107 451l-4 4 -13 28 3-3zM1135 455l-3 4 -15 29 3-4zM1164 460l-3 3 -16 29 3-4z"/><path class="gt" d="M690 386l9 7 -5 3 -8-7zM713 390l9 6 -5 3 -8-7zM736 393l9 6 -4 3 -9-6zM760 396l9 7 -5 3 -9-7zM783 400l10 6 -5 3 -9-6zM807 403l10 7 -4 3 -10-7zM832 406l10 7 -5 3 -10-7zM856 410l11 7 -5 3 -10-7zM881 413l11 7 -4 4 -11-7zM907 417l10 7 -4 3 -10-7zM932 421l11 7 -3 3 -12-7zM958 424l12 8 -4 3 -12-7zM984 428l12 7 -3 4 -12-8zM1011 432l12 7 -3 4 -13-8zM1038 436l13 7 -4 4 -12-8zM1066 440l13 7 -4 4 -13-8zM1093 444l14 7 -4 4 -13-8zM1122 448l13 7 -3 4 -14-8zM1150 452l14 8 -3 3 -14-8z"/><path class="gm" d="M699 399l8 7 4 28 -8-7zM722 402l9 7 3 28 -9-7zM746 406l9 7 2 28 -9-7zM769 409l10 7 1 28 -9-7zM794 413l9 7 0 28 -9-7zM818 416l10 7 -1 29 -9-7zM843 420l10 7 -2 28 -10-7zM868 424l11 7 -3 28 -11-7zM894 427l11 8 -5 28 -10-7zM919 431l12 7 -6 29 -11-7zM946 435l11 7 -6 29 -11-8zM972 439l12 7 -8 29 -11-8zM999 443l12 7 -9 29 -11-8zM1026 447l13 7 -10 29 -12-8zM1054 451l13 8 -12 28 -12-8zM1082 455l14 8 -14 28 -12-8zM1111 459l13 8 -14 28 -13-7zM1139 463l15 8 -16 29 -14-8z"/><path class="gb" d="M712 403l-5 3 4 28 4-3zM735 406l-4 3 3 28 4-3zM759 409l-4 4 2 28 4-3zM783 413l-4 3 1 28 4-3zM808 417l-5 3 0 28 4-3zM832 420l-4 3 -1 29 4-4zM857 424l-4 3 -2 28 4-3zM883 428l-4 3 -3 28 3-3zM909 431l-4 4 -5 28 4-3zM935 435l-4 3 -6 29 4-3zM961 439l-4 3 -6 29 3-4zM988 443l-4 3 -8 29 4-4zM1015 447l-4 3 -9 29 4-4zM1043 451l-4 3 -10 29 3-4zM1071 455l-4 4 -12 28 4-4zM1099 459l-3 4 -14 28 4-3zM1128 463l-4 4 -14 28 3-3zM1157 468l-3 3 -16 29 3-4z"/><path class="gt" d="M703 396l9 7 -5 3 -8-7zM726 399l9 7 -4 3 -9-7zM750 403l9 6 -4 4 -9-7zM774 406l9 7 -4 3 -10-7zM798 410l10 7 -5 3 -9-7zM822 413l10 7 -4 3 -10-7zM847 417l10 7 -4 3 -10-7zM872 421l11 7 -4 3 -11-7zM898 424l11 7 -4 4 -11-8zM923 428l12 7 -4 3 -12-7zM950 432l11 7 -4 3 -11-7zM976 436l12 7 -4 3 -12-7zM1003 439l12 8 -4 3 -12-7zM1030 443l13 8 -4 3 -13-7zM1058 447l13 8 -4 4 -13-8zM1086 451l13 8 -3 4 -14-8zM1114 456l14 7 -4 4 -13-8zM1143 460l14 8 -3 3 -15-8z"/><path class="gm" d="M712 409l9 7 3 28 -8-7zM736 413l9 6 2 29 -9-7zM760 416l9 7 1 28 -9-7zM784 420l10 7 0 28 -9-7zM809 423l10 8 -1 28 -10-7zM834 427l10 7 -2 28 -10-7zM859 431l11 7 -3 28 -10-7zM885 435l10 7 -4 28 -10-7zM911 439l11 7 -5 28 -11-7zM937 442l12 8 -7 28 -11-7zM964 446l12 8 -8 28 -11-7zM991 450l12 8 -9 28 -12-7zM1018 454l13 8 -10 29 -12-8zM1046 459l13 7 -11 29 -13-8zM1074 463l14 8 -13 28 -13-8zM1103 467l14 8 -15 28 -13-8zM1132 471l14 8 -16 29 -13-8z"/><path class="gb" d="M725 413l-4 3 3 28 5-3zM749 416l-4 3 2 29 4-4zM773 420l-4 3 1 28 5-3zM798 424l-4 3 0 28 4-3zM823 427l-4 4 -1 28 4-4zM848 431l-4 3 -2 28 4-3zM874 435l-4 3 -3 28 4-3zM900 439l-5 3 -4 28 4-3zM926 443l-4 3 -5 28 4-3zM952 447l-3 3 -7 28 4-3zM979 451l-3 3 -8 28 4-3zM1007 455l-4 3 -9 28 4-3zM1035 459l-4 3 -10 29 3-4zM1063 463l-4 3 -11 29 3-4zM1091 467l-3 4 -13 28 3-3zM1120 471l-3 4 -15 28 4-3zM1150 476l-4 3 -16 29 4-4z"/><path class="gt" d="M716 406l9 7 -4 3 -9-7zM740 410l9 6 -4 3 -9-6zM764 413l9 7 -4 3 -9-7zM788 417l10 7 -4 3 -10-7zM813 420l10 7 -4 4 -10-8zM838 424l10 7 -4 3 -10-7zM863 428l11 7 -4 3 -11-7zM889 431l11 8 -5 3 -10-7zM915 435l11 8 -4 3 -11-7zM941 439l11 8 -3 3 -12-8zM968 443l11 8 -3 3 -12-8zM995 447l12 8 -4 3 -12-8zM1022 451l13 8 -4 3 -13-8zM1050 455l13 8 -4 3 -13-7zM1078 459l13 8 -3 4 -14-8zM1106 463l14 8 -3 4 -14-8zM1135 468l15 8 -4 3 -14-8z"/><path class="gm" d="M726 420l9 7 3 28 -9-7zM750 423l9 7 2 28 -9-7zM774 427l10 7 1 28 -10-7zM799 431l10 7 0 28 -10-7zM824 434l10 8 -1 28 -10-7zM850 438l10 8 -2 28 -10-8zM875 442l11 8 -3 28 -11-8zM901 446l12 8 -5 28 -11-8zM928 450l12 8 -6 28 -11-8zM955 454l12 8 -7 28 -12-8zM982 458l12 8 -8 28 -12-8zM1010 462l12 8 -9 28 -12-7zM1038 466l13 9 -11 28 -13-8zM1066 471l14 8 -13 28 -13-8zM1095 475l14 8 -14 29 -13-9zM1124 479l15 9 -16 28 -13-8z"/><path class="gb" d="M739 423l-4 4 3 28 4-4zM764 427l-5 3 2 28 4-3zM788 431l-4 3 1 28 4-3zM813 435l-4 3 0 28 4-3zM839 438l-5 4 -1 28 4-4zM864 442l-4 4 -2 28 4-4zM890 446l-4 4 -3 28 4-4zM917 450l-4 4 -5 28 4-4zM944 454l-4 4 -6 28 3-4zM971 458l-4 4 -7 28 3-4zM998 462l-4 4 -8 28 4-3zM1026 467l-4 3 -9 28 3-3zM1055 471l-4 4 -11 28 3-4zM1083 475l-3 4 -13 28 4-4zM1113 480l-4 3 -14 29 3-4zM1142 484l-3 4 -16 28 3-4z"/><path class="gt" d="M730 416l9 7 -4 4 -9-7zM754 420l10 7 -5 3 -9-7zM779 424l9 7 -4 3 -10-7zM803 427l10 8 -4 3 -10-7zM828 431l11 7 -5 4 -10-8zM854 435l10 7 -4 4 -10-8zM879 439l11 7 -4 4 -11-8zM906 443l11 7 -4 4 -12-8zM932 447l12 7 -4 4 -12-8zM959 451l12 7 -4 4 -12-8zM986 455l12 7 -4 4 -12-8zM1014 459l12 8 -4 3 -12-8zM1042 463l13 8 -4 4 -13-9zM1070 467l13 8 -3 4 -14-8zM1099 471l14 9 -4 3 -14-8zM1128 476l14 8 -3 4 -15-9z"/><path class="gm" d="M740 430l9 7 2 28 -9-7zM764 434l10 7 1 28 -9-7zM789 438l10 7 0 28 -9-7zM814 442l11 7 -1 28 -10-7zM840 446l11 7 -2 28 -11-7zM866 450l11 7 -3 28 -11-7zM892 454l12 7 -5 28 -11-7zM919 458l12 7 -6 29 -11-8zM946 462l12 8 -7 28 -11-8zM973 466l13 8 -8 28 -12-8zM1001 470l13 8 -10 28 -12-8zM1029 475l14 8 -11 28 -13-8zM1058 479l14 8 -13 28 -13-8zM1087 483l14 9 -14 28 -13-8zM1117 488l14 8 -15 28 -14-8z"/><path class="gb" d="M754 434l-5 3 2 28 5-3zM778 438l-4 3 1 28 4-3zM804 442l-5 3 0 28 5-3zM829 446l-4 3 -1 28 4-3zM855 450l-4 3 -2 28 4-3zM881 454l-4 3 -3 28 4-3zM908 458l-4 3 -5 28 4-3zM935 462l-4 3 -6 29 4-4zM962 466l-4 4 -7 28 4-4zM990 470l-4 4 -8 28 3-4zM1018 475l-4 3 -10 28 4-3zM1046 479l-3 4 -11 28 3-4zM1075 483l-3 4 -13 28 4-3zM1105 488l-4 4 -14 28 4-4zM1134 492l-3 4 -15 28 3-3z"/><path class="gt" d="M744 427l10 7 -5 3 -9-7zM769 431l9 7 -4 3 -10-7zM794 435l10 7 -5 3 -10-7zM819 438l10 8 -4 3 -11-7zM844 442l11 8 -4 3 -11-7zM870 446l11 8 -4 3 -11-7zM896 450l12 8 -4 3 -12-7zM923 454l12 8 -4 3 -12-7zM950 458l12 8 -4 4 -12-8zM977 462l13 8 -4 4 -13-8zM1005 467l13 8 -4 3 -13-8zM1033 471l13 8 -3 4 -14-8zM1062 475l13 8 -3 4 -14-8zM1091 480l14 8 -4 4 -14-9zM1120 484l14 8 -3 4 -14-8z"/><path class="gm" d="M754 441l10 8 1 28 -9-8zM779 445l10 8 1 28 -10-8zM805 449l10 8 -1 28 -10-8zM830 453l11 8 -2 28 -10-8zM856 457l11 8 -3 28 -10-8zM883 461l11 8 -4 28 -11-8zM910 465l11 8 -5 28 -11-7zM937 470l12 8 -7 28 -11-8zM965 474l12 8 -8 28 -12-8zM993 478l12 9 -9 28 -12-9zM1021 483l13 8 -11 28 -12-8zM1050 487l13 9 -12 28 -13-9zM1079 492l14 8 -14 28 -13-8zM1109 496l14 9 -15 28 -14-9z"/><path class="gb" d="M768 445l-4 4 1 28 5-4zM794 449l-5 4 1 28 4-4zM819 453l-4 4 -1 28 5-4zM845 457l-4 4 -2 28 4-4zM872 461l-5 4 -3 28 5-4zM898 466l-4 3 -4 28 4-3zM926 470l-5 3 -5 28 4-3zM953 474l-4 4 -7 28 4-4zM981 478l-4 4 -8 28 4-4zM1009 483l-4 4 -9 28 4-4zM1038 487l-4 4 -11 28 4-4zM1067 492l-4 4 -12 28 4-4zM1097 496l-4 4 -14 28 4-4zM1127 501l-4 4 -15 28 3-4z"/><path class="gt" d="M759 438l9 7 -4 4 -10-8zM784 442l10 7 -5 4 -10-8zM809 446l10 7 -4 4 -10-8zM835 450l10 7 -4 4 -11-8zM861 454l11 7 -5 4 -11-8zM887 458l11 8 -4 3 -11-8zM914 462l12 8 -5 3 -11-8zM941 466l12 8 -4 4 -12-8zM969 470l12 8 -4 4 -12-8zM996 475l13 8 -4 4 -12-9zM1025 479l13 8 -4 4 -13-8zM1054 483l13 9 -4 4 -13-9zM1083 488l14 8 -4 4 -14-8zM1112 492l15 9 -4 4 -14-9z"/><path class="gm" d="M769 453l10 7 1 28 -10-7zM795 457l10 7 0 28 -10-7zM820 461l11 8 -1 27 -10-7zM847 465l11 8 -3 28 -10-8zM873 469l12 8 -4 28 -11-8zM900 473l12 9 -5 27 -11-8zM928 478l12 8 -7 28 -11-8zM955 482l13 8 -8 28 -11-8zM984 487l12 8 -8 28 -13-9zM1012 491l13 9 -10 27 -12-8zM1041 496l14 8 -12 28 -13-8zM1071 500l14 9 -14 28 -13-9zM1101 505l14 9 -15 28 -13-9z"/><path class="gb" d="M784 457l-5 3 1 28 4-3zM809 461l-4 3 0 28 4-3zM835 465l-4 4 -1 27 4-3zM862 469l-4 4 -3 28 4-4zM889 474l-4 3 -4 28 4-4zM916 478l-4 4 -5 27 4-3zM944 482l-4 4 -7 28 4-4zM972 487l-4 3 -8 28 4-3zM1000 491l-4 4 -8 28 3-4zM1029 496l-4 4 -10 27 4-3zM1059 500l-4 4 -12 28 4-4zM1088 505l-3 4 -14 28 4-4zM1119 510l-4 4 -15 28 4-4z"/><path class="gt" d="M774 449l10 8 -5 3 -10-7zM799 453l10 8 -4 3 -10-7zM825 457l10 8 -4 4 -11-8zM851 461l11 8 -4 4 -11-8zM878 466l11 8 -4 3 -12-8zM905 470l11 8 -4 4 -12-9zM932 474l12 8 -4 4 -12-8zM960 478l12 9 -4 3 -13-8zM988 483l12 8 -4 4 -12-8zM1016 487l13 9 -4 4 -13-9zM1045 492l14 8 -4 4 -14-8zM1074 496l14 9 -3 4 -14-9zM1104 501l15 9 -4 4 -14-9z"/><path class="gm" d="M784 465l11 7 0 28 -10-8zM810 469l11 8 -1 27 -10-8zM837 473l11 8 -2 28 -11-8zM864 477l11 8 -3 28 -11-8zM891 482l11 8 -4 27 -11-8zM918 486l12 8 -6 28 -11-8zM946 490l13 9 -8 28 -11-9zM975 495l12 9 -8 27 -12-8zM1003 500l14 8 -10 28 -13-9zM1033 504l13 9 -11 28 -13-9zM1062 509l14 9 -13 27 -13-8zM1092 514l15 9 -15 27 -13-8z"/><path class="gb" d="M799 469l-4 3 0 28 4-3zM826 473l-5 4 -1 27 5-3zM852 477l-4 4 -2 28 4-4zM879 482l-4 3 -3 28 4-4zM907 486l-5 4 -4 27 4-3zM935 491l-5 3 -6 28 5-4zM963 495l-4 4 -8 28 4-4zM992 500l-5 4 -8 27 4-4zM1021 504l-4 4 -10 28 3-4zM1050 509l-4 4 -11 28 4-4zM1080 514l-4 4 -13 27 4-3zM1111 519l-4 4 -15 27 4-4z"/><path class="gt" d="M789 461l10 8 -4 3 -11-7zM815 465l11 8 -5 4 -11-8zM841 469l11 8 -4 4 -11-8zM868 474l11 8 -4 3 -11-8zM895 478l12 8 -5 4 -11-8zM923 482l12 9 -5 3 -12-8zM950 487l13 8 -4 4 -13-9zM979 491l13 9 -5 4 -12-9zM1007 496l14 8 -4 4 -14-8zM1037 500l13 9 -4 4 -13-9zM1066 505l14 9 -4 4 -14-9zM1096 510l15 9 -4 4 -15-9z"/><path class="gm" d="M800 477l11 8 -1 27 -10-8zM827 481l11 8 -2 28 -10-8zM854 485l11 9 -3 27 -11-8zM881 490l12 8 -4 28 -12-9zM909 494l12 9 -6 27 -11-8zM937 499l12 8 -6 28 -12-9zM965 503l13 9 -8 28 -12-9zM994 508l14 9 -10 28 -13-9zM1024 513l14 9 -12 27 -13-8zM1054 518l14 9 -13 27 -13-9zM1084 523l15 9 -15 27 -13-9z"/><path class="gb" d="M815 481l-4 4 -1 27 5-3zM842 485l-4 4 -2 28 4-4zM869 490l-4 4 -3 27 4-4zM897 494l-4 4 -4 28 4-4zM925 499l-4 4 -6 27 4-3zM954 504l-5 3 -6 28 4-4zM982 508l-4 4 -8 28 4-4zM1012 513l-4 4 -10 28 4-4zM1042 518l-4 4 -12 27 4-4zM1072 523l-4 4 -13 27 4-4zM1102 528l-3 4 -15 27 4-4z"/><path class="gt" d="M805 473l10 8 -4 4 -11-8zM831 477l11 8 -4 4 -11-8zM858 482l11 8 -4 4 -11-9zM885 486l12 8 -4 4 -12-8zM913 491l12 8 -4 4 -12-9zM941 495l13 9 -5 3 -12-8zM970 500l12 8 -4 4 -13-9zM999 504l13 9 -4 4 -14-9zM1028 509l14 9 -4 4 -14-9zM1058 514l14 9 -4 4 -14-9zM1088 519l14 9 -3 4 -15-9z"/><path class="gm" d="M817 489l10 8 -1 28 -10-8zM844 494l11 8 -2 27 -11-8zM871 498l12 9 -4 27 -11-8zM899 503l12 8 -5 28 -11-9zM927 507l13 9 -7 28 -11-9zM956 512l13 9 -8 27 -12-8zM985 517l14 9 -10 27 -12-9zM1015 522l14 9 -11 27 -13-9zM1045 527l14 9 -12 27 -14-9zM1076 532l14 9 -14 28 -14-10z"/><path class="gb" d="M832 494l-5 3 -1 28 5-4zM859 498l-4 4 -2 27 4-3zM887 503l-4 4 -4 27 4-4zM916 508l-5 3 -5 28 4-4zM944 512l-4 4 -7 28 5-4zM973 517l-4 4 -8 27 4-3zM1003 522l-4 4 -10 27 4-4zM1033 527l-4 4 -11 27 4-4zM1063 532l-4 4 -12 27 3-4zM1094 537l-4 4 -14 28 4-5z"/><path class="gt" d="M821 485l11 9 -5 3 -10-8zM848 490l11 8 -4 4 -11-8zM876 494l11 9 -4 4 -12-9zM903 499l13 9 -5 3 -12-8zM932 504l12 8 -4 4 -13-9zM960 508l13 9 -4 4 -13-9zM989 513l14 9 -4 4 -14-9zM1019 518l14 9 -4 4 -14-9zM1049 523l14 9 -4 4 -14-9zM1079 528l15 9 -4 4 -14-9z"/><path class="gm" d="M833 502l12 9 -2 27 -11-9zM861 507l12 8 -4 28 -11-9zM889 511l12 9 -4 27 -12-8zM918 516l12 9 -6 27 -12-8zM947 521l13 9 -8 27 -12-9zM976 526l13 9 -9 27 -12-9zM1006 531l14 9 -11 27 -13-9zM1036 536l14 10 -12 27 -13-10zM1067 541l14 10 -13 27 -14-10z"/><path class="gb" d="M849 507l-4 4 -2 27 4-4zM877 511l-4 4 -4 28 5-4zM906 516l-5 4 -4 27 4-3zM935 521l-5 4 -6 27 4-4zM964 526l-4 4 -8 27 4-4zM994 531l-5 4 -9 27 4-4zM1024 536l-4 4 -11 27 4-4zM1054 541l-4 5 -12 27 4-5zM1085 547l-4 4 -13 27 3-4z"/><path class="gt" d="M838 498l11 9 -4 4 -12-9zM866 503l11 8 -4 4 -12-8zM894 507l12 9 -5 4 -12-9zM922 512l13 9 -5 4 -12-9zM951 517l13 9 -4 4 -13-9zM980 522l14 9 -5 4 -13-9zM1010 527l14 9 -4 4 -14-9zM1040 532l14 9 -4 5 -14-10zM1071 537l14 10 -4 4 -14-10z"/><path class="gm" d="M851 515l12 9 -3 27 -11-8zM879 520l12 9 -4 27 -11-9zM908 525l12 9 -5 27 -12-9zM937 530l13 9 -7 27 -12-9zM967 535l13 9 -9 27 -12-9zM997 540l13 10 -10 27 -13-10zM1027 545l14 10 -12 27 -13-10zM1058 551l15 10 -14 26 -14-9z"/><path class="gb" d="M867 520l-4 4 -3 27 4-4zM896 525l-5 4 -4 27 4-4zM925 530l-5 4 -5 27 4-4zM954 535l-4 4 -7 27 4-4zM984 540l-4 4 -9 27 4-4zM1014 545l-4 5 -10 27 4-5zM1045 551l-4 4 -12 27 4-4zM1077 556l-4 5 -14 26 4-4z"/><path class="gt" d="M855 511l12 9 -4 4 -12-9zM884 516l12 9 -5 4 -12-9zM912 521l13 9 -5 4 -12-9zM941 526l13 9 -4 4 -13-9zM971 531l13 9 -4 4 -13-9zM1001 536l13 9 -4 5 -13-10zM1031 541l14 10 -4 4 -14-10zM1062 546l15 10 -4 5 -15-10z"/><path class="gm" d="M869 529l12 9 -4 27 -11-9zM898 534l12 9 -5 27 -12-9zM927 539l13 10 -7 26 -12-9zM957 544l13 10 -8 27 -13-10zM987 550l14 9 -10 27 -13-10zM1018 555l14 10 -11 26 -14-9zM1049 560l15 10 -13 27 -14-10z"/><path class="gb" d="M886 534l-5 4 -4 27 5-4zM915 539l-5 4 -5 27 4-4zM944 544l-4 5 -7 26 5-4zM975 550l-5 4 -8 27 4-4zM1005 555l-4 4 -10 27 4-4zM1036 560l-4 5 -11 26 4-4zM1068 566l-4 4 -13 27 3-4z"/><path class="gt" d="M874 525l12 9 -5 4 -12-9zM902 530l13 9 -5 4 -12-9zM932 535l12 9 -4 5 -13-10zM961 540l14 10 -5 4 -13-10zM991 545l14 10 -4 4 -14-9zM1022 551l14 9 -4 5 -14-10zM1053 556l15 10 -4 4 -15-10z"/><path class="gm" d="M888 543l12 10 -5 27 -12-10zM917 549l13 9 -6 27 -13-10zM947 554l13 10 -7 26 -13-9zM977 559l14 10 -9 27 -13-10zM1008 565l15 10 -11 26 -14-10zM1040 570l15 10 -13 27 -14-10z"/><path class="gb" d="M905 549l-5 4 -5 27 5-5zM934 554l-4 4 -6 27 4-4zM965 559l-5 5 -7 26 4-4zM996 565l-5 4 -9 27 4-5zM1027 570l-4 5 -11 26 4-4zM1059 576l-4 4 -13 27 4-5z"/><path class="gt" d="M892 539l13 10 -5 4 -12-10zM922 544l12 10 -4 4 -13-9zM951 550l14 9 -5 5 -13-10zM982 555l14 10 -5 4 -14-10zM1013 560l14 10 -4 5 -15-10zM1044 566l15 10 -4 4 -15-10z"/><path class="gm" d="M907 558l13 10 -6 26 -12-9zM937 564l13 10 -7 26 -13-10zM968 569l13 10 -9 26 -13-10zM999 575l14 10 -11 26 -13-10zM1030 580l15 11 -12 26 -14-10z"/><path class="gb" d="M924 564l-4 4 -6 26 4-4zM955 569l-5 5 -7 26 4-5zM986 575l-5 4 -9 26 5-4zM1017 580l-4 5 -11 26 5-4zM1049 586l-4 5 -12 26 4-5z"/><path class="gt" d="M911 554l13 10 -4 4 -13-10zM942 559l13 10 -5 5 -13-10zM972 565l14 10 -5 4 -13-10zM1003 570l14 10 -4 5 -14-10zM1035 576l14 10 -4 5 -15-11z"/><path class="gm" d="M927 573l13 11 -7 26 -12-10zM958 579l13 10 -8 26 -13-10zM989 585l14 10 -10 26 -13-10zM1021 591l15 10 -12 26 -14-10z"/><path class="gb" d="M945 579l-5 5 -7 26 5-5zM976 585l-5 4 -8 26 4-4zM1008 591l-5 4 -10 26 4-4zM1040 596l-4 5 -12 26 4-5z"/><path class="gt" d="M931 569l14 10 -5 5 -13-11zM962 575l14 10 -5 4 -13-10zM993 580l15 11 -5 4 -14-10zM1025 586l15 10 -4 5 -15-10z"/><path class="gm" d="M947 589l14 11 -8 25 -13-10zM979 595l14 11 -10 25 -13-10zM1011 601l15 11 -12 25 -14-10z"/><path class="gb" d="M966 595l-5 5 -8 25 5-4zM998 601l-5 5 -10 25 5-4zM1030 607l-4 5 -12 25 5-4z"/><path class="gt" d="M952 585l14 10 -5 5 -14-11zM984 590l14 11 -5 5 -14-11zM1016 596l14 11 -4 5 -15-11z"/><path class="gm" d="M969 606l14 11 -9 25 -14-11zM1001 612l15 11 -11 25 -14-11z"/><path class="gb" d="M988 612l-5 5 -9 25 4-5zM1021 618l-5 5 -11 25 4-5z"/><path class="gt" d="M973 601l15 11 -5 5 -14-11zM1006 607l15 11 -5 5 -15-11z"/><path class="gm" d="M991 623l15 11 -11 25 -14-11z"/><path class="gb" d="M1011 629l-5 5 -11 25 4-5z"/><path class="gt" d="M996 618l15 11 -5 5 -15-11z"/></svg>
<div class="t" style="left:276px;top:61.43px;font-size:11.3px;color:#f0f0f0;">User Persp</div>
<div class="t" style="left:326px;top:898.43px;font-size:11.3px;color:#f0f0f0;">(1) VisNode.49-49</div>
<svg style="position:absolute;left:1058px;top:279px" width="32" height="32"><path d="M16 0 V11 M16 21 V32 M0 16 H11 M21 16 H32" stroke="#000" stroke-width="1"/><circle cx="16" cy="16" r="6.5" fill="none" stroke="#fff" stroke-width="1.2" stroke-dasharray="3 3"/><circle cx="16" cy="16" r="6.5" fill="none" stroke="#d00" stroke-width="1.2" stroke-dasharray="3 3" stroke-dashoffset="3"/></svg>
<svg style="position:absolute;left:0;top:0" width="1669" height="917"><path d="M1583.4 310.4 L1596.0 315.0 L1577.0 344.4 L1575.0 346.6 L1563.0 341.9 L1581.4 312.6Z" fill="none" stroke="#d87a28" stroke-width="1.2"/></svg>
<svg style="position:absolute;left:1540px;top:260px" width="140" height="140" overflow="visible"><line x1="38.5" y1="87.4" x2="77" y2="31" stroke="#0000f0" stroke-width="1.3"/><path d="M86.6 14 L69.7 29.7 Q75 35 82.6 33Z" fill="#0000f0"/><line x1="38.5" y1="87.4" x2="63.5" y2="62.5" stroke="#00e000" stroke-width="1.3"/><path d="M71.8 53.3 L59 60.7 Q62 65 67.7 63.4Z" fill="#00e000"/><line x1="38.5" y1="87.4" x2="113" y2="117" stroke="#f00000" stroke-width="1.3"/><path d="M128.4 124 L110 121 Q112 115 117.6 113Z" fill="#f00000"/><circle cx="38.5" cy="87.4" r="15.2" fill="none" stroke="#f4f4f4" stroke-width="1.2"/><circle cx="38.5" cy="87.4" r="2.8" fill="#e8a060" stroke="#1a1a1a" stroke-width="0.9"/></svg>
<svg style="position:absolute;left:270px;top:860px" width="50" height="50"><line x1="12" y1="31" x2="11.5" y2="14.5" stroke="#0000e0" stroke-width="2"/><line x1="12" y1="31" x2="30.5" y2="17.5" stroke="#00d000" stroke-width="1.8"/><line x1="12" y1="31" x2="28" y2="43" stroke="#d00000" stroke-width="1.8"/><text x="13" y="12" font-size="10" fill="#0000e8" font-family="Liberation Sans">z</text><text x="31" y="16" font-size="10" fill="#00c000" font-family="Liberation Sans">y</text><text x="31" y="40" font-size="10" fill="#c00000" font-family="Liberation Sans">x</text></svg>
<div style="left:1654px;top:71px;width:15px;height:14px;background:#2e2e2e;border-radius:5px 0 0 5px;"></div>
<svg style="position:absolute;left:1657px;top:73px" width="10" height="10"><path d="M4.5 1 V8 M1 4.5 H8" stroke="#6e6e6e" stroke-width="1.8"/></svg>
<svg style="position:absolute;left:1656px;top:49px" width="13" height="13"><path d="M0 0 L13 13 M4 0 L13 9 M8 0 L13 5" stroke="#8a8a8a" stroke-width="1"/></svg>
<div style="left:268px;top:490px;width:686px;height:350px;border-radius:8px;box-shadow:0 0 10px 4px rgba(0,0,0,0.35);"></div>
<div style="left:273px;top:493px;width:675px;height:341px;box-sizing:border-box;border:1px solid #c4c4c4;border-radius:7px 7px 5px 5px;background:linear-gradient(180deg,#5c5c5c 0px,#3e3e3e 18px,#444 30px,#3c3c3c 100%);"></div>
<div style="left:274px;top:494px;width:673px;height:28px;border-radius:6px 6px 0 0;background:linear-gradient(115deg,rgba(255,255,255,0) 0%,rgba(255,255,255,0.0) 22%,rgba(255,255,255,0.16) 30%,rgba(255,255,255,0) 38%,rgba(255,255,255,0) 47%,rgba(255,255,255,0.14) 55%,rgba(255,255,255,0) 62%,rgba(255,255,255,0.0) 70%,rgba(255,255,255,0.16) 76%,rgba(255,255,255,0) 84%);"></div>
<div style="left:280px;top:496px;width:130px;height:24px;background:radial-gradient(ellipse 60px 11px at 45px 12px,rgba(230,230,230,0.75),rgba(230,230,230,0) 100%);"></div>
<div style="left:274px;top:560px;width:6px;height:260px;background:linear-gradient(#6a6a6a,#8a8a8a 10%,#b8b8b8 20%,#555 30%,#3c3c3c 100%);"></div>
<div style="left:940px;top:530px;width:7px;height:290px;background:linear-gradient(#555,#444 40%,#3c3c3c);"></div>
<svg style="position:absolute;left:282px;top:500px" width="15" height="13" viewBox="0 0 16 14"><path d="M0.5 8.5 L6 5 L3 3 L8 3 C12 2.5 15.5 5 15.5 8 C15.5 11.5 12.5 13.5 9.5 13.5 C6.5 13.5 4.5 11.5 4.8 9.5 L1.5 11.5Z" fill="#f0841e"/><circle cx="9.7" cy="8.5" r="3.3" fill="#fff"/><circle cx="9.7" cy="8.5" r="1.8" fill="#2a5a9a"/></svg>
<div class="t" style="left:303px;top:502.27px;font-size:11.5px;color:#111;">Blender</div>
<div style="left:837px;top:493px;width:103px;height:20px;box-sizing:border-box;border:1px solid #9a9a9a;border-top:none;border-radius:0 0 5px 5px;background:linear-gradient(#7a7a7a,#5e5e5e 45%,#444 55%,#5a5a5a);"></div>
<div style="left:891px;top:493px;width:48px;height:19px;border-radius:0 0 4px 0;background:linear-gradient(#d89080,#c86050 45%,#b02818 55%,#c05038);"></div>
<div style="left:864px;top:493px;width:1px;height:19px;background:#9a9a9a;"></div>
<div style="left:891px;top:493px;width:1px;height:19px;background:#9a9a9a;"></div>
<div style="left:846px;top:502px;width:11px;height:4px;box-sizing:border-box;background:#f4f4f4;border:1px solid #3a4a6a;"></div>
<div style="left:873px;top:497px;width:10px;height:9px;box-sizing:border-box;border:2px solid #f4f4f4;outline:1px solid #3a4a6a;"></div>
<svg style="position:absolute;left:909px;top:496px" width="14" height="12"><path d="M2 1.5 L12 10.5 M12 1.5 L2 10.5" stroke="#3a4a6a" stroke-width="4"/><path d="M2 1.5 L12 10.5 M12 1.5 L2 10.5" stroke="#f4f4f4" stroke-width="2.4"/></svg>
<div style="left:280px;top:522px;width:660px;height:304px;box-sizing:border-box;border:1px solid #b0b0b0;background:#000;"></div>
<div style="left:281px;top:523px;width:641px;height:302px;background:#000;"></div>
<div style="left:922px;top:523px;width:17px;height:302px;background:#efefef;"></div>
<svg style="position:absolute;left:922px;top:523px" width="17" height="302"><path d="M5 12 L8.5 8 L12 12Z" fill="#404040"/><path d="M5 290 L8.5 294 L12 290Z" fill="#404040"/><rect x="1.5" y="254.5" width="13" height="18" rx="2" fill="#e6e6e6" stroke="#8a8a8a"/><path d="M5 260 H11 M5 263 H11 M5 266 H11" stroke="#333" stroke-width="1"/></svg>
<div style="left:281px;top:525px;font-family:'Liberation Mono',monospace;font-weight:bold;font-size:13.33px;line-height:12px;color:#c8c8c8;white-space:pre;">CURRENT Position: &lt;0.38,12.25&gt;<br>CURRENT Position: &lt;1.12,12.25&gt;<br>CURRENT Position: &lt;1.88,12.25&gt;<br>CURRENT Position: &lt;2.62,12.25&gt;<br>CURRENT Position: &lt;3.38,12.25&gt;<br>CURRENT Position: &lt;4.12,12.25&gt;<br>CURRENT Position: &lt;4.88,12.25&gt;<br>CURRENT Position: &lt;5.62,12.25&gt;<br>CURRENT Position: &lt;6.38,12.25&gt;<br>CURRENT Position: &lt;7.12,12.25&gt;<br>CURRENT Position: &lt;7.88,12.25&gt;<br>CURRENT Position: &lt;8.62,12.25&gt;<br>CURRENT Position: &lt;9.38,12.25&gt;<br>CURRENT Position: &lt;10.12,12.25&gt;<br>CURRENT Position: &lt;10.88,12.25&gt;<br>CURRENT Position: &lt;11.62,12.25&gt;<br>CURRENT Position: &lt;12.38,12.25&gt;<br>CURRENT Position: &lt;13.12,12.25&gt;<br>CURRENT Position: &lt;13.88,12.25&gt;<br>CURRENT Position: &lt;14.62,12.25&gt;<br>CURRENT Position: &lt;15.38,12.25&gt;<br>CURRENT Position: &lt;16.12,12.25&gt;<br>CURRENT Position: &lt;16.88,12.25&gt;<br>CURRENT Position: &lt;17.62,12.25&gt;<br>CURRENT Position: &lt;18.38,12.25&gt;</div>
<svg style="position:absolute;left:0px;top:929px" width="14" height="14"><path d="M0 2 L12 14 M0 6 L8 14 M0 10 L4 14" stroke="#c8c8c8" stroke-width="1" opacity="0.7"/></svg>
<div style="left:9px;top:920px;width:30px;height:20px;box-sizing:border-box;border:1px solid #151515;background:linear-gradient(#505050,#393939);border-radius:5px 5px 5px 5px;"></div>
<svg style="position:absolute;left:14px;top:923px" width="14" height="14"><path d="M1.5 3.5 L7 1 L12.5 3.5 L12.5 10.5 L7 13 L1.5 10.5Z" fill="#e8e8e8" stroke="#222" stroke-width="0.8"/><path d="M7 6 L12.5 3.5 L12.5 10.5 L7 13Z" fill="#8a8a8a"/><path d="M1.5 3.5 L7 6 L12.5 3.5 M7 6 V13" stroke="#222" stroke-width="0.6" fill="none"/></svg>
<svg style="position:absolute;left:30px;top:923px" width="8" height="14"><path d="M0.5 6 L4 0.5 L7.5 6Z M0.5 8 L4 13.5 L7.5 8Z" fill="#bdbdbd"/></svg>
<svg style="position:absolute;left:47px;top:925px" width="11" height="11"><circle cx="5.5" cy="5.5" r="4.3" fill="none" stroke="#5e5e5e" stroke-width="1.2"/><circle cx="5.5" cy="5.5" r="3.3" fill="#8a8a8a"/><path d="M3 5.5 H8" stroke="#3a3a3a" stroke-width="1.3"/></svg>
<div class="t" style="left:71px;top:926.43px;font-size:11.3px;color:#000;">View</div>
<div class="t" style="left:114.5px;top:926.43px;font-size:11.3px;color:#000;">Select</div>
<div class="t" style="left:160.5px;top:926.43px;font-size:11.3px;color:#000;">Object</div>
<div style="left:202px;top:920px;width:108px;height:20px;box-sizing:border-box;border:1px solid #151515;background:linear-gradient(#505050,#393939);border-radius:5px 5px 5px 5px;"></div>
<svg style="position:absolute;left:207px;top:923px" width="14" height="14"><path d="M1.5 3.5 L7 1 L12.5 3.5 L12.5 10.5 L7 13 L1.5 10.5Z" fill="#f0a040" stroke="#3a2a10" stroke-width="0.8"/><path d="M7 6 L12.5 3.5 L12.5 10.5 L7 13Z" fill="#c87820"/><path d="M1.5 3.5 L7 1 L12.5 3.5 L7 6Z" fill="#ffd890"/></svg>
<div class="t" style="left:226px;top:926.43px;font-size:11.3px;color:#fff;">Object Mode</div>
<svg style="position:absolute;left:300px;top:923px" width="8" height="14"><path d="M0.5 6 L4 0.5 L7.5 6Z M0.5 8 L4 13.5 L7.5 8Z" fill="#d0d0d0"/></svg>
<div style="left:315px;top:920px;width:35px;height:20px;box-sizing:border-box;border:1px solid #151515;background:linear-gradient(#505050,#393939);border-radius:5px 5px 5px 5px;"></div>
<svg style="position:absolute;left:319px;top:923px" width="14" height="14"><circle cx="7" cy="7" r="6" fill="#f0f0f0" stroke="#222" stroke-width="0.8"/></svg>
<svg style="position:absolute;left:340px;top:923px" width="8" height="14"><path d="M0.5 6 L4 0.5 L7.5 6Z M0.5 8 L4 13.5 L7.5 8Z" fill="#d0d0d0"/></svg>
<div style="left:355px;top:920px;width:36px;height:20px;box-sizing:border-box;border:1px solid #151515;background:linear-gradient(#505050,#393939);border-radius:5px 0px 0px 5px;"></div>
<svg style="position:absolute;left:359px;top:922px" width="16" height="16"><circle cx="6" cy="6" r="4" fill="#ddd" stroke="#222" stroke-width="0.7"/><circle cx="10" cy="10" r="4" fill="#eee" stroke="#222" stroke-width="0.7"/><circle cx="6.5" cy="7.5" r="1.5" fill="#3060d0"/></svg>
<svg style="position:absolute;left:381px;top:923px" width="8" height="14"><path d="M0.5 6 L4 0.5 L7.5 6Z M0.5 8 L4 13.5 L7.5 8Z" fill="#d0d0d0"/></svg>
<div style="left:390px;top:920px;width:20px;height:20px;box-sizing:border-box;border:1px solid #151515;background:linear-gradient(#a0a0a0,#8a8a8a);border-radius:0px 5px 5px 0px;"></div>
<svg style="position:absolute;left:392px;top:922px" width="16" height="16"><path d="M4 3 h2 M8 3 h2 M12 3 h2" stroke="#333" stroke-width="2"/><path d="M2 11 H14 M2 11 L5 8 M2 11 L5 14 M14 11 L11 8 M14 11 L11 14" stroke="#f8f8f8" stroke-width="1.3" fill="none"/></svg>
<div style="left:415px;top:920px;width:20px;height:20px;box-sizing:border-box;border:1px solid #151515;background:linear-gradient(#505050,#393939);border-radius:5px 0px 0px 5px;"></div>
<div style="left:434px;top:920px;width:21px;height:20px;box-sizing:border-box;border:1px solid #151515;background:linear-gradient(#6a93d4,#4b74b6);border-radius:0px 0px 0px 0px;"></div>
<div style="left:454px;top:920px;width:21px;height:20px;box-sizing:border-box;border:1px solid #151515;background:linear-gradient(#505050,#393939);border-radius:0px 0px 0px 0px;"></div>
<div style="left:474px;top:920px;width:21px;height:20px;box-sizing:border-box;border:1px solid #151515;background:linear-gradient(#505050,#393939);border-radius:0px 0px 0px 0px;"></div>
<div style="left:494px;top:920px;width:73px;height:20px;box-sizing:border-box;border:1px solid #151515;background:linear-gradient(#505050,#393939);border-radius:0px 5px 5px 0px;"></div>
<svg style="position:absolute;left:417px;top:922px" width="16" height="16"><path d="M8 9 V2" stroke="#3060ff" stroke-width="1.5"/><path d="M8 9 L14 13" stroke="#60d040" stroke-width="1.5"/><path d="M8 9 L2 13" stroke="#ff4020" stroke-width="1.5"/></svg>
<svg style="position:absolute;left:437px;top:922px" width="16" height="16"><path d="M3 13 L12 4 M7 3.5 H12.5 V9" stroke="#1a2a50" stroke-width="3" fill="none"/><path d="M3 13 L12 4 M7 3.5 H12.5 V9" stroke="#cfe0ff" stroke-width="1.3" fill="none"/></svg>
<svg style="position:absolute;left:457px;top:922px" width="16" height="16"><path d="M3 14 Q4 5 13 3" stroke="#4a7ac0" stroke-width="1.6" fill="none"/></svg>
<svg style="position:absolute;left:477px;top:922px" width="16" height="16"><path d="M3 14 L10 7" stroke="#4a7ac0" stroke-width="1.6"/><rect x="9" y="2" width="5" height="5" fill="#4a7ac0"/></svg>
<div class="t" style="left:502px;top:926.43px;font-size:11.3px;color:#fff;">Global</div>
<svg style="position:absolute;left:557px;top:923px" width="8" height="14"><path d="M0.5 6 L4 0.5 L7.5 6Z M0.5 8 L4 13.5 L7.5 8Z" fill="#d0d0d0"/></svg>
<div style="left:572px;top:920px;width:50px;height:20px;box-sizing:border-box;border:1px solid #2a2a2a;background:linear-gradient(#8e8e8e,#7e7e7e);border-radius:5px 5px 5px 5px;"></div>
<svg style="position:absolute;left:572px;top:920px" width="50" height="20"><path d="M10 1 V19 M20 1 V19 M30 1 V19 M40 1 V19 M1 10 H49" stroke="#5e5e5e" stroke-width="1"/></svg>
<div style="left:627px;top:920px;width:50px;height:20px;box-sizing:border-box;border:1px solid #2a2a2a;background:linear-gradient(#8e8e8e,#7e7e7e);border-radius:5px 5px 5px 5px;"></div>
<svg style="position:absolute;left:627px;top:920px" width="50" height="20"><path d="M10 1 V19 M20 1 V19 M30 1 V19 M40 1 V19 M1 10 H49" stroke="#5e5e5e" stroke-width="1"/></svg>
<svg style="position:absolute;left:573px;top:921px" width="8" height="8"><rect x="1.5" y="1.5" width="4" height="4" fill="#f0a030" stroke="#222" stroke-width="0.7"/></svg>
<div style="left:682px;top:920px;width:20px;height:20px;box-sizing:border-box;border:1px solid #2a2a2a;background:linear-gradient(#8e8e8e,#7e7e7e);border-radius:5px 5px 5px 5px;"></div>
<svg style="position:absolute;left:684px;top:922px" width="16" height="16"><rect x="2" y="3" width="9" height="9" fill="#ddd" stroke="#222" stroke-width="0.8"/><path d="M10 8 a2 2 0 1 1 4 0 v4 a2 2 0 1 1 -4 0" stroke="#222" stroke-width="1" fill="none"/></svg>
<div style="left:707px;top:920px;width:20px;height:20px;box-sizing:border-box;border:1px solid #2a2a2a;background:linear-gradient(#8e8e8e,#7e7e7e);border-radius:5px 5px 5px 5px;"></div>
<svg style="position:absolute;left:709px;top:922px" width="16" height="16"><circle cx="8" cy="8" r="5.5" fill="none" stroke="#5a5a5a" stroke-width="1.2"/><circle cx="8" cy="8" r="2.5" fill="none" stroke="#5a5a5a" stroke-width="1"/></svg>
<div style="left:732px;top:920px;width:20px;height:20px;box-sizing:border-box;border:1px solid #2a2a2a;background:linear-gradient(#8e8e8e,#7e7e7e);border-radius:5px 0px 0px 5px;"></div>
<svg style="position:absolute;left:734px;top:922px" width="16" height="16"><path d="M4 12 L10 4 a2.5 2.5 0 0 1 3.5 3.5 L7 13" stroke="#5a5a5a" stroke-width="1.5" fill="none"/></svg>
<div style="left:751px;top:920px;width:36px;height:20px;box-sizing:border-box;border:1px solid #151515;background:linear-gradient(#505050,#393939);border-radius:0px 5px 5px 0px;"></div>
<svg style="position:absolute;left:754px;top:922px" width="16" height="16"><path d="M2 8 H14 M2 12 H14 M6 4 V15 M10 4 V15" stroke="#ddd" stroke-width="1"/><circle cx="5" cy="5" r="3" fill="#fff" stroke="#2050d0" stroke-width="1.5"/></svg>
<svg style="position:absolute;left:776px;top:923px" width="8" height="14"><path d="M0.5 6 L4 0.5 L7.5 6Z M0.5 8 L4 13.5 L7.5 8Z" fill="#d0d0d0"/></svg>
<div style="left:792px;top:920px;width:20px;height:20px;box-sizing:border-box;border:1px solid #2a2a2a;background:linear-gradient(#8e8e8e,#7e7e7e);border-radius:5px 0px 0px 5px;"></div>
<div style="left:811px;top:920px;width:21px;height:20px;box-sizing:border-box;border:1px solid #2a2a2a;background:linear-gradient(#8e8e8e,#7e7e7e);border-radius:0px 5px 5px 0px;"></div>
<svg style="position:absolute;left:794px;top:922px" width="16" height="16"><rect x="1.5" y="4.5" width="12" height="9" rx="1" fill="#ddd" stroke="#222"/><circle cx="7.5" cy="9" r="2.6" fill="#444" stroke="#222"/><path d="M12 1 v4 M10 3 h4" stroke="#ffd040" stroke-width="1.2"/></svg>
<svg style="position:absolute;left:813px;top:922px" width="16" height="16"><rect x="1.5" y="6.5" width="13" height="8" fill="#ddd" stroke="#222"/><path d="M1.5 6 L13 2 L14 5 L2 9Z" fill="#ddd" stroke="#222" stroke-width="0.8"/><path d="M5 4.5 L6 7.5 M9 3.2 L10 6.2" stroke="#222"/></svg>
<svg style="position:absolute;left:0;top:0" width="1669" height="1000"><path d="M38.5 944 V997 M87.5 944 V997 M136.5 944 V997 M185.5 944 V997 M234.5 944 V997 M283.5 944 V997 M332.5 944 V997 M381.5 944 V997 M430.5 944 V997 M479.5 944 V997 M528.5 944 V997 M577.5 944 V997 M626.5 944 V997 M675.5 944 V997 M724.5 944 V997 M773.5 944 V997 M822.5 944 V997 M871.5 944 V997 M920.5 944 V997 M968.5 944 V997 M1017.5 944 V997 M1066.5 944 V997 M1115.5 944 V997 M1164.5 944 V997 M1213.5 944 V997 M1262.5 944 V997 M1311.5 944 V997 M1360.5 944 V997 M1409.5 944 V997 M1458.5 944 V997 M1507.5 944 V997 M1556.5 944 V997 M1605.5 944 V997 M1654.5 944 V997 " stroke="#000" stroke-width="1" opacity="0.18"/><path d="M14.5 944 V997 M63.5 944 V997 M112.5 944 V997 M161.5 944 V997 M210.5 944 V997 M259.5 944 V997 M308.5 944 V997 M357.5 944 V997 M406.5 944 V997 M455.5 944 V997 M503.5 944 V997 M552.5 944 V997 M601.5 944 V997 M650.5 944 V997 M699.5 944 V997 M748.5 944 V997 M797.5 944 V997 M846.5 944 V997 M895.5 944 V997 M944.5 944 V997 M993.5 944 V997 M1042.5 944 V997 M1091.5 944 V997 M1140.5 944 V997 M1189.5 944 V997 M1238.5 944 V997 M1287.5 944 V997 M1336.5 944 V997 M1385.5 944 V997 M1434.5 944 V997 M1482.5 944 V997 M1531.5 944 V997 M1580.5 944 V997 M1629.5 944 V997 " stroke="#000" stroke-width="1" opacity="0.07"/></svg>
<div style="left:283px;top:944px;width:1px;height:53px;background:#2e2e2e;"></div>
<svg style="position:absolute;left:1655px;top:944px" width="14" height="14"><path d="M2 0 L14 12 M6 0 L14 8 M10 0 L14 4" stroke="#c8c8c8" stroke-width="1" opacity="0.7"/></svg>
<div style="left:287px;top:944px;width:3px;height:53px;background:#5cc140;"></div>
<div style="left:0px;top:997px;width:1669px;height:18px;background:#737373;"></div>
<div style="left:4px;top:997px;width:1660px;height:13px;box-sizing:border-box;border:1px solid #3e3e3e;border-radius:7px;background:linear-gradient(#a6a6a6,#8c8c8c);"></div>
<svg style="position:absolute;left:6px;top:998px" width="12" height="12"><circle cx="6.5" cy="5.5" r="3.8" fill="#6e6e6e"/></svg>
<div class="t" style="left:19.19999999999999px;width:40px;text-align:center;top:998.86px;font-size:10.8px;color:#000;">-50</div>
<div class="t" style="left:67.94px;width:40px;text-align:center;top:998.86px;font-size:10.8px;color:#000;">-40</div>
<div class="t" style="left:116.67999999999998px;width:40px;text-align:center;top:998.86px;font-size:10.8px;color:#000;">-30</div>
<div class="t" style="left:165.42px;width:40px;text-align:center;top:998.86px;font-size:10.8px;color:#000;">-20</div>
<div class="t" style="left:214.15999999999997px;width:40px;text-align:center;top:998.86px;font-size:10.8px;color:#000;">-10</div>
<div class="t" style="left:262.9px;width:40px;text-align:center;top:998.86px;font-size:10.8px;color:#000;">0</div>
<div class="t" style="left:311.64px;width:40px;text-align:center;top:998.86px;font-size:10.8px;color:#000;">10</div>
<div class="t" style="left:360.38px;width:40px;text-align:center;top:998.86px;font-size:10.8px;color:#000;">20</div>
<div class="t" style="left:409.12px;width:40px;text-align:center;top:998.86px;font-size:10.8px;color:#000;">30</div>
<div class="t" style="left:457.85999999999996px;width:40px;text-align:center;top:998.86px;font-size:10.8px;color:#000;">40</div>
<div class="t" style="left:506.5999999999999px;width:40px;text-align:center;top:998.86px;font-size:10.8px;color:#000;">50</div>
<div class="t" style="left:555.3399999999999px;width:40px;text-align:center;top:998.86px;font-size:10.8px;color:#000;">60</div>
<div class="t" style="left:604.0799999999999px;width:40px;text-align:center;top:998.86px;font-size:10.8px;color:#000;">70</div>
<div class="t" style="left:652.8199999999999px;width:40px;text-align:center;top:998.86px;font-size:10.8px;color:#000;">80</div>
<div class="t" style="left:701.56px;width:40px;text-align:center;top:998.86px;font-size:10.8px;color:#000;">90</div>
<div class="t" style="left:750.3px;width:40px;text-align:center;top:998.86px;font-size:10.8px;color:#000;">100</div>
<div class="t" style="left:799.04px;width:40px;text-align:center;top:998.86px;font-size:10.8px;color:#000;">110</div>
<div class="t" style="left:847.78px;width:40px;text-align:center;top:998.86px;font-size:10.8px;color:#000;">120</div>
<div class="t" style="left:896.52px;width:40px;text-align:center;top:998.86px;font-size:10.8px;color:#000;">130</div>
<div class="t" style="left:945.2599999999999px;width:40px;text-align:center;top:998.86px;font-size:10.8px;color:#000;">140</div>
<div class="t" style="left:993.9999999999999px;width:40px;text-align:center;top:998.86px;font-size:10.8px;color:#000;">150</div>
<div class="t" style="left:1042.7399999999998px;width:40px;text-align:center;top:998.86px;font-size:10.8px;color:#000;">160</div>
<div class="t" style="left:1091.48px;width:40px;text-align:center;top:998.86px;font-size:10.8px;color:#000;">170</div>
<div class="t" style="left:1140.2199999999998px;width:40px;text-align:center;top:998.86px;font-size:10.8px;color:#000;">180</div>
<div class="t" style="left:1188.96px;width:40px;text-align:center;top:998.86px;font-size:10.8px;color:#000;">190</div>
<div class="t" style="left:1237.6999999999998px;width:40px;text-align:center;top:998.86px;font-size:10.8px;color:#000;">200</div>
<div class="t" style="left:1286.44px;width:40px;text-align:center;top:998.86px;font-size:10.8px;color:#000;">210</div>
<div class="t" style="left:1335.1799999999998px;width:40px;text-align:center;top:998.86px;font-size:10.8px;color:#000;">220</div>
<div class="t" style="left:1383.92px;width:40px;text-align:center;top:998.86px;font-size:10.8px;color:#000;">230</div>
<div class="t" style="left:1432.6599999999999px;width:40px;text-align:center;top:998.86px;font-size:10.8px;color:#000;">240</div>
<div class="t" style="left:1481.4px;width:40px;text-align:center;top:998.86px;font-size:10.8px;color:#000;">250</div>
<div class="t" style="left:1530.1399999999999px;width:40px;text-align:center;top:998.86px;font-size:10.8px;color:#000;">260</div>
<div class="t" style="left:1578.88px;width:40px;text-align:center;top:998.86px;font-size:10.8px;color:#000;">270</div>
<div class="t" style="left:1627.62px;width:40px;text-align:center;top:998.86px;font-size:10.8px;color:#000;">280</div>
<div style="left:0px;top:1010px;width:1669px;height:1px;background:#7e7e7e;"></div>
<div style="left:0px;top:1014px;width:1669px;height:1px;background:#808080;"></div>
<svg style="position:absolute;left:0px;top:1024px" width="14" height="14"><path d="M0 2 L12 14 M0 6 L8 14 M0 10 L4 14" stroke="#c8c8c8" stroke-width="1" opacity="0.7"/></svg>
<div style="left:9px;top:1017px;width:30px;height:21px;box-sizing:border-box;border:1px solid #151515;background:linear-gradient(#505050,#393939);border-radius:5px 5px 0px 0px;"></div>
<svg style="position:absolute;left:14px;top:1020px" width="14" height="14"><circle cx="7" cy="7" r="6" fill="#f4f4f4" stroke="#222" stroke-width="0.8"/><path d="M7 7 L4 4" stroke="#d02020" stroke-width="1.4"/></svg>
<svg style="position:absolute;left:30px;top:1020px" width="8" height="14"><path d="M0.5 6 L4 0.5 L7.5 6Z M0.5 8 L4 13.5 L7.5 8Z" fill="#bdbdbd"/></svg>
<svg style="position:absolute;left:47px;top:1022px" width="11" height="11"><circle cx="5.5" cy="5.5" r="4.3" fill="none" stroke="#5e5e5e" stroke-width="1.2"/><circle cx="5.5" cy="5.5" r="3.3" fill="#8a8a8a"/><path d="M3 5.5 H8" stroke="#3a3a3a" stroke-width="1.3"/></svg>
<div class="t" style="left:71px;top:1023.43px;font-size:11.3px;color:#000;">View</div>
<div class="t" style="left:110.5px;top:1023.43px;font-size:11.3px;color:#000;">Marker</div>
<div class="t" style="left:160px;top:1023.43px;font-size:11.3px;color:#000;">Frame</div>
<div class="t" style="left:207px;top:1023.43px;font-size:11.3px;color:#000;">Playback</div>
<div style="left:265px;top:1017px;width:20px;height:21px;box-sizing:border-box;border:1px solid #2a2a2a;background:linear-gradient(#a0a0a0,#8a8a8a);border-radius:5px 5px 0px 0px;"></div>
<svg style="position:absolute;left:267px;top:1019px" width="16" height="16"><circle cx="8" cy="8" r="6.5" fill="#f4f4f4" stroke="#222" stroke-width="0.8"/><path d="M8 8 V2 A6 6 0 0 1 14 8Z" fill="#f08020"/><path d="M8 8 L5 11" stroke="#d02020" stroke-width="1.3"/><path d="M8 8 H14" stroke="#222" stroke-width="1.2"/></svg>
<div style="left:290px;top:1017px;width:117px;height:21px;box-sizing:border-box;border:1px solid #1e1e1e;background:linear-gradient(#bdbdbd,#a5a5a5);border-radius:9px 0px 0px 0px;"></div>
<svg style="position:absolute;left:290px;top:1017px" width="117" height="21"><path d="M11 7.0 L7.5 10.5 L11 14.0Z M106 7.0 L109.5 10.5 L106 14.0Z" fill="#6e6e6e"/></svg>
<div class="t" style="left:290px;width:117px;text-align:center;top:1022.27px;font-size:11.5px;color:#000;">Start: 1</div>
<div style="left:406px;top:1017px;width:112px;height:21px;box-sizing:border-box;border:1px solid #1e1e1e;background:linear-gradient(#bdbdbd,#a5a5a5);border-radius:0px 9px 0px 0px;"></div>
<svg style="position:absolute;left:406px;top:1017px" width="112" height="21"><path d="M11 7.0 L7.5 10.5 L11 14.0Z M101 7.0 L104.5 10.5 L101 14.0Z" fill="#6e6e6e"/></svg>
<div class="t" style="left:406px;width:112px;text-align:center;top:1022.27px;font-size:11.5px;color:#000;">End: 250</div>
<div style="left:524px;top:1017px;width:89px;height:21px;box-sizing:border-box;border:1px solid #1e1e1e;background:linear-gradient(#bdbdbd,#a5a5a5);border-radius:9px 9px 0px 0px;"></div>
<svg style="position:absolute;left:524px;top:1017px" width="89" height="21"><path d="M11 7.0 L7.5 10.5 L11 14.0Z M78 7.0 L81.5 10.5 L78 14.0Z" fill="#6e6e6e"/></svg>
<div class="t" style="left:524px;width:89px;text-align:center;top:1022.27px;font-size:11.5px;color:#000;">1</div>
<div style="left:630px;top:1017px;width:21px;height:21px;box-sizing:border-box;border:1px solid #151515;background:linear-gradient(#a5a5a5,#8e8e8e);border-radius:5px 0px 0px 5px;"></div>
<div style="left:650px;top:1017px;width:21px;height:21px;box-sizing:border-box;border:1px solid #151515;background:linear-gradient(#a5a5a5,#8e8e8e);border-radius:0px 0px 0px 0px;"></div>
<div style="left:670px;top:1017px;width:21px;height:21px;box-sizing:border-box;border:1px solid #151515;background:linear-gradient(#a5a5a5,#8e8e8e);border-radius:0px 0px 0px 0px;"></div>
<div style="left:690px;top:1017px;width:21px;height:21px;box-sizing:border-box;border:1px solid #151515;background:linear-gradient(#a5a5a5,#8e8e8e);border-radius:0px 0px 0px 0px;"></div>
<div style="left:709px;top:1017px;width:21px;height:21px;box-sizing:border-box;border:1px solid #151515;background:linear-gradient(#a5a5a5,#8e8e8e);border-radius:0px 0px 0px 0px;"></div>
<div style="left:729px;top:1017px;width:21px;height:21px;box-sizing:border-box;border:1px solid #151515;background:linear-gradient(#a5a5a5,#8e8e8e);border-radius:0px 5px 5px 0px;"></div>
<svg style="position:absolute;left:632.0px;top:1019px" width="16" height="17"><path d="M2.5 3 V13 H4 V3Z M9 3 L4.5 8 L9 13Z M14 3 L9.5 8 L14 13Z" stroke="#1a1a1a" stroke-width="1" stroke-linejoin="round" fill="#f0f0f0"/></svg>
<svg style="position:absolute;left:651.8px;top:1019px" width="16" height="17"><path d="M8 3 L3 8 L8 13Z M13.5 3 L8.5 8 L13.5 13Z" stroke="#1a1a1a" stroke-width="1" stroke-linejoin="round" fill="#f0f0f0"/></svg>
<svg style="position:absolute;left:671.6px;top:1019px" width="16" height="17"><path d="M12.5 2 L3.5 8 L12.5 14Z" stroke="#1a1a1a" stroke-width="1" stroke-linejoin="round" fill="#f0f0f0"/></svg>
<svg style="position:absolute;left:691.4px;top:1019px" width="16" height="17"><path d="M3.5 2 L12.5 8 L3.5 14Z" stroke="#1a1a1a" stroke-width="1" stroke-linejoin="round" fill="#f0f0f0"/></svg>
<svg style="position:absolute;left:711.2px;top:1019px" width="16" height="17"><path d="M3 3 L8 8 L3 13Z M8.5 3 L13.5 8 L8.5 13Z" stroke="#1a1a1a" stroke-width="1" stroke-linejoin="round" fill="#f0f0f0"/></svg>
<svg style="position:absolute;left:731.0px;top:1019px" width="16" height="17"><path d="M2 3 L6.5 8 L2 13Z M7 3 L11.5 8 L7 13Z M12 3 V13 H13.5 V3Z" stroke="#1a1a1a" stroke-width="1" stroke-linejoin="round" fill="#f0f0f0"/></svg>
<div style="left:754px;top:1017px;width:115px;height:21px;box-sizing:border-box;border:1px solid #151515;background:linear-gradient(#505050,#393939);border-radius:4px 4px 4px 4px;"></div>
<div class="t" style="left:762px;top:1023.43px;font-size:11.3px;color:#fff;">No Sync</div>
<svg style="position:absolute;left:858px;top:1020.5px" width="8" height="14"><path d="M0.5 6 L4 0.5 L7.5 6Z M0.5 8 L4 13.5 L7.5 8Z" fill="#d0d0d0"/></svg>
<div style="left:885px;top:1017px;width:21px;height:21px;box-sizing:border-box;border:1px solid #2a2a2a;background:linear-gradient(#a0a0a0,#8a8a8a);border-radius:5px 5px 0px 0px;"></div>
<svg style="position:absolute;left:888px;top:1020px" width="14" height="14"><circle cx="7" cy="7" r="4.5" fill="#e02020" stroke="#601010"/><circle cx="6" cy="6" r="1.5" fill="#ff8060"/></svg>
<div style="left:910px;top:1017px;width:126px;height:21px;box-sizing:border-box;border:1px solid #2a2a2a;background:linear-gradient(#9c9c9c,#b0b0b0);border-radius:5px 0px 0px 0px;"></div>
<svg style="position:absolute;left:913px;top:1019px" width="16" height="17"><circle cx="5" cy="13" r="2.5" fill="none" stroke="#222" stroke-width="1.2"/><path d="M5 10.5 V2 M5 5 H8" stroke="#222" stroke-width="1.2"/><path d="M5 2 V10" stroke="#f0d060" stroke-width="0.6"/><path d="M7 13 L13 8" stroke="#222" stroke-width="1.2"/></svg>
<div style="left:1035px;top:1017px;width:21px;height:21px;box-sizing:border-box;border:1px solid #2a2a2a;background:linear-gradient(#a0a0a0,#8a8a8a);border-radius:0px 0px 0px 0px;"></div>
<div style="left:1055px;top:1017px;width:21px;height:21px;box-sizing:border-box;border:1px solid #2a2a2a;background:linear-gradient(#a0a0a0,#8a8a8a);border-radius:0px 5px 0px 0px;"></div>
<svg style="position:absolute;left:1037px;top:1019px" width="16" height="17"><circle cx="4.5" cy="12.5" r="2.5" fill="none" stroke="#222" stroke-width="1.3"/><path d="M6.5 10.5 L13 4" stroke="#222" stroke-width="1.3"/></svg>
<svg style="position:absolute;left:1057px;top:1019px" width="16" height="17"><circle cx="4.5" cy="12.5" r="2.5" fill="none" stroke="#222" stroke-width="1.3"/><path d="M6.5 10.5 L13 4" stroke="#222" stroke-width="1.3"/><path d="M3 3 L13 13 M13 3 L3 13" stroke="#e05010" stroke-width="1.4"/></svg>
<div style="left:1670px;top:49px;width:246px;height:26px;background:#696969;"></div>
<svg style="position:absolute;left:1902px;top:49px" width="14" height="14"><path d="M2 0 L14 12 M6 0 L14 8 M10 0 L14 4" stroke="#c8c8c8" stroke-width="1" opacity="0.7"/></svg>
<div style="left:1680px;top:52px;width:30px;height:20px;box-sizing:border-box;border:1px solid #151515;background:linear-gradient(#505050,#393939);border-radius:5px 5px 5px 5px;"></div>
<svg style="position:absolute;left:1684px;top:55px" width="16" height="15"><rect x="1" y="1" width="5" height="3" fill="#f0a040"/><path d="M3 4 V13 M3 8 H7 M3 12 H7" stroke="#ddd" stroke-width="1"/><rect x="7.5" y="6.5" width="6" height="3" fill="#ddd"/><rect x="7.5" y="10.5" width="6" height="3" fill="#ddd"/></svg>
<svg style="position:absolute;left:1701px;top:55px" width="8" height="14"><path d="M0.5 6 L4 0.5 L7.5 6Z M0.5 8 L4 13.5 L7.5 8Z" fill="#bdbdbd"/></svg>
<svg style="position:absolute;left:1716px;top:57px" width="11" height="11"><circle cx="5.5" cy="5.5" r="4.3" fill="none" stroke="#5e5e5e" stroke-width="1.2"/><circle cx="5.5" cy="5.5" r="3.3" fill="#8a8a8a"/><path d="M3 5.5 H8" stroke="#3a3a3a" stroke-width="1.3"/></svg>
<div class="t" style="left:1741px;top:58.43px;font-size:11.3px;color:#000;">View</div>
<div class="t" style="left:1781px;top:58.43px;font-size:11.3px;color:#000;">Search</div>
<div style="left:1827px;top:52px;width:95px;height:20px;box-sizing:border-box;border:1px solid #151515;background:linear-gradient(#505050,#393939);border-radius:5px 5px 5px 5px;"></div>
<div class="t" style="left:1835px;top:58.43px;font-size:11.3px;color:#fff;">All Scenes</div>
<div style="left:1670px;top:75px;width:246px;height:141px;background:#727272;"></div>
<div style="left:1670px;top:75px;width:175px;height:20px;background:#7e858e;"></div>
<div style="left:1670px;top:95px;width:175px;height:20px;background:#767676;"></div>
<div style="left:1670px;top:135px;width:175px;height:20px;background:#767676;"></div>
<div style="left:1670px;top:175px;width:175px;height:20px;background:#767676;"></div>
<div style="left:1845px;top:75px;width:60px;height:121px;background:#6c6c6c;"></div>
<div style="left:1845px;top:95px;width:60px;height:20px;background:#707070;"></div>
<div style="left:1845px;top:135px;width:60px;height:20px;background:#707070;"></div>
<div style="left:1845px;top:175px;width:60px;height:20px;background:#707070;"></div>
<div style="left:1845px;top:75px;width:1px;height:121px;background:#5e5e5e;"></div>
<div style="left:1865px;top:75px;width:1px;height:121px;background:#5e5e5e;"></div>
<div style="left:1885px;top:75px;width:1px;height:121px;background:#5e5e5e;"></div>
<div style="left:1697px;top:90px;width:1px;height:105px;background:#333;"></div>
<div style="left:1697px;top:105px;width:8px;height:1px;background:#333;"></div>
<div style="left:1697px;top:145px;width:8px;height:1px;background:#333;"></div>
<div style="left:1697px;top:165px;width:8px;height:1px;background:#333;"></div>
<div style="left:1697px;top:185px;width:8px;height:1px;background:#333;"></div>
<svg style="position:absolute;left:1675px;top:80px" width="10" height="10"><circle cx="5" cy="5" r="4.2" fill="#e8e8e8" stroke="#222" stroke-width="0.9"/><path d="M2.6 5 H7.4" stroke="#111" stroke-width="1.1"/></svg>
<div style="left:1684px;top:85px;width:8px;height:1px;background:#333;"></div>
<div style="left:1688px;top:77px;width:20px;height:18px;border-radius:10px;background:rgba(200,200,200,0.35);"></div>
<svg style="position:absolute;left:1691px;top:78px" width="16" height="16"><circle cx="3" cy="3" r="1.6" fill="#f0e070" stroke="#8a7020" stroke-width="0.5"/><rect x="7.5" y="2.5" width="5.5" height="9" rx="2" fill="#6a9ae0" stroke="#1a2a4a" stroke-width="0.9"/><circle cx="6" cy="11.5" r="3.5" fill="#e0e0e0" stroke="#222" stroke-width="0.9"/></svg>
<div class="t" style="left:1711px;top:82.43px;font-size:11.3px;color:#000;">Scene</div>
<svg style="position:absolute;left:1699px;top:100px" width="10" height="10"><circle cx="5" cy="5" r="4.2" fill="#e8e8e8" stroke="#222" stroke-width="0.9"/><path d="M2.6 5 H7.4 M5 2.6 V7.4" stroke="#111" stroke-width="1.1"/></svg>
<svg style="position:absolute;left:1712px;top:97px" width="16" height="16"><rect x="3.5" y="3.5" width="11" height="11" fill="#ddd" stroke="#222" stroke-width="0.8" transform="rotate(8 9 9)"/><rect x="1.5" y="1.5" width="11" height="11" fill="#f4f4f4" stroke="#222" stroke-width="0.9"/><rect x="6" y="3.5" width="4" height="6" rx="1.3" fill="#5a8ad0" stroke="#1a2a4a" stroke-width="0.7"/><circle cx="5" cy="9" r="2.2" fill="#ddd" stroke="#222" stroke-width="0.7"/></svg>
<div class="t" style="left:1731px;top:102.43px;font-size:11.3px;color:#000;">RenderLayers</div>
<div class="t" style="left:1808px;top:102.43px;font-size:11.3px;color:#000;">|</div>
<div style="left:1818px;top:97px;width:18px;height:18px;border-radius:9px;background:rgba(210,210,210,0.4);"></div>
<svg style="position:absolute;left:1819px;top:98px" width="16" height="16"><rect x="3.5" y="3.5" width="11" height="11" fill="#ddd" stroke="#222" stroke-width="0.8" transform="rotate(8 9 9)"/><rect x="1.5" y="1.5" width="11" height="11" fill="#f4f4f4" stroke="#222" stroke-width="0.9"/><rect x="6" y="3.5" width="4" height="6" rx="1.3" fill="#5a8ad0" stroke="#1a2a4a" stroke-width="0.7"/><circle cx="5" cy="9" r="2.2" fill="#ddd" stroke="#222" stroke-width="0.7"/></svg>
<div style="left:1711px;top:117px;width:18px;height:17px;border-radius:9px;background:rgba(210,210,210,0.4);"></div>
<svg style="position:absolute;left:1713px;top:118px" width="15" height="15"><circle cx="7.5" cy="7.5" r="6.5" fill="#3a6ab0" stroke="#1a2a4a" stroke-width="0.8"/><path d="M3 5 Q6 3 7 6 Q6 9 4 9Z M8 8 Q11 7 12 10 Q10 13 8 11Z" fill="#4a9a40"/></svg>
<div class="t" style="left:1731px;top:122.43px;font-size:11.3px;color:#000;">World</div>
<svg style="position:absolute;left:1694px;top:140px" width="10" height="10"><circle cx="5" cy="5" r="4.2" fill="#e8e8e8" stroke="#222" stroke-width="0.9"/><path d="M2.6 5 H7.4 M5 2.6 V7.4" stroke="#111" stroke-width="1.1"/></svg>
<svg style="position:absolute;left:1712px;top:138px" width="18" height="15"><circle cx="4.5" cy="4" r="3.3" fill="#f0a040" stroke="#3a2a10" stroke-width="0.8"/><circle cx="10.5" cy="4" r="3.3" fill="#f0a040" stroke="#3a2a10" stroke-width="0.8"/><rect x="3" y="7" width="10" height="6" fill="#f0a040" stroke="#3a2a10" stroke-width="0.8"/><path d="M13 9 L17 7 V13 L13 11Z" fill="#f0a040" stroke="#3a2a10" stroke-width="0.8"/></svg>
<div class="t" style="left:1731px;top:142.43px;font-size:11.3px;color:#000;">Camera</div>
<div class="t" style="left:1779px;top:142.43px;font-size:11.3px;color:#000;">|</div>
<div style="left:1789px;top:136px;width:19px;height:19px;border-radius:10px;background:rgba(210,210,210,0.35);"></div>
<svg style="position:absolute;left:1790px;top:139px" width="18" height="15" opacity="0.55"><circle cx="4.5" cy="4" r="3.3" fill="#ddd" stroke="#555" stroke-width="0.8"/><circle cx="10.5" cy="4" r="3.3" fill="#ddd" stroke="#555" stroke-width="0.8"/><rect x="3" y="7" width="10" height="6" fill="#ddd" stroke="#555" stroke-width="0.8"/></svg>
<svg style="position:absolute;left:1694px;top:160px" width="10" height="10"><circle cx="5" cy="5" r="4.2" fill="#e8e8e8" stroke="#222" stroke-width="0.9"/><path d="M2.6 5 H7.4 M5 2.6 V7.4" stroke="#111" stroke-width="1.1"/></svg>
<svg style="position:absolute;left:1714px;top:157px" width="12" height="17"><circle cx="6" cy="6" r="4.8" fill="#f8e0a0" stroke="#3a2a10" stroke-width="0.9"/><rect x="3.5" y="10" width="5" height="5" fill="#e0a040" stroke="#3a2a10" stroke-width="0.8"/></svg>
<div class="t" style="left:1731px;top:162.43px;font-size:11.3px;color:#000;">Lamp</div>
<div class="t" style="left:1769px;top:162.43px;font-size:11.3px;color:#000;">|</div>
<svg style="position:absolute;left:1780px;top:158px" width="17" height="17" opacity="0.6"><path d="M1 5 V1 H5 M12 1 H16 V5 M16 12 V16 H12 M5 16 H1 V12 M4 4 L13 13 M13 4 L4 13" stroke="#b8a070" stroke-width="1" fill="none"/><circle cx="8.5" cy="8.5" r="2" fill="#b8a070"/></svg>
<svg style="position:absolute;left:1694px;top:180px" width="10" height="10"><circle cx="5" cy="5" r="4.2" fill="#e8e8e8" stroke="#222" stroke-width="0.9"/><path d="M2.6 5 H7.4 M5 2.6 V7.4" stroke="#111" stroke-width="1.1"/></svg>
<svg style="position:absolute;left:1712px;top:177px" width="17" height="17"><path d="M8.5 1 V9 M8.5 9 L2 15 M8.5 9 L15 15" stroke="#3a2a10" stroke-width="3.2"/><path d="M8.5 1.5 V9 M8.5 9 L2.5 14.5 M8.5 9 L14.5 14.5" stroke="#f0a040" stroke-width="1.8"/></svg>
<div class="t" style="left:1731px;top:182.43px;font-size:11.3px;color:#000;">VisNode.0-0</div>
<div class="t" style="left:1803px;top:182.43px;font-size:11.3px;color:#000;">|</div>
<svg style="position:absolute;left:1812px;top:178px" width="18" height="16" opacity="0.7"><path d="M8 3 L13 1 L17 3 V9 L13 11 L8 9Z" fill="#bbb" stroke="#555" stroke-width="0.7"/><circle cx="5" cy="11" r="4" fill="#ccc" stroke="#555" stroke-width="0.7"/></svg>
<svg style="position:absolute;left:1848px;top:141px" width="14" height="10"><path d="M1 5 Q7 -1 13 5 Q7 11 1 5Z" fill="#f4f4f4" stroke="#222" stroke-width="0.9"/><circle cx="7" cy="5" r="2.3" fill="#222"/></svg>
<svg style="position:absolute;left:1871px;top:139px" width="10" height="14"><path d="M1 1 L1 11 L3.5 8.5 L6 13 L7.5 12 L5 7.5 L8.5 7.5Z" fill="#f4f4f4" stroke="#222" stroke-width="0.9"/></svg>
<svg style="position:absolute;left:1888px;top:140px" width="14" height="13"><rect x="1" y="3" width="12" height="9" rx="1" fill="#e8e8e8" stroke="#222" stroke-width="0.9"/><rect x="3" y="1" width="4" height="2.5" fill="#e8e8e8" stroke="#222" stroke-width="0.7"/><circle cx="7" cy="7.5" r="2.7" fill="#555" stroke="#222" stroke-width="0.8"/><circle cx="6.5" cy="7" r="1" fill="#d05040"/></svg>
<svg style="position:absolute;left:1848px;top:161px" width="14" height="10"><path d="M1 5 Q7 -1 13 5 Q7 11 1 5Z" fill="#f4f4f4" stroke="#222" stroke-width="0.9"/><circle cx="7" cy="5" r="2.3" fill="#222"/></svg>
<svg style="position:absolute;left:1871px;top:159px" width="10" height="14"><path d="M1 1 L1 11 L3.5 8.5 L6 13 L7.5 12 L5 7.5 L8.5 7.5Z" fill="#f4f4f4" stroke="#222" stroke-width="0.9"/></svg>
<svg style="position:absolute;left:1888px;top:160px" width="14" height="13"><rect x="1" y="3" width="12" height="9" rx="1" fill="#e8e8e8" stroke="#222" stroke-width="0.9"/><rect x="3" y="1" width="4" height="2.5" fill="#e8e8e8" stroke="#222" stroke-width="0.7"/><circle cx="7" cy="7.5" r="2.7" fill="#555" stroke="#222" stroke-width="0.8"/><circle cx="6.5" cy="7" r="1" fill="#d05040"/></svg>
<svg style="position:absolute;left:1848px;top:181px" width="14" height="10"><path d="M1 5 Q7 -1 13 5 Q7 11 1 5Z" fill="#f4f4f4" stroke="#222" stroke-width="0.9"/><circle cx="7" cy="5" r="2.3" fill="#222"/></svg>
<svg style="position:absolute;left:1871px;top:179px" width="10" height="14"><path d="M1 1 L1 11 L3.5 8.5 L6 13 L7.5 12 L5 7.5 L8.5 7.5Z" fill="#f4f4f4" stroke="#222" stroke-width="0.9"/></svg>
<svg style="position:absolute;left:1888px;top:180px" width="14" height="13"><rect x="1" y="3" width="12" height="9" rx="1" fill="#e8e8e8" stroke="#222" stroke-width="0.9"/><rect x="3" y="1" width="4" height="2.5" fill="#e8e8e8" stroke="#222" stroke-width="0.7"/><circle cx="7" cy="7.5" r="2.7" fill="#555" stroke="#222" stroke-width="0.8"/><circle cx="6.5" cy="7" r="1" fill="#d05040"/></svg>
<div style="left:1905px;top:80px;width:11px;height:112px;box-sizing:border-box;border:1px solid #4e4e4e;border-radius:6px 0 0 6px;background:#666;"></div>
<div style="left:1905px;top:80px;width:11px;height:14px;box-sizing:border-box;border:1px solid #4e4e4e;border-radius:6px 0 0 6px;background:linear-gradient(90deg,#a0a0a0,#8a8a8a);"></div>
<div style="left:1675px;top:199px;width:225px;height:13px;box-sizing:border-box;border:1px solid #4e4e4e;border-radius:6px;background:#666;"></div>
<div style="left:1675px;top:199px;width:175px;height:13px;box-sizing:border-box;border:1px solid #4e4e4e;border-radius:6px;background:linear-gradient(#a6a6a6,#8a8a8a);"></div>
<svg style="position:absolute;left:1670px;top:203px" width="14" height="14"><path d="M0 2 L12 14 M0 6 L8 14 M0 10 L4 14" stroke="#c8c8c8" stroke-width="1" opacity="0.7"/></svg>
<div style="left:1670px;top:215px;width:246px;height:1px;background:#0e0e0e;"></div>
<div style="left:1670px;top:216px;width:246px;height:27px;background:#696969;"></div>
<svg style="position:absolute;left:1902px;top:216px" width="14" height="14"><path d="M2 0 L14 12 M6 0 L14 8 M10 0 L14 4" stroke="#c8c8c8" stroke-width="1" opacity="0.7"/></svg>
<div style="left:1679px;top:219px;width:30px;height:20px;box-sizing:border-box;border:1px solid #151515;background:linear-gradient(#505050,#393939);border-radius:5px 5px 5px 5px;"></div>
<svg style="position:absolute;left:1683px;top:222px" width="16" height="14"><rect x="1" y="1.5" width="13" height="4" rx="2" fill="#eee" stroke="#222" stroke-width="0.8"/><rect x="1" y="8" width="13" height="4" rx="2" fill="#eee" stroke="#222" stroke-width="0.8"/><rect x="8" y="2.5" width="5" height="2" fill="#333"/><rect x="2" y="9" width="5" height="2" fill="#333"/></svg>
<svg style="position:absolute;left:1700px;top:222px" width="8" height="14"><path d="M0.5 6 L4 0.5 L7.5 6Z M0.5 8 L4 13.5 L7.5 8Z" fill="#bdbdbd"/></svg>
<div style="left:1717px;top:219px;width:21px;height:20px;box-sizing:border-box;border:1px solid #151515;background:linear-gradient(#505050,#393939);border-radius:5px 0px 0px 5px;"></div>
<div style="left:1737px;top:219px;width:21px;height:20px;box-sizing:border-box;border:1px solid #151515;background:linear-gradient(#505050,#393939);border-radius:0px 0px 0px 0px;"></div>
<div style="left:1757px;top:219px;width:21px;height:20px;box-sizing:border-box;border:1px solid #151515;background:linear-gradient(#505050,#393939);border-radius:0px 0px 0px 0px;"></div>
<div style="left:1777px;top:219px;width:21px;height:20px;box-sizing:border-box;border:1px solid #151515;background:linear-gradient(#505050,#393939);border-radius:0px 0px 0px 0px;"></div>
<div style="left:1797px;top:219px;width:21px;height:20px;box-sizing:border-box;border:1px solid #151515;background:linear-gradient(#505050,#393939);border-radius:0px 0px 0px 0px;"></div>
<div style="left:1817px;top:219px;width:21px;height:20px;box-sizing:border-box;border:1px solid #151515;background:linear-gradient(#505050,#393939);border-radius:0px 0px 0px 0px;"></div>
<div style="left:1837px;top:219px;width:21px;height:20px;box-sizing:border-box;border:1px solid #151515;background:linear-gradient(#505050,#393939);border-radius:0px 0px 0px 0px;"></div>
<div style="left:1857px;top:219px;width:21px;height:20px;box-sizing:border-box;border:1px solid #151515;background:linear-gradient(#505050,#393939);border-radius:0px 0px 0px 0px;"></div>
<div style="left:1877px;top:219px;width:21px;height:20px;box-sizing:border-box;border:1px solid #151515;background:linear-gradient(#505050,#393939);border-radius:0px 5px 5px 0px;"></div>
<div style="left:1718px;top:220px;width:19px;height:18px;box-sizing:border-box;border:2px solid #5a8ad8;border-radius:4px 0 0 4px;background:linear-gradient(#5a5a5a,#484848);"></div>
<svg style="position:absolute;left:1721px;top:223px" width="14" height="13"><rect x="1" y="3" width="12" height="9" rx="1" fill="#e8e8e8" stroke="#222" stroke-width="0.9"/><rect x="3" y="1" width="4" height="2.5" fill="#e8e8e8" stroke="#222" stroke-width="0.7"/><circle cx="7" cy="7.5" r="2.7" fill="#555" stroke="#222" stroke-width="0.8"/><circle cx="6.5" cy="7" r="1" fill="#d05040"/></svg>
<svg style="position:absolute;left:1739px;top:221px" width="16" height="16"><rect x="3.5" y="3.5" width="11" height="11" fill="#ddd" stroke="#222" stroke-width="0.8" transform="rotate(8 9 9)"/><rect x="1.5" y="1.5" width="11" height="11" fill="#f4f4f4" stroke="#222" stroke-width="0.9"/><rect x="6" y="3.5" width="4" height="6" rx="1.3" fill="#5a8ad0" stroke="#1a2a4a" stroke-width="0.7"/><circle cx="5" cy="9" r="2.2" fill="#ddd" stroke="#222" stroke-width="0.7"/></svg>
<svg style="position:absolute;left:1759px;top:221px" width="16" height="16"><circle cx="3" cy="3" r="1.6" fill="#f0e070" stroke="#8a7020" stroke-width="0.5"/><rect x="7.5" y="2.5" width="5.5" height="9" rx="2" fill="#6a9ae0" stroke="#1a2a4a" stroke-width="0.9"/><circle cx="6" cy="11.5" r="3.5" fill="#e0e0e0" stroke="#222" stroke-width="0.9"/></svg>
<svg style="position:absolute;left:1779px;top:222px" width="14" height="14"><circle cx="7" cy="7" r="6" fill="#6a80a8" stroke="#2a2a3a" stroke-width="0.8"/><path d="M3 5 Q6 3 7 6 Q6 9 4 9Z M8 8 Q11 7 12 10 Q10 13 8 11Z" fill="#7a7050"/></svg>
<svg style="position:absolute;left:1799px;top:222px" width="14" height="14"><path d="M1.5 3.5 L7 1 L12.5 3.5 L12.5 10.5 L7 13 L1.5 10.5Z" fill="#d8b888" stroke="#3a2a10" stroke-width="0.8"/><path d="M7 6 L12.5 3.5 L12.5 10.5 L7 13Z" fill="#b89060"/></svg>
<svg style="position:absolute;left:1819px;top:222px" width="14" height="14"><rect x="1" y="6" width="7" height="4" rx="2" transform="rotate(-40 4.5 8)" fill="none" stroke="#ccc" stroke-width="1.5"/><rect x="6" y="4" width="7" height="4" rx="2" transform="rotate(-40 9.5 6)" fill="none" stroke="#ccc" stroke-width="1.5"/></svg>
<svg style="position:absolute;left:1839px;top:222px" width="14" height="14"><path d="M7 1 V8 L2 12 M7 8 L12 12" stroke="#ccc" stroke-width="1.5" fill="none"/></svg>
<svg style="position:absolute;left:1859px;top:222px" width="14" height="14"><rect x="1" y="1" width="12" height="12" fill="#ddd"/><path d="M1 1h3v3h-3zM7 1h3v3h-3zM4 4h3v3h-3zM10 4h3v3h-3zM1 7h3v3h-3zM7 7h3v3h-3zM4 10h3v3h-3zM10 10h3v3h-3z" fill="#8a4a38"/></svg>
<svg style="position:absolute;left:1879px;top:222px" width="14" height="14"><path d="M2 7 L6 12 L11 5" stroke="#4a6aa0" stroke-width="2" fill="none"/><circle cx="11" cy="3.5" r="2.8" fill="#bbb"/></svg>
<div style="left:1670px;top:242px;width:246px;height:796px;background:#727272;"></div>
<div style="left:1670px;top:242px;width:1px;height:796px;background:#7c7c7c;"></div>
<svg style="position:absolute;left:1680px;top:252px" width="16" height="16"><path d="M9 1 L15 7 L12 8 L9 11 L9 14 L2 7 L5 7 L8 4Z" fill="#ddd" stroke="#222" stroke-width="0.9"/><path d="M5 11 L1 15" stroke="#222" stroke-width="1.5"/></svg>
<svg style="position:absolute;left:1702px;top:252px" width="16" height="16"><circle cx="3" cy="3" r="1.6" fill="#f0e070" stroke="#8a7020" stroke-width="0.5"/><rect x="7.5" y="2.5" width="5.5" height="9" rx="2" fill="#6a9ae0" stroke="#1a2a4a" stroke-width="0.9"/><circle cx="6" cy="11.5" r="3.5" fill="#e0e0e0" stroke="#222" stroke-width="0.9"/></svg>
<div class="t" style="left:1721px;top:256.43px;font-size:11.3px;color:#000;">Scene</div>
<div style="left:1675px;top:277px;width:240px;height:1px;background:#4e4e4e;"></div>
<div style="left:1675px;top:278px;width:240px;height:1px;background:#9a9a9a;"></div>
<svg style="position:absolute;left:1683px;top:287px" width="7" height="7"><path d="M0 0.5 L7 0.5 L3.5 6.5Z" fill="#1e1e1e"/></svg>
<div class="t" style="left:1695px;top:284.08px;font-size:12.9px;color:#000;">Render</div>
<svg style="position:absolute;left:1898px;top:281px" width="15" height="15"><path d="M0 0 L14 14" stroke="rgba(210,210,210,0.55)" stroke-width="1"/><path d="M4 0 L14 10" stroke="rgba(210,210,210,0.55)" stroke-width="1"/><path d="M8 0 L14 6" stroke="rgba(210,210,210,0.55)" stroke-width="1"/></svg>
<div style="left:1678px;top:310px;width:78px;height:20px;box-sizing:border-box;border:1px solid #1a1a1a;background:linear-gradient(#a9a9a9,#8c8c8c);border-radius:5px 0px 0px 5px;"></div>
<div style="left:1755px;top:310px;width:79px;height:20px;box-sizing:border-box;border:1px solid #1a1a1a;background:linear-gradient(#a9a9a9,#8c8c8c);border-radius:0px 0px 0px 0px;"></div>
<div style="left:1833px;top:310px;width:79px;height:20px;box-sizing:border-box;border:1px solid #1a1a1a;background:linear-gradient(#a9a9a9,#8c8c8c);border-radius:0px 5px 5px 0px;"></div>
<svg style="position:absolute;left:1682px;top:314px" width="14" height="13"><rect x="1" y="3" width="12" height="9" rx="1" fill="#e8e8e8" stroke="#222" stroke-width="0.9"/><rect x="3" y="1" width="4" height="2.5" fill="#e8e8e8" stroke="#222" stroke-width="0.7"/><circle cx="7" cy="7.5" r="2.7" fill="#555" stroke="#222" stroke-width="0.8"/><circle cx="6.5" cy="7" r="1" fill="#d05040"/></svg>
<div class="t" style="left:1706px;top:315.43px;font-size:11.3px;color:#000;width:42px;text-align:center;">Render</div>
<svg style="position:absolute;left:1759px;top:312px" width="16" height="16"><rect x="1.5" y="7" width="13" height="7.5" fill="#ddd" stroke="#222"/><path d="M1 6 L13.5 2 L14.5 5 L2 9Z" fill="#ddd" stroke="#222" stroke-width="0.8"/><path d="M4.5 4.5 L5.5 7.5 M8.5 3.3 L9.5 6.3" stroke="#222"/></svg>
<div class="t" style="left:1776px;top:315.43px;font-size:11.3px;color:#000;">Animation</div>
<svg style="position:absolute;left:1837px;top:312px" width="14" height="16"><path d="M1.5 1.5 L12 8 L1.5 14.5Z" fill="#f4f4f4" stroke="#222" stroke-width="0.9"/></svg>
<div class="t" style="left:1870px;top:315.43px;font-size:11.3px;color:#000;">Play</div>
<div class="t" style="left:1685px;top:340.43px;font-size:11.3px;color:#000;">Display:</div>
<div style="left:1760px;top:335px;width:152px;height:20px;box-sizing:border-box;border:1px solid #151515;background:linear-gradient(#505050,#393939);border-radius:4px 4px 4px 4px;"></div>
<div class="t" style="left:1768px;top:341.43px;font-size:11.3px;color:#fff;">Image Editor</div>
<svg style="position:absolute;left:1901px;top:338.0px" width="8" height="14"><path d="M0.5 6 L4 0.5 L7.5 6Z M0.5 8 L4 13.5 L7.5 8Z" fill="#d0d0d0"/></svg>
<div style="left:1675px;top:362px;width:240px;height:1px;background:#4e4e4e;"></div>
<div style="left:1675px;top:363px;width:240px;height:1px;background:#9a9a9a;"></div>
<svg style="position:absolute;left:1683px;top:372px" width="7" height="7"><path d="M0 0.5 L7 0.5 L3.5 6.5Z" fill="#1e1e1e"/></svg>
<div class="t" style="left:1695px;top:370.08px;font-size:12.9px;color:#000;">Dimensions</div>
<svg style="position:absolute;left:1898px;top:366px" width="15" height="15"><path d="M0 0 L14 14" stroke="rgba(210,210,210,0.55)" stroke-width="1"/><path d="M4 0 L14 10" stroke="rgba(210,210,210,0.55)" stroke-width="1"/><path d="M8 0 L14 6" stroke="rgba(210,210,210,0.55)" stroke-width="1"/></svg>
<div style="left:1678px;top:396px;width:195px;height:19px;box-sizing:border-box;border:1px solid #151515;background:linear-gradient(#505050,#393939);border-radius:5px 0px 0px 5px;"></div>
<div class="t" style="left:1685px;top:401.43px;font-size:11.3px;color:#fff;">Render Presets</div>
<svg style="position:absolute;left:1863px;top:398.5px" width="8" height="14"><path d="M0.5 6 L4 0.5 L7.5 6Z M0.5 8 L4 13.5 L7.5 8Z" fill="#d0d0d0"/></svg>
<div style="left:1872px;top:396px;width:21px;height:19px;box-sizing:border-box;border:1px solid #151515;background:linear-gradient(#a8a8a8,#929292);border-radius:0px 0px 0px 0px;"></div>
<div style="left:1892px;top:396px;width:20px;height:19px;box-sizing:border-box;border:1px solid #151515;background:linear-gradient(#a8a8a8,#929292);border-radius:0px 5px 5px 0px;"></div>
<svg style="position:absolute;left:1876px;top:399px" width="13" height="13"><path d="M6.5 1 V12 M1 6.5 H12" stroke="#222" stroke-width="3.2"/><path d="M6.5 2 V11 M2 6.5 H11" stroke="#f4f4f4" stroke-width="1.4"/></svg>
<svg style="position:absolute;left:1895px;top:399px" width="13" height="13"><path d="M1 6.5 H12" stroke="#222" stroke-width="3.2"/><path d="M2 6.5 H11" stroke="#f4f4f4" stroke-width="1.4"/></svg>
<div class="t" style="left:1685px;top:426.43px;font-size:11.3px;color:#000;">Resolution:</div>
<div class="t" style="left:1807px;top:426.43px;font-size:11.3px;color:#000;">Frame Range:</div>
<div style="left:1678px;top:441px;width:113px;height:20px;box-sizing:border-box;border:1px solid #1e1e1e;background:linear-gradient(#bdbdbd,#a5a5a5);border-radius:8px 8px 0px 0px;"></div>
<svg style="position:absolute;left:1678px;top:441px" width="113" height="20"><path d="M11 6.5 L7.5 10.0 L11 13.5Z M102 6.5 L105.5 10.0 L102 13.5Z" fill="#6e6e6e"/></svg>
<div class="t" style="left:1678px;width:113px;text-align:center;top:446.27px;font-size:11.5px;color:#000;">X: 1920</div>
<div style="left:1678px;top:460px;width:113px;height:21px;box-sizing:border-box;border:1px solid #1e1e1e;background:linear-gradient(#bdbdbd,#a5a5a5);border-radius:0px 0px 0px 0px;"></div>
<svg style="position:absolute;left:1678px;top:460px" width="113" height="21"><path d="M11 7.0 L7.5 10.5 L11 14.0Z M102 7.0 L105.5 10.5 L102 14.0Z" fill="#6e6e6e"/></svg>
<div class="t" style="left:1678px;width:113px;text-align:center;top:465.27px;font-size:11.5px;color:#000;">Y: 1080</div>
<div style="left:1678px;top:480px;width:113px;height:20px;box-sizing:border-box;border:1px solid #1e1e1e;background:linear-gradient(#bdbdbd,#a5a5a5);border-radius:0px 0px 8px 8px;"></div>
<div style="left:1679px;top:481px;width:59px;height:18px;background:linear-gradient(#8e8e8e,#7c7c7c);border-radius:0 0 0 7px;"></div>
<div class="t" style="left:1678px;width:113px;text-align:center;top:486.43px;font-size:11.3px;color:#000;">50%</div>
<div style="left:1799px;top:441px;width:113px;height:20px;box-sizing:border-box;border:1px solid #1e1e1e;background:linear-gradient(#bdbdbd,#a5a5a5);border-radius:8px 8px 0px 0px;"></div>
<svg style="position:absolute;left:1799px;top:441px" width="113" height="20"><path d="M11 6.5 L7.5 10.0 L11 13.5Z M102 6.5 L105.5 10.0 L102 13.5Z" fill="#6e6e6e"/></svg>
<div class="t" style="left:1799px;width:113px;text-align:center;top:446.27px;font-size:11.5px;color:#000;">Start Frame: 1</div>
<div style="left:1799px;top:460px;width:113px;height:21px;box-sizing:border-box;border:1px solid #1e1e1e;background:linear-gradient(#bdbdbd,#a5a5a5);border-radius:0px 0px 0px 0px;"></div>
<svg style="position:absolute;left:1799px;top:460px" width="113" height="21"><path d="M11 7.0 L7.5 10.5 L11 14.0Z M102 7.0 L105.5 10.5 L102 14.0Z" fill="#6e6e6e"/></svg>
<div class="t" style="left:1799px;width:113px;text-align:center;top:465.27px;font-size:11.5px;color:#000;">End Frame: 250</div>
<div style="left:1799px;top:480px;width:113px;height:20px;box-sizing:border-box;border:1px solid #1e1e1e;background:linear-gradient(#bdbdbd,#a5a5a5);border-radius:0px 0px 8px 8px;"></div>
<svg style="position:absolute;left:1799px;top:480px" width="113" height="20"><path d="M11 6.5 L7.5 10.0 L11 13.5Z M102 6.5 L105.5 10.0 L102 13.5Z" fill="#6e6e6e"/></svg>
<div class="t" style="left:1799px;width:113px;text-align:center;top:485.27px;font-size:11.5px;color:#000;">Frame Step: 1</div>
<div class="t" style="left:1685px;top:506.43px;font-size:11.3px;color:#000;">Aspect Ratio:</div>
<div class="t" style="left:1807px;top:506.43px;font-size:11.3px;color:#000;">Frame Rate:</div>
<div style="left:1678px;top:521px;width:113px;height:20px;box-sizing:border-box;border:1px solid #1e1e1e;background:linear-gradient(#bdbdbd,#a5a5a5);border-radius:8px 8px 0px 0px;"></div>
<svg style="position:absolute;left:1678px;top:521px" width="113" height="20"><path d="M11 6.5 L7.5 10.0 L11 13.5Z M102 6.5 L105.5 10.0 L102 13.5Z" fill="#6e6e6e"/></svg>
<div class="t" style="left:1678px;width:113px;text-align:center;top:526.27px;font-size:11.5px;color:#000;">X: 1.000</div>
<div style="left:1678px;top:540px;width:113px;height:20px;box-sizing:border-box;border:1px solid #1e1e1e;background:linear-gradient(#bdbdbd,#a5a5a5);border-radius:0px 0px 8px 8px;"></div>
<svg style="position:absolute;left:1678px;top:540px" width="113" height="20"><path d="M11 6.5 L7.5 10.0 L11 13.5Z M102 6.5 L105.5 10.0 L102 13.5Z" fill="#6e6e6e"/></svg>
<div class="t" style="left:1678px;width:113px;text-align:center;top:545.27px;font-size:11.5px;color:#000;">Y: 1.000</div>
<div style="left:1799px;top:521px;width:113px;height:20px;box-sizing:border-box;border:1px solid #151515;background:linear-gradient(#505050,#393939);border-radius:4px 4px 4px 4px;"></div>
<div class="t" style="left:1807px;top:527.43px;font-size:11.3px;color:#fff;">24 fps</div>
<svg style="position:absolute;left:1901px;top:524.0px" width="8" height="14"><path d="M0.5 6 L4 0.5 L7.5 6Z M0.5 8 L4 13.5 L7.5 8Z" fill="#d0d0d0"/></svg>
<div class="t" style="left:1807px;top:546.43px;font-size:11.3px;color:#000;">Time Remapping:</div>
<div style="left:1799px;top:561px;width:57px;height:19px;box-sizing:border-box;border:1px solid #1e1e1e;background:linear-gradient(#bdbdbd,#a5a5a5);border-radius:8px 0px 0px 8px;"></div>
<svg style="position:absolute;left:1799px;top:561px" width="57" height="19"><path d="M11 6.0 L7.5 9.5 L11 13.0Z M46 6.0 L49.5 9.5 L46 13.0Z" fill="#6e6e6e"/></svg>
<div class="t" style="left:1799px;width:57px;text-align:center;top:566.27px;font-size:11.5px;color:#000;">:100</div>
<div style="left:1855px;top:561px;width:57px;height:19px;box-sizing:border-box;border:1px solid #1e1e1e;background:linear-gradient(#bdbdbd,#a5a5a5);border-radius:0px 8px 8px 0px;"></div>
<svg style="position:absolute;left:1855px;top:561px" width="57" height="19"><path d="M11 6.0 L7.5 9.5 L11 13.0Z M46 6.0 L49.5 9.5 L46 13.0Z" fill="#6e6e6e"/></svg>
<div class="t" style="left:1855px;width:57px;text-align:center;top:566.27px;font-size:11.5px;color:#000;">:100</div>
<div style="left:1682px;top:565px;width:13px;height:13px;box-sizing:border-box;border:1px solid #1a1a1a;border-radius:3px;background:linear-gradient(#4a4a4a,#3a3a3a);"></div>
<div class="t" style="left:1702px;top:568.43px;font-size:11.3px;color:#000;">Bord</div>
<div style="left:1742px;top:565px;width:13px;height:13px;box-sizing:border-box;border:1px solid #1a1a1a;border-radius:3px;background:linear-gradient(#6a6a6a,#5c5c5c);"></div>
<div class="t" style="left:1763px;top:568.43px;font-size:11.3px;color:#4e4e4e;">Crop</div>
<div style="left:1675px;top:589px;width:240px;height:1px;background:#4e4e4e;"></div>
<div style="left:1675px;top:590px;width:240px;height:1px;background:#9a9a9a;"></div>
<svg style="position:absolute;left:1683px;top:599px" width="7" height="7"><path d="M0 0.5 L7 0.5 L3.5 6.5Z" fill="#1e1e1e"/></svg>
<div style="left:1696px;top:596px;width:13px;height:13px;box-sizing:border-box;border:1px solid #1a1a1a;border-radius:3px;background:linear-gradient(#4a4a4a,#3a3a3a);"></div>
<svg style="position:absolute;left:1696px;top:594px" width="15" height="15"><path d="M3 7.5 L6 10.5 L12 2.5" stroke="#e8e8e8" stroke-width="2" fill="none"/></svg>
<div class="t" style="left:1715px;top:597.08px;font-size:12.9px;color:#000;">Anti-Aliasing</div>
<svg style="position:absolute;left:1898px;top:593px" width="15" height="15"><path d="M0 0 L14 14" stroke="rgba(210,210,210,0.55)" stroke-width="1"/><path d="M4 0 L14 10" stroke="rgba(210,210,210,0.55)" stroke-width="1"/><path d="M8 0 L14 6" stroke="rgba(210,210,210,0.55)" stroke-width="1"/></svg>
<div style="left:1678px;top:623px;width:29px;height:19px;box-sizing:border-box;border:1px solid #151515;background:linear-gradient(#4d4d4d,#3d3d3d);border-radius:5px 0px 0px 5px;"></div>
<div class="t" style="left:1678px;width:29px;text-align:center;top:628.43px;font-size:11.3px;color:#fff;">5</div>
<div style="left:1706px;top:623px;width:29px;height:19px;box-sizing:border-box;border:1px solid #151515;background:linear-gradient(#6a93d4,#4b74b6);border-radius:0px 0px 0px 0px;"></div>
<div class="t" style="left:1706px;width:29px;text-align:center;top:628.43px;font-size:11.3px;color:#000;">8</div>
<div style="left:1734px;top:623px;width:29px;height:19px;box-sizing:border-box;border:1px solid #151515;background:linear-gradient(#4d4d4d,#3d3d3d);border-radius:0px 0px 0px 0px;"></div>
<div class="t" style="left:1734px;width:29px;text-align:center;top:628.43px;font-size:11.3px;color:#fff;">11</div>
<div style="left:1762px;top:623px;width:29px;height:19px;box-sizing:border-box;border:1px solid #151515;background:linear-gradient(#4d4d4d,#3d3d3d);border-radius:0px 5px 5px 0px;"></div>
<div class="t" style="left:1762px;width:29px;text-align:center;top:628.43px;font-size:11.3px;color:#fff;">16</div>
<div style="left:1799px;top:623px;width:113px;height:19px;box-sizing:border-box;border:1px solid #151515;background:linear-gradient(#505050,#393939);border-radius:4px 4px 4px 4px;"></div>
<div class="t" style="left:1807px;top:629.43px;font-size:11.3px;color:#fff;">Mitchell-Netravali</div>
<svg style="position:absolute;left:1901px;top:625.5px" width="8" height="14"><path d="M0.5 6 L4 0.5 L7.5 6Z M0.5 8 L4 13.5 L7.5 8Z" fill="#d0d0d0"/></svg>
<div style="left:1682px;top:648px;width:13px;height:13px;box-sizing:border-box;border:1px solid #1a1a1a;border-radius:3px;background:linear-gradient(#4a4a4a,#3a3a3a);"></div>
<div class="t" style="left:1702px;top:650.43px;font-size:11.3px;color:#000;">Full Sample</div>
<div style="left:1799px;top:645px;width:113px;height:19px;box-sizing:border-box;border:1px solid #1e1e1e;background:linear-gradient(#bdbdbd,#a5a5a5);border-radius:8px 8px 8px 8px;"></div>
<svg style="position:absolute;left:1799px;top:645px" width="113" height="19"><path d="M11 6.0 L7.5 9.5 L11 13.0Z M102 6.0 L105.5 9.5 L102 13.0Z" fill="#6e6e6e"/></svg>
<div class="t" style="left:1799px;width:113px;text-align:center;top:650.27px;font-size:11.5px;color:#000;">Size: 1.000</div>
<div style="left:1675px;top:671px;width:240px;height:1px;background:#4e4e4e;"></div>
<div style="left:1675px;top:672px;width:240px;height:1px;background:#9a9a9a;"></div>
<svg style="position:absolute;left:1683px;top:680px" width="8" height="8"><path d="M0.5 0 L7.5 4.0 L0.5 8Z" fill="#1e1e1e"/></svg>
<div style="left:1696px;top:677px;width:13px;height:13px;box-sizing:border-box;border:1px solid #1a1a1a;border-radius:3px;background:linear-gradient(#4a4a4a,#3a3a3a);"></div>
<div class="t" style="left:1715px;top:679.08px;font-size:12.9px;color:#000;">Sampled Motion Blur</div>
<svg style="position:absolute;left:1898px;top:675px" width="15" height="15"><path d="M0 0 L14 14" stroke="rgba(210,210,210,0.55)" stroke-width="1"/><path d="M4 0 L14 10" stroke="rgba(210,210,210,0.55)" stroke-width="1"/><path d="M8 0 L14 6" stroke="rgba(210,210,210,0.55)" stroke-width="1"/></svg>
<div style="left:1675px;top:695px;width:240px;height:1px;background:#4e4e4e;"></div>
<div style="left:1675px;top:696px;width:240px;height:1px;background:#9a9a9a;"></div>
<svg style="position:absolute;left:1683px;top:704px" width="8" height="8"><path d="M0.5 0 L7.5 4.0 L0.5 8Z" fill="#1e1e1e"/></svg>
<div class="t" style="left:1695px;top:703.08px;font-size:12.9px;color:#000;">Shading</div>
<svg style="position:absolute;left:1898px;top:699px" width="15" height="15"><path d="M0 0 L14 14" stroke="rgba(210,210,210,0.55)" stroke-width="1"/><path d="M4 0 L14 10" stroke="rgba(210,210,210,0.55)" stroke-width="1"/><path d="M8 0 L14 6" stroke="rgba(210,210,210,0.55)" stroke-width="1"/></svg>
<div style="left:1675px;top:719px;width:240px;height:1px;background:#4e4e4e;"></div>
<div style="left:1675px;top:720px;width:240px;height:1px;background:#9a9a9a;"></div>
<svg style="position:absolute;left:1683px;top:728px" width="8" height="8"><path d="M0.5 0 L7.5 4.0 L0.5 8Z" fill="#1e1e1e"/></svg>
<div class="t" style="left:1695px;top:727.08px;font-size:12.9px;color:#000;">Performance</div>
<svg style="position:absolute;left:1898px;top:723px" width="15" height="15"><path d="M0 0 L14 14" stroke="rgba(210,210,210,0.55)" stroke-width="1"/><path d="M4 0 L14 10" stroke="rgba(210,210,210,0.55)" stroke-width="1"/><path d="M8 0 L14 6" stroke="rgba(210,210,210,0.55)" stroke-width="1"/></svg>
<div style="left:1675px;top:743px;width:240px;height:1px;background:#4e4e4e;"></div>
<div style="left:1675px;top:744px;width:240px;height:1px;background:#9a9a9a;"></div>
<svg style="position:absolute;left:1683px;top:752px" width="8" height="8"><path d="M0.5 0 L7.5 4.0 L0.5 8Z" fill="#1e1e1e"/></svg>
<div class="t" style="left:1695px;top:751.08px;font-size:12.9px;color:#000;">Post Processing</div>
<svg style="position:absolute;left:1898px;top:747px" width="15" height="15"><path d="M0 0 L14 14" stroke="rgba(210,210,210,0.55)" stroke-width="1"/><path d="M4 0 L14 10" stroke="rgba(210,210,210,0.55)" stroke-width="1"/><path d="M8 0 L14 6" stroke="rgba(210,210,210,0.55)" stroke-width="1"/></svg>
<div style="left:1675px;top:767px;width:240px;height:1px;background:#4e4e4e;"></div>
<div style="left:1675px;top:768px;width:240px;height:1px;background:#9a9a9a;"></div>
<svg style="position:absolute;left:1683px;top:776px" width="8" height="8"><path d="M0.5 0 L7.5 4.0 L0.5 8Z" fill="#1e1e1e"/></svg>
<div style="left:1696px;top:773px;width:13px;height:13px;box-sizing:border-box;border:1px solid #1a1a1a;border-radius:3px;background:linear-gradient(#4a4a4a,#3a3a3a);"></div>
<div class="t" style="left:1715px;top:775.08px;font-size:12.9px;color:#000;">Freestyle</div>
<svg style="position:absolute;left:1898px;top:771px" width="15" height="15"><path d="M0 0 L14 14" stroke="rgba(210,210,210,0.55)" stroke-width="1"/><path d="M4 0 L14 10" stroke="rgba(210,210,210,0.55)" stroke-width="1"/><path d="M8 0 L14 6" stroke="rgba(210,210,210,0.55)" stroke-width="1"/></svg>
<div style="left:1675px;top:791px;width:240px;height:1px;background:#4e4e4e;"></div>
<div style="left:1675px;top:792px;width:240px;height:1px;background:#9a9a9a;"></div>
<svg style="position:absolute;left:1683px;top:800px" width="8" height="8"><path d="M0.5 0 L7.5 4.0 L0.5 8Z" fill="#1e1e1e"/></svg>
<div style="left:1696px;top:797px;width:13px;height:13px;box-sizing:border-box;border:1px solid #1a1a1a;border-radius:3px;background:linear-gradient(#4a4a4a,#3a3a3a);"></div>
<div class="t" style="left:1715px;top:799.08px;font-size:12.9px;color:#000;">Stamp</div>
<svg style="position:absolute;left:1898px;top:795px" width="15" height="15"><path d="M0 0 L14 14" stroke="rgba(210,210,210,0.55)" stroke-width="1"/><path d="M4 0 L14 10" stroke="rgba(210,210,210,0.55)" stroke-width="1"/><path d="M8 0 L14 6" stroke="rgba(210,210,210,0.55)" stroke-width="1"/></svg>
<div style="left:1675px;top:815px;width:240px;height:1px;background:#4e4e4e;"></div>
<div style="left:1675px;top:816px;width:240px;height:1px;background:#9a9a9a;"></div>
<svg style="position:absolute;left:1683px;top:825px" width="7" height="7"><path d="M0 0.5 L7 0.5 L3.5 6.5Z" fill="#1e1e1e"/></svg>
<div class="t" style="left:1695px;top:823.08px;font-size:12.9px;color:#000;">Output</div>
<svg style="position:absolute;left:1898px;top:819px" width="15" height="15"><path d="M0 0 L14 14" stroke="rgba(210,210,210,0.55)" stroke-width="1"/><path d="M4 0 L14 10" stroke="rgba(210,210,210,0.55)" stroke-width="1"/><path d="M8 0 L14 6" stroke="rgba(210,210,210,0.55)" stroke-width="1"/></svg>
<div style="left:1678px;top:849px;width:215px;height:19px;box-sizing:border-box;border:1px solid #1e1e1e;background:linear-gradient(#9a9a9a,#b4b4b4);border-radius:5px 0px 0px 5px;"></div>
<div class="t" style="left:1685px;top:854.43px;font-size:11.3px;color:#000;">/tmp\</div>
<div style="left:1892px;top:849px;width:20px;height:19px;box-sizing:border-box;border:1px solid #1e1e1e;background:linear-gradient(#a8a8a8,#929292);border-radius:0px 5px 5px 0px;"></div>
<svg style="position:absolute;left:1894px;top:851px" width="16" height="15"><path d="M1.5 4 H6 L7 5.5 H14.5 V13.5 H1.5Z" fill="#e8d8a8" stroke="#222" stroke-width="0.9"/><rect x="4" y="2" width="8" height="6" fill="#fff" stroke="#222" stroke-width="0.7"/><path d="M1.5 8 H14.5 V13.5 H1.5Z" fill="#d8c080" stroke="#222" stroke-width="0.9"/></svg>
<div style="left:1682px;top:877px;width:13px;height:13px;box-sizing:border-box;border:1px solid #1a1a1a;border-radius:3px;background:linear-gradient(#4a4a4a,#3a3a3a);"></div>
<svg style="position:absolute;left:1682px;top:875px" width="15" height="15"><path d="M3 7.5 L6 10.5 L12 2.5" stroke="#e8e8e8" stroke-width="2" fill="none"/></svg>
<div class="t" style="left:1702px;top:879.43px;font-size:11.3px;color:#fff;">Overwrite</div>
<div style="left:1803px;top:877px;width:13px;height:13px;box-sizing:border-box;border:1px solid #1a1a1a;border-radius:3px;background:linear-gradient(#4a4a4a,#3a3a3a);"></div>
<svg style="position:absolute;left:1803px;top:875px" width="15" height="15"><path d="M3 7.5 L6 10.5 L12 2.5" stroke="#e8e8e8" stroke-width="2" fill="none"/></svg>
<div class="t" style="left:1824px;top:879.43px;font-size:11.3px;color:#fff;">File Extensions</div>
<div style="left:1682px;top:899px;width:13px;height:13px;box-sizing:border-box;border:1px solid #1a1a1a;border-radius:3px;background:linear-gradient(#4a4a4a,#3a3a3a);"></div>
<div class="t" style="left:1702px;top:901.43px;font-size:11.3px;color:#000;">Placeholders</div>
<div style="left:1678px;top:920px;width:113px;height:20px;box-sizing:border-box;border:1px solid #151515;background:linear-gradient(#505050,#393939);border-radius:5px 5px 5px 5px;"></div>
<svg style="position:absolute;left:1683px;top:922px" width="14" height="16"><path d="M1.5 1.5 H9 L12.5 5 V14.5 H1.5Z" fill="#eee" stroke="#222" stroke-width="0.9"/><rect x="3" y="5" width="7" height="4" fill="#f0a060"/><rect x="3" y="9" width="7" height="4" fill="#6080c0"/></svg>
<div class="t" style="left:1701px;top:926.43px;font-size:11.3px;color:#fff;">PNG</div>
<svg style="position:absolute;left:1781px;top:923px" width="8" height="14"><path d="M0.5 6 L4 0.5 L7.5 6Z M0.5 8 L4 13.5 L7.5 8Z" fill="#d0d0d0"/></svg>
<div style="left:1799px;top:920px;width:39px;height:20px;box-sizing:border-box;border:1px solid #151515;background:linear-gradient(#4d4d4d,#3d3d3d);border-radius:5px 0px 0px 5px;"></div>
<div class="t" style="left:1799px;width:38px;text-align:center;top:926.43px;font-size:11.3px;color:#fff;">BW</div>
<div style="left:1836px;top:920px;width:40px;height:20px;box-sizing:border-box;border:1px solid #151515;background:linear-gradient(#6a93d4,#4b74b6);border-radius:0px 0px 0px 0px;"></div>
<div class="t" style="left:1836px;width:39px;text-align:center;top:926.43px;font-size:11.3px;color:#000;">RGB</div>
<div style="left:1874px;top:920px;width:39px;height:20px;box-sizing:border-box;border:1px solid #151515;background:linear-gradient(#4d4d4d,#3d3d3d);border-radius:0px 5px 5px 0px;"></div>
<div class="t" style="left:1874px;width:38px;text-align:center;top:926.43px;font-size:11.3px;color:#fff;">RGBA</div>
<div class="t" style="left:1685px;top:948.43px;font-size:11.3px;color:#000;">Color Depth:</div>
<div style="left:1761px;top:942px;width:76px;height:20px;box-sizing:border-box;border:1px solid #151515;background:linear-gradient(#6a93d4,#4b74b6);border-radius:5px 0px 0px 5px;"></div>
<div style="left:1836px;top:942px;width:76px;height:20px;box-sizing:border-box;border:1px solid #151515;background:linear-gradient(#4d4d4d,#3d3d3d);border-radius:0px 5px 5px 0px;"></div>
<div class="t" style="left:1761px;width:76px;text-align:center;top:948.43px;font-size:11.3px;color:#000;">8</div>
<div class="t" style="left:1836px;width:76px;text-align:center;top:948.43px;font-size:11.3px;color:#fff;">16</div>
<div style="left:1678px;top:965px;width:234px;height:19px;box-sizing:border-box;border:1px solid #1e1e1e;background:linear-gradient(#8e8e8e,#7a7a7a);border-radius:9px 9px 9px 9px;"></div>
<div style="left:1889px;top:966px;width:22px;height:17px;background:linear-gradient(#b4b4b4,#a8a8a8);border-radius:0 8px 8px 0;"></div>
<div class="t" style="left:1678px;width:234px;text-align:center;top:970.43px;font-size:11.3px;color:#000;">Compression: 90%</div>
<div style="left:1675px;top:994px;width:240px;height:1px;background:#4e4e4e;"></div>
<div style="left:1675px;top:995px;width:240px;height:1px;background:#9a9a9a;"></div>
<svg style="position:absolute;left:1683px;top:1003px" width="8" height="8"><path d="M0.5 0 L7.5 4.0 L0.5 8Z" fill="#1e1e1e"/></svg>
<div class="t" style="left:1695px;top:1002.08px;font-size:12.9px;color:#000;">Bake</div>
<svg style="position:absolute;left:1898px;top:998px" width="15" height="15"><path d="M0 0 L14 14" stroke="rgba(210,210,210,0.55)" stroke-width="1"/><path d="M4 0 L14 10" stroke="rgba(210,210,210,0.55)" stroke-width="1"/><path d="M8 0 L14 6" stroke="rgba(210,210,210,0.55)" stroke-width="1"/></svg>
<svg style="position:absolute;left:1670px;top:1024px" width="14" height="14"><path d="M0 2 L12 14 M0 6 L8 14 M0 10 L4 14" stroke="#c8c8c8" stroke-width="1" opacity="0.7"/></svg>
</body></html>
